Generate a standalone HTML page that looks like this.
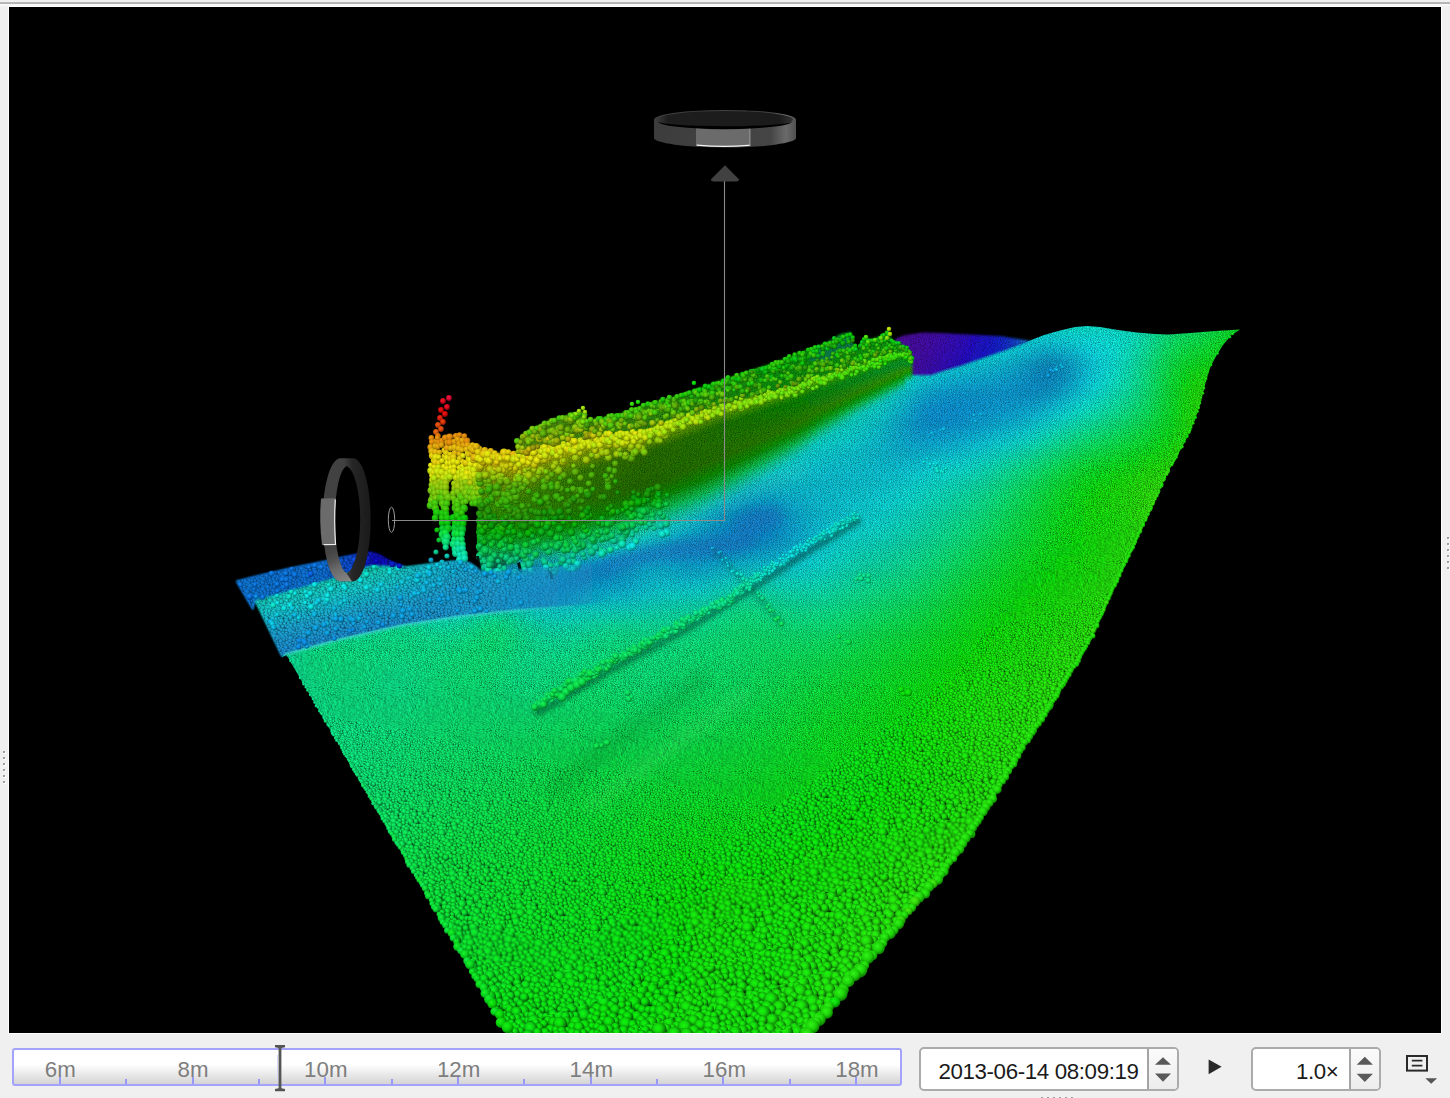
<!DOCTYPE html>
<html lang="en">
<head>
<meta charset="utf-8">
<title>Point cloud viewer</title>
<style>
html,body{margin:0;padding:0;}
body{width:1450px;height:1098px;overflow:hidden;background:#f0f0f0;position:relative;font-family:"Liberation Sans",sans-serif;}
.abs{position:absolute;}
#topline{left:0;top:2px;width:1450px;height:2px;background:linear-gradient(#bcbcbc,#b0b0b0);}
#toplite{left:0;top:4px;width:1450px;height:2px;background:#f8f8f8;}
#frame{left:8px;top:6px;width:1434px;height:1028px;background:#fff;}
#view{left:9px;top:7px;width:1432px;height:1026px;background:#000;overflow:hidden;}
#view svg{display:block;}
.grip i{position:absolute;width:2px;height:2px;background:#a0a0a0;box-shadow:1px 1px 0 #fff;}
#tl{left:12px;top:1048px;width:886px;height:34px;border:2px solid #a3a3fb;border-radius:3px;background:linear-gradient(#fff 0%,#fff 42%,#d4d4d4 100%);}
#tl span{position:absolute;top:7.5px;width:80px;margin-left:-40px;text-align:center;font-size:22.3px;line-height:24px;color:#7e7e7e;}
#tl b{position:absolute;bottom:0;width:2px;background:#9898f6;}
#tl b.M{height:7px;}
#tl b.m{height:5px;}
.spin{background:#fff;border:2px solid #ababab;border-radius:5px;box-sizing:border-box;}
.spin .btn{position:absolute;right:0;top:0;bottom:0;background:linear-gradient(#fbfbfb,#ececec);border-left:2px solid #a4a4a4;border-radius:0 3px 3px 0;}
.spin .txt{position:absolute;top:3px;font-size:22.3px;letter-spacing:-.36px;line-height:40px;color:#1a1a1a;white-space:nowrap;}
</style>
</head>
<body>
<div class="abs" id="topline"></div>
<div class="abs" id="toplite"></div>
<div class="abs" id="frame"></div>
<div class="abs" id="view">
<svg width="1432" height="1026" viewBox="9 7 1432 1026">
<defs>
<clipPath id="cSea"><polygon points="282,657 255,600.5 253,610 236,581 260,575 290,568 327,560.5 345,556.5 360,553.5 371,552.3 380,555 388,560 398,564 406,567 424,565 437,562.8 457.6,560.7 470,563 483,572 520,560 600,500 700,440 800,400 880,365 912,372 931,373 960,364 1000,350 1026,342 1044,335 1060,330.5 1075,327 1087,326 1100,327 1118,330 1137,332.5 1155,334 1168,334.4 1190,333 1215,331 1240,329.5 1231,335.5 1223,345 1215,358 1210,368 1205,385 1201,402 1195,420 1185,442 1168,472 1145,522 1127,560 1109,598 1093,635 1074,667 1049,708 1023,748 998,790 971,834 942,874 903,919 861,970 819,1021 809,1034 508,1034 286.5,655"/></clipPath>
<filter id="fBlur" x="-5%" y="-5%" width="110%" height="110%"><feGaussianBlur stdDeviation="9"/></filter>
<filter id="fBlur2" x="-20%" y="-60%" width="140%" height="220%"><feGaussianBlur stdDeviation="6"/></filter>
<linearGradient id="gB" gradientUnits="userSpaceOnUse" x1="337" y1="577" x2="350" y2="634"><stop offset="0" stop-color="#11d6bf"/><stop offset="0.3" stop-color="#16d5db"/><stop offset="0.65" stop-color="#1bafe0"/><stop offset="1" stop-color="#1b98e0"/></linearGradient>
<linearGradient id="gB2" gradientUnits="userSpaceOnUse" x1="385" y1="0" x2="470" y2="0"><stop offset="0" stop-color="#1ba8e0" stop-opacity="0"/><stop offset="1" stop-color="#1ba8e0" stop-opacity="0.85"/></linearGradient>
<linearGradient id="gBm" gradientUnits="userSpaceOnUse" x1="470" y1="0" x2="610" y2="0"><stop offset="0" stop-color="#fff"/><stop offset="1" stop-color="#000"/></linearGradient>
<mask id="mB" maskUnits="userSpaceOnUse" x="200" y="500" width="500" height="200"><rect x="200" y="500" width="500" height="200" fill="url(#gBm)"/></mask>
<linearGradient id="gA" gradientUnits="userSpaceOnUse" x1="236" y1="0" x2="410" y2="0"><stop offset="0" stop-color="#107ce0"/><stop offset="0.5" stop-color="#1075e0"/><stop offset="0.66" stop-color="#0f4ddb"/><stop offset="0.8" stop-color="#0a0acc"/><stop offset="0.92" stop-color="#0a17cc"/><stop offset="1" stop-color="#0f41d6"/></linearGradient>
<linearGradient id="gA2" gradientUnits="userSpaceOnUse" x1="330" y1="556" x2="336" y2="582"><stop offset="0" stop-color="#1030e0" stop-opacity="0"/><stop offset="1" stop-color="#1030e0" stop-opacity="0"/></linearGradient>
<linearGradient id="gP" gradientUnits="userSpaceOnUse" x1="905" y1="334" x2="985" y2="372"><stop offset="0" stop-color="#5309ad"/><stop offset="0.3" stop-color="#4b09bd"/><stop offset="0.55" stop-color="#3a0dd1"/><stop offset="0.8" stop-color="#2312e0"/><stop offset="1" stop-color="#171ee6"/></linearGradient>
<linearGradient id="gP2" gradientUnits="userSpaceOnUse" x1="985" y1="0" x2="1032" y2="0"><stop offset="0" stop-color="#1616d9" stop-opacity="0"/><stop offset="0.6" stop-color="#1653e0" stop-opacity="0.7"/><stop offset="1" stop-color="#23a8eb" stop-opacity="1"/></linearGradient>
<filter id="fSoft" x="-5%" y="-5%" width="110%" height="110%"><feGaussianBlur stdDeviation="0.8"/></filter>
<linearGradient id="h0" gradientUnits="userSpaceOnUse" x1="482.669" y1="449.801" x2="451.806" y2="572.044"><stop offset="0" stop-color="#dbb507"/><stop offset="0.0816437" stop-color="#d1b406"/><stop offset="0.18143" stop-color="#aaad05"/><stop offset="0.4" stop-color="#46a805"/><stop offset="0.5" stop-color="#35a505"/><stop offset="0.64" stop-color="#0db007"/><stop offset="0.76" stop-color="#0dd14e" stop-opacity="0.92"/><stop offset="0.87" stop-color="#12e095" stop-opacity="0.55"/><stop offset="1" stop-color="#17e6d8" stop-opacity="0"/></linearGradient>
<linearGradient id="h1" gradientUnits="userSpaceOnUse" x1="490.008" y1="452.001" x2="468.171" y2="575.556"><stop offset="0" stop-color="#dbba07"/><stop offset="0.0804427" stop-color="#d1b806"/><stop offset="0.178762" stop-color="#a6ad05"/><stop offset="0.4" stop-color="#45a505"/><stop offset="0.5" stop-color="#34a205"/><stop offset="0.64" stop-color="#0dae07"/><stop offset="0.76" stop-color="#0dd14e" stop-opacity="0.92"/><stop offset="0.87" stop-color="#12e095" stop-opacity="0.55"/><stop offset="1" stop-color="#17e6d8" stop-opacity="0"/></linearGradient>
<linearGradient id="h2" gradientUnits="userSpaceOnUse" x1="497.347" y1="452.648" x2="485.919" y2="577.838"><stop offset="0" stop-color="#dbbf07"/><stop offset="0.0782886" stop-color="#d1bd06"/><stop offset="0.173975" stop-color="#a2ad05"/><stop offset="0.4" stop-color="#44a205"/><stop offset="0.5" stop-color="#339f05"/><stop offset="0.64" stop-color="#0cad07"/><stop offset="0.76" stop-color="#0dd14e" stop-opacity="0.92"/><stop offset="0.87" stop-color="#12e095" stop-opacity="0.55"/><stop offset="1" stop-color="#17e6d8" stop-opacity="0"/></linearGradient>
<linearGradient id="h3" gradientUnits="userSpaceOnUse" x1="504.686" y1="453.296" x2="501.616" y2="578.272"><stop offset="0" stop-color="#dbc307"/><stop offset="0.0760939" stop-color="#d1c106"/><stop offset="0.169098" stop-color="#9fad05"/><stop offset="0.388924" stop-color="#429f05"/><stop offset="0.5" stop-color="#329d05"/><stop offset="0.64" stop-color="#0cab07"/><stop offset="0.76" stop-color="#0dd14e" stop-opacity="0.92"/><stop offset="0.87" stop-color="#12e095" stop-opacity="0.55"/><stop offset="1" stop-color="#17e6d8" stop-opacity="0"/></linearGradient>
<linearGradient id="h4" gradientUnits="userSpaceOnUse" x1="512.025" y1="453.943" x2="516.49" y2="577.653"><stop offset="0" stop-color="#dbc807"/><stop offset="0.0738573" stop-color="#d1c506"/><stop offset="0.164127" stop-color="#9bad05"/><stop offset="0.377493" stop-color="#419c05"/><stop offset="0.5" stop-color="#319a05"/><stop offset="0.64" stop-color="#0caa07"/><stop offset="0.76" stop-color="#0dd14e" stop-opacity="0.92"/><stop offset="0.87" stop-color="#12e095" stop-opacity="0.55"/><stop offset="1" stop-color="#17e6d8" stop-opacity="0"/></linearGradient>
<linearGradient id="h5" gradientUnits="userSpaceOnUse" x1="519.364" y1="454.591" x2="528.649" y2="576.573"><stop offset="0" stop-color="#dbcd07"/><stop offset="0.0715776" stop-color="#d1ca06"/><stop offset="0.159061" stop-color="#97ad05"/><stop offset="0.365841" stop-color="#409905"/><stop offset="0.5" stop-color="#309705"/><stop offset="0.64" stop-color="#0ca807"/><stop offset="0.76" stop-color="#0dd14e" stop-opacity="0.92"/><stop offset="0.87" stop-color="#12e095" stop-opacity="0.55"/><stop offset="1" stop-color="#17e6d8" stop-opacity="0"/></linearGradient>
<linearGradient id="h6" gradientUnits="userSpaceOnUse" x1="526.703" y1="453.97" x2="537.523" y2="575.85"><stop offset="0" stop-color="#dbcf07"/><stop offset="0.0685022" stop-color="#d1cc06"/><stop offset="0.152227" stop-color="#96ad05"/><stop offset="0.350122" stop-color="#3f9705"/><stop offset="0.5" stop-color="#309504"/><stop offset="0.64" stop-color="#0ca707"/><stop offset="0.76" stop-color="#0dd14e" stop-opacity="0.92"/><stop offset="0.87" stop-color="#12e095" stop-opacity="0.55"/><stop offset="1" stop-color="#17e6d8" stop-opacity="0"/></linearGradient>
<linearGradient id="h7" gradientUnits="userSpaceOnUse" x1="534.042" y1="451.174" x2="546.368" y2="575.121"><stop offset="0" stop-color="#dbd107"/><stop offset="0.0642942" stop-color="#d1ce06"/><stop offset="0.142876" stop-color="#94ad05"/><stop offset="0.328615" stop-color="#3e9504"/><stop offset="0.5" stop-color="#2f9304"/><stop offset="0.64" stop-color="#0ca707"/><stop offset="0.76" stop-color="#0dd14e" stop-opacity="0.92"/><stop offset="0.87" stop-color="#12e095" stop-opacity="0.55"/><stop offset="1" stop-color="#17e6d8" stop-opacity="0"/></linearGradient>
<linearGradient id="h8" gradientUnits="userSpaceOnUse" x1="541.381" y1="448.379" x2="557.112" y2="573.913"><stop offset="0" stop-color="#dbd307"/><stop offset="0.0602402" stop-color="#d1d006"/><stop offset="0.133867" stop-color="#92ad05"/><stop offset="0.307894" stop-color="#3e9404"/><stop offset="0.5" stop-color="#2f9104"/><stop offset="0.64" stop-color="#0ca607"/><stop offset="0.76" stop-color="#0dd14e" stop-opacity="0.92"/><stop offset="0.87" stop-color="#12e095" stop-opacity="0.55"/><stop offset="1" stop-color="#17e6d8" stop-opacity="0"/></linearGradient>
<linearGradient id="h9" gradientUnits="userSpaceOnUse" x1="548.72" y1="446.752" x2="570.03" y2="571.789"><stop offset="0" stop-color="#dbd507"/><stop offset="0.0568437" stop-color="#d1d106"/><stop offset="0.126319" stop-color="#91ad05"/><stop offset="0.290534" stop-color="#3d9204"/><stop offset="0.5" stop-color="#2e8f04"/><stop offset="0.64" stop-color="#0ca507"/><stop offset="0.76" stop-color="#0dd14e" stop-opacity="0.92"/><stop offset="0.87" stop-color="#12e095" stop-opacity="0.55"/><stop offset="1" stop-color="#17e6d8" stop-opacity="0"/></linearGradient>
<linearGradient id="h10" gradientUnits="userSpaceOnUse" x1="556.059" y1="446.263" x2="578.821" y2="570.797"><stop offset="0" stop-color="#dbd707"/><stop offset="0.0539809" stop-color="#cfd106"/><stop offset="0.119958" stop-color="#8fad05"/><stop offset="0.275902" stop-color="#3c9004"/><stop offset="0.5" stop-color="#2d8d04"/><stop offset="0.64" stop-color="#0ca407"/><stop offset="0.76" stop-color="#0dd14e" stop-opacity="0.92"/><stop offset="0.87" stop-color="#12e095" stop-opacity="0.55"/><stop offset="1" stop-color="#17e6d8" stop-opacity="0"/></linearGradient>
<linearGradient id="h11" gradientUnits="userSpaceOnUse" x1="563.398" y1="445.176" x2="587.554" y2="569.812"><stop offset="0" stop-color="#dbd907"/><stop offset="0.051458" stop-color="#cdd106"/><stop offset="0.114351" stop-color="#8ead05"/><stop offset="0.263008" stop-color="#3b8e04"/><stop offset="0.5" stop-color="#2d8b04"/><stop offset="0.64" stop-color="#0ca307"/><stop offset="0.76" stop-color="#0dd14e" stop-opacity="0.92"/><stop offset="0.87" stop-color="#12e095" stop-opacity="0.55"/><stop offset="1" stop-color="#17e6d8" stop-opacity="0"/></linearGradient>
<linearGradient id="h12" gradientUnits="userSpaceOnUse" x1="570.737" y1="443.397" x2="596.038" y2="567.202"><stop offset="0" stop-color="#dbdb07"/><stop offset="0.049994" stop-color="#cbd106"/><stop offset="0.111098" stop-color="#8cad05"/><stop offset="0.255525" stop-color="#3b8c04"/><stop offset="0.5" stop-color="#2c8a04"/><stop offset="0.64" stop-color="#0ca206"/><stop offset="0.76" stop-color="#0dd14e" stop-opacity="0.92"/><stop offset="0.87" stop-color="#12e095" stop-opacity="0.55"/><stop offset="1" stop-color="#17e6d8" stop-opacity="0"/></linearGradient>
<linearGradient id="h13" gradientUnits="userSpaceOnUse" x1="578.076" y1="441.618" x2="606.178" y2="563.3"><stop offset="0" stop-color="#dadb07"/><stop offset="0.0486973" stop-color="#c9d106"/><stop offset="0.108216" stop-color="#8bad05"/><stop offset="0.248897" stop-color="#3a8a04"/><stop offset="0.5" stop-color="#2c8804"/><stop offset="0.64" stop-color="#0ca106"/><stop offset="0.76" stop-color="#0dd14e" stop-opacity="0.92"/><stop offset="0.87" stop-color="#12e095" stop-opacity="0.55"/><stop offset="1" stop-color="#17e6d8" stop-opacity="0"/></linearGradient>
<linearGradient id="h14" gradientUnits="userSpaceOnUse" x1="585.415" y1="439.839" x2="616.495" y2="559.107"><stop offset="0" stop-color="#d8db07"/><stop offset="0.0473843" stop-color="#c7d106"/><stop offset="0.105298" stop-color="#89ad05"/><stop offset="0.242186" stop-color="#398804"/><stop offset="0.5" stop-color="#2b8604"/><stop offset="0.64" stop-color="#0ca006"/><stop offset="0.76" stop-color="#0dd14e" stop-opacity="0.92"/><stop offset="0.87" stop-color="#12e095" stop-opacity="0.55"/><stop offset="1" stop-color="#17e6d8" stop-opacity="0"/></linearGradient>
<linearGradient id="h15" gradientUnits="userSpaceOnUse" x1="592.754" y1="438.06" x2="625.059" y2="555.756"><stop offset="0" stop-color="#d6db07"/><stop offset="0.0460545" stop-color="#c5d106"/><stop offset="0.102343" stop-color="#88ad05"/><stop offset="0.23539" stop-color="#388604"/><stop offset="0.5" stop-color="#2a8404"/><stop offset="0.64" stop-color="#0b9f06"/><stop offset="0.76" stop-color="#0dd14e" stop-opacity="0.92"/><stop offset="0.87" stop-color="#12e095" stop-opacity="0.55"/><stop offset="1" stop-color="#17e6d8" stop-opacity="0"/></linearGradient>
<linearGradient id="h16" gradientUnits="userSpaceOnUse" x1="600.093" y1="437.007" x2="632.071" y2="553.241"><stop offset="0" stop-color="#d4db07"/><stop offset="0.0449676" stop-color="#c4d106"/><stop offset="0.0999279" stop-color="#86ad05"/><stop offset="0.229834" stop-color="#378504"/><stop offset="0.5" stop-color="#2a8204"/><stop offset="0.64" stop-color="#0b9e06"/><stop offset="0.76" stop-color="#0dd14e" stop-opacity="0.92"/><stop offset="0.87" stop-color="#12e095" stop-opacity="0.55"/><stop offset="1" stop-color="#17e6d8" stop-opacity="0"/></linearGradient>
<linearGradient id="h17" gradientUnits="userSpaceOnUse" x1="607.432" y1="435.979" x2="639.062" y2="550.685"><stop offset="0" stop-color="#d2db07"/><stop offset="0.0438796" stop-color="#c1d106"/><stop offset="0.0975103" stop-color="#84ad05"/><stop offset="0.224274" stop-color="#378304"/><stop offset="0.5" stop-color="#298004"/><stop offset="0.64" stop-color="#0b9d06"/><stop offset="0.76" stop-color="#0dd14e" stop-opacity="0.92"/><stop offset="0.87" stop-color="#12e095" stop-opacity="0.55"/><stop offset="1" stop-color="#17e6d8" stop-opacity="0"/></linearGradient>
<linearGradient id="h18" gradientUnits="userSpaceOnUse" x1="614.771" y1="434.952" x2="645.855" y2="547.417"><stop offset="0" stop-color="#cfdb07"/><stop offset="0.0430342" stop-color="#bfd106"/><stop offset="0.0956315" stop-color="#82ad05"/><stop offset="0.219953" stop-color="#368104"/><stop offset="0.5" stop-color="#297e04"/><stop offset="0.64" stop-color="#0b9c06"/><stop offset="0.76" stop-color="#0dd14e" stop-opacity="0.92"/><stop offset="0.87" stop-color="#12e095" stop-opacity="0.55"/><stop offset="1" stop-color="#17e6d8" stop-opacity="0"/></linearGradient>
<linearGradient id="h19" gradientUnits="userSpaceOnUse" x1="622.11" y1="433.925" x2="653.444" y2="543.663"><stop offset="0" stop-color="#ccdb07"/><stop offset="0.0421549" stop-color="#bcd106"/><stop offset="0.0936776" stop-color="#80ad05"/><stop offset="0.215459" stop-color="#357f04"/><stop offset="0.5" stop-color="#287c04"/><stop offset="0.64" stop-color="#0b9b06"/><stop offset="0.76" stop-color="#0dd14e" stop-opacity="0.92"/><stop offset="0.87" stop-color="#12e095" stop-opacity="0.55"/><stop offset="1" stop-color="#17e6d8" stop-opacity="0"/></linearGradient>
<linearGradient id="h20" gradientUnits="userSpaceOnUse" x1="629.449" y1="432.897" x2="661.583" y2="539.527"><stop offset="0" stop-color="#cadb07"/><stop offset="0.0412398" stop-color="#bad106"/><stop offset="0.0916441" stop-color="#7ead05"/><stop offset="0.210781" stop-color="#327d04"/><stop offset="0.5" stop-color="#277b04"/><stop offset="0.64" stop-color="#0b9a06"/><stop offset="0.76" stop-color="#0dd14e" stop-opacity="0.92"/><stop offset="0.87" stop-color="#12e095" stop-opacity="0.55"/><stop offset="1" stop-color="#17e6d8" stop-opacity="0"/></linearGradient>
<linearGradient id="h21" gradientUnits="userSpaceOnUse" x1="636.788" y1="431.87" x2="669.173" y2="535.712"><stop offset="0" stop-color="#c7db07"/><stop offset="0.0402866" stop-color="#b7d106"/><stop offset="0.0895258" stop-color="#7cad05"/><stop offset="0.205909" stop-color="#307b04"/><stop offset="0.5" stop-color="#277904"/><stop offset="0.64" stop-color="#0b9906"/><stop offset="0.76" stop-color="#0dd14e" stop-opacity="0.92"/><stop offset="0.87" stop-color="#12e095" stop-opacity="0.55"/><stop offset="1" stop-color="#17e6d8" stop-opacity="0"/></linearGradient>
<linearGradient id="h22" gradientUnits="userSpaceOnUse" x1="644.127" y1="430.658" x2="676.548" y2="532.119"><stop offset="0" stop-color="#c5db07"/><stop offset="0.0398799" stop-color="#b5d106"/><stop offset="0.088622" stop-color="#7aad05"/><stop offset="0.203831" stop-color="#2f7b04"/><stop offset="0.5" stop-color="#277804"/><stop offset="0.64" stop-color="#0b9906"/><stop offset="0.76" stop-color="#0dd14e" stop-opacity="0.92"/><stop offset="0.87" stop-color="#12e095" stop-opacity="0.55"/><stop offset="1" stop-color="#17e6d8" stop-opacity="0"/></linearGradient>
<linearGradient id="h23" gradientUnits="userSpaceOnUse" x1="651.466" y1="428.435" x2="684.307" y2="528.758"><stop offset="0" stop-color="#c2db07"/><stop offset="0.0394973" stop-color="#b2d106"/><stop offset="0.0877718" stop-color="#78ad05"/><stop offset="0.201875" stop-color="#2d7c04"/><stop offset="0.5" stop-color="#277904"/><stop offset="0.64" stop-color="#0b9a06"/><stop offset="0.76" stop-color="#0dd14e" stop-opacity="0.92"/><stop offset="0.87" stop-color="#12e095" stop-opacity="0.55"/><stop offset="1" stop-color="#17e6d8" stop-opacity="0"/></linearGradient>
<linearGradient id="h24" gradientUnits="userSpaceOnUse" x1="658.805" y1="426.211" x2="692.213" y2="525.272"><stop offset="0" stop-color="#bfdb07"/><stop offset="0.0391095" stop-color="#b0d106"/><stop offset="0.08691" stop-color="#76ad05"/><stop offset="0.199893" stop-color="#2c7d04"/><stop offset="0.5" stop-color="#277a04"/><stop offset="0.64" stop-color="#0b9a06"/><stop offset="0.76" stop-color="#0dd14e" stop-opacity="0.92"/><stop offset="0.87" stop-color="#12e095" stop-opacity="0.55"/><stop offset="1" stop-color="#17e6d8" stop-opacity="0"/></linearGradient>
<linearGradient id="h25" gradientUnits="userSpaceOnUse" x1="666.144" y1="423.987" x2="700.094" y2="521.784"><stop offset="0" stop-color="#bddb07"/><stop offset="0.0387164" stop-color="#add106"/><stop offset="0.0860365" stop-color="#74ad05"/><stop offset="0.197884" stop-color="#2b7e04"/><stop offset="0.5" stop-color="#287b04"/><stop offset="0.64" stop-color="#0b9b06"/><stop offset="0.76" stop-color="#0dd14e" stop-opacity="0.92"/><stop offset="0.87" stop-color="#12e095" stop-opacity="0.55"/><stop offset="1" stop-color="#17e6d8" stop-opacity="0"/></linearGradient>
<linearGradient id="h26" gradientUnits="userSpaceOnUse" x1="673.483" y1="421.763" x2="707.518" y2="518.643"><stop offset="0" stop-color="#badb07"/><stop offset="0.038318" stop-color="#abd106"/><stop offset="0.085151" stop-color="#72ad05"/><stop offset="0.195847" stop-color="#2a7f04"/><stop offset="0.5" stop-color="#287c04"/><stop offset="0.64" stop-color="#0b9b06"/><stop offset="0.76" stop-color="#0dd14e" stop-opacity="0.92"/><stop offset="0.87" stop-color="#12e095" stop-opacity="0.55"/><stop offset="1" stop-color="#17e6d8" stop-opacity="0"/></linearGradient>
<linearGradient id="h27" gradientUnits="userSpaceOnUse" x1="680.822" y1="419.393" x2="715.415" y2="515.13"><stop offset="0" stop-color="#b8db07"/><stop offset="0.0378628" stop-color="#a8d106"/><stop offset="0.0841396" stop-color="#6fad05"/><stop offset="0.193521" stop-color="#298004"/><stop offset="0.5" stop-color="#287d04"/><stop offset="0.64" stop-color="#0b9c06"/><stop offset="0.76" stop-color="#0dd14e" stop-opacity="0.92"/><stop offset="0.87" stop-color="#12e095" stop-opacity="0.55"/><stop offset="1" stop-color="#17e6d8" stop-opacity="0"/></linearGradient>
<linearGradient id="h28" gradientUnits="userSpaceOnUse" x1="688.161" y1="416.946" x2="723.46" y2="511.479"><stop offset="0" stop-color="#b5db07"/><stop offset="0.0373761" stop-color="#a6d106"/><stop offset="0.0830581" stop-color="#6dad05"/><stop offset="0.191034" stop-color="#288104"/><stop offset="0.5" stop-color="#287e04"/><stop offset="0.64" stop-color="#0b9c06"/><stop offset="0.76" stop-color="#0dd14e" stop-opacity="0.92"/><stop offset="0.87" stop-color="#12e095" stop-opacity="0.55"/><stop offset="1" stop-color="#17e6d8" stop-opacity="0"/></linearGradient>
<linearGradient id="h29" gradientUnits="userSpaceOnUse" x1="695.5" y1="414.5" x2="731.473" y2="507.824"><stop offset="0" stop-color="#b2db07"/><stop offset="0.0368847" stop-color="#a3d106"/><stop offset="0.0819659" stop-color="#6bad05"/><stop offset="0.188522" stop-color="#268104"/><stop offset="0.5" stop-color="#297f04"/><stop offset="0.64" stop-color="#0b9d06"/><stop offset="0.76" stop-color="#0dd14e" stop-opacity="0.92"/><stop offset="0.87" stop-color="#12e095" stop-opacity="0.55"/><stop offset="1" stop-color="#17e6d8" stop-opacity="0"/></linearGradient>
<linearGradient id="h30" gradientUnits="userSpaceOnUse" x1="702.839" y1="412.054" x2="739.284" y2="503.874"><stop offset="0" stop-color="#afdb07"/><stop offset="0.0365187" stop-color="#a0d106"/><stop offset="0.0811526" stop-color="#69ad05"/><stop offset="0.186651" stop-color="#258204"/><stop offset="0.5" stop-color="#298004"/><stop offset="0.64" stop-color="#0b9d06"/><stop offset="0.76" stop-color="#0dd14e" stop-opacity="0.92"/><stop offset="0.87" stop-color="#12e095" stop-opacity="0.55"/><stop offset="1" stop-color="#17e6d8" stop-opacity="0"/></linearGradient>
<linearGradient id="h31" gradientUnits="userSpaceOnUse" x1="710.178" y1="409.607" x2="746.856" y2="499.405"><stop offset="0" stop-color="#abdb07"/><stop offset="0.0363545" stop-color="#9cd106"/><stop offset="0.0807877" stop-color="#66ad05"/><stop offset="0.185812" stop-color="#228304"/><stop offset="0.5" stop-color="#298104"/><stop offset="0.64" stop-color="#0b9d06"/><stop offset="0.76" stop-color="#0dd14e" stop-opacity="0.92"/><stop offset="0.87" stop-color="#12e095" stop-opacity="0.55"/><stop offset="1" stop-color="#17e6d8" stop-opacity="0"/></linearGradient>
<linearGradient id="h32" gradientUnits="userSpaceOnUse" x1="717.517" y1="407.161" x2="754.387" y2="494.948"><stop offset="0" stop-color="#a7db07"/><stop offset="0.0361855" stop-color="#98d106"/><stop offset="0.0804122" stop-color="#62ad05"/><stop offset="0.184948" stop-color="#208404"/><stop offset="0.5" stop-color="#2a8204"/><stop offset="0.64" stop-color="#0b9e06"/><stop offset="0.76" stop-color="#0dd14e" stop-opacity="0.92"/><stop offset="0.87" stop-color="#12e095" stop-opacity="0.55"/><stop offset="1" stop-color="#17e6d8" stop-opacity="0"/></linearGradient>
<linearGradient id="h33" gradientUnits="userSpaceOnUse" x1="724.856" y1="404.775" x2="761.855" y2="490.514"><stop offset="0" stop-color="#a3db07"/><stop offset="0.0360327" stop-color="#94d106"/><stop offset="0.0800727" stop-color="#5fad05"/><stop offset="0.184167" stop-color="#1e8504"/><stop offset="0.5" stop-color="#2a8304"/><stop offset="0.64" stop-color="#0b9e06"/><stop offset="0.76" stop-color="#0dd14e" stop-opacity="0.92"/><stop offset="0.87" stop-color="#12e095" stop-opacity="0.55"/><stop offset="1" stop-color="#17e6d8" stop-opacity="0"/></linearGradient>
<linearGradient id="h34" gradientUnits="userSpaceOnUse" x1="732.195" y1="402.843" x2="768.322" y2="486.196"><stop offset="0" stop-color="#9edb07"/><stop offset="0.0362834" stop-color="#90d106"/><stop offset="0.0806297" stop-color="#5cad05"/><stop offset="0.185448" stop-color="#1c8604"/><stop offset="0.5" stop-color="#2a8404"/><stop offset="0.64" stop-color="#0b9f06"/><stop offset="0.76" stop-color="#0dd14e" stop-opacity="0.92"/><stop offset="0.87" stop-color="#12e095" stop-opacity="0.55"/><stop offset="1" stop-color="#17e6d8" stop-opacity="0"/></linearGradient>
<linearGradient id="h35" gradientUnits="userSpaceOnUse" x1="739.534" y1="400.912" x2="774.767" y2="481.885"><stop offset="0" stop-color="#9adb07"/><stop offset="0.0365532" stop-color="#8cd106"/><stop offset="0.0812292" stop-color="#58ad05"/><stop offset="0.186827" stop-color="#198704"/><stop offset="0.5" stop-color="#2b8504"/><stop offset="0.64" stop-color="#0b9f06"/><stop offset="0.76" stop-color="#0dd14e" stop-opacity="0.92"/><stop offset="0.87" stop-color="#12e095" stop-opacity="0.55"/><stop offset="1" stop-color="#17e6d8" stop-opacity="0"/></linearGradient>
<linearGradient id="h36" gradientUnits="userSpaceOnUse" x1="746.873" y1="398.981" x2="781.207" y2="477.58"><stop offset="0" stop-color="#96db07"/><stop offset="0.0368385" stop-color="#88d106"/><stop offset="0.0818634" stop-color="#55ad05"/><stop offset="0.188286" stop-color="#178804"/><stop offset="0.5" stop-color="#2b8504"/><stop offset="0.64" stop-color="#0ca006"/><stop offset="0.76" stop-color="#0dd14e" stop-opacity="0.92"/><stop offset="0.87" stop-color="#12e095" stop-opacity="0.55"/><stop offset="1" stop-color="#17e6d8" stop-opacity="0"/></linearGradient>
<linearGradient id="h37" gradientUnits="userSpaceOnUse" x1="754.212" y1="397.05" x2="787.626" y2="473.295"><stop offset="0" stop-color="#92db07"/><stop offset="0.0371409" stop-color="#84d106"/><stop offset="0.0825353" stop-color="#52ad05"/><stop offset="0.189831" stop-color="#148904"/><stop offset="0.5" stop-color="#2b8604"/><stop offset="0.64" stop-color="#0ca006"/><stop offset="0.76" stop-color="#0dd14e" stop-opacity="0.92"/><stop offset="0.87" stop-color="#12e095" stop-opacity="0.55"/><stop offset="1" stop-color="#17e6d8" stop-opacity="0"/></linearGradient>
<linearGradient id="h38" gradientUnits="userSpaceOnUse" x1="761.551" y1="395.118" x2="793.97" y2="469.093"><stop offset="0" stop-color="#8edb07"/><stop offset="0.0374618" stop-color="#80d106"/><stop offset="0.0832485" stop-color="#4fad05"/><stop offset="0.191472" stop-color="#128a04"/><stop offset="0.5" stop-color="#2c8804"/><stop offset="0.64" stop-color="#0ca106"/><stop offset="0.76" stop-color="#0dd14e" stop-opacity="0.92"/><stop offset="0.87" stop-color="#12e095" stop-opacity="0.55"/><stop offset="1" stop-color="#17e6d8" stop-opacity="0"/></linearGradient>
<linearGradient id="h39" gradientUnits="userSpaceOnUse" x1="768.89" y1="393.187" x2="800.314" y2="464.891"><stop offset="0" stop-color="#8adb07"/><stop offset="0.0378031" stop-color="#7dd106"/><stop offset="0.0840069" stop-color="#4bad05"/><stop offset="0.193216" stop-color="#0f8c04"/><stop offset="0.5" stop-color="#2c8904"/><stop offset="0.64" stop-color="#0ca206"/><stop offset="0.76" stop-color="#0dd14e" stop-opacity="0.92"/><stop offset="0.87" stop-color="#12e095" stop-opacity="0.55"/><stop offset="1" stop-color="#17e6d8" stop-opacity="0"/></linearGradient>
<linearGradient id="h40" gradientUnits="userSpaceOnUse" x1="776.229" y1="391.256" x2="806.756" y2="460.581"><stop offset="0" stop-color="#86db07"/><stop offset="0.0381667" stop-color="#79d106"/><stop offset="0.0848149" stop-color="#48ad05"/><stop offset="0.195074" stop-color="#0d8e04"/><stop offset="0.5" stop-color="#2d8b04"/><stop offset="0.64" stop-color="#0ca307"/><stop offset="0.76" stop-color="#0dd14e" stop-opacity="0.92"/><stop offset="0.87" stop-color="#12e095" stop-opacity="0.55"/><stop offset="1" stop-color="#17e6d8" stop-opacity="0"/></linearGradient>
<linearGradient id="h41" gradientUnits="userSpaceOnUse" x1="783.568" y1="389.324" x2="813.656" y2="455.758"><stop offset="0" stop-color="#81db07"/><stop offset="0.0385549" stop-color="#75d106"/><stop offset="0.0856775" stop-color="#45ad05"/><stop offset="0.197058" stop-color="#0a8f04"/><stop offset="0.5" stop-color="#2d8d04"/><stop offset="0.64" stop-color="#0ca307"/><stop offset="0.76" stop-color="#0dd14e" stop-opacity="0.92"/><stop offset="0.87" stop-color="#12e095" stop-opacity="0.55"/><stop offset="1" stop-color="#17e6d8" stop-opacity="0"/></linearGradient>
<linearGradient id="h42" gradientUnits="userSpaceOnUse" x1="790.907" y1="387.393" x2="820.501" y2="450.972"><stop offset="0" stop-color="#7ddb07"/><stop offset="0.0389702" stop-color="#71d106"/><stop offset="0.0866005" stop-color="#41ad05"/><stop offset="0.199181" stop-color="#089104"/><stop offset="0.5" stop-color="#2e8e04"/><stop offset="0.64" stop-color="#0ca407"/><stop offset="0.76" stop-color="#0dd14e" stop-opacity="0.92"/><stop offset="0.87" stop-color="#12e095" stop-opacity="0.55"/><stop offset="1" stop-color="#17e6d8" stop-opacity="0"/></linearGradient>
<linearGradient id="h43" gradientUnits="userSpaceOnUse" x1="798.246" y1="385.462" x2="827.14" y2="446.411"><stop offset="0" stop-color="#79db07"/><stop offset="0.0394157" stop-color="#6dd106"/><stop offset="0.0875905" stop-color="#3ead05"/><stop offset="0.201458" stop-color="#059304"/><stop offset="0.5" stop-color="#2e9004"/><stop offset="0.64" stop-color="#0ca507"/><stop offset="0.76" stop-color="#0dd14e" stop-opacity="0.92"/><stop offset="0.87" stop-color="#12e095" stop-opacity="0.55"/><stop offset="1" stop-color="#17e6d8" stop-opacity="0"/></linearGradient>
<linearGradient id="h44" gradientUnits="userSpaceOnUse" x1="805.585" y1="382.872" x2="833.367" y2="441.517"><stop offset="0" stop-color="#75db07"/><stop offset="0.0401098" stop-color="#69d106"/><stop offset="0.0891328" stop-color="#3bad05"/><stop offset="0.205006" stop-color="#049407"/><stop offset="0.5" stop-color="#2f9204"/><stop offset="0.64" stop-color="#0ca607"/><stop offset="0.76" stop-color="#0dd14e" stop-opacity="0.92"/><stop offset="0.87" stop-color="#12e095" stop-opacity="0.55"/><stop offset="1" stop-color="#17e6d8" stop-opacity="0"/></linearGradient>
<linearGradient id="h45" gradientUnits="userSpaceOnUse" x1="812.924" y1="380.077" x2="839.578" y2="436.382"><stop offset="0" stop-color="#71db07"/><stop offset="0.040932" stop-color="#65d106"/><stop offset="0.09096" stop-color="#37ad05"/><stop offset="0.209208" stop-color="#05960a"/><stop offset="0.5" stop-color="#2f9404"/><stop offset="0.64" stop-color="#0ca707"/><stop offset="0.76" stop-color="#0dd14e" stop-opacity="0.92"/><stop offset="0.87" stop-color="#12e095" stop-opacity="0.55"/><stop offset="1" stop-color="#17e6d8" stop-opacity="0"/></linearGradient>
<linearGradient id="h46" gradientUnits="userSpaceOnUse" x1="820.263" y1="377.281" x2="845.79" y2="431.245"><stop offset="0" stop-color="#6ddb07"/><stop offset="0.041826" stop-color="#61d106"/><stop offset="0.0929467" stop-color="#34ad05"/><stop offset="0.213777" stop-color="#05980d"/><stop offset="0.5" stop-color="#309504"/><stop offset="0.64" stop-color="#0ca807"/><stop offset="0.76" stop-color="#0dd14e" stop-opacity="0.92"/><stop offset="0.87" stop-color="#12e095" stop-opacity="0.55"/><stop offset="1" stop-color="#17e6d8" stop-opacity="0"/></linearGradient>
<linearGradient id="h47" gradientUnits="userSpaceOnUse" x1="827.602" y1="374.969" x2="851.931" y2="426.927"><stop offset="0" stop-color="#68db07"/><stop offset="0.0426709" stop-color="#5dd106"/><stop offset="0.0948243" stop-color="#31ad05"/><stop offset="0.218096" stop-color="#059a10"/><stop offset="0.5" stop-color="#309705"/><stop offset="0.64" stop-color="#0ca907"/><stop offset="0.76" stop-color="#0dd14e" stop-opacity="0.92"/><stop offset="0.87" stop-color="#12e095" stop-opacity="0.55"/><stop offset="1" stop-color="#17e6d8" stop-opacity="0"/></linearGradient>
<linearGradient id="h48" gradientUnits="userSpaceOnUse" x1="834.941" y1="372.711" x2="857.827" y2="422.971"><stop offset="0" stop-color="#64db07"/><stop offset="0.0435753" stop-color="#59d106"/><stop offset="0.0968339" stop-color="#2ead05"/><stop offset="0.222718" stop-color="#059b13"/><stop offset="0.5" stop-color="#319905"/><stop offset="0.64" stop-color="#0ca907"/><stop offset="0.76" stop-color="#0dd14e" stop-opacity="0.92"/><stop offset="0.87" stop-color="#12e095" stop-opacity="0.55"/><stop offset="1" stop-color="#17e6d8" stop-opacity="0"/></linearGradient>
<linearGradient id="h49" gradientUnits="userSpaceOnUse" x1="842.28" y1="370.452" x2="863.551" y2="419.18"><stop offset="0" stop-color="#60db07"/><stop offset="0.0445628" stop-color="#55d106"/><stop offset="0.0990284" stop-color="#2aad05"/><stop offset="0.227765" stop-color="#059d16"/><stop offset="0.5" stop-color="#329a05"/><stop offset="0.64" stop-color="#0caa07"/><stop offset="0.76" stop-color="#0dd14e" stop-opacity="0.92"/><stop offset="0.87" stop-color="#12e095" stop-opacity="0.55"/><stop offset="1" stop-color="#17e6d8" stop-opacity="0"/></linearGradient>
<linearGradient id="h50" gradientUnits="userSpaceOnUse" x1="849.619" y1="368.194" x2="869.511" y2="415.105"><stop offset="0" stop-color="#5cdb07"/><stop offset="0.0456455" stop-color="#51d106"/><stop offset="0.101434" stop-color="#27ad05"/><stop offset="0.233299" stop-color="#059f19"/><stop offset="0.5" stop-color="#329c05"/><stop offset="0.64" stop-color="#0cab07"/><stop offset="0.76" stop-color="#0dd14e" stop-opacity="0.92"/><stop offset="0.87" stop-color="#12e095" stop-opacity="0.55"/><stop offset="1" stop-color="#17e6d8" stop-opacity="0"/></linearGradient>
<linearGradient id="h51" gradientUnits="userSpaceOnUse" x1="856.958" y1="365.936" x2="875.705" y2="410.776"><stop offset="0" stop-color="#58db07"/><stop offset="0.0468379" stop-color="#4dd106"/><stop offset="0.104084" stop-color="#24ad05"/><stop offset="0.239394" stop-color="#05a01c"/><stop offset="0.5" stop-color="#339e05"/><stop offset="0.64" stop-color="#0cac07"/><stop offset="0.76" stop-color="#0dd14e" stop-opacity="0.92"/><stop offset="0.87" stop-color="#12e095" stop-opacity="0.55"/><stop offset="1" stop-color="#17e6d8" stop-opacity="0"/></linearGradient>
<linearGradient id="h52" gradientUnits="userSpaceOnUse" x1="864.297" y1="363.601" x2="882.092" y2="406.779"><stop offset="0" stop-color="#54db07"/><stop offset="0.0476788" stop-color="#49d106"/><stop offset="0.105953" stop-color="#20ad05"/><stop offset="0.243692" stop-color="#05a220"/><stop offset="0.5" stop-color="#33a005"/><stop offset="0.64" stop-color="#0cad07"/><stop offset="0.76" stop-color="#0dd14e" stop-opacity="0.92"/><stop offset="0.87" stop-color="#12e095" stop-opacity="0.55"/><stop offset="1" stop-color="#17e6d8" stop-opacity="0"/></linearGradient>
<linearGradient id="h53" gradientUnits="userSpaceOnUse" x1="871.636" y1="361.212" x2="888.616" y2="403.016"><stop offset="0" stop-color="#4fdb07"/><stop offset="0.0482402" stop-color="#45d106"/><stop offset="0.107201" stop-color="#1dad05"/><stop offset="0.246561" stop-color="#05a423"/><stop offset="0.5" stop-color="#34a105"/><stop offset="0.64" stop-color="#0dae07"/><stop offset="0.76" stop-color="#0dd14e" stop-opacity="0.92"/><stop offset="0.87" stop-color="#12e095" stop-opacity="0.55"/><stop offset="1" stop-color="#17e6d8" stop-opacity="0"/></linearGradient>
<linearGradient id="h54" gradientUnits="userSpaceOnUse" x1="878.975" y1="358.822" x2="895.147" y2="399.242"><stop offset="0" stop-color="#4bdb07"/><stop offset="0.048845" stop-color="#41d106"/><stop offset="0.108544" stop-color="#1aad05"/><stop offset="0.249652" stop-color="#05a627"/><stop offset="0.5" stop-color="#34a305"/><stop offset="0.64" stop-color="#0daf07"/><stop offset="0.76" stop-color="#0dd14e" stop-opacity="0.92"/><stop offset="0.87" stop-color="#12e095" stop-opacity="0.55"/><stop offset="1" stop-color="#17e6d8" stop-opacity="0"/></linearGradient>
<linearGradient id="h55" gradientUnits="userSpaceOnUse" x1="886.314" y1="356.433" x2="901.696" y2="395.448"><stop offset="0" stop-color="#47db07"/><stop offset="0.0494984" stop-color="#3dd106"/><stop offset="0.109996" stop-color="#17ad05"/><stop offset="0.252992" stop-color="#05a72a"/><stop offset="0.5" stop-color="#35a505"/><stop offset="0.64" stop-color="#0daf07"/><stop offset="0.76" stop-color="#0dd14e" stop-opacity="0.92"/><stop offset="0.87" stop-color="#12e095" stop-opacity="0.55"/><stop offset="1" stop-color="#17e6d8" stop-opacity="0"/></linearGradient>
<linearGradient id="h56" gradientUnits="userSpaceOnUse" x1="893.653" y1="354.043" x2="906.889" y2="392.792"><stop offset="0" stop-color="#43db07"/><stop offset="0.0502064" stop-color="#39d106"/><stop offset="0.11157" stop-color="#13ad05"/><stop offset="0.25661" stop-color="#05a92e"/><stop offset="0.5" stop-color="#35a705"/><stop offset="0.64" stop-color="#0db007"/><stop offset="0.76" stop-color="#0dd14e" stop-opacity="0.92"/><stop offset="0.87" stop-color="#12e095" stop-opacity="0.55"/><stop offset="1" stop-color="#17e6d8" stop-opacity="0"/></linearGradient>
<linearGradient id="h57" gradientUnits="userSpaceOnUse" x1="900.992" y1="351.654" x2="911.873" y2="390.028"><stop offset="0" stop-color="#3fdb07"/><stop offset="0.0509762" stop-color="#36d106"/><stop offset="0.113281" stop-color="#10ad05"/><stop offset="0.260545" stop-color="#05ab31"/><stop offset="0.5" stop-color="#36a805"/><stop offset="0.64" stop-color="#0db107"/><stop offset="0.76" stop-color="#0dd14e" stop-opacity="0.92"/><stop offset="0.87" stop-color="#12e095" stop-opacity="0.55"/><stop offset="1" stop-color="#17e6d8" stop-opacity="0"/></linearGradient>
<linearGradient id="h58" gradientUnits="userSpaceOnUse" x1="908.331" y1="353.961" x2="914.838" y2="382.818"><stop offset="0" stop-color="#3fdb07"/><stop offset="0.0677502" stop-color="#36d106"/><stop offset="0.150556" stop-color="#10ad05"/><stop offset="0.346279" stop-color="#05ad32"/><stop offset="0.5" stop-color="#37aa05"/><stop offset="0.64" stop-color="#0db207"/><stop offset="0.76" stop-color="#0dd14e" stop-opacity="0.92"/><stop offset="0.87" stop-color="#12e095" stop-opacity="0.55"/><stop offset="1" stop-color="#17e6d8" stop-opacity="0"/></linearGradient>
<linearGradient id="gD" gradientUnits="userSpaceOnUse" x1="520" y1="0" x2="912" y2="0"><stop offset="0" stop-color="#5f9908"/><stop offset="0.3" stop-color="#389908"/><stop offset="0.6" stop-color="#129e08"/><stop offset="1" stop-color="#08a813"/></linearGradient>
<radialGradient id="s348_9" cx=".4" cy=".36" r=".68"><stop offset="0" stop-color="#f51845"/><stop offset=".55" stop-color="#cf0830"/><stop offset="1" stop-color="#730017"/></radialGradient>
<radialGradient id="s354_9" cx=".4" cy=".36" r=".68"><stop offset="0" stop-color="#f5182f"/><stop offset=".55" stop-color="#cf081c"/><stop offset="1" stop-color="#73000b"/></radialGradient>
<radialGradient id="s0_9" cx=".4" cy=".36" r=".68"><stop offset="0" stop-color="#f51818"/><stop offset=".55" stop-color="#cf0808"/><stop offset="1" stop-color="#730000"/></radialGradient>
<radialGradient id="s0_9" cx=".4" cy=".36" r=".68"><stop offset="0" stop-color="#f51818"/><stop offset=".55" stop-color="#cf0808"/><stop offset="1" stop-color="#730000"/></radialGradient>
<radialGradient id="s6_9" cx=".4" cy=".36" r=".68"><stop offset="0" stop-color="#f52f18"/><stop offset=".55" stop-color="#cf1c08"/><stop offset="1" stop-color="#730b00"/></radialGradient>
<radialGradient id="s12_9" cx=".4" cy=".36" r=".68"><stop offset="0" stop-color="#f54518"/><stop offset=".55" stop-color="#cf3008"/><stop offset="1" stop-color="#731700"/></radialGradient>
<radialGradient id="s18_9" cx=".4" cy=".36" r=".68"><stop offset="0" stop-color="#f55b18"/><stop offset=".55" stop-color="#cf4408"/><stop offset="1" stop-color="#732200"/></radialGradient>
<radialGradient id="s24_9" cx=".4" cy=".36" r=".68"><stop offset="0" stop-color="#f57118"/><stop offset=".55" stop-color="#cf5808"/><stop offset="1" stop-color="#732e00"/></radialGradient>
<radialGradient id="s30_9" cx=".4" cy=".36" r=".68"><stop offset="0" stop-color="#f58718"/><stop offset=".55" stop-color="#cf6b08"/><stop offset="1" stop-color="#733900"/></radialGradient>
<radialGradient id="s36_9" cx=".4" cy=".36" r=".68"><stop offset="0" stop-color="#f59d18"/><stop offset=".55" stop-color="#cf7f08"/><stop offset="1" stop-color="#734500"/></radialGradient>
<radialGradient id="s42_9" cx=".4" cy=".36" r=".68"><stop offset="0" stop-color="#f5b318"/><stop offset=".55" stop-color="#cf9308"/><stop offset="1" stop-color="#735000"/></radialGradient>
<radialGradient id="s48_9" cx=".4" cy=".36" r=".68"><stop offset="0" stop-color="#f5c918"/><stop offset=".55" stop-color="#cfa708"/><stop offset="1" stop-color="#735c00"/></radialGradient>
<radialGradient id="s54_9" cx=".4" cy=".36" r=".68"><stop offset="0" stop-color="#f5df18"/><stop offset=".55" stop-color="#cfbb08"/><stop offset="1" stop-color="#736700"/></radialGradient>
<radialGradient id="s60_9" cx=".4" cy=".36" r=".68"><stop offset="0" stop-color="#f5f518"/><stop offset=".55" stop-color="#cfcf08"/><stop offset="1" stop-color="#737300"/></radialGradient>
<radialGradient id="s66_9" cx=".4" cy=".36" r=".68"><stop offset="0" stop-color="#dff518"/><stop offset=".55" stop-color="#bbcf08"/><stop offset="1" stop-color="#677300"/></radialGradient>
<radialGradient id="s78_8" cx=".4" cy=".36" r=".68"><stop offset="0" stop-color="#a0db16"/><stop offset=".55" stop-color="#83b807"/><stop offset="1" stop-color="#476600"/></radialGradient>
<radialGradient id="s84_8" cx=".4" cy=".36" r=".68"><stop offset="0" stop-color="#8cdb16"/><stop offset=".55" stop-color="#71b807"/><stop offset="1" stop-color="#3d6600"/></radialGradient>
<radialGradient id="s90_8" cx=".4" cy=".36" r=".68"><stop offset="0" stop-color="#79db16"/><stop offset=".55" stop-color="#5fb807"/><stop offset="1" stop-color="#336600"/></radialGradient>
<radialGradient id="s102_8" cx=".4" cy=".36" r=".68"><stop offset="0" stop-color="#51db16"/><stop offset=".55" stop-color="#3cb807"/><stop offset="1" stop-color="#1f6600"/></radialGradient>
<radialGradient id="s72_9" cx=".4" cy=".36" r=".68"><stop offset="0" stop-color="#c9f518"/><stop offset=".55" stop-color="#a7cf08"/><stop offset="1" stop-color="#5c7300"/></radialGradient>
<radialGradient id="s72_8" cx=".4" cy=".36" r=".68"><stop offset="0" stop-color="#b4db16"/><stop offset=".55" stop-color="#94b807"/><stop offset="1" stop-color="#526600"/></radialGradient>
<radialGradient id="s114_8" cx=".4" cy=".36" r=".68"><stop offset="0" stop-color="#2adb16"/><stop offset=".55" stop-color="#19b807"/><stop offset="1" stop-color="#0a6600"/></radialGradient>
<radialGradient id="s96_8" cx=".4" cy=".36" r=".68"><stop offset="0" stop-color="#65db16"/><stop offset=".55" stop-color="#4eb807"/><stop offset="1" stop-color="#296600"/></radialGradient>
<radialGradient id="s120_8" cx=".4" cy=".36" r=".68"><stop offset="0" stop-color="#16db16"/><stop offset=".55" stop-color="#07b807"/><stop offset="1" stop-color="#006600"/></radialGradient>
<radialGradient id="s132_8" cx=".4" cy=".36" r=".68"><stop offset="0" stop-color="#16db3d"/><stop offset=".55" stop-color="#07b82b"/><stop offset="1" stop-color="#006614"/></radialGradient>
<radialGradient id="s138_9" cx=".4" cy=".36" r=".68"><stop offset="0" stop-color="#18f55b"/><stop offset=".55" stop-color="#08cf44"/><stop offset="1" stop-color="#007322"/></radialGradient>
<radialGradient id="s144_9" cx=".4" cy=".36" r=".68"><stop offset="0" stop-color="#18f571"/><stop offset=".55" stop-color="#08cf58"/><stop offset="1" stop-color="#00732e"/></radialGradient>
<radialGradient id="s126_8" cx=".4" cy=".36" r=".68"><stop offset="0" stop-color="#16db2a"/><stop offset=".55" stop-color="#07b819"/><stop offset="1" stop-color="#00660a"/></radialGradient>
<radialGradient id="s132_9" cx=".4" cy=".36" r=".68"><stop offset="0" stop-color="#18f545"/><stop offset=".55" stop-color="#08cf30"/><stop offset="1" stop-color="#007317"/></radialGradient>
<radialGradient id="s150_9" cx=".4" cy=".36" r=".68"><stop offset="0" stop-color="#18f587"/><stop offset=".55" stop-color="#08cf6b"/><stop offset="1" stop-color="#007339"/></radialGradient>
<radialGradient id="s156_9" cx=".4" cy=".36" r=".68"><stop offset="0" stop-color="#18f59d"/><stop offset=".55" stop-color="#08cf7f"/><stop offset="1" stop-color="#007345"/></radialGradient>
<radialGradient id="s108_8" cx=".4" cy=".36" r=".68"><stop offset="0" stop-color="#3ddb16"/><stop offset=".55" stop-color="#2bb807"/><stop offset="1" stop-color="#146600"/></radialGradient>
<radialGradient id="s162_9" cx=".4" cy=".36" r=".68"><stop offset="0" stop-color="#18f5b3"/><stop offset=".55" stop-color="#08cf93"/><stop offset="1" stop-color="#007350"/></radialGradient>
<radialGradient id="s168_9" cx=".4" cy=".36" r=".68"><stop offset="0" stop-color="#18f5c9"/><stop offset=".55" stop-color="#08cfa7"/><stop offset="1" stop-color="#00735c"/></radialGradient>
<radialGradient id="s66_8" cx=".4" cy=".36" r=".68"><stop offset="0" stop-color="#c8db16"/><stop offset=".55" stop-color="#a6b807"/><stop offset="1" stop-color="#5c6600"/></radialGradient>
<radialGradient id="s102_7" cx=".4" cy=".36" r=".68"><stop offset="0" stop-color="#48c213"/><stop offset=".55" stop-color="#35a106"/><stop offset="1" stop-color="#1b5900"/></radialGradient>
<radialGradient id="s114_6" cx=".4" cy=".36" r=".68"><stop offset="0" stop-color="#20a811"/><stop offset=".55" stop-color="#138a06"/><stop offset="1" stop-color="#084d00"/></radialGradient>
<radialGradient id="s174_9" cx=".4" cy=".36" r=".68"><stop offset="0" stop-color="#18f5df"/><stop offset=".55" stop-color="#08cfbb"/><stop offset="1" stop-color="#007367"/></radialGradient>
<radialGradient id="s156_8" cx=".4" cy=".36" r=".68"><stop offset="0" stop-color="#16db8c"/><stop offset=".55" stop-color="#07b871"/><stop offset="1" stop-color="#00663d"/></radialGradient>
<radialGradient id="s120_6" cx=".4" cy=".36" r=".68"><stop offset="0" stop-color="#11a811"/><stop offset=".55" stop-color="#068a06"/><stop offset="1" stop-color="#004d00"/></radialGradient>
<radialGradient id="s120_7" cx=".4" cy=".36" r=".68"><stop offset="0" stop-color="#13c213"/><stop offset=".55" stop-color="#06a106"/><stop offset="1" stop-color="#005900"/></radialGradient>
<radialGradient id="s150_8" cx=".4" cy=".36" r=".68"><stop offset="0" stop-color="#16db79"/><stop offset=".55" stop-color="#07b85f"/><stop offset="1" stop-color="#006633"/></radialGradient>
<radialGradient id="s108_6" cx=".4" cy=".36" r=".68"><stop offset="0" stop-color="#2fa811"/><stop offset=".55" stop-color="#208a06"/><stop offset="1" stop-color="#0f4d00"/></radialGradient>
<radialGradient id="s144_8" cx=".4" cy=".36" r=".68"><stop offset="0" stop-color="#16db65"/><stop offset=".55" stop-color="#07b84e"/><stop offset="1" stop-color="#006629"/></radialGradient>
<radialGradient id="s102_6" cx=".4" cy=".36" r=".68"><stop offset="0" stop-color="#3ea811"/><stop offset=".55" stop-color="#2d8a06"/><stop offset="1" stop-color="#174d00"/></radialGradient>
<radialGradient id="s96_7" cx=".4" cy=".36" r=".68"><stop offset="0" stop-color="#59c213"/><stop offset=".55" stop-color="#44a106"/><stop offset="1" stop-color="#245900"/></radialGradient>
<radialGradient id="s78_7" cx=".4" cy=".36" r=".68"><stop offset="0" stop-color="#8dc213"/><stop offset=".55" stop-color="#72a106"/><stop offset="1" stop-color="#3e5900"/></radialGradient>
<radialGradient id="s60_8" cx=".4" cy=".36" r=".68"><stop offset="0" stop-color="#dbdb16"/><stop offset=".55" stop-color="#b8b807"/><stop offset="1" stop-color="#666600"/></radialGradient>
<radialGradient id="s138_8" cx=".4" cy=".36" r=".68"><stop offset="0" stop-color="#16db51"/><stop offset=".55" stop-color="#07b83c"/><stop offset="1" stop-color="#00661f"/></radialGradient>
<radialGradient id="s180_9" cx=".4" cy=".36" r=".68"><stop offset="0" stop-color="#18f5f5"/><stop offset=".55" stop-color="#08cfcf"/><stop offset="1" stop-color="#007373"/></radialGradient>
<radialGradient id="s162_8" cx=".4" cy=".36" r=".68"><stop offset="0" stop-color="#16dba0"/><stop offset=".55" stop-color="#07b883"/><stop offset="1" stop-color="#006647"/></radialGradient>
<radialGradient id="s54_8" cx=".4" cy=".36" r=".68"><stop offset="0" stop-color="#dbc816"/><stop offset=".55" stop-color="#b8a607"/><stop offset="1" stop-color="#665c00"/></radialGradient>
<radialGradient id="s90_7" cx=".4" cy=".36" r=".68"><stop offset="0" stop-color="#6bc213"/><stop offset=".55" stop-color="#54a106"/><stop offset="1" stop-color="#2d5900"/></radialGradient>
<radialGradient id="s132_7" cx=".4" cy=".36" r=".68"><stop offset="0" stop-color="#13c236"/><stop offset=".55" stop-color="#06a125"/><stop offset="1" stop-color="#005912"/></radialGradient>
<radialGradient id="s126_7" cx=".4" cy=".36" r=".68"><stop offset="0" stop-color="#13c225"/><stop offset=".55" stop-color="#06a116"/><stop offset="1" stop-color="#005909"/></radialGradient>
<radialGradient id="s84_7" cx=".4" cy=".36" r=".68"><stop offset="0" stop-color="#7cc213"/><stop offset=".55" stop-color="#63a106"/><stop offset="1" stop-color="#365900"/></radialGradient>
<radialGradient id="s114_7" cx=".4" cy=".36" r=".68"><stop offset="0" stop-color="#25c213"/><stop offset=".55" stop-color="#16a106"/><stop offset="1" stop-color="#095900"/></radialGradient>
<radialGradient id="s168_8" cx=".4" cy=".36" r=".68"><stop offset="0" stop-color="#16dbb4"/><stop offset=".55" stop-color="#07b894"/><stop offset="1" stop-color="#006652"/></radialGradient>
<radialGradient id="s108_7" cx=".4" cy=".36" r=".68"><stop offset="0" stop-color="#36c213"/><stop offset=".55" stop-color="#25a106"/><stop offset="1" stop-color="#125900"/></radialGradient>
<radialGradient id="s138_7" cx=".4" cy=".36" r=".68"><stop offset="0" stop-color="#13c248"/><stop offset=".55" stop-color="#06a135"/><stop offset="1" stop-color="#00591b"/></radialGradient>
<radialGradient id="s48_8" cx=".4" cy=".36" r=".68"><stop offset="0" stop-color="#dbb416"/><stop offset=".55" stop-color="#b89407"/><stop offset="1" stop-color="#665200"/></radialGradient>
<radialGradient id="s192_8" cx=".4" cy=".36" r=".68"><stop offset="0" stop-color="#16b4db"/><stop offset=".55" stop-color="#0794b8"/><stop offset="1" stop-color="#005266"/></radialGradient>
<radialGradient id="s186_8" cx=".4" cy=".36" r=".68"><stop offset="0" stop-color="#16c8db"/><stop offset=".55" stop-color="#07a6b8"/><stop offset="1" stop-color="#005c66"/></radialGradient>
<radialGradient id="s174_8" cx=".4" cy=".36" r=".68"><stop offset="0" stop-color="#16dbc8"/><stop offset=".55" stop-color="#07b8a6"/><stop offset="1" stop-color="#00665c"/></radialGradient>
<radialGradient id="s78_9" cx=".4" cy=".36" r=".68"><stop offset="0" stop-color="#b3f518"/><stop offset=".55" stop-color="#93cf08"/><stop offset="1" stop-color="#507300"/></radialGradient>
<radialGradient id="s84_9" cx=".4" cy=".36" r=".68"><stop offset="0" stop-color="#9df518"/><stop offset=".55" stop-color="#7fcf08"/><stop offset="1" stop-color="#457300"/></radialGradient>
<radialGradient id="s90_9" cx=".4" cy=".36" r=".68"><stop offset="0" stop-color="#87f518"/><stop offset=".55" stop-color="#6bcf08"/><stop offset="1" stop-color="#397300"/></radialGradient>
<radialGradient id="s96_9" cx=".4" cy=".36" r=".68"><stop offset="0" stop-color="#71f518"/><stop offset=".55" stop-color="#58cf08"/><stop offset="1" stop-color="#2e7300"/></radialGradient>
<radialGradient id="s102_9" cx=".4" cy=".36" r=".68"><stop offset="0" stop-color="#5bf518"/><stop offset=".55" stop-color="#44cf08"/><stop offset="1" stop-color="#227300"/></radialGradient>
<radialGradient id="s108_9" cx=".4" cy=".36" r=".68"><stop offset="0" stop-color="#45f518"/><stop offset=".55" stop-color="#30cf08"/><stop offset="1" stop-color="#177300"/></radialGradient>
<radialGradient id="s114_9" cx=".4" cy=".36" r=".68"><stop offset="0" stop-color="#2ff518"/><stop offset=".55" stop-color="#1ccf08"/><stop offset="1" stop-color="#0b7300"/></radialGradient>
<radialGradient id="s72_7" cx=".4" cy=".36" r=".68"><stop offset="0" stop-color="#9fc213"/><stop offset=".55" stop-color="#82a106"/><stop offset="1" stop-color="#475900"/></radialGradient>
<radialGradient id="s60_7" cx=".4" cy=".36" r=".68"><stop offset="0" stop-color="#c2c213"/><stop offset=".55" stop-color="#a1a106"/><stop offset="1" stop-color="#595900"/></radialGradient>
<radialGradient id="s78_6" cx=".4" cy=".36" r=".68"><stop offset="0" stop-color="#7ba811"/><stop offset=".55" stop-color="#628a06"/><stop offset="1" stop-color="#364d00"/></radialGradient>
<radialGradient id="s54_7" cx=".4" cy=".36" r=".68"><stop offset="0" stop-color="#c2b013"/><stop offset=".55" stop-color="#a19106"/><stop offset="1" stop-color="#595000"/></radialGradient>
<radialGradient id="s60_6" cx=".4" cy=".36" r=".68"><stop offset="0" stop-color="#a8a811"/><stop offset=".55" stop-color="#8a8a06"/><stop offset="1" stop-color="#4d4d00"/></radialGradient>
<radialGradient id="s90_6" cx=".4" cy=".36" r=".68"><stop offset="0" stop-color="#5da811"/><stop offset=".55" stop-color="#488a06"/><stop offset="1" stop-color="#264d00"/></radialGradient>
<radialGradient id="s66_6" cx=".4" cy=".36" r=".68"><stop offset="0" stop-color="#99a811"/><stop offset=".55" stop-color="#7c8a06"/><stop offset="1" stop-color="#454d00"/></radialGradient>
<radialGradient id="s66_7" cx=".4" cy=".36" r=".68"><stop offset="0" stop-color="#b0c213"/><stop offset=".55" stop-color="#91a106"/><stop offset="1" stop-color="#505900"/></radialGradient>
<radialGradient id="s96_6" cx=".4" cy=".36" r=".68"><stop offset="0" stop-color="#4da811"/><stop offset=".55" stop-color="#3a8a06"/><stop offset="1" stop-color="#1f4d00"/></radialGradient>
<radialGradient id="s72_6" cx=".4" cy=".36" r=".68"><stop offset="0" stop-color="#8aa811"/><stop offset=".55" stop-color="#6f8a06"/><stop offset="1" stop-color="#3d4d00"/></radialGradient>
<radialGradient id="s84_6" cx=".4" cy=".36" r=".68"><stop offset="0" stop-color="#6ca811"/><stop offset=".55" stop-color="#558a06"/><stop offset="1" stop-color="#2e4d00"/></radialGradient>
<radialGradient id="s120_9" cx=".4" cy=".36" r=".68"><stop offset="0" stop-color="#18f518"/><stop offset=".55" stop-color="#08cf08"/><stop offset="1" stop-color="#007300"/></radialGradient>
<radialGradient id="gS" cx=".42" cy=".36" r=".66"><stop offset="0" stop-color="#fff"/><stop offset=".35" stop-color="#e2e2e2"/><stop offset=".7" stop-color="#8c8c8c"/><stop offset="1" stop-color="#303030"/></radialGradient>
<pattern id="pS" width="120" height="120" patternUnits="userSpaceOnUse"><g fill="url(#gS)"><rect width="120" height="120" fill="#262626"/><circle cx="96.9" cy="-5" r="5.8"/><circle cx="74.2" cy="-4.4" r="5.8"/><circle cx="113.6" cy="-4.3" r="4.4"/><circle cx="79.6" cy="-3.6" r="4.8"/><circle cx="46.3" cy="-3.6" r="6.6"/><circle cx="26" cy="-3.5" r="3.6"/><circle cx="56.6" cy="-3.5" r="5.8"/><circle cx="8.2" cy="-3.1" r="3.6"/><circle cx="2.9" cy="-2.7" r="5.2"/><circle cx="122.9" cy="-2.7" r="5.2"/><circle cx="108" cy="-2.3" r="4.4"/><circle cx="39.2" cy="-2.1" r="3.6"/><circle cx="68.5" cy="-2.1" r="5.8"/><circle cx="34.9" cy="-1.9" r="4"/><circle cx="91" cy="-1.8" r="5.2"/><circle cx="62.6" cy="-1.7" r="3.6"/><circle cx="15.3" cy="-1.3" r="4.4"/><circle cx="-2.8" cy="-0.9" r="4.8"/><circle cx="117.2" cy="-0.9" r="4.8"/><circle cx="22.5" cy="-0.5" r="5.2"/><circle cx="29.3" cy="0" r="3.6"/><circle cx="101.7" cy="0.1" r="4"/><circle cx="111.4" cy="0.4" r="3.6"/><circle cx="51.4" cy="0.8" r="4.4"/><circle cx="43.4" cy="1.2" r="3.6"/><circle cx="76.4" cy="1.9" r="4.4"/><circle cx="82.2" cy="2.1" r="4"/><circle cx="4.2" cy="2.1" r="4.4"/><circle cx="124.2" cy="2.1" r="4.4"/><circle cx="33.8" cy="2.7" r="5.2"/><circle cx="93.5" cy="2.7" r="4"/><circle cx="98" cy="2.8" r="3.6"/><circle cx="114.6" cy="2.9" r="4.4"/><circle cx="58.5" cy="3.4" r="6.6"/><circle cx="89.1" cy="3.7" r="4.4"/><circle cx="64.2" cy="4.3" r="4"/><circle cx="39.9" cy="4.5" r="3.6"/><circle cx="12.7" cy="4.5" r="5.2"/><circle cx="19.5" cy="4.5" r="3.6"/><circle cx="105.5" cy="4.7" r="3.6"/><circle cx="69.7" cy="5" r="4.4"/><circle cx="50" cy="5" r="4"/><circle cx="29.4" cy="5.1" r="4"/><circle cx="25.4" cy="5.4" r="4"/><circle cx="73.7" cy="5.6" r="3.6"/><circle cx="45.4" cy="5.9" r="4.8"/><circle cx="111.2" cy="6.3" r="4.8"/><circle cx="5.5" cy="6.6" r="4.4"/><circle cx="78" cy="7" r="4.4"/><circle cx="-3.6" cy="7.1" r="4.4"/><circle cx="116.4" cy="7.1" r="4.4"/><circle cx="53.5" cy="7.3" r="4"/><circle cx="82.9" cy="7.9" r="5.2"/><circle cx="89.9" cy="8.3" r="4.8"/><circle cx="1.5" cy="8.7" r="3.6"/><circle cx="121.5" cy="8.7" r="3.6"/><circle cx="106.3" cy="8.7" r="3.6"/><circle cx="18.7" cy="8.7" r="4"/><circle cx="28" cy="8.9" r="4"/><circle cx="71.8" cy="9" r="3.6"/><circle cx="37.3" cy="9.1" r="4.4"/><circle cx="60.1" cy="9.5" r="4"/><circle cx="41.8" cy="9.9" r="4.8"/><circle cx="23.7" cy="10" r="4"/><circle cx="100.6" cy="10.1" r="6.6"/><circle cx="47.4" cy="10.1" r="4"/><circle cx="94.6" cy="10.1" r="3.6"/><circle cx="65" cy="10.2" r="3.6"/><circle cx="32.4" cy="10.5" r="4.4"/><circle cx="113.7" cy="10.6" r="4"/><circle cx="8.8" cy="10.8" r="5.2"/><circle cx="109.3" cy="10.9" r="3.6"/><circle cx="52.8" cy="11" r="3.6"/><circle cx="14.8" cy="11.4" r="5.2"/><circle cx="77" cy="12" r="4"/><circle cx="57.1" cy="12.6" r="4"/><circle cx="82.2" cy="12.7" r="4"/><circle cx="90.7" cy="12.9" r="4.4"/><circle cx="67.6" cy="13" r="3.6"/><circle cx="4.5" cy="13.5" r="4.4"/><circle cx="38.3" cy="13.8" r="3.6"/><circle cx="73.1" cy="13.9" r="4.4"/><circle cx="47.4" cy="13.9" r="3.6"/><circle cx="86.8" cy="14" r="3.6"/><circle cx="29.1" cy="14.1" r="4"/><circle cx="63.3" cy="14.2" r="4.8"/><circle cx="110.9" cy="14.8" r="4"/><circle cx="-2.7" cy="15.2" r="4.8"/><circle cx="117.3" cy="15.2" r="4.8"/><circle cx="104.1" cy="15.2" r="4.8"/><circle cx="17.9" cy="15.4" r="4.4"/><circle cx="97.2" cy="15.7" r="5.8"/><circle cx="23.3" cy="15.9" r="3.6"/><circle cx="34.9" cy="16.4" r="3.6"/><circle cx="11.1" cy="16.6" r="4.8"/><circle cx="59" cy="16.8" r="3.6"/><circle cx="79.8" cy="16.9" r="4.8"/><circle cx="53.6" cy="17" r="5.2"/><circle cx="44.2" cy="17.2" r="5.2"/><circle cx="91.6" cy="17.5" r="3.6"/><circle cx="69" cy="17.8" r="3.6"/><circle cx="38.7" cy="17.8" r="3.6"/><circle cx="113.4" cy="18.6" r="4.4"/><circle cx="72.7" cy="18.9" r="4"/><circle cx="87" cy="19" r="5.8"/><circle cx="63.5" cy="19.2" r="4"/><circle cx="3.6" cy="19.4" r="3.6"/><circle cx="123.6" cy="19.4" r="3.6"/><circle cx="29.5" cy="19.5" r="5.8"/><circle cx="56.8" cy="20.4" r="4"/><circle cx="24.3" cy="20.4" r="4.4"/><circle cx="50" cy="20.7" r="4"/><circle cx="106.4" cy="21.1" r="4"/><circle cx="93.1" cy="21.5" r="3.6"/><circle cx="76.5" cy="21.8" r="5.2"/><circle cx="99.1" cy="22.1" r="5.8"/><circle cx="-2.8" cy="22.1" r="4"/><circle cx="117.2" cy="22.1" r="4"/><circle cx="17.6" cy="22.1" r="4"/><circle cx="81.8" cy="22.6" r="5.2"/><circle cx="44" cy="22.6" r="4.4"/><circle cx="7.1" cy="22.8" r="4"/><circle cx="38.1" cy="23" r="5.2"/><circle cx="112.8" cy="23.6" r="4.8"/><circle cx="54.4" cy="23.6" r="3.6"/><circle cx="67.9" cy="23.8" r="5.8"/><circle cx="31" cy="24.3" r="4"/><circle cx="13.7" cy="24.3" r="4"/><circle cx="88.7" cy="24.5" r="3.6"/><circle cx="24.8" cy="24.6" r="3.6"/><circle cx="63.3" cy="24.6" r="3.6"/><circle cx="0.1" cy="24.7" r="3.6"/><circle cx="120.1" cy="24.7" r="3.6"/><circle cx="50.5" cy="25.5" r="4.4"/><circle cx="20.2" cy="25.7" r="3.6"/><circle cx="41.4" cy="25.9" r="3.6"/><circle cx="105.4" cy="26.2" r="4.8"/><circle cx="94.1" cy="26.2" r="4"/><circle cx="72" cy="26.4" r="3.6"/><circle cx="57.7" cy="27.6" r="5.8"/><circle cx="100.2" cy="27.8" r="4.4"/><circle cx="47.3" cy="28.6" r="3.6"/><circle cx="-4.5" cy="28.6" r="5.8"/><circle cx="115.5" cy="28.6" r="5.8"/><circle cx="16.1" cy="28.7" r="5.8"/><circle cx="33.4" cy="28.7" r="4"/><circle cx="76.6" cy="28.9" r="3.6"/><circle cx="38.2" cy="29.1" r="3.6"/><circle cx="28.8" cy="29.3" r="3.6"/><circle cx="86.3" cy="30.1" r="6.6"/><circle cx="21.1" cy="30.4" r="3.6"/><circle cx="10" cy="30.5" r="6.6"/><circle cx="110.5" cy="30.7" r="3.6"/><circle cx="80" cy="30.8" r="4"/><circle cx="69" cy="30.8" r="3.6"/><circle cx="96.6" cy="31" r="3.6"/><circle cx="3.5" cy="31.2" r="5.8"/><circle cx="123.5" cy="31.2" r="5.8"/><circle cx="63.6" cy="31.3" r="4"/><circle cx="52.1" cy="31.6" r="5.8"/><circle cx="25" cy="32.2" r="4"/><circle cx="100.6" cy="32.4" r="4"/><circle cx="58" cy="33" r="4.4"/><circle cx="106.7" cy="33.3" r="4"/><circle cx="40" cy="33.5" r="5.2"/><circle cx="14" cy="34" r="3.6"/><circle cx="18.7" cy="34.3" r="4.4"/><circle cx="91.5" cy="34.6" r="3.6"/><circle cx="115.9" cy="35.1" r="4"/><circle cx="96.6" cy="35.2" r="4.8"/><circle cx="28" cy="35.3" r="3.6"/><circle cx="8" cy="35.4" r="3.6"/><circle cx="73.5" cy="35.5" r="3.6"/><circle cx="32.8" cy="35.7" r="4"/><circle cx="110.1" cy="35.8" r="4"/><circle cx="46.8" cy="35.9" r="4"/><circle cx="103.7" cy="36" r="4"/><circle cx="78.5" cy="36.1" r="5.8"/><circle cx="68.5" cy="37.1" r="6.6"/><circle cx="61.7" cy="37.2" r="3.6"/><circle cx="54" cy="37.5" r="3.6"/><circle cx="3.8" cy="37.5" r="4.8"/><circle cx="123.8" cy="37.5" r="4.8"/><circle cx="-1" cy="37.5" r="3.6"/><circle cx="119" cy="37.5" r="3.6"/><circle cx="37.9" cy="37.8" r="4"/><circle cx="87.7" cy="38.3" r="3.6"/><circle cx="57.8" cy="38.3" r="4"/><circle cx="113.7" cy="38.7" r="4"/><circle cx="83.1" cy="39" r="3.6"/><circle cx="91.8" cy="39.2" r="4.8"/><circle cx="10.6" cy="39.4" r="3.6"/><circle cx="14.4" cy="39.6" r="3.6"/><circle cx="20.7" cy="40.2" r="6.6"/><circle cx="47.3" cy="40.5" r="4.4"/><circle cx="108.9" cy="40.6" r="4.8"/><circle cx="96.2" cy="40.9" r="4"/><circle cx="62.9" cy="41.1" r="4"/><circle cx="52" cy="41.1" r="4.4"/><circle cx="32.7" cy="41.5" r="5.8"/><circle cx="75.3" cy="41.7" r="4"/><circle cx="-1.7" cy="41.9" r="3.6"/><circle cx="118.3" cy="41.9" r="3.6"/><circle cx="58.1" cy="42.5" r="4.4"/><circle cx="6.3" cy="42.6" r="5.2"/><circle cx="38.6" cy="42.6" r="5.2"/><circle cx="67.4" cy="42.7" r="4.4"/><circle cx="103.3" cy="42.8" r="4"/><circle cx="25.7" cy="43.1" r="4.4"/><circle cx="83" cy="43.5" r="4.4"/><circle cx="54.5" cy="44.7" r="3.6"/><circle cx="1.2" cy="44.8" r="3.6"/><circle cx="121.2" cy="44.8" r="3.6"/><circle cx="50.3" cy="46.1" r="4.8"/><circle cx="77.1" cy="46.1" r="4.4"/><circle cx="28.4" cy="46.2" r="3.6"/><circle cx="96.2" cy="46.2" r="5.2"/><circle cx="111.7" cy="46.3" r="6.6"/><circle cx="101.6" cy="46.4" r="3.6"/><circle cx="10.6" cy="46.5" r="4.8"/><circle cx="87.4" cy="46.6" r="5.8"/><circle cx="44.2" cy="46.8" r="4"/><circle cx="105.7" cy="47" r="3.6"/><circle cx="15.6" cy="47.1" r="4.4"/><circle cx="71.5" cy="47.5" r="4.8"/><circle cx="-2.4" cy="47.7" r="3.6"/><circle cx="117.6" cy="47.7" r="3.6"/><circle cx="5.6" cy="48" r="3.6"/><circle cx="61.9" cy="48.1" r="6.6"/><circle cx="34.4" cy="48.1" r="6.6"/><circle cx="21.6" cy="48.3" r="6.6"/><circle cx="81.7" cy="48.9" r="4"/><circle cx="1.8" cy="49.2" r="3.6"/><circle cx="121.8" cy="49.2" r="3.6"/><circle cx="56.5" cy="49.8" r="3.6"/><circle cx="50.6" cy="50.5" r="4"/><circle cx="41" cy="50.6" r="4.4"/><circle cx="85.1" cy="50.9" r="3.6"/><circle cx="104.1" cy="51.5" r="3.6"/><circle cx="98.4" cy="51.8" r="4.4"/><circle cx="65.4" cy="52.1" r="3.6"/><circle cx="109.6" cy="52.6" r="6.6"/><circle cx="14.9" cy="53.1" r="5.8"/><circle cx="28.4" cy="53.2" r="5.2"/><circle cx="92.3" cy="53.3" r="5.8"/><circle cx="6.3" cy="53.8" r="4"/><circle cx="115" cy="53.9" r="4"/><circle cx="56.2" cy="54.1" r="3.6"/><circle cx="69.1" cy="54.4" r="4.4"/><circle cx="44.6" cy="54.4" r="5.2"/><circle cx="34.8" cy="54.7" r="5.2"/><circle cx="74.9" cy="54.7" r="4"/><circle cx="79.5" cy="54.9" r="4.4"/><circle cx="-0.9" cy="55" r="4"/><circle cx="119.1" cy="55" r="4"/><circle cx="100.1" cy="55.7" r="3.6"/><circle cx="23.9" cy="56.2" r="4"/><circle cx="86.7" cy="56.2" r="6.6"/><circle cx="104.8" cy="56.7" r="3.6"/><circle cx="59.4" cy="56.8" r="3.6"/><circle cx="51.5" cy="57.2" r="4.4"/><circle cx="38.5" cy="58" r="3.6"/><circle cx="28.3" cy="58.7" r="4"/><circle cx="34.2" cy="59.5" r="3.6"/><circle cx="16.3" cy="59.6" r="6.6"/><circle cx="8.7" cy="59.6" r="3.6"/><circle cx="91.8" cy="59.8" r="5.8"/><circle cx="3.6" cy="60" r="3.6"/><circle cx="-6.4" cy="60" r="6.6"/><circle cx="113.6" cy="60" r="6.6"/><circle cx="101.8" cy="60.2" r="3.6"/><circle cx="64.3" cy="60.4" r="5.2"/><circle cx="-0.6" cy="60.5" r="4.4"/><circle cx="119.4" cy="60.5" r="4.4"/><circle cx="97.2" cy="60.5" r="4"/><circle cx="72" cy="60.5" r="4.4"/><circle cx="106.1" cy="60.7" r="3.6"/><circle cx="55.9" cy="60.9" r="5.2"/><circle cx="42.5" cy="61.1" r="4.4"/><circle cx="79.5" cy="61.2" r="4.4"/><circle cx="22.5" cy="61.7" r="4"/><circle cx="49.6" cy="62.5" r="4"/><circle cx="86.7" cy="62.5" r="4.4"/><circle cx="26.6" cy="63.2" r="4.4"/><circle cx="33.8" cy="63.7" r="4"/><circle cx="68.3" cy="64" r="4.8"/><circle cx="103.7" cy="64.1" r="4"/><circle cx="45.2" cy="64.6" r="3.6"/><circle cx="96.1" cy="64.8" r="3.6"/><circle cx="83.2" cy="64.9" r="4"/><circle cx="0.1" cy="65.3" r="4.8"/><circle cx="120.1" cy="65.3" r="4.8"/><circle cx="9" cy="65.5" r="5.8"/><circle cx="22.3" cy="65.7" r="3.6"/><circle cx="39" cy="65.8" r="5.8"/><circle cx="92.5" cy="65.9" r="3.6"/><circle cx="77.4" cy="65.9" r="5.8"/><circle cx="108.7" cy="66" r="5.2"/><circle cx="30.3" cy="66.7" r="3.6"/><circle cx="54.3" cy="67.2" r="6.6"/><circle cx="-5.5" cy="67.2" r="6.6"/><circle cx="114.5" cy="67.2" r="6.6"/><circle cx="99.7" cy="67.4" r="4"/><circle cx="65.5" cy="67.7" r="4"/><circle cx="60.7" cy="67.9" r="4.4"/><circle cx="71.6" cy="68" r="5.2"/><circle cx="17" cy="69.2" r="5.8"/><circle cx="23.9" cy="69.7" r="4"/><circle cx="6.1" cy="70" r="4.8"/><circle cx="45" cy="70" r="4"/><circle cx="28.2" cy="70" r="4"/><circle cx="80.6" cy="70.1" r="4"/><circle cx="11.7" cy="70.5" r="5.2"/><circle cx="75.2" cy="70.6" r="3.6"/><circle cx="95.4" cy="70.7" r="4.4"/><circle cx="67.3" cy="71.6" r="3.6"/><circle cx="87.8" cy="71.7" r="6.6"/><circle cx="63.2" cy="71.7" r="4.4"/><circle cx="105.9" cy="72.4" r="4.8"/><circle cx="110.6" cy="72.6" r="3.6"/><circle cx="19.9" cy="73" r="3.6"/><circle cx="39" cy="73" r="5.2"/><circle cx="33" cy="73.2" r="5.8"/><circle cx="1.5" cy="73.3" r="3.6"/><circle cx="121.5" cy="73.3" r="3.6"/><circle cx="52.4" cy="73.3" r="4.8"/><circle cx="59.5" cy="73.3" r="3.6"/><circle cx="78.5" cy="73.9" r="4"/><circle cx="-4" cy="73.9" r="4.4"/><circle cx="116" cy="73.9" r="4.4"/><circle cx="72.9" cy="74.7" r="4.8"/><circle cx="101" cy="75" r="4.4"/><circle cx="94.1" cy="75" r="4.4"/><circle cx="46.3" cy="75.3" r="4.4"/><circle cx="5.6" cy="75.5" r="4.8"/><circle cx="15.8" cy="75.6" r="4"/><circle cx="24.2" cy="75.9" r="4"/><circle cx="28.2" cy="75.9" r="3.6"/><circle cx="10.2" cy="76.1" r="4"/><circle cx="111.3" cy="76.6" r="3.6"/><circle cx="67.7" cy="76.9" r="4.8"/><circle cx="104.4" cy="78" r="4"/><circle cx="41.1" cy="78.1" r="3.6"/><circle cx="85.4" cy="78.2" r="5.8"/><circle cx="36.8" cy="78.2" r="4"/><circle cx="60.3" cy="78.4" r="4"/><circle cx="49.8" cy="78.6" r="3.6"/><circle cx="55.1" cy="78.7" r="5.2"/><circle cx="-2.3" cy="78.8" r="5.8"/><circle cx="117.7" cy="78.8" r="5.8"/><circle cx="97.3" cy="79.3" r="4"/><circle cx="45.4" cy="79.6" r="3.6"/><circle cx="18" cy="79.9" r="3.6"/><circle cx="92" cy="80.5" r="3.6"/><circle cx="30.8" cy="80.6" r="6.6"/><circle cx="7.5" cy="80.8" r="3.6"/><circle cx="80.1" cy="81.1" r="5.8"/><circle cx="2.9" cy="81.2" r="5.2"/><circle cx="122.9" cy="81.2" r="5.2"/><circle cx="22.2" cy="81.4" r="5.2"/><circle cx="72.9" cy="81.4" r="4.4"/><circle cx="49.1" cy="82.1" r="3.6"/><circle cx="42.2" cy="82.2" r="3.6"/><circle cx="38.3" cy="82.5" r="4"/><circle cx="11.6" cy="82.5" r="4.4"/><circle cx="66.5" cy="82.5" r="4.4"/><circle cx="61.5" cy="82.6" r="4"/><circle cx="97.2" cy="83.2" r="3.6"/><circle cx="113.7" cy="83.3" r="4"/><circle cx="105.6" cy="83.4" r="6.6"/><circle cx="86.1" cy="84.2" r="4.8"/><circle cx="55.6" cy="84.5" r="3.6"/><circle cx="25.9" cy="84.6" r="4"/><circle cx="76.1" cy="84.8" r="4"/><circle cx="-0.2" cy="84.8" r="4"/><circle cx="119.8" cy="84.8" r="4"/><circle cx="16.2" cy="84.8" r="3.6"/><circle cx="31.4" cy="86.2" r="3.6"/><circle cx="110.5" cy="86.2" r="4.4"/><circle cx="91.3" cy="86.7" r="3.6"/><circle cx="69.8" cy="86.8" r="4.4"/><circle cx="49.1" cy="86.9" r="3.6"/><circle cx="12.7" cy="87.1" r="4.4"/><circle cx="6.9" cy="87.4" r="6.6"/><circle cx="97.7" cy="87.4" r="4"/><circle cx="22.9" cy="87.8" r="4"/><circle cx="63.2" cy="88" r="4.4"/><circle cx="114.3" cy="88.1" r="4"/><circle cx="35.5" cy="88.5" r="4.8"/><circle cx="16.7" cy="88.6" r="4"/><circle cx="54.5" cy="88.7" r="4.8"/><circle cx="83.9" cy="89.1" r="5.2"/><circle cx="41.2" cy="89.4" r="6.6"/><circle cx="101.8" cy="89.7" r="4.8"/><circle cx="107.7" cy="89.8" r="3.6"/><circle cx="77.9" cy="89.9" r="5.8"/><circle cx="47.3" cy="90.2" r="3.6"/><circle cx="67.9" cy="91" r="4"/><circle cx="89.2" cy="91.1" r="4.4"/><circle cx="-1.2" cy="91.4" r="3.6"/><circle cx="118.8" cy="91.4" r="3.6"/><circle cx="26.4" cy="92.3" r="4"/><circle cx="18.9" cy="92.5" r="3.6"/><circle cx="95.4" cy="92.9" r="6.6"/><circle cx="3.3" cy="93.1" r="5.2"/><circle cx="123.3" cy="93.1" r="5.2"/><circle cx="72" cy="93.4" r="4.4"/><circle cx="114.8" cy="93.5" r="4.8"/><circle cx="32" cy="93.5" r="6.6"/><circle cx="13.5" cy="93.6" r="5.8"/><circle cx="59.9" cy="93.6" r="4"/><circle cx="109.3" cy="93.8" r="3.6"/><circle cx="47.7" cy="94" r="3.6"/><circle cx="80.2" cy="94.5" r="3.6"/><circle cx="64.4" cy="94.9" r="4.4"/><circle cx="42.5" cy="94.9" r="4.4"/><circle cx="75.6" cy="95.2" r="3.6"/><circle cx="84.4" cy="95.2" r="4.4"/><circle cx="105.4" cy="95.6" r="4"/><circle cx="7.2" cy="95.6" r="4"/><circle cx="52.4" cy="95.8" r="5.2"/><circle cx="100" cy="96.3" r="4.8"/><circle cx="22.8" cy="96.5" r="4.8"/><circle cx="28" cy="97.4" r="4"/><circle cx="89.3" cy="97.8" r="4"/><circle cx="35.7" cy="97.8" r="4"/><circle cx="109" cy="98.1" r="4"/><circle cx="71.4" cy="98.4" r="3.6"/><circle cx="13.4" cy="98.5" r="4"/><circle cx="0.2" cy="98.6" r="6.6"/><circle cx="120.2" cy="98.6" r="6.6"/><circle cx="82.8" cy="99" r="3.6"/><circle cx="57.9" cy="99.4" r="4.4"/><circle cx="102.9" cy="99.4" r="3.6"/><circle cx="74.8" cy="99.8" r="3.6"/><circle cx="62.9" cy="99.9" r="4"/><circle cx="96.7" cy="100.1" r="4.8"/><circle cx="113.1" cy="100.5" r="3.6"/><circle cx="79.3" cy="100.6" r="3.6"/><circle cx="52.9" cy="101.1" r="5.2"/><circle cx="47.2" cy="101.2" r="4.8"/><circle cx="29.3" cy="101.3" r="4"/><circle cx="41.4" cy="101.4" r="5.2"/><circle cx="19.1" cy="101.9" r="5.8"/><circle cx="36.2" cy="102" r="4"/><circle cx="67.1" cy="102.3" r="5.2"/><circle cx="91.8" cy="102.6" r="4"/><circle cx="116" cy="102.8" r="3.6"/><circle cx="86.8" cy="102.8" r="3.6"/><circle cx="24.3" cy="104.1" r="4.8"/><circle cx="57.5" cy="104.1" r="3.6"/><circle cx="13.4" cy="104.3" r="3.6"/><circle cx="104" cy="104.4" r="3.6"/><circle cx="7.8" cy="104.4" r="5.8"/><circle cx="-0.3" cy="104.5" r="4"/><circle cx="119.7" cy="104.5" r="4"/><circle cx="73.7" cy="104.5" r="4.4"/><circle cx="50.1" cy="104.8" r="3.6"/><circle cx="62" cy="105" r="5.2"/><circle cx="99.6" cy="105.6" r="4.8"/><circle cx="109.7" cy="105.6" r="4.8"/><circle cx="94.7" cy="105.9" r="3.6"/><circle cx="31.9" cy="106" r="4.8"/><circle cx="79.4" cy="106.1" r="5.2"/><circle cx="36.5" cy="106.2" r="4"/><circle cx="41.7" cy="107" r="5.2"/><circle cx="91.1" cy="107.5" r="4"/><circle cx="20.3" cy="107.6" r="5.8"/><circle cx="103.1" cy="107.9" r="3.6"/><circle cx="-1.1" cy="108.3" r="3.6"/><circle cx="118.9" cy="108.3" r="3.6"/><circle cx="67.9" cy="108.6" r="5.2"/><circle cx="86.5" cy="108.7" r="3.6"/><circle cx="14.4" cy="109.2" r="4.8"/><circle cx="75.1" cy="109.2" r="4.8"/><circle cx="48.3" cy="109.3" r="4.4"/><circle cx="97.6" cy="109.9" r="3.6"/><circle cx="112.3" cy="110.4" r="5.2"/><circle cx="55.1" cy="110.5" r="6.6"/><circle cx="26.3" cy="110.5" r="4"/><circle cx="44.4" cy="111" r="3.6"/><circle cx="10.4" cy="111" r="3.6"/><circle cx="80.9" cy="111.4" r="4.8"/><circle cx="39.5" cy="111.5" r="4.4"/><circle cx="107.6" cy="111.7" r="4"/><circle cx="91.8" cy="112.1" r="4.4"/><circle cx="17.5" cy="112.1" r="3.6"/><circle cx="5.3" cy="112.3" r="5.8"/><circle cx="125.3" cy="112.3" r="5.8"/><circle cx="33.3" cy="112.7" r="6.6"/><circle cx="21.7" cy="112.9" r="4.4"/><circle cx="-0.6" cy="112.9" r="4.4"/><circle cx="119.4" cy="112.9" r="4.4"/><circle cx="87.1" cy="113" r="4"/><circle cx="102.9" cy="113.4" r="5.2"/><circle cx="62.6" cy="113.6" r="5.2"/><circle cx="13.3" cy="114.4" r="4.4"/><circle cx="51.5" cy="114.9" r="4"/><circle cx="96.9" cy="115" r="5.8"/><circle cx="84.1" cy="115.5" r="3.6"/><circle cx="74.2" cy="115.6" r="5.8"/><circle cx="113.6" cy="115.7" r="4.4"/><circle cx="18.7" cy="116.1" r="3.6"/><circle cx="79.6" cy="116.4" r="4.8"/><circle cx="46.3" cy="116.4" r="6.6"/><circle cx="26" cy="116.5" r="3.6"/><circle cx="56.6" cy="116.5" r="5.8"/><circle cx="8.2" cy="116.9" r="3.6"/><circle cx="2.9" cy="117.3" r="5.2"/><circle cx="122.9" cy="117.3" r="5.2"/><circle cx="108" cy="117.7" r="4.4"/><circle cx="39.2" cy="117.9" r="3.6"/><circle cx="68.5" cy="117.9" r="5.8"/><circle cx="34.9" cy="118.1" r="4"/><circle cx="91" cy="118.2" r="5.2"/><circle cx="62.6" cy="118.3" r="3.6"/><circle cx="15.3" cy="118.7" r="4.4"/><circle cx="-2.8" cy="119.1" r="4.8"/><circle cx="117.2" cy="119.1" r="4.8"/><circle cx="22.5" cy="119.5" r="5.2"/><circle cx="29.3" cy="120" r="3.6"/><circle cx="101.7" cy="120.1" r="4"/><circle cx="111.4" cy="120.4" r="3.6"/><circle cx="51.4" cy="120.8" r="4.4"/><circle cx="43.4" cy="121.2" r="3.6"/><circle cx="76.4" cy="121.9" r="4.4"/><circle cx="82.2" cy="122.1" r="4"/><circle cx="4.2" cy="122.1" r="4.4"/><circle cx="124.2" cy="122.1" r="4.4"/><circle cx="33.8" cy="122.7" r="5.2"/><circle cx="93.5" cy="122.7" r="4"/><circle cx="98" cy="122.8" r="3.6"/><circle cx="114.6" cy="122.9" r="4.4"/><circle cx="58.5" cy="123.4" r="6.6"/><circle cx="89.1" cy="123.7" r="4.4"/><circle cx="12.7" cy="124.5" r="5.2"/></g></pattern>
<clipPath id="cFine"><polygon points="200,100 1168,100 1168,320 1148,360 1099,434 1040,540 960,669 800,790 643,900 560,962 470,1045 200,1045"/></clipPath>
<clipPath id="cCoarse"><polygon points="1168,100 1300,100 1300,1045 470,1045 560,962 643,900 800,790 960,669 1040,540 1099,434 1148,360 1168,320"/></clipPath>
<pattern id="pS0" href="#pS" patternTransform="translate(0 0) scale(0.25)"/>
<pattern id="pS1" href="#pS" patternTransform="translate(17 29) scale(0.3)"/>
<pattern id="pS2" href="#pS" patternTransform="translate(34 58) scale(0.35)"/>
<pattern id="pS3" href="#pS" patternTransform="translate(51 87) scale(0.4)"/>
<pattern id="pS4" href="#pS" patternTransform="translate(68 116) scale(0.5)"/>
<pattern id="pS5" href="#pS" patternTransform="translate(85 145) scale(0.6)"/>
<pattern id="pS6" href="#pS" patternTransform="translate(102 174) scale(0.7)"/>
<pattern id="pS7" href="#pS" patternTransform="translate(119 203) scale(0.8)"/>
<pattern id="pS8" href="#pS" patternTransform="translate(136 232) scale(0.9)"/>
<pattern id="pS9" href="#pS" patternTransform="translate(153 261) scale(1)"/>
<pattern id="pS10" href="#pS" patternTransform="translate(170 290) scale(1.1)"/>
<pattern id="pS11" href="#pS" patternTransform="translate(187 319) scale(1.2)"/>
<pattern id="pS12" href="#pS" patternTransform="translate(204 348) scale(1.3)"/>
<radialGradient id="s126_9" cx=".4" cy=".36" r=".68"><stop offset="0" stop-color="#18f52f"/><stop offset=".55" stop-color="#08cf1c"/><stop offset="1" stop-color="#00730b"/></radialGradient>
<filter id="fSoft2" x="-10%" y="-10%" width="120%" height="120%"><feGaussianBlur stdDeviation="2"/></filter>
<radialGradient id="s192_9" cx=".4" cy=".36" r=".68"><stop offset="0" stop-color="#18c9f5"/><stop offset=".55" stop-color="#08a7cf"/><stop offset="1" stop-color="#005c73"/></radialGradient>
<radialGradient id="s186_9" cx=".4" cy=".36" r=".68"><stop offset="0" stop-color="#18dff5"/><stop offset=".55" stop-color="#08bbcf"/><stop offset="1" stop-color="#006773"/></radialGradient>
<radialGradient id="s198_9" cx=".4" cy=".36" r=".68"><stop offset="0" stop-color="#18b3f5"/><stop offset=".55" stop-color="#0893cf"/><stop offset="1" stop-color="#005073"/></radialGradient>
<pattern id="pSB" href="#pS" patternTransform="translate(7 3) scale(.5)"/>
<radialGradient id="s210_9" cx=".4" cy=".36" r=".68"><stop offset="0" stop-color="#1887f5"/><stop offset=".55" stop-color="#086bcf"/><stop offset="1" stop-color="#003973"/></radialGradient>
<radialGradient id="s234_8" cx=".4" cy=".36" r=".68"><stop offset="0" stop-color="#162adb"/><stop offset=".55" stop-color="#0719b8"/><stop offset="1" stop-color="#000a66"/></radialGradient>
<radialGradient id="s204_9" cx=".4" cy=".36" r=".68"><stop offset="0" stop-color="#189df5"/><stop offset=".55" stop-color="#087fcf"/><stop offset="1" stop-color="#004573"/></radialGradient>
<radialGradient id="s216_9" cx=".4" cy=".36" r=".68"><stop offset="0" stop-color="#1871f5"/><stop offset=".55" stop-color="#0858cf"/><stop offset="1" stop-color="#002e73"/></radialGradient>
<radialGradient id="s222_9" cx=".4" cy=".36" r=".68"><stop offset="0" stop-color="#185bf5"/><stop offset=".55" stop-color="#0844cf"/><stop offset="1" stop-color="#002273"/></radialGradient>
<radialGradient id="s240_8" cx=".4" cy=".36" r=".68"><stop offset="0" stop-color="#1616db"/><stop offset=".55" stop-color="#0707b8"/><stop offset="1" stop-color="#000066"/></radialGradient>
<linearGradient id="gR1" x1="0" y1="0" x2="1" y2="0"><stop offset="0" stop-color="#3c3c3c"/><stop offset=".5" stop-color="#424242"/><stop offset=".82" stop-color="#454545"/><stop offset=".93" stop-color="#6a6a6a"/><stop offset="1" stop-color="#505050"/></linearGradient>
<linearGradient id="gR1b" x1="0" y1="0" x2="1" y2="0"><stop offset="0" stop-color="#3a3a3a"/><stop offset=".08" stop-color="#1d1d1d"/><stop offset=".9" stop-color="#1b1b1b"/><stop offset="1" stop-color="#333"/></linearGradient>
<linearGradient id="gR2" gradientUnits="userSpaceOnUse" x1="322" y1="0" x2="371" y2="0"><stop offset="0" stop-color="#424242"/><stop offset=".45" stop-color="#414141"/><stop offset=".62" stop-color="#262626"/><stop offset="1" stop-color="#1a1a1a"/></linearGradient>
<linearGradient id="gR2b" gradientUnits="userSpaceOnUse" x1="330" y1="545" x2="350" y2="582"><stop offset="0" stop-color="#444" stop-opacity="0"/><stop offset=".55" stop-color="#6c6c6c" stop-opacity=".9"/><stop offset="1" stop-color="#8a8a8a"/></linearGradient>
<clipPath id="cR2"><path d="M340.4 458.2A17.9 61.5 0 0 0 340.4 581.2L352 581.2L346.6 573.4A13.2 54 0 0 1 346.6 466z"/></clipPath>
</defs>
<rect x="0" y="0" width="1450" height="1098" fill="#000"/>
<g clip-path="url(#cSea)"><g filter="url(#fBlur)">
<rect x="200" y="300" width="1100" height="780" fill="#0fdb31"/>
<path fill="#0fffe9" d="M1027 317h16v16h-16z"/>
<path fill="#0fffec" d="M1041 317h16v16h-16z"/>
<path fill="#0fffea" d="M1055 317h16v16h-16z"/>
<path fill="#0fffe8" d="M1069 317h16v16h-16z"/>
<path fill="#0fffea" d="M1083 317h16v16h-16z"/>
<path fill="#0fffee" d="M1097 317h16v16h-16z"/>
<path fill="#0fffee" d="M1111 317h16v16h-16z"/>
<path fill="#0fffe5" d="M1125 317h16v16h-16z"/>
<path fill="#0fffcd" d="M1139 317h16v16h-16z"/>
<path fill="#0fffac" d="M1153 317h16v16h-16z"/>
<path fill="#0fff90" d="M1167 317h16v16h-16z"/>
<path fill="#0fff80" d="M1181 317h16v16h-16z"/>
<path fill="#0fff71" d="M1195 317h16v16h-16z"/>
<path fill="#0fff55" d="M1209 317h16v16h-16z"/>
<path fill="#0ffe3a" d="M1223 317h16v16h-16z"/>
<path fill="#0ffd25" d="M1237 317h16v16h-16z"/>
<path fill="#0ffd12" d="M1251 317h16v16h-16z"/>
<path fill="#0fffed" d="M985 331h16v16h-16z"/>
<path fill="#0ffff6" d="M999 331h16v16h-16z"/>
<path fill="#0ffffe" d="M1013 331h16v16h-16z"/>
<path fill="#0ff9fe" d="M1027 331h16v16h-16z"/>
<path fill="#0ff1fc" d="M1041 331h16v16h-16z"/>
<path fill="#0ff8ff" d="M1055 331h16v16h-16z"/>
<path fill="#0ffffe" d="M1069 331h16v16h-16z"/>
<path fill="#0ffffb" d="M1083 331h16v16h-16z"/>
<path fill="#0ffff8" d="M1097 331h16v16h-16z"/>
<path fill="#0ffff1" d="M1111 331h16v16h-16z"/>
<path fill="#0fffe1" d="M1125 331h16v16h-16z"/>
<path fill="#0ffdbe" d="M1139 331h16v16h-16z"/>
<path fill="#0fff96" d="M1153 331h16v16h-16z"/>
<path fill="#0fff72" d="M1167 331h16v16h-16z"/>
<path fill="#0fff62" d="M1181 331h16v16h-16z"/>
<path fill="#0fff57" d="M1195 331h16v16h-16z"/>
<path fill="#0ffd3b" d="M1209 331h16v16h-16z"/>
<path fill="#0ffb23" d="M1223 331h16v16h-16z"/>
<path fill="#0ffb10" d="M1237 331h16v16h-16z"/>
<path fill="#0ffab2" d="M873 345h16v16h-16z"/>
<path fill="#0ffbbe" d="M887 345h16v16h-16z"/>
<path fill="#0ffdef" d="M943 345h16v16h-16z"/>
<path fill="#0ffcf4" d="M957 345h16v16h-16z"/>
<path fill="#0ffaf8" d="M971 345h16v16h-16z"/>
<path fill="#0ff4f9" d="M985 345h16v16h-16z"/>
<path fill="#0fe8f8" d="M999 345h16v16h-16z"/>
<path fill="#0fdaf3" d="M1013 345h16v16h-16z"/>
<path fill="#0ec8ec" d="M1027 345h16v16h-16z"/>
<path fill="#0ebae6" d="M1041 345h16v16h-16z"/>
<path fill="#0ec2ea" d="M1055 345h16v16h-16z"/>
<path fill="#0fd9f5" d="M1069 345h16v16h-16z"/>
<path fill="#0feffe" d="M1083 345h16v16h-16z"/>
<path fill="#0ffdff" d="M1097 345h16v16h-16z"/>
<path fill="#0fffef" d="M1111 345h16v16h-16z"/>
<path fill="#0fffd3" d="M1125 345h16v16h-16z"/>
<path fill="#0fffaa" d="M1139 345h16v16h-16z"/>
<path fill="#0fff7d" d="M1153 345h16v16h-16z"/>
<path fill="#0fff58" d="M1167 345h16v16h-16z"/>
<path fill="#0ffe42" d="M1181 345h16v16h-16z"/>
<path fill="#0ffd33" d="M1195 345h16v16h-16z"/>
<path fill="#0ffa1f" d="M1209 345h16v16h-16z"/>
<path fill="#12f90f" d="M1223 345h16v16h-16z"/>
<path fill="#0fffa9" d="M831 359h16v16h-16z"/>
<path fill="#0ff6aa" d="M845 359h16v16h-16z"/>
<path fill="#0ff5b2" d="M859 359h16v16h-16z"/>
<path fill="#0ff5bc" d="M873 359h16v16h-16z"/>
<path fill="#0ff6ca" d="M887 359h16v16h-16z"/>
<path fill="#0ff7dc" d="M901 359h16v16h-16z"/>
<path fill="#0ff9ee" d="M915 359h16v16h-16z"/>
<path fill="#0ff6f9" d="M929 359h16v16h-16z"/>
<path fill="#0febf8" d="M943 359h16v16h-16z"/>
<path fill="#0fe3f6" d="M957 359h16v16h-16z"/>
<path fill="#0fddf4" d="M971 359h16v16h-16z"/>
<path fill="#0fd5f3" d="M985 359h16v16h-16z"/>
<path fill="#0ecbf0" d="M999 359h16v16h-16z"/>
<path fill="#0ebceb" d="M1013 359h16v16h-16z"/>
<path fill="#0da7e0" d="M1027 359h16v16h-16z"/>
<path fill="#0d93d5" d="M1041 359h16v16h-16z"/>
<path fill="#0d9edb" d="M1055 359h16v16h-16z"/>
<path fill="#0ebeeb" d="M1069 359h16v16h-16z"/>
<path fill="#0fdff9" d="M1083 359h16v16h-16z"/>
<path fill="#0ffaff" d="M1097 359h16v16h-16z"/>
<path fill="#0fffe9" d="M1111 359h16v16h-16z"/>
<path fill="#0fffc6" d="M1125 359h16v16h-16z"/>
<path fill="#0fff9a" d="M1139 359h16v16h-16z"/>
<path fill="#0fff69" d="M1153 359h16v16h-16z"/>
<path fill="#0ffe40" d="M1167 359h16v16h-16z"/>
<path fill="#0ffc26" d="M1181 359h16v16h-16z"/>
<path fill="#0ffa14" d="M1195 359h16v16h-16z"/>
<path fill="#19f90f" d="M1209 359h16v16h-16z"/>
<path fill="#0fffa9" d="M803 373h16v16h-16z"/>
<path fill="#0ff4a8" d="M817 373h16v16h-16z"/>
<path fill="#0ff3ae" d="M831 373h16v16h-16z"/>
<path fill="#0ff2b5" d="M845 373h16v16h-16z"/>
<path fill="#0ef1bd" d="M859 373h16v16h-16z"/>
<path fill="#0ef1c8" d="M873 373h16v16h-16z"/>
<path fill="#0ef1d7" d="M887 373h16v16h-16z"/>
<path fill="#0ff2ed" d="M901 373h16v16h-16z"/>
<path fill="#0fe3f4" d="M915 373h16v16h-16z"/>
<path fill="#0fd4f5" d="M929 373h16v16h-16z"/>
<path fill="#0fcaf3" d="M943 373h16v16h-16z"/>
<path fill="#0ec3f1" d="M957 373h16v16h-16z"/>
<path fill="#0ebfef" d="M971 373h16v16h-16z"/>
<path fill="#0ebbee" d="M985 373h16v16h-16z"/>
<path fill="#0eb5ed" d="M999 373h16v16h-16z"/>
<path fill="#0eace8" d="M1013 373h16v16h-16z"/>
<path fill="#0d9de0" d="M1027 373h16v16h-16z"/>
<path fill="#0d94d9" d="M1041 373h16v16h-16z"/>
<path fill="#0da1df" d="M1055 373h16v16h-16z"/>
<path fill="#0ec0ed" d="M1069 373h16v16h-16z"/>
<path fill="#0fe4fa" d="M1083 373h16v16h-16z"/>
<path fill="#0ffffb" d="M1097 373h16v16h-16z"/>
<path fill="#0fffde" d="M1111 373h16v16h-16z"/>
<path fill="#0fffba" d="M1125 373h16v16h-16z"/>
<path fill="#0fff8e" d="M1139 373h16v16h-16z"/>
<path fill="#0fff5b" d="M1153 373h16v16h-16z"/>
<path fill="#0ffc2c" d="M1167 373h16v16h-16z"/>
<path fill="#0ffa11" d="M1181 373h16v16h-16z"/>
<path fill="#1ef90f" d="M1195 373h16v16h-16z"/>
<path fill="#2cf70f" d="M1209 373h16v16h-16z"/>
<path fill="#0fffaa" d="M775 387h16v16h-16z"/>
<path fill="#0ff4a9" d="M789 387h16v16h-16z"/>
<path fill="#0ff3ae" d="M803 387h16v16h-16z"/>
<path fill="#0ff2b4" d="M817 387h16v16h-16z"/>
<path fill="#0ef0ba" d="M831 387h16v16h-16z"/>
<path fill="#0eefc1" d="M845 387h16v16h-16z"/>
<path fill="#0eeeca" d="M859 387h16v16h-16z"/>
<path fill="#0eedd6" d="M873 387h16v16h-16z"/>
<path fill="#0eede6" d="M887 387h16v16h-16z"/>
<path fill="#0edcee" d="M901 387h16v16h-16z"/>
<path fill="#0ec3f0" d="M915 387h16v16h-16z"/>
<path fill="#0eb5f0" d="M929 387h16v16h-16z"/>
<path fill="#0eaff0" d="M943 387h16v16h-16z"/>
<path fill="#0eacee" d="M957 387h16v16h-16z"/>
<path fill="#0eabed" d="M971 387h16v16h-16z"/>
<path fill="#0eaced" d="M985 387h16v16h-16z"/>
<path fill="#0eacec" d="M999 387h16v16h-16z"/>
<path fill="#0ea9ea" d="M1013 387h16v16h-16z"/>
<path fill="#0ea6e6" d="M1027 387h16v16h-16z"/>
<path fill="#0eabe6" d="M1041 387h16v16h-16z"/>
<path fill="#0ebded" d="M1055 387h16v16h-16z"/>
<path fill="#0fdbf7" d="M1069 387h16v16h-16z"/>
<path fill="#0ffbfe" d="M1083 387h16v16h-16z"/>
<path fill="#0fffe7" d="M1097 387h16v16h-16z"/>
<path fill="#0fffca" d="M1111 387h16v16h-16z"/>
<path fill="#0fffaa" d="M1125 387h16v16h-16z"/>
<path fill="#0fff84" d="M1139 387h16v16h-16z"/>
<path fill="#0ffe53" d="M1153 387h16v16h-16z"/>
<path fill="#0ffb26" d="M1167 387h16v16h-16z"/>
<path fill="#16f90f" d="M1181 387h16v16h-16z"/>
<path fill="#2af80f" d="M1195 387h16v16h-16z"/>
<path fill="#39f60f" d="M1209 387h16v16h-16z"/>
<path fill="#0fffa4" d="M733 401h16v16h-16z"/>
<path fill="#0fffa9" d="M747 401h16v16h-16z"/>
<path fill="#0ff5a8" d="M761 401h16v16h-16z"/>
<path fill="#0ff4ae" d="M775 401h16v16h-16z"/>
<path fill="#0ff3b5" d="M789 401h16v16h-16z"/>
<path fill="#0ef2bb" d="M803 401h16v16h-16z"/>
<path fill="#0ef0c1" d="M817 401h16v16h-16z"/>
<path fill="#0eefc8" d="M831 401h16v16h-16z"/>
<path fill="#0eedcf" d="M845 401h16v16h-16z"/>
<path fill="#0eecd9" d="M859 401h16v16h-16z"/>
<path fill="#0eebe7" d="M873 401h16v16h-16z"/>
<path fill="#0edbea" d="M887 401h16v16h-16z"/>
<path fill="#0ec2eb" d="M901 401h16v16h-16z"/>
<path fill="#0ea9ed" d="M915 401h16v16h-16z"/>
<path fill="#0ea1ee" d="M929 401h16v16h-16z"/>
<path fill="#0ea2ee" d="M943 401h16v16h-16z"/>
<path fill="#0ea4ee" d="M957 401h16v16h-16z"/>
<path fill="#0ea8ee" d="M971 401h16v16h-16z"/>
<path fill="#0eacee" d="M985 401h16v16h-16z"/>
<path fill="#0eb0ef" d="M999 401h16v16h-16z"/>
<path fill="#0eb5ef" d="M1013 401h16v16h-16z"/>
<path fill="#0ebdef" d="M1027 401h16v16h-16z"/>
<path fill="#0ecdf2" d="M1041 401h16v16h-16z"/>
<path fill="#0fe6f9" d="M1055 401h16v16h-16z"/>
<path fill="#0ffffa" d="M1069 401h16v16h-16z"/>
<path fill="#0fffe1" d="M1083 401h16v16h-16z"/>
<path fill="#0fffc8" d="M1097 401h16v16h-16z"/>
<path fill="#0fffae" d="M1111 401h16v16h-16z"/>
<path fill="#0fff92" d="M1125 401h16v16h-16z"/>
<path fill="#0fff71" d="M1139 401h16v16h-16z"/>
<path fill="#0ffd49" d="M1153 401h16v16h-16z"/>
<path fill="#0ffb22" d="M1167 401h16v16h-16z"/>
<path fill="#19f90f" d="M1181 401h16v16h-16z"/>
<path fill="#2ff70f" d="M1195 401h16v16h-16z"/>
<path fill="#0fffa7" d="M705 415h16v16h-16z"/>
<path fill="#0fffaa" d="M719 415h16v16h-16z"/>
<path fill="#0ffeae" d="M733 415h16v16h-16z"/>
<path fill="#0ff4ac" d="M747 415h16v16h-16z"/>
<path fill="#0ff3b3" d="M761 415h16v16h-16z"/>
<path fill="#0ff2bb" d="M775 415h16v16h-16z"/>
<path fill="#0ef2c3" d="M789 415h16v16h-16z"/>
<path fill="#0ef0ca" d="M803 415h16v16h-16z"/>
<path fill="#0eefd1" d="M817 415h16v16h-16z"/>
<path fill="#0eedd6" d="M831 415h16v16h-16z"/>
<path fill="#0eecde" d="M845 415h16v16h-16z"/>
<path fill="#0eebe8" d="M859 415h16v16h-16z"/>
<path fill="#0edeea" d="M873 415h16v16h-16z"/>
<path fill="#0ecbe9" d="M887 415h16v16h-16z"/>
<path fill="#0eb5ea" d="M901 415h16v16h-16z"/>
<path fill="#0ea6ec" d="M915 415h16v16h-16z"/>
<path fill="#0ea2ee" d="M929 415h16v16h-16z"/>
<path fill="#0ea6ef" d="M943 415h16v16h-16z"/>
<path fill="#0eacf0" d="M957 415h16v16h-16z"/>
<path fill="#0eb3f0" d="M971 415h16v16h-16z"/>
<path fill="#0ebbf1" d="M985 415h16v16h-16z"/>
<path fill="#0fc3f2" d="M999 415h16v16h-16z"/>
<path fill="#0fcdf4" d="M1013 415h16v16h-16z"/>
<path fill="#0fdef5" d="M1027 415h16v16h-16z"/>
<path fill="#0ff6f8" d="M1041 415h16v16h-16z"/>
<path fill="#0ffde7" d="M1055 415h16v16h-16z"/>
<path fill="#0fffd0" d="M1069 415h16v16h-16z"/>
<path fill="#0fffb8" d="M1083 415h16v16h-16z"/>
<path fill="#0fffa2" d="M1097 415h16v16h-16z"/>
<path fill="#0fff8b" d="M1111 415h16v16h-16z"/>
<path fill="#0fff73" d="M1125 415h16v16h-16z"/>
<path fill="#0fff58" d="M1139 415h16v16h-16z"/>
<path fill="#0ffc3a" d="M1153 415h16v16h-16z"/>
<path fill="#0ffa1c" d="M1167 415h16v16h-16z"/>
<path fill="#1df80f" d="M1181 415h16v16h-16z"/>
<path fill="#33f70f" d="M1195 415h16v16h-16z"/>
<path fill="#0fffac" d="M677 429h16v16h-16z"/>
<path fill="#0ffeae" d="M691 429h16v16h-16z"/>
<path fill="#0ff3aa" d="M705 429h16v16h-16z"/>
<path fill="#0ff3ae" d="M719 429h16v16h-16z"/>
<path fill="#0ff2b2" d="M733 429h16v16h-16z"/>
<path fill="#0ff2b8" d="M747 429h16v16h-16z"/>
<path fill="#0ef2c0" d="M761 429h16v16h-16z"/>
<path fill="#0ef1c9" d="M775 429h16v16h-16z"/>
<path fill="#0ef1d3" d="M789 429h16v16h-16z"/>
<path fill="#0ef0db" d="M803 429h16v16h-16z"/>
<path fill="#0eefe1" d="M817 429h16v16h-16z"/>
<path fill="#0eede6" d="M831 429h16v16h-16z"/>
<path fill="#0eecec" d="M845 429h16v16h-16z"/>
<path fill="#0ee1eb" d="M859 429h16v16h-16z"/>
<path fill="#0ed4ea" d="M873 429h16v16h-16z"/>
<path fill="#0ec6ea" d="M887 429h16v16h-16z"/>
<path fill="#0eb8eb" d="M901 429h16v16h-16z"/>
<path fill="#0eb2ed" d="M915 429h16v16h-16z"/>
<path fill="#0eb3f0" d="M929 429h16v16h-16z"/>
<path fill="#0eb9f1" d="M943 429h16v16h-16z"/>
<path fill="#0fc1f2" d="M957 429h16v16h-16z"/>
<path fill="#0fcbf3" d="M971 429h16v16h-16z"/>
<path fill="#0fd6f4" d="M985 429h16v16h-16z"/>
<path fill="#0fe2f6" d="M999 429h16v16h-16z"/>
<path fill="#0ff1f7" d="M1013 429h16v16h-16z"/>
<path fill="#0ff9ea" d="M1027 429h16v16h-16z"/>
<path fill="#0ffad2" d="M1041 429h16v16h-16z"/>
<path fill="#0ffcb9" d="M1055 429h16v16h-16z"/>
<path fill="#0fffa1" d="M1069 429h16v16h-16z"/>
<path fill="#0fff8b" d="M1083 429h16v16h-16z"/>
<path fill="#0fff77" d="M1097 429h16v16h-16z"/>
<path fill="#0fff64" d="M1111 429h16v16h-16z"/>
<path fill="#0fff51" d="M1125 429h16v16h-16z"/>
<path fill="#0ffd3c" d="M1139 429h16v16h-16z"/>
<path fill="#0ffb27" d="M1153 429h16v16h-16z"/>
<path fill="#0ffa12" d="M1167 429h16v16h-16z"/>
<path fill="#23f80f" d="M1181 429h16v16h-16z"/>
<path fill="#38f70f" d="M1195 429h16v16h-16z"/>
<path fill="#0ff4a9" d="M649 443h16v16h-16z"/>
<path fill="#0ff4a9" d="M663 443h16v16h-16z"/>
<path fill="#0ff3ac" d="M677 443h16v16h-16z"/>
<path fill="#0ff2b0" d="M691 443h16v16h-16z"/>
<path fill="#0ef1b5" d="M705 443h16v16h-16z"/>
<path fill="#0ef1bb" d="M719 443h16v16h-16z"/>
<path fill="#0ef0bf" d="M733 443h16v16h-16z"/>
<path fill="#0ef0c5" d="M747 443h16v16h-16z"/>
<path fill="#0ef0cd" d="M761 443h16v16h-16z"/>
<path fill="#0ef0d8" d="M775 443h16v16h-16z"/>
<path fill="#0ef0e3" d="M789 443h16v16h-16z"/>
<path fill="#0ef0ed" d="M803 443h16v16h-16z"/>
<path fill="#0eecef" d="M817 443h16v16h-16z"/>
<path fill="#0ee7ee" d="M831 443h16v16h-16z"/>
<path fill="#0ee2ed" d="M845 443h16v16h-16z"/>
<path fill="#0edbec" d="M859 443h16v16h-16z"/>
<path fill="#0ed3ec" d="M873 443h16v16h-16z"/>
<path fill="#0eccec" d="M887 443h16v16h-16z"/>
<path fill="#0ec7ee" d="M901 443h16v16h-16z"/>
<path fill="#0ec8f1" d="M915 443h16v16h-16z"/>
<path fill="#0fcef3" d="M929 443h16v16h-16z"/>
<path fill="#0fd5f5" d="M943 443h16v16h-16z"/>
<path fill="#0fdef5" d="M957 443h16v16h-16z"/>
<path fill="#0feaf6" d="M971 443h16v16h-16z"/>
<path fill="#0ff6f4" d="M985 443h16v16h-16z"/>
<path fill="#0ff7e4" d="M999 443h16v16h-16z"/>
<path fill="#0ff8d1" d="M1013 443h16v16h-16z"/>
<path fill="#0ff9bb" d="M1027 443h16v16h-16z"/>
<path fill="#0fffa6" d="M1041 443h16v16h-16z"/>
<path fill="#0fff8a" d="M1055 443h16v16h-16z"/>
<path fill="#0fff71" d="M1069 443h16v16h-16z"/>
<path fill="#0fff5d" d="M1083 443h16v16h-16z"/>
<path fill="#0fff4d" d="M1097 443h16v16h-16z"/>
<path fill="#0ffe3e" d="M1111 443h16v16h-16z"/>
<path fill="#0ffd2f" d="M1125 443h16v16h-16z"/>
<path fill="#0ffb20" d="M1139 443h16v16h-16z"/>
<path fill="#0ffa12" d="M1153 443h16v16h-16z"/>
<path fill="#1bf90f" d="M1167 443h16v16h-16z"/>
<path fill="#2df80f" d="M1181 443h16v16h-16z"/>
<path fill="#0ff3b4" d="M621 457h16v16h-16z"/>
<path fill="#0ff3af" d="M635 457h16v16h-16z"/>
<path fill="#0ff3ae" d="M649 457h16v16h-16z"/>
<path fill="#0ff2b0" d="M663 457h16v16h-16z"/>
<path fill="#0ef1b6" d="M677 457h16v16h-16z"/>
<path fill="#0ef0bd" d="M691 457h16v16h-16z"/>
<path fill="#0eefc4" d="M705 457h16v16h-16z"/>
<path fill="#0eeecb" d="M719 457h16v16h-16z"/>
<path fill="#0eeed1" d="M733 457h16v16h-16z"/>
<path fill="#0eeed5" d="M747 457h16v16h-16z"/>
<path fill="#0eeedd" d="M761 457h16v16h-16z"/>
<path fill="#0eefe7" d="M775 457h16v16h-16z"/>
<path fill="#0eedef" d="M789 457h16v16h-16z"/>
<path fill="#0ee4f0" d="M803 457h16v16h-16z"/>
<path fill="#0edeef" d="M817 457h16v16h-16z"/>
<path fill="#0eddef" d="M831 457h16v16h-16z"/>
<path fill="#0edcee" d="M845 457h16v16h-16z"/>
<path fill="#0edaee" d="M859 457h16v16h-16z"/>
<path fill="#0ed7ee" d="M873 457h16v16h-16z"/>
<path fill="#0ed7ef" d="M887 457h16v16h-16z"/>
<path fill="#0edaf1" d="M901 457h16v16h-16z"/>
<path fill="#0fe2f4" d="M915 457h16v16h-16z"/>
<path fill="#0fedf7" d="M929 457h16v16h-16z"/>
<path fill="#0ff4f7" d="M943 457h16v16h-16z"/>
<path fill="#0ff7f1" d="M957 457h16v16h-16z"/>
<path fill="#0ff7e3" d="M971 457h16v16h-16z"/>
<path fill="#0ff7d2" d="M985 457h16v16h-16z"/>
<path fill="#0ff8bc" d="M999 457h16v16h-16z"/>
<path fill="#0fffa9" d="M1013 457h16v16h-16z"/>
<path fill="#0fff92" d="M1027 457h16v16h-16z"/>
<path fill="#0fff79" d="M1041 457h16v16h-16z"/>
<path fill="#0fff5f" d="M1055 457h16v16h-16z"/>
<path fill="#0ffe45" d="M1069 457h16v16h-16z"/>
<path fill="#0ffd35" d="M1083 457h16v16h-16z"/>
<path fill="#0ffd2a" d="M1097 457h16v16h-16z"/>
<path fill="#0ffc1f" d="M1111 457h16v16h-16z"/>
<path fill="#0ffb12" d="M1125 457h16v16h-16z"/>
<path fill="#16fa0f" d="M1139 457h16v16h-16z"/>
<path fill="#1ff90f" d="M1153 457h16v16h-16z"/>
<path fill="#2bf80f" d="M1167 457h16v16h-16z"/>
<path fill="#38f70f" d="M1181 457h16v16h-16z"/>
<path fill="#0ff2bd" d="M607 471h16v16h-16z"/>
<path fill="#0ff3b6" d="M621 471h16v16h-16z"/>
<path fill="#0ff3b3" d="M635 471h16v16h-16z"/>
<path fill="#0ff2b4" d="M649 471h16v16h-16z"/>
<path fill="#0ef1b9" d="M663 471h16v16h-16z"/>
<path fill="#0ef0c1" d="M677 471h16v16h-16z"/>
<path fill="#0eeecc" d="M691 471h16v16h-16z"/>
<path fill="#0eedd7" d="M705 471h16v16h-16z"/>
<path fill="#0eebe0" d="M719 471h16v16h-16z"/>
<path fill="#0eebe7" d="M733 471h16v16h-16z"/>
<path fill="#0eeaeb" d="M747 471h16v16h-16z"/>
<path fill="#0ee6ec" d="M761 471h16v16h-16z"/>
<path fill="#0ee2ed" d="M775 471h16v16h-16z"/>
<path fill="#0edfee" d="M789 471h16v16h-16z"/>
<path fill="#0edbef" d="M803 471h16v16h-16z"/>
<path fill="#0ed9ef" d="M817 471h16v16h-16z"/>
<path fill="#0edaef" d="M831 471h16v16h-16z"/>
<path fill="#0edcef" d="M845 471h16v16h-16z"/>
<path fill="#0eddef" d="M859 471h16v16h-16z"/>
<path fill="#0edef0" d="M873 471h16v16h-16z"/>
<path fill="#0ee3f1" d="M887 471h16v16h-16z"/>
<path fill="#0febf4" d="M901 471h16v16h-16z"/>
<path fill="#0ff6f5" d="M915 471h16v16h-16z"/>
<path fill="#0ff8ec" d="M929 471h16v16h-16z"/>
<path fill="#0ff9e3" d="M943 471h16v16h-16z"/>
<path fill="#0ff8d7" d="M957 471h16v16h-16z"/>
<path fill="#0ff8c7" d="M971 471h16v16h-16z"/>
<path fill="#0ff7b3" d="M985 471h16v16h-16z"/>
<path fill="#0fffa0" d="M999 471h16v16h-16z"/>
<path fill="#0fff86" d="M1013 471h16v16h-16z"/>
<path fill="#0fff6f" d="M1027 471h16v16h-16z"/>
<path fill="#0fff57" d="M1041 471h16v16h-16z"/>
<path fill="#0ffd3f" d="M1055 471h16v16h-16z"/>
<path fill="#0ffb29" d="M1069 471h16v16h-16z"/>
<path fill="#0ffa1c" d="M1083 471h16v16h-16z"/>
<path fill="#0ffa13" d="M1097 471h16v16h-16z"/>
<path fill="#14fa0f" d="M1111 471h16v16h-16z"/>
<path fill="#1ef90f" d="M1125 471h16v16h-16z"/>
<path fill="#26f90f" d="M1139 471h16v16h-16z"/>
<path fill="#2ef80f" d="M1153 471h16v16h-16z"/>
<path fill="#37f80f" d="M1167 471h16v16h-16z"/>
<path fill="#0eefdc" d="M579 485h16v16h-16z"/>
<path fill="#0ef0ca" d="M593 485h16v16h-16z"/>
<path fill="#0ef2bf" d="M607 485h16v16h-16z"/>
<path fill="#0ff2ba" d="M621 485h16v16h-16z"/>
<path fill="#0ff2ba" d="M635 485h16v16h-16z"/>
<path fill="#0ef1bd" d="M649 485h16v16h-16z"/>
<path fill="#0ef0c4" d="M663 485h16v16h-16z"/>
<path fill="#0eeecf" d="M677 485h16v16h-16z"/>
<path fill="#0eecdd" d="M691 485h16v16h-16z"/>
<path fill="#0ee9ea" d="M705 485h16v16h-16z"/>
<path fill="#0edae8" d="M719 485h16v16h-16z"/>
<path fill="#0ecfe7" d="M733 485h16v16h-16z"/>
<path fill="#0ec9e8" d="M747 485h16v16h-16z"/>
<path fill="#0ec8e9" d="M761 485h16v16h-16z"/>
<path fill="#0ecdeb" d="M775 485h16v16h-16z"/>
<path fill="#0ed3ed" d="M789 485h16v16h-16z"/>
<path fill="#0ed6ef" d="M803 485h16v16h-16z"/>
<path fill="#0ed8ef" d="M817 485h16v16h-16z"/>
<path fill="#0edbef" d="M831 485h16v16h-16z"/>
<path fill="#0edfef" d="M845 485h16v16h-16z"/>
<path fill="#0ee2f0" d="M859 485h16v16h-16z"/>
<path fill="#0ee6f1" d="M873 485h16v16h-16z"/>
<path fill="#0feef3" d="M887 485h16v16h-16z"/>
<path fill="#0ff5f0" d="M901 485h16v16h-16z"/>
<path fill="#0ff7e7" d="M915 485h16v16h-16z"/>
<path fill="#0ff8db" d="M929 485h16v16h-16z"/>
<path fill="#0ff8cf" d="M943 485h16v16h-16z"/>
<path fill="#0ff8c0" d="M957 485h16v16h-16z"/>
<path fill="#0ff7af" d="M971 485h16v16h-16z"/>
<path fill="#0fff9f" d="M985 485h16v16h-16z"/>
<path fill="#0fff87" d="M999 485h16v16h-16z"/>
<path fill="#0fff6f" d="M1013 485h16v16h-16z"/>
<path fill="#0ffe58" d="M1027 485h16v16h-16z"/>
<path fill="#0ffd41" d="M1041 485h16v16h-16z"/>
<path fill="#0ffb2d" d="M1055 485h16v16h-16z"/>
<path fill="#0ffa1c" d="M1069 485h16v16h-16z"/>
<path fill="#0ffa10" d="M1083 485h16v16h-16z"/>
<path fill="#16f90f" d="M1097 485h16v16h-16z"/>
<path fill="#1ef90f" d="M1111 485h16v16h-16z"/>
<path fill="#26f90f" d="M1125 485h16v16h-16z"/>
<path fill="#2ef90f" d="M1139 485h16v16h-16z"/>
<path fill="#36f80f" d="M1153 485h16v16h-16z"/>
<path fill="#3ff70f" d="M1167 485h16v16h-16z"/>
<path fill="#0ee3ec" d="M565 499h16v16h-16z"/>
<path fill="#0eeede" d="M579 499h16v16h-16z"/>
<path fill="#0ef0cc" d="M593 499h16v16h-16z"/>
<path fill="#0ef1c3" d="M607 499h16v16h-16z"/>
<path fill="#0ef1c1" d="M621 499h16v16h-16z"/>
<path fill="#0ef1c4" d="M635 499h16v16h-16z"/>
<path fill="#0ef0ca" d="M649 499h16v16h-16z"/>
<path fill="#0eefd3" d="M663 499h16v16h-16z"/>
<path fill="#0eede0" d="M677 499h16v16h-16z"/>
<path fill="#0ee4ea" d="M691 499h16v16h-16z"/>
<path fill="#0ecfe7" d="M705 499h16v16h-16z"/>
<path fill="#0ebde5" d="M719 499h16v16h-16z"/>
<path fill="#0eb0e4" d="M733 499h16v16h-16z"/>
<path fill="#0ea9e4" d="M747 499h16v16h-16z"/>
<path fill="#0eace6" d="M761 499h16v16h-16z"/>
<path fill="#0eb7e9" d="M775 499h16v16h-16z"/>
<path fill="#0ec7ec" d="M789 499h16v16h-16z"/>
<path fill="#0ed1ee" d="M803 499h16v16h-16z"/>
<path fill="#0ed8ef" d="M817 499h16v16h-16z"/>
<path fill="#0edef0" d="M831 499h16v16h-16z"/>
<path fill="#0ee4f0" d="M845 499h16v16h-16z"/>
<path fill="#0ee8f1" d="M859 499h16v16h-16z"/>
<path fill="#0feef2" d="M873 499h16v16h-16z"/>
<path fill="#0ff3ee" d="M887 499h16v16h-16z"/>
<path fill="#0ff5e4" d="M901 499h16v16h-16z"/>
<path fill="#0ff6d9" d="M915 499h16v16h-16z"/>
<path fill="#0ff7cb" d="M929 499h16v16h-16z"/>
<path fill="#0ff7bd" d="M943 499h16v16h-16z"/>
<path fill="#0ff7ad" d="M957 499h16v16h-16z"/>
<path fill="#0fffa0" d="M971 499h16v16h-16z"/>
<path fill="#0fff8b" d="M985 499h16v16h-16z"/>
<path fill="#0fff75" d="M999 499h16v16h-16z"/>
<path fill="#0ffe5e" d="M1013 499h16v16h-16z"/>
<path fill="#0ffd48" d="M1027 499h16v16h-16z"/>
<path fill="#0ffc34" d="M1041 499h16v16h-16z"/>
<path fill="#0ffb23" d="M1055 499h16v16h-16z"/>
<path fill="#0ffa15" d="M1069 499h16v16h-16z"/>
<path fill="#13f90f" d="M1083 499h16v16h-16z"/>
<path fill="#1af90f" d="M1097 499h16v16h-16z"/>
<path fill="#20f90f" d="M1111 499h16v16h-16z"/>
<path fill="#28f90f" d="M1125 499h16v16h-16z"/>
<path fill="#31f90f" d="M1139 499h16v16h-16z"/>
<path fill="#3af80f" d="M1153 499h16v16h-16z"/>
<path fill="#0ebce9" d="M551 513h16v16h-16z"/>
<path fill="#0edceb" d="M565 513h16v16h-16z"/>
<path fill="#0eede2" d="M579 513h16v16h-16z"/>
<path fill="#0eefd1" d="M593 513h16v16h-16z"/>
<path fill="#0ef0ca" d="M607 513h16v16h-16z"/>
<path fill="#0ef0cb" d="M621 513h16v16h-16z"/>
<path fill="#0ef0d2" d="M635 513h16v16h-16z"/>
<path fill="#0eefdb" d="M649 513h16v16h-16z"/>
<path fill="#0eede7" d="M663 513h16v16h-16z"/>
<path fill="#0ee1eb" d="M677 513h16v16h-16z"/>
<path fill="#0ecce8" d="M691 513h16v16h-16z"/>
<path fill="#0eb8e5" d="M705 513h16v16h-16z"/>
<path fill="#0ea8e3" d="M719 513h16v16h-16z"/>
<path fill="#0e9be2" d="M733 513h16v16h-16z"/>
<path fill="#0e94e2" d="M747 513h16v16h-16z"/>
<path fill="#0e97e4" d="M761 513h16v16h-16z"/>
<path fill="#0ea9e8" d="M775 513h16v16h-16z"/>
<path fill="#0ebcec" d="M789 513h16v16h-16z"/>
<path fill="#0ecdef" d="M803 513h16v16h-16z"/>
<path fill="#0ed9f0" d="M817 513h16v16h-16z"/>
<path fill="#0ee2f0" d="M831 513h16v16h-16z"/>
<path fill="#0eeaf1" d="M845 513h16v16h-16z"/>
<path fill="#0ef0f2" d="M859 513h16v16h-16z"/>
<path fill="#0ff2ed" d="M873 513h16v16h-16z"/>
<path fill="#0ff3e3" d="M887 513h16v16h-16z"/>
<path fill="#0ff5d7" d="M901 513h16v16h-16z"/>
<path fill="#0ff5ca" d="M915 513h16v16h-16z"/>
<path fill="#0ff6bb" d="M929 513h16v16h-16z"/>
<path fill="#0ff6ac" d="M943 513h16v16h-16z"/>
<path fill="#0fffa1" d="M957 513h16v16h-16z"/>
<path fill="#0fff8e" d="M971 513h16v16h-16z"/>
<path fill="#0fff79" d="M985 513h16v16h-16z"/>
<path fill="#0ffe65" d="M999 513h16v16h-16z"/>
<path fill="#0ffd51" d="M1013 513h16v16h-16z"/>
<path fill="#0ffc3d" d="M1027 513h16v16h-16z"/>
<path fill="#0ffb2c" d="M1041 513h16v16h-16z"/>
<path fill="#0ffa1d" d="M1055 513h16v16h-16z"/>
<path fill="#0ffa12" d="M1069 513h16v16h-16z"/>
<path fill="#14fa0f" d="M1083 513h16v16h-16z"/>
<path fill="#19fa0f" d="M1097 513h16v16h-16z"/>
<path fill="#1ffa0f" d="M1111 513h16v16h-16z"/>
<path fill="#27f90f" d="M1125 513h16v16h-16z"/>
<path fill="#31f90f" d="M1139 513h16v16h-16z"/>
<path fill="#3cf80f" d="M1153 513h16v16h-16z"/>
<path fill="#0e7ee4" d="M523 527h16v16h-16z"/>
<path fill="#0e95e5" d="M537 527h16v16h-16z"/>
<path fill="#0eb0e7" d="M551 527h16v16h-16z"/>
<path fill="#0ecfea" d="M565 527h16v16h-16z"/>
<path fill="#0eeceb" d="M579 527h16v16h-16z"/>
<path fill="#0eeed9" d="M593 527h16v16h-16z"/>
<path fill="#0eefd7" d="M607 527h16v16h-16z"/>
<path fill="#0eefdc" d="M621 527h16v16h-16z"/>
<path fill="#0eefe3" d="M635 527h16v16h-16z"/>
<path fill="#0eeded" d="M649 527h16v16h-16z"/>
<path fill="#0edaeb" d="M663 527h16v16h-16z"/>
<path fill="#0ec8e9" d="M677 527h16v16h-16z"/>
<path fill="#0eb8e6" d="M691 527h16v16h-16z"/>
<path fill="#0ea9e5" d="M705 527h16v16h-16z"/>
<path fill="#0e9ee3" d="M719 527h16v16h-16z"/>
<path fill="#0e96e2" d="M733 527h16v16h-16z"/>
<path fill="#0e93e3" d="M747 527h16v16h-16z"/>
<path fill="#0e98e5" d="M761 527h16v16h-16z"/>
<path fill="#0eaae9" d="M775 527h16v16h-16z"/>
<path fill="#0ebeed" d="M789 527h16v16h-16z"/>
<path fill="#0ed0f0" d="M803 527h16v16h-16z"/>
<path fill="#0edff1" d="M817 527h16v16h-16z"/>
<path fill="#0eebf1" d="M831 527h16v16h-16z"/>
<path fill="#0ef1ee" d="M845 527h16v16h-16z"/>
<path fill="#0ff2e7" d="M859 527h16v16h-16z"/>
<path fill="#0ff2e0" d="M873 527h16v16h-16z"/>
<path fill="#0ff3d5" d="M887 527h16v16h-16z"/>
<path fill="#0ff4c8" d="M901 527h16v16h-16z"/>
<path fill="#0ff5ba" d="M915 527h16v16h-16z"/>
<path fill="#0ff5ab" d="M929 527h16v16h-16z"/>
<path fill="#0fffa1" d="M943 527h16v16h-16z"/>
<path fill="#0ffe8f" d="M957 527h16v16h-16z"/>
<path fill="#0ffe7c" d="M971 527h16v16h-16z"/>
<path fill="#0ffd68" d="M985 527h16v16h-16z"/>
<path fill="#0ffd56" d="M999 527h16v16h-16z"/>
<path fill="#0ffc44" d="M1013 527h16v16h-16z"/>
<path fill="#0ffb33" d="M1027 527h16v16h-16z"/>
<path fill="#0ffb25" d="M1041 527h16v16h-16z"/>
<path fill="#0ffa18" d="M1055 527h16v16h-16z"/>
<path fill="#0ffa0f" d="M1069 527h16v16h-16z"/>
<path fill="#15fa0f" d="M1083 527h16v16h-16z"/>
<path fill="#1afa0f" d="M1097 527h16v16h-16z"/>
<path fill="#1ffa0f" d="M1111 527h16v16h-16z"/>
<path fill="#28fa0f" d="M1125 527h16v16h-16z"/>
<path fill="#32f90f" d="M1139 527h16v16h-16z"/>
<path fill="#0e22e5" d="M299 541h16v16h-16z"/>
<path fill="#0e29e5" d="M313 541h16v16h-16z"/>
<path fill="#0e2de6" d="M327 541h16v16h-16z"/>
<path fill="#0e2de6" d="M341 541h16v16h-16z"/>
<path fill="#0e2ce6" d="M355 541h16v16h-16z"/>
<path fill="#0e2ae6" d="M369 541h16v16h-16z"/>
<path fill="#0e2de6" d="M383 541h16v16h-16z"/>
<path fill="#0e61e4" d="M425 541h16v16h-16z"/>
<path fill="#0e69e4" d="M439 541h16v16h-16z"/>
<path fill="#0e68e3" d="M453 541h16v16h-16z"/>
<path fill="#0e64e3" d="M467 541h16v16h-16z"/>
<path fill="#0e6de2" d="M509 541h16v16h-16z"/>
<path fill="#0e7ae3" d="M523 541h16v16h-16z"/>
<path fill="#0e8ce5" d="M537 541h16v16h-16z"/>
<path fill="#0ea2e6" d="M551 541h16v16h-16z"/>
<path fill="#0ebde9" d="M565 541h16v16h-16z"/>
<path fill="#0ed9eb" d="M579 541h16v16h-16z"/>
<path fill="#0eebed" d="M593 541h16v16h-16z"/>
<path fill="#0eebed" d="M607 541h16v16h-16z"/>
<path fill="#0ee9ee" d="M621 541h16v16h-16z"/>
<path fill="#0ee6ee" d="M635 541h16v16h-16z"/>
<path fill="#0ed9ec" d="M649 541h16v16h-16z"/>
<path fill="#0ec6ea" d="M663 541h16v16h-16z"/>
<path fill="#0eb6e7" d="M677 541h16v16h-16z"/>
<path fill="#0eade6" d="M691 541h16v16h-16z"/>
<path fill="#0ea8e5" d="M705 541h16v16h-16z"/>
<path fill="#0ea5e5" d="M719 541h16v16h-16z"/>
<path fill="#0ea5e5" d="M733 541h16v16h-16z"/>
<path fill="#0ea7e6" d="M747 541h16v16h-16z"/>
<path fill="#0eaee8" d="M761 541h16v16h-16z"/>
<path fill="#0ebbec" d="M775 541h16v16h-16z"/>
<path fill="#0ecbef" d="M789 541h16v16h-16z"/>
<path fill="#0edcf1" d="M803 541h16v16h-16z"/>
<path fill="#0febf2" d="M817 541h16v16h-16z"/>
<path fill="#0ff2ed" d="M831 541h16v16h-16z"/>
<path fill="#0ff2e0" d="M845 541h16v16h-16z"/>
<path fill="#0ff2d6" d="M859 541h16v16h-16z"/>
<path fill="#0ff2ce" d="M873 541h16v16h-16z"/>
<path fill="#0ff3c4" d="M887 541h16v16h-16z"/>
<path fill="#0ff3b7" d="M901 541h16v16h-16z"/>
<path fill="#0ff4a9" d="M915 541h16v16h-16z"/>
<path fill="#0ffe9f" d="M929 541h16v16h-16z"/>
<path fill="#0ffe8d" d="M943 541h16v16h-16z"/>
<path fill="#0ffe7b" d="M957 541h16v16h-16z"/>
<path fill="#0ffd69" d="M971 541h16v16h-16z"/>
<path fill="#0ffd57" d="M985 541h16v16h-16z"/>
<path fill="#0ffc46" d="M999 541h16v16h-16z"/>
<path fill="#0ffb37" d="M1013 541h16v16h-16z"/>
<path fill="#0ffb29" d="M1027 541h16v16h-16z"/>
<path fill="#0ffa1d" d="M1041 541h16v16h-16z"/>
<path fill="#0ffa14" d="M1055 541h16v16h-16z"/>
<path fill="#11fa0f" d="M1069 541h16v16h-16z"/>
<path fill="#17fa0f" d="M1083 541h16v16h-16z"/>
<path fill="#1cfa0f" d="M1097 541h16v16h-16z"/>
<path fill="#22fa0f" d="M1111 541h16v16h-16z"/>
<path fill="#2af90f" d="M1125 541h16v16h-16z"/>
<path fill="#34f90f" d="M1139 541h16v16h-16z"/>
<path fill="#0e10e5" d="M243 555h16v16h-16z"/>
<path fill="#0e1ee5" d="M257 555h16v16h-16z"/>
<path fill="#0e2de5" d="M271 555h16v16h-16z"/>
<path fill="#0e3ce6" d="M285 555h16v16h-16z"/>
<path fill="#0e48e6" d="M299 555h16v16h-16z"/>
<path fill="#0e51e7" d="M313 555h16v16h-16z"/>
<path fill="#0e55e7" d="M327 555h16v16h-16z"/>
<path fill="#0e55e7" d="M341 555h16v16h-16z"/>
<path fill="#0e52e8" d="M355 555h16v16h-16z"/>
<path fill="#0e4ee8" d="M369 555h16v16h-16z"/>
<path fill="#0e4de8" d="M383 555h16v16h-16z"/>
<path fill="#0e57e8" d="M397 555h16v16h-16z"/>
<path fill="#0e6fe7" d="M411 555h16v16h-16z"/>
<path fill="#0e84e6" d="M425 555h16v16h-16z"/>
<path fill="#0e89e6" d="M439 555h16v16h-16z"/>
<path fill="#0e80e5" d="M453 555h16v16h-16z"/>
<path fill="#0e76e4" d="M467 555h16v16h-16z"/>
<path fill="#0e70e3" d="M481 555h16v16h-16z"/>
<path fill="#0e6fe3" d="M495 555h16v16h-16z"/>
<path fill="#0e74e3" d="M509 555h16v16h-16z"/>
<path fill="#0e7de4" d="M523 555h16v16h-16z"/>
<path fill="#0e88e4" d="M537 555h16v16h-16z"/>
<path fill="#0e97e6" d="M551 555h16v16h-16z"/>
<path fill="#0eabe8" d="M565 555h16v16h-16z"/>
<path fill="#0ebee9" d="M579 555h16v16h-16z"/>
<path fill="#0ec5ea" d="M593 555h16v16h-16z"/>
<path fill="#0ec3ea" d="M607 555h16v16h-16z"/>
<path fill="#0ec9eb" d="M621 555h16v16h-16z"/>
<path fill="#0ed2ed" d="M635 555h16v16h-16z"/>
<path fill="#0eccec" d="M649 555h16v16h-16z"/>
<path fill="#0ebfea" d="M663 555h16v16h-16z"/>
<path fill="#0eb4e8" d="M677 555h16v16h-16z"/>
<path fill="#0eb2e8" d="M691 555h16v16h-16z"/>
<path fill="#0eb6e8" d="M705 555h16v16h-16z"/>
<path fill="#0ebde8" d="M719 555h16v16h-16z"/>
<path fill="#0ec4e8" d="M733 555h16v16h-16z"/>
<path fill="#0ec9ea" d="M747 555h16v16h-16z"/>
<path fill="#0ecfec" d="M761 555h16v16h-16z"/>
<path fill="#0ed8ef" d="M775 555h16v16h-16z"/>
<path fill="#0ee3f1" d="M789 555h16v16h-16z"/>
<path fill="#0feff4" d="M803 555h16v16h-16z"/>
<path fill="#0ff4ec" d="M817 555h16v16h-16z"/>
<path fill="#0ff4de" d="M831 555h16v16h-16z"/>
<path fill="#0ff3cf" d="M845 555h16v16h-16z"/>
<path fill="#0ff2c3" d="M859 555h16v16h-16z"/>
<path fill="#0ff2bb" d="M873 555h16v16h-16z"/>
<path fill="#0ff3b1" d="M887 555h16v16h-16z"/>
<path fill="#0ffdac" d="M901 555h16v16h-16z"/>
<path fill="#0ffd9c" d="M915 555h16v16h-16z"/>
<path fill="#0ffe8b" d="M929 555h16v16h-16z"/>
<path fill="#0ffd79" d="M943 555h16v16h-16z"/>
<path fill="#0ffd68" d="M957 555h16v16h-16z"/>
<path fill="#0ffd56" d="M971 555h16v16h-16z"/>
<path fill="#0ffc46" d="M985 555h16v16h-16z"/>
<path fill="#0ffb37" d="M999 555h16v16h-16z"/>
<path fill="#0ffb2a" d="M1013 555h16v16h-16z"/>
<path fill="#0ffa1f" d="M1027 555h16v16h-16z"/>
<path fill="#0ffa16" d="M1041 555h16v16h-16z"/>
<path fill="#0ffa0f" d="M1055 555h16v16h-16z"/>
<path fill="#15fa0f" d="M1069 555h16v16h-16z"/>
<path fill="#1afa0f" d="M1083 555h16v16h-16z"/>
<path fill="#1ffa0f" d="M1097 555h16v16h-16z"/>
<path fill="#25fa0f" d="M1111 555h16v16h-16z"/>
<path fill="#2df90f" d="M1125 555h16v16h-16z"/>
<path fill="#0e21e5" d="M229 569h16v16h-16z"/>
<path fill="#0e2fe6" d="M243 569h16v16h-16z"/>
<path fill="#0e3ee6" d="M257 569h16v16h-16z"/>
<path fill="#0e51e6" d="M271 569h16v16h-16z"/>
<path fill="#0e63e7" d="M285 569h16v16h-16z"/>
<path fill="#0e73e7" d="M299 569h16v16h-16z"/>
<path fill="#0e7ee8" d="M313 569h16v16h-16z"/>
<path fill="#0e83e8" d="M327 569h16v16h-16z"/>
<path fill="#0e83e9" d="M341 569h16v16h-16z"/>
<path fill="#0e81e9" d="M355 569h16v16h-16z"/>
<path fill="#0e7eea" d="M369 569h16v16h-16z"/>
<path fill="#0e7dea" d="M383 569h16v16h-16z"/>
<path fill="#0e86ea" d="M397 569h16v16h-16z"/>
<path fill="#0e97ea" d="M411 569h16v16h-16z"/>
<path fill="#0ea5ea" d="M425 569h16v16h-16z"/>
<path fill="#0ea3e9" d="M439 569h16v16h-16z"/>
<path fill="#0e98e9" d="M453 569h16v16h-16z"/>
<path fill="#0e91e7" d="M467 569h16v16h-16z"/>
<path fill="#0e89e6" d="M481 569h16v16h-16z"/>
<path fill="#0e85e5" d="M495 569h16v16h-16z"/>
<path fill="#0e89e5" d="M509 569h16v16h-16z"/>
<path fill="#0e8de5" d="M523 569h16v16h-16z"/>
<path fill="#0e90e6" d="M537 569h16v16h-16z"/>
<path fill="#0e96e7" d="M551 569h16v16h-16z"/>
<path fill="#0ea5e8" d="M565 569h16v16h-16z"/>
<path fill="#0eb1e9" d="M579 569h16v16h-16z"/>
<path fill="#0eb1e9" d="M593 569h16v16h-16z"/>
<path fill="#0ea8e8" d="M607 569h16v16h-16z"/>
<path fill="#0eb2e9" d="M621 569h16v16h-16z"/>
<path fill="#0ec6ec" d="M635 569h16v16h-16z"/>
<path fill="#0eceec" d="M649 569h16v16h-16z"/>
<path fill="#0ecbeb" d="M663 569h16v16h-16z"/>
<path fill="#0ec6eb" d="M677 569h16v16h-16z"/>
<path fill="#0ec7eb" d="M691 569h16v16h-16z"/>
<path fill="#0ed3eb" d="M705 569h16v16h-16z"/>
<path fill="#0ee3ec" d="M719 569h16v16h-16z"/>
<path fill="#0eede9" d="M733 569h16v16h-16z"/>
<path fill="#0eeee6" d="M747 569h16v16h-16z"/>
<path fill="#0eefe6" d="M761 569h16v16h-16z"/>
<path fill="#0ef1e8" d="M775 569h16v16h-16z"/>
<path fill="#0ff4e7" d="M789 569h16v16h-16z"/>
<path fill="#0ff6e3" d="M803 569h16v16h-16z"/>
<path fill="#0ff6da" d="M817 569h16v16h-16z"/>
<path fill="#0ff5cc" d="M831 569h16v16h-16z"/>
<path fill="#0ff4bd" d="M845 569h16v16h-16z"/>
<path fill="#0ff3b1" d="M859 569h16v16h-16z"/>
<path fill="#0ff3a7" d="M873 569h16v16h-16z"/>
<path fill="#0ffda4" d="M887 569h16v16h-16z"/>
<path fill="#0ffd98" d="M901 569h16v16h-16z"/>
<path fill="#0ffd89" d="M915 569h16v16h-16z"/>
<path fill="#0ffd78" d="M929 569h16v16h-16z"/>
<path fill="#0ffd66" d="M943 569h16v16h-16z"/>
<path fill="#0ffd55" d="M957 569h16v16h-16z"/>
<path fill="#0ffc45" d="M971 569h16v16h-16z"/>
<path fill="#0ffb37" d="M985 569h16v16h-16z"/>
<path fill="#0ffb29" d="M999 569h16v16h-16z"/>
<path fill="#0ffa1e" d="M1013 569h16v16h-16z"/>
<path fill="#0ffa16" d="M1027 569h16v16h-16z"/>
<path fill="#0ffa0f" d="M1041 569h16v16h-16z"/>
<path fill="#14fa0f" d="M1055 569h16v16h-16z"/>
<path fill="#18fa0f" d="M1069 569h16v16h-16z"/>
<path fill="#1dfa0f" d="M1083 569h16v16h-16z"/>
<path fill="#22fa0f" d="M1097 569h16v16h-16z"/>
<path fill="#29fa0f" d="M1111 569h16v16h-16z"/>
<path fill="#31f90f" d="M1125 569h16v16h-16z"/>
<path fill="#0e40e6" d="M229 583h16v16h-16z"/>
<path fill="#0e50e7" d="M243 583h16v16h-16z"/>
<path fill="#0e61e7" d="M257 583h16v16h-16z"/>
<path fill="#0e78e7" d="M271 583h16v16h-16z"/>
<path fill="#0e8fe8" d="M285 583h16v16h-16z"/>
<path fill="#0ea2e9" d="M299 583h16v16h-16z"/>
<path fill="#0eafe9" d="M313 583h16v16h-16z"/>
<path fill="#0eb5ea" d="M327 583h16v16h-16z"/>
<path fill="#0eb6eb" d="M341 583h16v16h-16z"/>
<path fill="#0eb6eb" d="M355 583h16v16h-16z"/>
<path fill="#0eb5ec" d="M369 583h16v16h-16z"/>
<path fill="#0eb8ec" d="M383 583h16v16h-16z"/>
<path fill="#0ebded" d="M397 583h16v16h-16z"/>
<path fill="#0ec3ed" d="M411 583h16v16h-16z"/>
<path fill="#0ec4ed" d="M425 583h16v16h-16z"/>
<path fill="#0ebaed" d="M439 583h16v16h-16z"/>
<path fill="#0eb9ed" d="M453 583h16v16h-16z"/>
<path fill="#0ebbeb" d="M467 583h16v16h-16z"/>
<path fill="#0eb8ea" d="M481 583h16v16h-16z"/>
<path fill="#0eb3e8" d="M495 583h16v16h-16z"/>
<path fill="#0eb6e8" d="M509 583h16v16h-16z"/>
<path fill="#0eb2e9" d="M523 583h16v16h-16z"/>
<path fill="#0eade9" d="M537 583h16v16h-16z"/>
<path fill="#0eacea" d="M551 583h16v16h-16z"/>
<path fill="#0eb8eb" d="M565 583h16v16h-16z"/>
<path fill="#0ec1ec" d="M579 583h16v16h-16z"/>
<path fill="#0ebfeb" d="M593 583h16v16h-16z"/>
<path fill="#0eb9eb" d="M607 583h16v16h-16z"/>
<path fill="#0ec2eb" d="M621 583h16v16h-16z"/>
<path fill="#0ed5ed" d="M635 583h16v16h-16z"/>
<path fill="#0ee3ee" d="M649 583h16v16h-16z"/>
<path fill="#0eeaee" d="M663 583h16v16h-16z"/>
<path fill="#0eebee" d="M677 583h16v16h-16z"/>
<path fill="#0eedef" d="M691 583h16v16h-16z"/>
<path fill="#0eefe2" d="M705 583h16v16h-16z"/>
<path fill="#0ef0ce" d="M719 583h16v16h-16z"/>
<path fill="#0ef0bf" d="M733 583h16v16h-16z"/>
<path fill="#0ef1be" d="M747 583h16v16h-16z"/>
<path fill="#0ff2c2" d="M761 583h16v16h-16z"/>
<path fill="#0ff3c7" d="M775 583h16v16h-16z"/>
<path fill="#0ff5ca" d="M789 583h16v16h-16z"/>
<path fill="#0ff7c9" d="M803 583h16v16h-16z"/>
<path fill="#0ff7c2" d="M817 583h16v16h-16z"/>
<path fill="#0ff6b6" d="M831 583h16v16h-16z"/>
<path fill="#0ff5a9" d="M845 583h16v16h-16z"/>
<path fill="#0ffea3" d="M859 583h16v16h-16z"/>
<path fill="#0ffd98" d="M873 583h16v16h-16z"/>
<path fill="#0ffd8e" d="M887 583h16v16h-16z"/>
<path fill="#0ffc83" d="M901 583h16v16h-16z"/>
<path fill="#0ffc74" d="M915 583h16v16h-16z"/>
<path fill="#0ffc64" d="M929 583h16v16h-16z"/>
<path fill="#0ffc54" d="M943 583h16v16h-16z"/>
<path fill="#0ffc44" d="M957 583h16v16h-16z"/>
<path fill="#0ffc36" d="M971 583h16v16h-16z"/>
<path fill="#0ffb29" d="M985 583h16v16h-16z"/>
<path fill="#0ffa1e" d="M999 583h16v16h-16z"/>
<path fill="#0ffa15" d="M1013 583h16v16h-16z"/>
<path fill="#10fa0f" d="M1027 583h16v16h-16z"/>
<path fill="#14fa0f" d="M1041 583h16v16h-16z"/>
<path fill="#18fa0f" d="M1055 583h16v16h-16z"/>
<path fill="#1cfa0f" d="M1069 583h16v16h-16z"/>
<path fill="#20fa0f" d="M1083 583h16v16h-16z"/>
<path fill="#26fa0f" d="M1097 583h16v16h-16z"/>
<path fill="#2cf90f" d="M1111 583h16v16h-16z"/>
<path fill="#0e61e8" d="M229 597h16v16h-16z"/>
<path fill="#0e74e8" d="M243 597h16v16h-16z"/>
<path fill="#0ea4e9" d="M271 597h16v16h-16z"/>
<path fill="#0ec0ea" d="M285 597h16v16h-16z"/>
<path fill="#0ed5ea" d="M299 597h16v16h-16z"/>
<path fill="#0ee1eb" d="M313 597h16v16h-16z"/>
<path fill="#0ee7ec" d="M327 597h16v16h-16z"/>
<path fill="#0eeaed" d="M341 597h16v16h-16z"/>
<path fill="#0eebed" d="M355 597h16v16h-16z"/>
<path fill="#0eeeed" d="M369 597h16v16h-16z"/>
<path fill="#0eefea" d="M383 597h16v16h-16z"/>
<path fill="#0eefe8" d="M397 597h16v16h-16z"/>
<path fill="#0ef0eb" d="M411 597h16v16h-16z"/>
<path fill="#0eeff0" d="M425 597h16v16h-16z"/>
<path fill="#0ee9f0" d="M439 597h16v16h-16z"/>
<path fill="#0eecf0" d="M453 597h16v16h-16z"/>
<path fill="#0eefe7" d="M467 597h16v16h-16z"/>
<path fill="#0eefda" d="M481 597h16v16h-16z"/>
<path fill="#0eeed7" d="M495 597h16v16h-16z"/>
<path fill="#0eede2" d="M509 597h16v16h-16z"/>
<path fill="#0ee8ed" d="M523 597h16v16h-16z"/>
<path fill="#0edced" d="M537 597h16v16h-16z"/>
<path fill="#0ed9ef" d="M551 597h16v16h-16z"/>
<path fill="#0ee3f0" d="M565 597h16v16h-16z"/>
<path fill="#0eebf0" d="M579 597h16v16h-16z"/>
<path fill="#0eecef" d="M593 597h16v16h-16z"/>
<path fill="#0eebef" d="M607 597h16v16h-16z"/>
<path fill="#0eeeed" d="M621 597h16v16h-16z"/>
<path fill="#0eefe2" d="M635 597h16v16h-16z"/>
<path fill="#0ef0d8" d="M649 597h16v16h-16z"/>
<path fill="#0ef1cf" d="M663 597h16v16h-16z"/>
<path fill="#0ef2ca" d="M677 597h16v16h-16z"/>
<path fill="#0ef2c7" d="M691 597h16v16h-16z"/>
<path fill="#0ff2bb" d="M705 597h16v16h-16z"/>
<path fill="#0ff2aa" d="M719 597h16v16h-16z"/>
<path fill="#0ffda2" d="M733 597h16v16h-16z"/>
<path fill="#0ffda3" d="M747 597h16v16h-16z"/>
<path fill="#0ffda9" d="M761 597h16v16h-16z"/>
<path fill="#0ff4a8" d="M775 597h16v16h-16z"/>
<path fill="#0ff5ac" d="M789 597h16v16h-16z"/>
<path fill="#0ff6ac" d="M803 597h16v16h-16z"/>
<path fill="#0fffad" d="M817 597h16v16h-16z"/>
<path fill="#0fffa3" d="M831 597h16v16h-16z"/>
<path fill="#0fff98" d="M845 597h16v16h-16z"/>
<path fill="#0ffe8c" d="M859 597h16v16h-16z"/>
<path fill="#0ffd81" d="M873 597h16v16h-16z"/>
<path fill="#0ffc77" d="M887 597h16v16h-16z"/>
<path fill="#0ffc6d" d="M901 597h16v16h-16z"/>
<path fill="#0ffc60" d="M915 597h16v16h-16z"/>
<path fill="#0ffc52" d="M929 597h16v16h-16z"/>
<path fill="#0ffb43" d="M943 597h16v16h-16z"/>
<path fill="#0ffb36" d="M957 597h16v16h-16z"/>
<path fill="#0ffb29" d="M971 597h16v16h-16z"/>
<path fill="#0ffa1f" d="M985 597h16v16h-16z"/>
<path fill="#0ffa15" d="M999 597h16v16h-16z"/>
<path fill="#10fa0f" d="M1013 597h16v16h-16z"/>
<path fill="#15fa0f" d="M1027 597h16v16h-16z"/>
<path fill="#19fa0f" d="M1041 597h16v16h-16z"/>
<path fill="#1cfa0f" d="M1055 597h16v16h-16z"/>
<path fill="#20fa0f" d="M1069 597h16v16h-16z"/>
<path fill="#24fa0f" d="M1083 597h16v16h-16z"/>
<path fill="#2afa0f" d="M1097 597h16v16h-16z"/>
<path fill="#30f90f" d="M1111 597h16v16h-16z"/>
<path fill="#0ed4eb" d="M271 611h16v16h-16z"/>
<path fill="#0eece5" d="M285 611h16v16h-16z"/>
<path fill="#0eedd2" d="M299 611h16v16h-16z"/>
<path fill="#0eedc9" d="M313 611h16v16h-16z"/>
<path fill="#0eeec6" d="M327 611h16v16h-16z"/>
<path fill="#0eeec5" d="M341 611h16v16h-16z"/>
<path fill="#0eefc3" d="M355 611h16v16h-16z"/>
<path fill="#0ef0be" d="M369 611h16v16h-16z"/>
<path fill="#0ef1b7" d="M383 611h16v16h-16z"/>
<path fill="#0ef2b6" d="M397 611h16v16h-16z"/>
<path fill="#0ff2be" d="M411 611h16v16h-16z"/>
<path fill="#0ff2c7" d="M425 611h16v16h-16z"/>
<path fill="#0ff2cb" d="M439 611h16v16h-16z"/>
<path fill="#0ff3c4" d="M453 611h16v16h-16z"/>
<path fill="#0ff3b3" d="M467 611h16v16h-16z"/>
<path fill="#0ffda6" d="M481 611h16v16h-16z"/>
<path fill="#0ffd9e" d="M495 611h16v16h-16z"/>
<path fill="#0ef1ae" d="M509 611h16v16h-16z"/>
<path fill="#0ef1c5" d="M523 611h16v16h-16z"/>
<path fill="#0ef1d5" d="M537 611h16v16h-16z"/>
<path fill="#0ff2da" d="M551 611h16v16h-16z"/>
<path fill="#0ff3d5" d="M565 611h16v16h-16z"/>
<path fill="#0ff3cc" d="M579 611h16v16h-16z"/>
<path fill="#0ff2c5" d="M593 611h16v16h-16z"/>
<path fill="#0ef2bd" d="M607 611h16v16h-16z"/>
<path fill="#0ef1ba" d="M621 611h16v16h-16z"/>
<path fill="#0ef1ba" d="M635 611h16v16h-16z"/>
<path fill="#0ef2b6" d="M649 611h16v16h-16z"/>
<path fill="#0ff3ae" d="M663 611h16v16h-16z"/>
<path fill="#0ff3a9" d="M677 611h16v16h-16z"/>
<path fill="#0ffdac" d="M691 611h16v16h-16z"/>
<path fill="#0ffda4" d="M705 611h16v16h-16z"/>
<path fill="#0ffd97" d="M719 611h16v16h-16z"/>
<path fill="#0ffd8e" d="M733 611h16v16h-16z"/>
<path fill="#0ffd8d" d="M747 611h16v16h-16z"/>
<path fill="#0ffd90" d="M761 611h16v16h-16z"/>
<path fill="#0ffd94" d="M775 611h16v16h-16z"/>
<path fill="#0ffe97" d="M789 611h16v16h-16z"/>
<path fill="#0fff97" d="M803 611h16v16h-16z"/>
<path fill="#0fff93" d="M817 611h16v16h-16z"/>
<path fill="#0fff8b" d="M831 611h16v16h-16z"/>
<path fill="#0ffe80" d="M845 611h16v16h-16z"/>
<path fill="#0ffd75" d="M859 611h16v16h-16z"/>
<path fill="#0ffd6a" d="M873 611h16v16h-16z"/>
<path fill="#0ffc62" d="M887 611h16v16h-16z"/>
<path fill="#0ffc58" d="M901 611h16v16h-16z"/>
<path fill="#0ffb4d" d="M915 611h16v16h-16z"/>
<path fill="#0ffb41" d="M929 611h16v16h-16z"/>
<path fill="#0ffb35" d="M943 611h16v16h-16z"/>
<path fill="#0ffa29" d="M957 611h16v16h-16z"/>
<path fill="#0ffa1f" d="M971 611h16v16h-16z"/>
<path fill="#0ffa16" d="M985 611h16v16h-16z"/>
<path fill="#0ffa0f" d="M999 611h16v16h-16z"/>
<path fill="#15fa0f" d="M1013 611h16v16h-16z"/>
<path fill="#19fa0f" d="M1027 611h16v16h-16z"/>
<path fill="#1cfa0f" d="M1041 611h16v16h-16z"/>
<path fill="#20fa0f" d="M1055 611h16v16h-16z"/>
<path fill="#24fa0f" d="M1069 611h16v16h-16z"/>
<path fill="#28fa0f" d="M1083 611h16v16h-16z"/>
<path fill="#2df90f" d="M1097 611h16v16h-16z"/>
<path fill="#0ebfeb" d="M243 625h16v16h-16z"/>
<path fill="#0eddec" d="M257 625h16v16h-16z"/>
<path fill="#0eeddd" d="M271 625h16v16h-16z"/>
<path fill="#0eefc0" d="M285 625h16v16h-16z"/>
<path fill="#0eefad" d="M299 625h16v16h-16z"/>
<path fill="#0ef0a7" d="M313 625h16v16h-16z"/>
<path fill="#0ef0a5" d="M327 625h16v16h-16z"/>
<path fill="#0ef0a5" d="M341 625h16v16h-16z"/>
<path fill="#0ffaa9" d="M355 625h16v16h-16z"/>
<path fill="#0ffba4" d="M369 625h16v16h-16z"/>
<path fill="#0ffc9c" d="M383 625h16v16h-16z"/>
<path fill="#0ffd9b" d="M397 625h16v16h-16z"/>
<path fill="#0ffda5" d="M411 625h16v16h-16z"/>
<path fill="#0ffdad" d="M425 625h16v16h-16z"/>
<path fill="#0ffeae" d="M439 625h16v16h-16z"/>
<path fill="#0ffea7" d="M453 625h16v16h-16z"/>
<path fill="#0ffe98" d="M467 625h16v16h-16z"/>
<path fill="#0ffe89" d="M481 625h16v16h-16z"/>
<path fill="#0ffe88" d="M495 625h16v16h-16z"/>
<path fill="#0ffd99" d="M509 625h16v16h-16z"/>
<path fill="#0ff2a7" d="M523 625h16v16h-16z"/>
<path fill="#0ff2b4" d="M537 625h16v16h-16z"/>
<path fill="#0ff3b9" d="M551 625h16v16h-16z"/>
<path fill="#0ff4b4" d="M565 625h16v16h-16z"/>
<path fill="#0ff4ac" d="M579 625h16v16h-16z"/>
<path fill="#0ffea9" d="M593 625h16v16h-16z"/>
<path fill="#0ffd9e" d="M607 625h16v16h-16z"/>
<path fill="#0ffc9e" d="M621 625h16v16h-16z"/>
<path fill="#0ffca2" d="M635 625h16v16h-16z"/>
<path fill="#0ffca2" d="M649 625h16v16h-16z"/>
<path fill="#0ffd9f" d="M663 625h16v16h-16z"/>
<path fill="#0ffd9a" d="M677 625h16v16h-16z"/>
<path fill="#0ffd95" d="M691 625h16v16h-16z"/>
<path fill="#0ffd8f" d="M705 625h16v16h-16z"/>
<path fill="#0ffd88" d="M719 625h16v16h-16z"/>
<path fill="#0ffd82" d="M733 625h16v16h-16z"/>
<path fill="#0ffc7f" d="M747 625h16v16h-16z"/>
<path fill="#0ffc7f" d="M761 625h16v16h-16z"/>
<path fill="#0ffc80" d="M775 625h16v16h-16z"/>
<path fill="#0ffd81" d="M789 625h16v16h-16z"/>
<path fill="#0ffd80" d="M803 625h16v16h-16z"/>
<path fill="#0ffe7c" d="M817 625h16v16h-16z"/>
<path fill="#0ffe75" d="M831 625h16v16h-16z"/>
<path fill="#0ffd6b" d="M845 625h16v16h-16z"/>
<path fill="#0ffd61" d="M859 625h16v16h-16z"/>
<path fill="#0ffc57" d="M873 625h16v16h-16z"/>
<path fill="#0ffc4f" d="M887 625h16v16h-16z"/>
<path fill="#0ffb47" d="M901 625h16v16h-16z"/>
<path fill="#0ffb3d" d="M915 625h16v16h-16z"/>
<path fill="#0ffa33" d="M929 625h16v16h-16z"/>
<path fill="#0ffa29" d="M943 625h16v16h-16z"/>
<path fill="#0ffa1f" d="M957 625h16v16h-16z"/>
<path fill="#0ffa17" d="M971 625h16v16h-16z"/>
<path fill="#0ffa10" d="M985 625h16v16h-16z"/>
<path fill="#14fa0f" d="M999 625h16v16h-16z"/>
<path fill="#19fa0f" d="M1013 625h16v16h-16z"/>
<path fill="#1cfa0f" d="M1027 625h16v16h-16z"/>
<path fill="#1ffa0f" d="M1041 625h16v16h-16z"/>
<path fill="#23fa0f" d="M1055 625h16v16h-16z"/>
<path fill="#27fa0f" d="M1069 625h16v16h-16z"/>
<path fill="#2bfa0f" d="M1083 625h16v16h-16z"/>
<path fill="#31f90f" d="M1097 625h16v16h-16z"/>
<path fill="#0eeee1" d="M257 639h16v16h-16z"/>
<path fill="#0eefc3" d="M271 639h16v16h-16z"/>
<path fill="#0ef1a7" d="M285 639h16v16h-16z"/>
<path fill="#0ffc9c" d="M299 639h16v16h-16z"/>
<path fill="#0ffb97" d="M313 639h16v16h-16z"/>
<path fill="#0ffb97" d="M327 639h16v16h-16z"/>
<path fill="#0ffb97" d="M341 639h16v16h-16z"/>
<path fill="#0ffb97" d="M355 639h16v16h-16z"/>
<path fill="#0ffb95" d="M369 639h16v16h-16z"/>
<path fill="#0ffc93" d="M383 639h16v16h-16z"/>
<path fill="#0ffc93" d="M397 639h16v16h-16z"/>
<path fill="#0ffd97" d="M411 639h16v16h-16z"/>
<path fill="#0ffd99" d="M425 639h16v16h-16z"/>
<path fill="#0ffd97" d="M439 639h16v16h-16z"/>
<path fill="#0ffe91" d="M453 639h16v16h-16z"/>
<path fill="#0ffe88" d="M467 639h16v16h-16z"/>
<path fill="#0ffe82" d="M481 639h16v16h-16z"/>
<path fill="#0ffd85" d="M495 639h16v16h-16z"/>
<path fill="#0ffc92" d="M509 639h16v16h-16z"/>
<path fill="#0ffc9f" d="M523 639h16v16h-16z"/>
<path fill="#0ffda7" d="M537 639h16v16h-16z"/>
<path fill="#0ffda9" d="M551 639h16v16h-16z"/>
<path fill="#0ffea4" d="M565 639h16v16h-16z"/>
<path fill="#0ffe9d" d="M579 639h16v16h-16z"/>
<path fill="#0ffe95" d="M593 639h16v16h-16z"/>
<path fill="#0ffd8f" d="M607 639h16v16h-16z"/>
<path fill="#0ffc90" d="M621 639h16v16h-16z"/>
<path fill="#0ffc93" d="M635 639h16v16h-16z"/>
<path fill="#0ffc93" d="M649 639h16v16h-16z"/>
<path fill="#0ffc90" d="M663 639h16v16h-16z"/>
<path fill="#0ffd8c" d="M677 639h16v16h-16z"/>
<path fill="#0ffd88" d="M691 639h16v16h-16z"/>
<path fill="#0ffc84" d="M705 639h16v16h-16z"/>
<path fill="#0ffc7f" d="M719 639h16v16h-16z"/>
<path fill="#0ffc7b" d="M733 639h16v16h-16z"/>
<path fill="#0ffb77" d="M747 639h16v16h-16z"/>
<path fill="#0ffb75" d="M761 639h16v16h-16z"/>
<path fill="#0ffb73" d="M775 639h16v16h-16z"/>
<path fill="#0ffc71" d="M789 639h16v16h-16z"/>
<path fill="#0ffc6e" d="M803 639h16v16h-16z"/>
<path fill="#0ffd69" d="M817 639h16v16h-16z"/>
<path fill="#0ffd62" d="M831 639h16v16h-16z"/>
<path fill="#0ffc5a" d="M845 639h16v16h-16z"/>
<path fill="#0ffc51" d="M859 639h16v16h-16z"/>
<path fill="#0ffb48" d="M873 639h16v16h-16z"/>
<path fill="#0ffb40" d="M887 639h16v16h-16z"/>
<path fill="#0ffb38" d="M901 639h16v16h-16z"/>
<path fill="#0ffa30" d="M915 639h16v16h-16z"/>
<path fill="#0ffa27" d="M929 639h16v16h-16z"/>
<path fill="#0ffa1f" d="M943 639h16v16h-16z"/>
<path fill="#0ffa17" d="M957 639h16v16h-16z"/>
<path fill="#0ffa10" d="M971 639h16v16h-16z"/>
<path fill="#14fa0f" d="M985 639h16v16h-16z"/>
<path fill="#18fa0f" d="M999 639h16v16h-16z"/>
<path fill="#1cfa0f" d="M1013 639h16v16h-16z"/>
<path fill="#1ffa0f" d="M1027 639h16v16h-16z"/>
<path fill="#22fa0f" d="M1041 639h16v16h-16z"/>
<path fill="#26fa0f" d="M1055 639h16v16h-16z"/>
<path fill="#2afa0f" d="M1069 639h16v16h-16z"/>
<path fill="#2ff90f" d="M1083 639h16v16h-16z"/>
<path fill="#0eefb6" d="M271 653h16v16h-16z"/>
<path fill="#0ffba6" d="M285 653h16v16h-16z"/>
<path fill="#0ffc96" d="M299 653h16v16h-16z"/>
<path fill="#0ffc8f" d="M313 653h16v16h-16z"/>
<path fill="#0ffb8e" d="M327 653h16v16h-16z"/>
<path fill="#0ffb8e" d="M341 653h16v16h-16z"/>
<path fill="#0ffb90" d="M355 653h16v16h-16z"/>
<path fill="#0ffb93" d="M369 653h16v16h-16z"/>
<path fill="#0ffb96" d="M383 653h16v16h-16z"/>
<path fill="#0ffb98" d="M397 653h16v16h-16z"/>
<path fill="#0ffc95" d="M411 653h16v16h-16z"/>
<path fill="#0ffc91" d="M425 653h16v16h-16z"/>
<path fill="#0ffd8d" d="M439 653h16v16h-16z"/>
<path fill="#0ffd88" d="M453 653h16v16h-16z"/>
<path fill="#0ffd84" d="M467 653h16v16h-16z"/>
<path fill="#0ffc83" d="M481 653h16v16h-16z"/>
<path fill="#0ffc8a" d="M495 653h16v16h-16z"/>
<path fill="#0ffb95" d="M509 653h16v16h-16z"/>
<path fill="#0ffb9b" d="M523 653h16v16h-16z"/>
<path fill="#0ffc9c" d="M537 653h16v16h-16z"/>
<path fill="#0ffd9a" d="M551 653h16v16h-16z"/>
<path fill="#0ffd95" d="M565 653h16v16h-16z"/>
<path fill="#0ffd8f" d="M579 653h16v16h-16z"/>
<path fill="#0ffd8b" d="M593 653h16v16h-16z"/>
<path fill="#0ffc89" d="M607 653h16v16h-16z"/>
<path fill="#0ffb8c" d="M621 653h16v16h-16z"/>
<path fill="#0ffb8e" d="M635 653h16v16h-16z"/>
<path fill="#0ffb8c" d="M649 653h16v16h-16z"/>
<path fill="#0ffb88" d="M663 653h16v16h-16z"/>
<path fill="#0ffc83" d="M677 653h16v16h-16z"/>
<path fill="#0ffc80" d="M691 653h16v16h-16z"/>
<path fill="#0ffb7d" d="M705 653h16v16h-16z"/>
<path fill="#0ffb7a" d="M719 653h16v16h-16z"/>
<path fill="#0ffb77" d="M733 653h16v16h-16z"/>
<path fill="#0ffa72" d="M747 653h16v16h-16z"/>
<path fill="#0ffa6d" d="M761 653h16v16h-16z"/>
<path fill="#0ffb69" d="M775 653h16v16h-16z"/>
<path fill="#0ffb64" d="M789 653h16v16h-16z"/>
<path fill="#0ffb60" d="M803 653h16v16h-16z"/>
<path fill="#0ffc5a" d="M817 653h16v16h-16z"/>
<path fill="#0ffc54" d="M831 653h16v16h-16z"/>
<path fill="#0ffc4c" d="M845 653h16v16h-16z"/>
<path fill="#0ffb45" d="M859 653h16v16h-16z"/>
<path fill="#0ffb3d" d="M873 653h16v16h-16z"/>
<path fill="#0ffb35" d="M887 653h16v16h-16z"/>
<path fill="#0ffa2d" d="M901 653h16v16h-16z"/>
<path fill="#0ffa26" d="M915 653h16v16h-16z"/>
<path fill="#0ffa1e" d="M929 653h16v16h-16z"/>
<path fill="#0ffa17" d="M943 653h16v16h-16z"/>
<path fill="#0ffa10" d="M957 653h16v16h-16z"/>
<path fill="#13fa0f" d="M971 653h16v16h-16z"/>
<path fill="#18fa0f" d="M985 653h16v16h-16z"/>
<path fill="#1cfa0f" d="M999 653h16v16h-16z"/>
<path fill="#1ffa0f" d="M1013 653h16v16h-16z"/>
<path fill="#22fa0f" d="M1027 653h16v16h-16z"/>
<path fill="#25fa0f" d="M1041 653h16v16h-16z"/>
<path fill="#28fa0f" d="M1055 653h16v16h-16z"/>
<path fill="#2dfa0f" d="M1069 653h16v16h-16z"/>
<path fill="#32f90f" d="M1083 653h16v16h-16z"/>
<path fill="#0eefb1" d="M271 667h16v16h-16z"/>
<path fill="#0ff9a7" d="M285 667h16v16h-16z"/>
<path fill="#0ffa9a" d="M299 667h16v16h-16z"/>
<path fill="#0ffb91" d="M313 667h16v16h-16z"/>
<path fill="#0ffb8d" d="M327 667h16v16h-16z"/>
<path fill="#0ffb8d" d="M341 667h16v16h-16z"/>
<path fill="#0ffa90" d="M355 667h16v16h-16z"/>
<path fill="#0ffa94" d="M369 667h16v16h-16z"/>
<path fill="#0ffa9a" d="M383 667h16v16h-16z"/>
<path fill="#0ffa9b" d="M397 667h16v16h-16z"/>
<path fill="#0ffb95" d="M411 667h16v16h-16z"/>
<path fill="#0ffb8f" d="M425 667h16v16h-16z"/>
<path fill="#0ffc89" d="M439 667h16v16h-16z"/>
<path fill="#0ffc85" d="M453 667h16v16h-16z"/>
<path fill="#0ffc83" d="M467 667h16v16h-16z"/>
<path fill="#0ffb86" d="M481 667h16v16h-16z"/>
<path fill="#0ffa8d" d="M495 667h16v16h-16z"/>
<path fill="#0ffa95" d="M509 667h16v16h-16z"/>
<path fill="#0ffa98" d="M523 667h16v16h-16z"/>
<path fill="#0ffb95" d="M537 667h16v16h-16z"/>
<path fill="#0ffc90" d="M551 667h16v16h-16z"/>
<path fill="#0ffc8b" d="M565 667h16v16h-16z"/>
<path fill="#0ffc87" d="M579 667h16v16h-16z"/>
<path fill="#0ffc84" d="M593 667h16v16h-16z"/>
<path fill="#0ffb85" d="M607 667h16v16h-16z"/>
<path fill="#0ffa88" d="M621 667h16v16h-16z"/>
<path fill="#0ffa8a" d="M635 667h16v16h-16z"/>
<path fill="#0ffa86" d="M649 667h16v16h-16z"/>
<path fill="#0ffb81" d="M663 667h16v16h-16z"/>
<path fill="#0ffb7c" d="M677 667h16v16h-16z"/>
<path fill="#0ffb79" d="M691 667h16v16h-16z"/>
<path fill="#0ffb76" d="M705 667h16v16h-16z"/>
<path fill="#0ffa75" d="M719 667h16v16h-16z"/>
<path fill="#0ffa72" d="M733 667h16v16h-16z"/>
<path fill="#0ffa6c" d="M747 667h16v16h-16z"/>
<path fill="#0ffa66" d="M761 667h16v16h-16z"/>
<path fill="#0ffa60" d="M775 667h16v16h-16z"/>
<path fill="#0ffa5a" d="M789 667h16v16h-16z"/>
<path fill="#0ffb54" d="M803 667h16v16h-16z"/>
<path fill="#0ffb4e" d="M817 667h16v16h-16z"/>
<path fill="#0ffb48" d="M831 667h16v16h-16z"/>
<path fill="#0ffb41" d="M845 667h16v16h-16z"/>
<path fill="#0ffb3b" d="M859 667h16v16h-16z"/>
<path fill="#0ffa33" d="M873 667h16v16h-16z"/>
<path fill="#0ffa2c" d="M887 667h16v16h-16z"/>
<path fill="#0ffa25" d="M901 667h16v16h-16z"/>
<path fill="#0ffa1e" d="M915 667h16v16h-16z"/>
<path fill="#0ffa17" d="M929 667h16v16h-16z"/>
<path fill="#0ffa10" d="M943 667h16v16h-16z"/>
<path fill="#13fa0f" d="M957 667h16v16h-16z"/>
<path fill="#18fa0f" d="M971 667h16v16h-16z"/>
<path fill="#1bfa0f" d="M985 667h16v16h-16z"/>
<path fill="#1efa0f" d="M999 667h16v16h-16z"/>
<path fill="#21fa0f" d="M1013 667h16v16h-16z"/>
<path fill="#24fa0f" d="M1027 667h16v16h-16z"/>
<path fill="#27fa0f" d="M1041 667h16v16h-16z"/>
<path fill="#2bfa0f" d="M1055 667h16v16h-16z"/>
<path fill="#2ff90f" d="M1069 667h16v16h-16z"/>
<path fill="#0ff9a7" d="M285 681h16v16h-16z"/>
<path fill="#0ff99c" d="M299 681h16v16h-16z"/>
<path fill="#0ffa93" d="M313 681h16v16h-16z"/>
<path fill="#0ffa8f" d="M327 681h16v16h-16z"/>
<path fill="#0ffa8e" d="M341 681h16v16h-16z"/>
<path fill="#0ffa90" d="M355 681h16v16h-16z"/>
<path fill="#0ffa94" d="M369 681h16v16h-16z"/>
<path fill="#0ff998" d="M383 681h16v16h-16z"/>
<path fill="#0ffa98" d="M397 681h16v16h-16z"/>
<path fill="#0ffa93" d="M411 681h16v16h-16z"/>
<path fill="#0ffb8d" d="M425 681h16v16h-16z"/>
<path fill="#0ffb87" d="M439 681h16v16h-16z"/>
<path fill="#0ffb84" d="M453 681h16v16h-16z"/>
<path fill="#0ffb83" d="M467 681h16v16h-16z"/>
<path fill="#0ffa85" d="M481 681h16v16h-16z"/>
<path fill="#0ffa8a" d="M495 681h16v16h-16z"/>
<path fill="#0ff98f" d="M509 681h16v16h-16z"/>
<path fill="#0ffa8f" d="M523 681h16v16h-16z"/>
<path fill="#0ffa8c" d="M537 681h16v16h-16z"/>
<path fill="#0ffb87" d="M551 681h16v16h-16z"/>
<path fill="#0ffb83" d="M565 681h16v16h-16z"/>
<path fill="#0ffb7f" d="M579 681h16v16h-16z"/>
<path fill="#0ffb7e" d="M593 681h16v16h-16z"/>
<path fill="#0ffa7f" d="M607 681h16v16h-16z"/>
<path fill="#0ffa80" d="M621 681h16v16h-16z"/>
<path fill="#0ff981" d="M635 681h16v16h-16z"/>
<path fill="#0ffa7d" d="M649 681h16v16h-16z"/>
<path fill="#0ffa79" d="M663 681h16v16h-16z"/>
<path fill="#0ffa74" d="M677 681h16v16h-16z"/>
<path fill="#0ffa71" d="M691 681h16v16h-16z"/>
<path fill="#0ffa6f" d="M705 681h16v16h-16z"/>
<path fill="#0ffa6d" d="M719 681h16v16h-16z"/>
<path fill="#0ff969" d="M733 681h16v16h-16z"/>
<path fill="#0ff964" d="M747 681h16v16h-16z"/>
<path fill="#0ff95e" d="M761 681h16v16h-16z"/>
<path fill="#0ffa58" d="M775 681h16v16h-16z"/>
<path fill="#0ffa51" d="M789 681h16v16h-16z"/>
<path fill="#0ffa4b" d="M803 681h16v16h-16z"/>
<path fill="#0ffb44" d="M817 681h16v16h-16z"/>
<path fill="#0ffa3e" d="M831 681h16v16h-16z"/>
<path fill="#0ffa38" d="M845 681h16v16h-16z"/>
<path fill="#0ffa32" d="M859 681h16v16h-16z"/>
<path fill="#0ffa2c" d="M873 681h16v16h-16z"/>
<path fill="#0ffa25" d="M887 681h16v16h-16z"/>
<path fill="#0ffa1e" d="M901 681h16v16h-16z"/>
<path fill="#0ffa17" d="M915 681h16v16h-16z"/>
<path fill="#0ffa11" d="M929 681h16v16h-16z"/>
<path fill="#13fa0f" d="M943 681h16v16h-16z"/>
<path fill="#17fa0f" d="M957 681h16v16h-16z"/>
<path fill="#1bfa0f" d="M971 681h16v16h-16z"/>
<path fill="#1efa0f" d="M985 681h16v16h-16z"/>
<path fill="#20fa0f" d="M999 681h16v16h-16z"/>
<path fill="#23fa0f" d="M1013 681h16v16h-16z"/>
<path fill="#26fa0f" d="M1027 681h16v16h-16z"/>
<path fill="#29fa0f" d="M1041 681h16v16h-16z"/>
<path fill="#2dfa0f" d="M1055 681h16v16h-16z"/>
<path fill="#31f90f" d="M1069 681h16v16h-16z"/>
<path fill="#0ff99d" d="M299 695h16v16h-16z"/>
<path fill="#0ffa96" d="M313 695h16v16h-16z"/>
<path fill="#0ffa91" d="M327 695h16v16h-16z"/>
<path fill="#0ffa90" d="M341 695h16v16h-16z"/>
<path fill="#0ffa90" d="M355 695h16v16h-16z"/>
<path fill="#0ffa92" d="M369 695h16v16h-16z"/>
<path fill="#0ff993" d="M383 695h16v16h-16z"/>
<path fill="#0ffa92" d="M397 695h16v16h-16z"/>
<path fill="#0ffa8e" d="M411 695h16v16h-16z"/>
<path fill="#0ffa89" d="M425 695h16v16h-16z"/>
<path fill="#0ffa85" d="M439 695h16v16h-16z"/>
<path fill="#0ffa82" d="M453 695h16v16h-16z"/>
<path fill="#0ffa81" d="M467 695h16v16h-16z"/>
<path fill="#0ffa82" d="M481 695h16v16h-16z"/>
<path fill="#0ff985" d="M495 695h16v16h-16z"/>
<path fill="#0ff986" d="M509 695h16v16h-16z"/>
<path fill="#0ffa85" d="M523 695h16v16h-16z"/>
<path fill="#0ffa82" d="M537 695h16v16h-16z"/>
<path fill="#0ffa7e" d="M551 695h16v16h-16z"/>
<path fill="#0ffb7a" d="M565 695h16v16h-16z"/>
<path fill="#0ffb78" d="M579 695h16v16h-16z"/>
<path fill="#0ffa77" d="M593 695h16v16h-16z"/>
<path fill="#0ffa77" d="M607 695h16v16h-16z"/>
<path fill="#0ffa77" d="M621 695h16v16h-16z"/>
<path fill="#0ff976" d="M635 695h16v16h-16z"/>
<path fill="#0ffa73" d="M649 695h16v16h-16z"/>
<path fill="#0ffa70" d="M663 695h16v16h-16z"/>
<path fill="#0ffa6c" d="M677 695h16v16h-16z"/>
<path fill="#0ffa69" d="M691 695h16v16h-16z"/>
<path fill="#0ffa66" d="M705 695h16v16h-16z"/>
<path fill="#0ff964" d="M719 695h16v16h-16z"/>
<path fill="#0ff960" d="M733 695h16v16h-16z"/>
<path fill="#0ff95b" d="M747 695h16v16h-16z"/>
<path fill="#0ff955" d="M761 695h16v16h-16z"/>
<path fill="#0ffa4f" d="M775 695h16v16h-16z"/>
<path fill="#0ffa48" d="M789 695h16v16h-16z"/>
<path fill="#0ffa41" d="M803 695h16v16h-16z"/>
<path fill="#0ffa3b" d="M817 695h16v16h-16z"/>
<path fill="#0ffa35" d="M831 695h16v16h-16z"/>
<path fill="#0ffa30" d="M845 695h16v16h-16z"/>
<path fill="#0ffa2b" d="M859 695h16v16h-16z"/>
<path fill="#0ffa25" d="M873 695h16v16h-16z"/>
<path fill="#0ffa1f" d="M887 695h16v16h-16z"/>
<path fill="#0ffa18" d="M901 695h16v16h-16z"/>
<path fill="#0ffa12" d="M915 695h16v16h-16z"/>
<path fill="#12fa0f" d="M929 695h16v16h-16z"/>
<path fill="#16fa0f" d="M943 695h16v16h-16z"/>
<path fill="#1afa0f" d="M957 695h16v16h-16z"/>
<path fill="#1dfa0f" d="M971 695h16v16h-16z"/>
<path fill="#20fa0f" d="M985 695h16v16h-16z"/>
<path fill="#22fa0f" d="M999 695h16v16h-16z"/>
<path fill="#24fa0f" d="M1013 695h16v16h-16z"/>
<path fill="#27fa0f" d="M1027 695h16v16h-16z"/>
<path fill="#2bfa0f" d="M1041 695h16v16h-16z"/>
<path fill="#2ff90f" d="M1055 695h16v16h-16z"/>
<path fill="#0ff99d" d="M299 709h16v16h-16z"/>
<path fill="#0ffa97" d="M313 709h16v16h-16z"/>
<path fill="#0ffa93" d="M327 709h16v16h-16z"/>
<path fill="#0ffa90" d="M341 709h16v16h-16z"/>
<path fill="#0ffa8f" d="M355 709h16v16h-16z"/>
<path fill="#0ffa8f" d="M369 709h16v16h-16z"/>
<path fill="#0ff98e" d="M383 709h16v16h-16z"/>
<path fill="#0ffa8c" d="M397 709h16v16h-16z"/>
<path fill="#0ffa89" d="M411 709h16v16h-16z"/>
<path fill="#0ffa85" d="M425 709h16v16h-16z"/>
<path fill="#0ffa81" d="M439 709h16v16h-16z"/>
<path fill="#0ffa7f" d="M453 709h16v16h-16z"/>
<path fill="#0ffa7d" d="M467 709h16v16h-16z"/>
<path fill="#0ff97d" d="M481 709h16v16h-16z"/>
<path fill="#0ff97e" d="M495 709h16v16h-16z"/>
<path fill="#0ff97d" d="M509 709h16v16h-16z"/>
<path fill="#0ff97c" d="M523 709h16v16h-16z"/>
<path fill="#0ffa78" d="M537 709h16v16h-16z"/>
<path fill="#0ffa75" d="M551 709h16v16h-16z"/>
<path fill="#0ffa72" d="M565 709h16v16h-16z"/>
<path fill="#0ffa70" d="M579 709h16v16h-16z"/>
<path fill="#0ffa6f" d="M593 709h16v16h-16z"/>
<path fill="#0ffa6e" d="M607 709h16v16h-16z"/>
<path fill="#0ff96d" d="M621 709h16v16h-16z"/>
<path fill="#0ff96c" d="M635 709h16v16h-16z"/>
<path fill="#0ffa69" d="M649 709h16v16h-16z"/>
<path fill="#0ffa66" d="M663 709h16v16h-16z"/>
<path fill="#0ffa62" d="M677 709h16v16h-16z"/>
<path fill="#0ffa5f" d="M691 709h16v16h-16z"/>
<path fill="#0ff95d" d="M705 709h16v16h-16z"/>
<path fill="#0ff95a" d="M719 709h16v16h-16z"/>
<path fill="#0ff956" d="M733 709h16v16h-16z"/>
<path fill="#0ff952" d="M747 709h16v16h-16z"/>
<path fill="#0ff94c" d="M761 709h16v16h-16z"/>
<path fill="#0ff946" d="M775 709h16v16h-16z"/>
<path fill="#0ffa3f" d="M789 709h16v16h-16z"/>
<path fill="#0ffa39" d="M803 709h16v16h-16z"/>
<path fill="#0ffa33" d="M817 709h16v16h-16z"/>
<path fill="#0ffa2e" d="M831 709h16v16h-16z"/>
<path fill="#0ffa29" d="M845 709h16v16h-16z"/>
<path fill="#0ffa24" d="M859 709h16v16h-16z"/>
<path fill="#0ffa1f" d="M873 709h16v16h-16z"/>
<path fill="#0ffa19" d="M887 709h16v16h-16z"/>
<path fill="#0ffa13" d="M901 709h16v16h-16z"/>
<path fill="#10fa0f" d="M915 709h16v16h-16z"/>
<path fill="#15fa0f" d="M929 709h16v16h-16z"/>
<path fill="#19fa0f" d="M943 709h16v16h-16z"/>
<path fill="#1cfa0f" d="M957 709h16v16h-16z"/>
<path fill="#1ffa0f" d="M971 709h16v16h-16z"/>
<path fill="#21fa0f" d="M985 709h16v16h-16z"/>
<path fill="#23fa0f" d="M999 709h16v16h-16z"/>
<path fill="#26fa0f" d="M1013 709h16v16h-16z"/>
<path fill="#29fa0f" d="M1027 709h16v16h-16z"/>
<path fill="#2cfa0f" d="M1041 709h16v16h-16z"/>
<path fill="#0ff996" d="M313 723h16v16h-16z"/>
<path fill="#0ffa92" d="M327 723h16v16h-16z"/>
<path fill="#0ffa8f" d="M341 723h16v16h-16z"/>
<path fill="#0ffa8d" d="M355 723h16v16h-16z"/>
<path fill="#0ff98b" d="M369 723h16v16h-16z"/>
<path fill="#0ff98a" d="M383 723h16v16h-16z"/>
<path fill="#0ff987" d="M397 723h16v16h-16z"/>
<path fill="#0ff984" d="M411 723h16v16h-16z"/>
<path fill="#0ffa80" d="M425 723h16v16h-16z"/>
<path fill="#0ffa7d" d="M439 723h16v16h-16z"/>
<path fill="#0ff97b" d="M453 723h16v16h-16z"/>
<path fill="#0ff979" d="M467 723h16v16h-16z"/>
<path fill="#0ff978" d="M481 723h16v16h-16z"/>
<path fill="#0ff977" d="M495 723h16v16h-16z"/>
<path fill="#0ff975" d="M509 723h16v16h-16z"/>
<path fill="#0ff973" d="M523 723h16v16h-16z"/>
<path fill="#0ffa6f" d="M537 723h16v16h-16z"/>
<path fill="#0ffa6c" d="M551 723h16v16h-16z"/>
<path fill="#0ffa6a" d="M565 723h16v16h-16z"/>
<path fill="#0ffa68" d="M579 723h16v16h-16z"/>
<path fill="#0ff966" d="M593 723h16v16h-16z"/>
<path fill="#0ff965" d="M607 723h16v16h-16z"/>
<path fill="#0ff964" d="M621 723h16v16h-16z"/>
<path fill="#0ff962" d="M635 723h16v16h-16z"/>
<path fill="#0ff95f" d="M649 723h16v16h-16z"/>
<path fill="#0ffa5c" d="M663 723h16v16h-16z"/>
<path fill="#0ffa59" d="M677 723h16v16h-16z"/>
<path fill="#0ff956" d="M691 723h16v16h-16z"/>
<path fill="#0ff954" d="M705 723h16v16h-16z"/>
<path fill="#0ff951" d="M719 723h16v16h-16z"/>
<path fill="#0ff94d" d="M733 723h16v16h-16z"/>
<path fill="#0ff949" d="M747 723h16v16h-16z"/>
<path fill="#0ff943" d="M761 723h16v16h-16z"/>
<path fill="#0ff93e" d="M775 723h16v16h-16z"/>
<path fill="#0ffa37" d="M789 723h16v16h-16z"/>
<path fill="#0ffa31" d="M803 723h16v16h-16z"/>
<path fill="#0ffa2c" d="M817 723h16v16h-16z"/>
<path fill="#0ffa27" d="M831 723h16v16h-16z"/>
<path fill="#0ffa23" d="M845 723h16v16h-16z"/>
<path fill="#0ff91f" d="M859 723h16v16h-16z"/>
<path fill="#0ff91a" d="M873 723h16v16h-16z"/>
<path fill="#0ff915" d="M887 723h16v16h-16z"/>
<path fill="#0ffa10" d="M901 723h16v16h-16z"/>
<path fill="#13fa0f" d="M915 723h16v16h-16z"/>
<path fill="#17fa0f" d="M929 723h16v16h-16z"/>
<path fill="#1bfa0f" d="M943 723h16v16h-16z"/>
<path fill="#1efa0f" d="M957 723h16v16h-16z"/>
<path fill="#20fa0f" d="M971 723h16v16h-16z"/>
<path fill="#22fa0f" d="M985 723h16v16h-16z"/>
<path fill="#24fa0f" d="M999 723h16v16h-16z"/>
<path fill="#27fa0f" d="M1013 723h16v16h-16z"/>
<path fill="#2afa0f" d="M1027 723h16v16h-16z"/>
<path fill="#2ef90f" d="M1041 723h16v16h-16z"/>
<path fill="#0ff990" d="M327 737h16v16h-16z"/>
<path fill="#0ff98d" d="M341 737h16v16h-16z"/>
<path fill="#0ff98a" d="M355 737h16v16h-16z"/>
<path fill="#0ff987" d="M369 737h16v16h-16z"/>
<path fill="#0ff985" d="M383 737h16v16h-16z"/>
<path fill="#0ff982" d="M397 737h16v16h-16z"/>
<path fill="#0ff97f" d="M411 737h16v16h-16z"/>
<path fill="#0ff97b" d="M425 737h16v16h-16z"/>
<path fill="#0ff978" d="M439 737h16v16h-16z"/>
<path fill="#0ff976" d="M453 737h16v16h-16z"/>
<path fill="#0ff974" d="M467 737h16v16h-16z"/>
<path fill="#0ff972" d="M481 737h16v16h-16z"/>
<path fill="#0ff970" d="M495 737h16v16h-16z"/>
<path fill="#0ff96e" d="M509 737h16v16h-16z"/>
<path fill="#0ff96b" d="M523 737h16v16h-16z"/>
<path fill="#0ff968" d="M537 737h16v16h-16z"/>
<path fill="#0ff965" d="M551 737h16v16h-16z"/>
<path fill="#0ff962" d="M565 737h16v16h-16z"/>
<path fill="#0ff960" d="M579 737h16v16h-16z"/>
<path fill="#0ff95e" d="M593 737h16v16h-16z"/>
<path fill="#0ff95d" d="M607 737h16v16h-16z"/>
<path fill="#0ff95b" d="M621 737h16v16h-16z"/>
<path fill="#0ff959" d="M635 737h16v16h-16z"/>
<path fill="#0ff956" d="M649 737h16v16h-16z"/>
<path fill="#0ff953" d="M663 737h16v16h-16z"/>
<path fill="#0ff950" d="M677 737h16v16h-16z"/>
<path fill="#0ff94d" d="M691 737h16v16h-16z"/>
<path fill="#0ff94b" d="M705 737h16v16h-16z"/>
<path fill="#0ff948" d="M719 737h16v16h-16z"/>
<path fill="#0ff944" d="M733 737h16v16h-16z"/>
<path fill="#0ff940" d="M747 737h16v16h-16z"/>
<path fill="#0ff93b" d="M761 737h16v16h-16z"/>
<path fill="#0ff936" d="M775 737h16v16h-16z"/>
<path fill="#0ff930" d="M789 737h16v16h-16z"/>
<path fill="#0ff92b" d="M803 737h16v16h-16z"/>
<path fill="#0ffa26" d="M817 737h16v16h-16z"/>
<path fill="#0ff922" d="M831 737h16v16h-16z"/>
<path fill="#0ff91e" d="M845 737h16v16h-16z"/>
<path fill="#0ff91a" d="M859 737h16v16h-16z"/>
<path fill="#0ff916" d="M873 737h16v16h-16z"/>
<path fill="#0ff912" d="M887 737h16v16h-16z"/>
<path fill="#10f90f" d="M901 737h16v16h-16z"/>
<path fill="#15f90f" d="M915 737h16v16h-16z"/>
<path fill="#18fa0f" d="M929 737h16v16h-16z"/>
<path fill="#1cfa0f" d="M943 737h16v16h-16z"/>
<path fill="#1efa0f" d="M957 737h16v16h-16z"/>
<path fill="#20fa0f" d="M971 737h16v16h-16z"/>
<path fill="#23fa0f" d="M985 737h16v16h-16z"/>
<path fill="#25fa0f" d="M999 737h16v16h-16z"/>
<path fill="#28f90f" d="M1013 737h16v16h-16z"/>
<path fill="#2bf90f" d="M1027 737h16v16h-16z"/>
<path fill="#0ff98d" d="M327 751h16v16h-16z"/>
<path fill="#0ff989" d="M341 751h16v16h-16z"/>
<path fill="#0ff986" d="M355 751h16v16h-16z"/>
<path fill="#0ff983" d="M369 751h16v16h-16z"/>
<path fill="#0ff980" d="M383 751h16v16h-16z"/>
<path fill="#0ff97d" d="M397 751h16v16h-16z"/>
<path fill="#0ff979" d="M411 751h16v16h-16z"/>
<path fill="#0ff976" d="M425 751h16v16h-16z"/>
<path fill="#0ff973" d="M439 751h16v16h-16z"/>
<path fill="#0ff871" d="M453 751h16v16h-16z"/>
<path fill="#0ff86e" d="M467 751h16v16h-16z"/>
<path fill="#0ff86c" d="M481 751h16v16h-16z"/>
<path fill="#0ff869" d="M495 751h16v16h-16z"/>
<path fill="#0ff867" d="M509 751h16v16h-16z"/>
<path fill="#0ff864" d="M523 751h16v16h-16z"/>
<path fill="#0ff960" d="M537 751h16v16h-16z"/>
<path fill="#0ff95d" d="M551 751h16v16h-16z"/>
<path fill="#0ff95b" d="M565 751h16v16h-16z"/>
<path fill="#0ff958" d="M579 751h16v16h-16z"/>
<path fill="#0ff856" d="M593 751h16v16h-16z"/>
<path fill="#0ff854" d="M607 751h16v16h-16z"/>
<path fill="#0ff852" d="M621 751h16v16h-16z"/>
<path fill="#0ff950" d="M635 751h16v16h-16z"/>
<path fill="#0ff94d" d="M649 751h16v16h-16z"/>
<path fill="#0ff94a" d="M663 751h16v16h-16z"/>
<path fill="#0ff948" d="M677 751h16v16h-16z"/>
<path fill="#0ff945" d="M691 751h16v16h-16z"/>
<path fill="#0ff942" d="M705 751h16v16h-16z"/>
<path fill="#0ff83f" d="M719 751h16v16h-16z"/>
<path fill="#0ff83c" d="M733 751h16v16h-16z"/>
<path fill="#0ff838" d="M747 751h16v16h-16z"/>
<path fill="#0ff834" d="M761 751h16v16h-16z"/>
<path fill="#0ff92f" d="M775 751h16v16h-16z"/>
<path fill="#0ff92a" d="M789 751h16v16h-16z"/>
<path fill="#0ff926" d="M803 751h16v16h-16z"/>
<path fill="#0ff922" d="M817 751h16v16h-16z"/>
<path fill="#0ff91e" d="M831 751h16v16h-16z"/>
<path fill="#0ff91a" d="M845 751h16v16h-16z"/>
<path fill="#0ff917" d="M859 751h16v16h-16z"/>
<path fill="#0ff914" d="M873 751h16v16h-16z"/>
<path fill="#0ff910" d="M887 751h16v16h-16z"/>
<path fill="#12f90f" d="M901 751h16v16h-16z"/>
<path fill="#15f90f" d="M915 751h16v16h-16z"/>
<path fill="#19f90f" d="M929 751h16v16h-16z"/>
<path fill="#1cf90f" d="M943 751h16v16h-16z"/>
<path fill="#1ef90f" d="M957 751h16v16h-16z"/>
<path fill="#21f90f" d="M971 751h16v16h-16z"/>
<path fill="#23f90f" d="M985 751h16v16h-16z"/>
<path fill="#26f90f" d="M999 751h16v16h-16z"/>
<path fill="#29f90f" d="M1013 751h16v16h-16z"/>
<path fill="#0ff885" d="M341 765h16v16h-16z"/>
<path fill="#0ff882" d="M355 765h16v16h-16z"/>
<path fill="#0ff87e" d="M369 765h16v16h-16z"/>
<path fill="#0ff87b" d="M383 765h16v16h-16z"/>
<path fill="#0ff877" d="M397 765h16v16h-16z"/>
<path fill="#0ff874" d="M411 765h16v16h-16z"/>
<path fill="#0ff871" d="M425 765h16v16h-16z"/>
<path fill="#0ff86e" d="M439 765h16v16h-16z"/>
<path fill="#0ff86b" d="M453 765h16v16h-16z"/>
<path fill="#0ff869" d="M467 765h16v16h-16z"/>
<path fill="#0ff866" d="M481 765h16v16h-16z"/>
<path fill="#0ff863" d="M495 765h16v16h-16z"/>
<path fill="#0ff860" d="M509 765h16v16h-16z"/>
<path fill="#0ff85d" d="M523 765h16v16h-16z"/>
<path fill="#0ff85a" d="M537 765h16v16h-16z"/>
<path fill="#0ff857" d="M551 765h16v16h-16z"/>
<path fill="#0ff854" d="M565 765h16v16h-16z"/>
<path fill="#0ff851" d="M579 765h16v16h-16z"/>
<path fill="#0ff84f" d="M593 765h16v16h-16z"/>
<path fill="#0ff84c" d="M607 765h16v16h-16z"/>
<path fill="#0ff84a" d="M621 765h16v16h-16z"/>
<path fill="#0ff847" d="M635 765h16v16h-16z"/>
<path fill="#0ff845" d="M649 765h16v16h-16z"/>
<path fill="#0ff842" d="M663 765h16v16h-16z"/>
<path fill="#0ff83f" d="M677 765h16v16h-16z"/>
<path fill="#0ff83d" d="M691 765h16v16h-16z"/>
<path fill="#0ff83a" d="M705 765h16v16h-16z"/>
<path fill="#0ff838" d="M719 765h16v16h-16z"/>
<path fill="#0ff835" d="M733 765h16v16h-16z"/>
<path fill="#0ff831" d="M747 765h16v16h-16z"/>
<path fill="#0ff82d" d="M761 765h16v16h-16z"/>
<path fill="#0ff829" d="M775 765h16v16h-16z"/>
<path fill="#0ff825" d="M789 765h16v16h-16z"/>
<path fill="#0ff921" d="M803 765h16v16h-16z"/>
<path fill="#0ff91e" d="M817 765h16v16h-16z"/>
<path fill="#0ff91a" d="M831 765h16v16h-16z"/>
<path fill="#0ff817" d="M845 765h16v16h-16z"/>
<path fill="#0ff814" d="M859 765h16v16h-16z"/>
<path fill="#0ff812" d="M873 765h16v16h-16z"/>
<path fill="#0ff80f" d="M887 765h16v16h-16z"/>
<path fill="#13f80f" d="M901 765h16v16h-16z"/>
<path fill="#16f80f" d="M915 765h16v16h-16z"/>
<path fill="#19f80f" d="M929 765h16v16h-16z"/>
<path fill="#1cf90f" d="M943 765h16v16h-16z"/>
<path fill="#1ff90f" d="M957 765h16v16h-16z"/>
<path fill="#21f80f" d="M971 765h16v16h-16z"/>
<path fill="#24f80f" d="M985 765h16v16h-16z"/>
<path fill="#27f80f" d="M999 765h16v16h-16z"/>
<path fill="#2af80f" d="M1013 765h16v16h-16z"/>
<path fill="#0ff881" d="M341 779h16v16h-16z"/>
<path fill="#0ff87d" d="M355 779h16v16h-16z"/>
<path fill="#0ff879" d="M369 779h16v16h-16z"/>
<path fill="#0ff876" d="M383 779h16v16h-16z"/>
<path fill="#0ff872" d="M397 779h16v16h-16z"/>
<path fill="#0ff86f" d="M411 779h16v16h-16z"/>
<path fill="#0ff86b" d="M425 779h16v16h-16z"/>
<path fill="#0ff868" d="M439 779h16v16h-16z"/>
<path fill="#0ff866" d="M453 779h16v16h-16z"/>
<path fill="#0ff863" d="M467 779h16v16h-16z"/>
<path fill="#0ff860" d="M481 779h16v16h-16z"/>
<path fill="#0ff85d" d="M495 779h16v16h-16z"/>
<path fill="#0ff85a" d="M509 779h16v16h-16z"/>
<path fill="#0ff856" d="M523 779h16v16h-16z"/>
<path fill="#0ff853" d="M537 779h16v16h-16z"/>
<path fill="#0ff850" d="M551 779h16v16h-16z"/>
<path fill="#0ff84d" d="M565 779h16v16h-16z"/>
<path fill="#0ff84a" d="M579 779h16v16h-16z"/>
<path fill="#0ff847" d="M593 779h16v16h-16z"/>
<path fill="#0ff845" d="M607 779h16v16h-16z"/>
<path fill="#0ff842" d="M621 779h16v16h-16z"/>
<path fill="#0ff840" d="M635 779h16v16h-16z"/>
<path fill="#0ff83d" d="M649 779h16v16h-16z"/>
<path fill="#0ff83a" d="M663 779h16v16h-16z"/>
<path fill="#0ff838" d="M677 779h16v16h-16z"/>
<path fill="#0ff835" d="M691 779h16v16h-16z"/>
<path fill="#0ff833" d="M705 779h16v16h-16z"/>
<path fill="#0ff830" d="M719 779h16v16h-16z"/>
<path fill="#0ff82e" d="M733 779h16v16h-16z"/>
<path fill="#0ff82b" d="M747 779h16v16h-16z"/>
<path fill="#0ff827" d="M761 779h16v16h-16z"/>
<path fill="#0ff824" d="M775 779h16v16h-16z"/>
<path fill="#0ff820" d="M789 779h16v16h-16z"/>
<path fill="#0ff81d" d="M803 779h16v16h-16z"/>
<path fill="#0ff81a" d="M817 779h16v16h-16z"/>
<path fill="#0ff817" d="M831 779h16v16h-16z"/>
<path fill="#0ff814" d="M845 779h16v16h-16z"/>
<path fill="#0ff812" d="M859 779h16v16h-16z"/>
<path fill="#0ff810" d="M873 779h16v16h-16z"/>
<path fill="#10f80f" d="M887 779h16v16h-16z"/>
<path fill="#13f80f" d="M901 779h16v16h-16z"/>
<path fill="#17f80f" d="M915 779h16v16h-16z"/>
<path fill="#1af80f" d="M929 779h16v16h-16z"/>
<path fill="#1df80f" d="M943 779h16v16h-16z"/>
<path fill="#1ff80f" d="M957 779h16v16h-16z"/>
<path fill="#22f80f" d="M971 779h16v16h-16z"/>
<path fill="#24f80f" d="M985 779h16v16h-16z"/>
<path fill="#28f80f" d="M999 779h16v16h-16z"/>
<path fill="#0ff778" d="M355 793h16v16h-16z"/>
<path fill="#0ff774" d="M369 793h16v16h-16z"/>
<path fill="#0ff770" d="M383 793h16v16h-16z"/>
<path fill="#0ff76c" d="M397 793h16v16h-16z"/>
<path fill="#0ff769" d="M411 793h16v16h-16z"/>
<path fill="#0ff765" d="M425 793h16v16h-16z"/>
<path fill="#0ff762" d="M439 793h16v16h-16z"/>
<path fill="#0ff760" d="M453 793h16v16h-16z"/>
<path fill="#0ff75d" d="M467 793h16v16h-16z"/>
<path fill="#0ff75a" d="M481 793h16v16h-16z"/>
<path fill="#0ff757" d="M495 793h16v16h-16z"/>
<path fill="#0ff753" d="M509 793h16v16h-16z"/>
<path fill="#0ff750" d="M523 793h16v16h-16z"/>
<path fill="#0ff84d" d="M537 793h16v16h-16z"/>
<path fill="#0ff749" d="M551 793h16v16h-16z"/>
<path fill="#0ff746" d="M565 793h16v16h-16z"/>
<path fill="#0ff743" d="M579 793h16v16h-16z"/>
<path fill="#0ff741" d="M593 793h16v16h-16z"/>
<path fill="#0ff73e" d="M607 793h16v16h-16z"/>
<path fill="#0ff73b" d="M621 793h16v16h-16z"/>
<path fill="#0ff838" d="M635 793h16v16h-16z"/>
<path fill="#0ff836" d="M649 793h16v16h-16z"/>
<path fill="#0ff833" d="M663 793h16v16h-16z"/>
<path fill="#0ff830" d="M677 793h16v16h-16z"/>
<path fill="#0ff82e" d="M691 793h16v16h-16z"/>
<path fill="#0ff82c" d="M705 793h16v16h-16z"/>
<path fill="#0ff729" d="M719 793h16v16h-16z"/>
<path fill="#0ff727" d="M733 793h16v16h-16z"/>
<path fill="#0ff725" d="M747 793h16v16h-16z"/>
<path fill="#0ff722" d="M761 793h16v16h-16z"/>
<path fill="#0ff81f" d="M775 793h16v16h-16z"/>
<path fill="#0ff81c" d="M789 793h16v16h-16z"/>
<path fill="#0ff819" d="M803 793h16v16h-16z"/>
<path fill="#0ff816" d="M817 793h16v16h-16z"/>
<path fill="#0ff814" d="M831 793h16v16h-16z"/>
<path fill="#0ff812" d="M845 793h16v16h-16z"/>
<path fill="#0ff810" d="M859 793h16v16h-16z"/>
<path fill="#10f70f" d="M873 793h16v16h-16z"/>
<path fill="#12f70f" d="M887 793h16v16h-16z"/>
<path fill="#15f70f" d="M901 793h16v16h-16z"/>
<path fill="#18f70f" d="M915 793h16v16h-16z"/>
<path fill="#1bf80f" d="M929 793h16v16h-16z"/>
<path fill="#1ef80f" d="M943 793h16v16h-16z"/>
<path fill="#20f80f" d="M957 793h16v16h-16z"/>
<path fill="#23f70f" d="M971 793h16v16h-16z"/>
<path fill="#26f70f" d="M985 793h16v16h-16z"/>
<path fill="#29f70f" d="M999 793h16v16h-16z"/>
<path fill="#0ff773" d="M355 807h16v16h-16z"/>
<path fill="#0ff76f" d="M369 807h16v16h-16z"/>
<path fill="#0ff76a" d="M383 807h16v16h-16z"/>
<path fill="#0ff766" d="M397 807h16v16h-16z"/>
<path fill="#0ff763" d="M411 807h16v16h-16z"/>
<path fill="#0ff75f" d="M425 807h16v16h-16z"/>
<path fill="#0ff75c" d="M439 807h16v16h-16z"/>
<path fill="#0ff759" d="M453 807h16v16h-16z"/>
<path fill="#0ff757" d="M467 807h16v16h-16z"/>
<path fill="#0ff754" d="M481 807h16v16h-16z"/>
<path fill="#0ff750" d="M495 807h16v16h-16z"/>
<path fill="#0ff74d" d="M509 807h16v16h-16z"/>
<path fill="#0ff74a" d="M523 807h16v16h-16z"/>
<path fill="#0ff746" d="M537 807h16v16h-16z"/>
<path fill="#0ff743" d="M551 807h16v16h-16z"/>
<path fill="#0ff740" d="M565 807h16v16h-16z"/>
<path fill="#0ff73d" d="M579 807h16v16h-16z"/>
<path fill="#0ff73a" d="M593 807h16v16h-16z"/>
<path fill="#0ff737" d="M607 807h16v16h-16z"/>
<path fill="#0ff734" d="M621 807h16v16h-16z"/>
<path fill="#0ff732" d="M635 807h16v16h-16z"/>
<path fill="#0ff72f" d="M649 807h16v16h-16z"/>
<path fill="#0ff72c" d="M663 807h16v16h-16z"/>
<path fill="#0ff729" d="M677 807h16v16h-16z"/>
<path fill="#0ff727" d="M691 807h16v16h-16z"/>
<path fill="#0ff725" d="M705 807h16v16h-16z"/>
<path fill="#0ff723" d="M719 807h16v16h-16z"/>
<path fill="#0ff721" d="M733 807h16v16h-16z"/>
<path fill="#0ff71f" d="M747 807h16v16h-16z"/>
<path fill="#0ff71d" d="M761 807h16v16h-16z"/>
<path fill="#0ff71a" d="M775 807h16v16h-16z"/>
<path fill="#0ff718" d="M789 807h16v16h-16z"/>
<path fill="#0ff815" d="M803 807h16v16h-16z"/>
<path fill="#0ff813" d="M817 807h16v16h-16z"/>
<path fill="#0ff811" d="M831 807h16v16h-16z"/>
<path fill="#0ff70f" d="M845 807h16v16h-16z"/>
<path fill="#10f70f" d="M859 807h16v16h-16z"/>
<path fill="#12f70f" d="M873 807h16v16h-16z"/>
<path fill="#14f70f" d="M887 807h16v16h-16z"/>
<path fill="#17f70f" d="M901 807h16v16h-16z"/>
<path fill="#1af70f" d="M915 807h16v16h-16z"/>
<path fill="#1df70f" d="M929 807h16v16h-16z"/>
<path fill="#1ff70f" d="M943 807h16v16h-16z"/>
<path fill="#22f70f" d="M957 807h16v16h-16z"/>
<path fill="#25f70f" d="M971 807h16v16h-16z"/>
<path fill="#28f70f" d="M985 807h16v16h-16z"/>
<path fill="#0ff769" d="M369 821h16v16h-16z"/>
<path fill="#0ff765" d="M383 821h16v16h-16z"/>
<path fill="#0ff760" d="M397 821h16v16h-16z"/>
<path fill="#0ff75d" d="M411 821h16v16h-16z"/>
<path fill="#0ff759" d="M425 821h16v16h-16z"/>
<path fill="#0ff756" d="M439 821h16v16h-16z"/>
<path fill="#0ff753" d="M453 821h16v16h-16z"/>
<path fill="#0ff750" d="M467 821h16v16h-16z"/>
<path fill="#0ff74d" d="M481 821h16v16h-16z"/>
<path fill="#0ff74a" d="M495 821h16v16h-16z"/>
<path fill="#0ff747" d="M509 821h16v16h-16z"/>
<path fill="#0ff744" d="M523 821h16v16h-16z"/>
<path fill="#0ff741" d="M537 821h16v16h-16z"/>
<path fill="#0ff73d" d="M551 821h16v16h-16z"/>
<path fill="#0ff73a" d="M565 821h16v16h-16z"/>
<path fill="#0ff737" d="M579 821h16v16h-16z"/>
<path fill="#0ff734" d="M593 821h16v16h-16z"/>
<path fill="#0ff731" d="M607 821h16v16h-16z"/>
<path fill="#0ff72e" d="M621 821h16v16h-16z"/>
<path fill="#0ff72b" d="M635 821h16v16h-16z"/>
<path fill="#0ff728" d="M649 821h16v16h-16z"/>
<path fill="#0ff726" d="M663 821h16v16h-16z"/>
<path fill="#0ff723" d="M677 821h16v16h-16z"/>
<path fill="#0ff721" d="M691 821h16v16h-16z"/>
<path fill="#0ff71f" d="M705 821h16v16h-16z"/>
<path fill="#0ff71d" d="M719 821h16v16h-16z"/>
<path fill="#0ff71b" d="M733 821h16v16h-16z"/>
<path fill="#0ff71a" d="M747 821h16v16h-16z"/>
<path fill="#0ff718" d="M761 821h16v16h-16z"/>
<path fill="#0ff716" d="M775 821h16v16h-16z"/>
<path fill="#0ff714" d="M789 821h16v16h-16z"/>
<path fill="#0ff712" d="M803 821h16v16h-16z"/>
<path fill="#0ff710" d="M817 821h16v16h-16z"/>
<path fill="#10f70f" d="M831 821h16v16h-16z"/>
<path fill="#11f70f" d="M845 821h16v16h-16z"/>
<path fill="#13f70f" d="M859 821h16v16h-16z"/>
<path fill="#15f70f" d="M873 821h16v16h-16z"/>
<path fill="#17f70f" d="M887 821h16v16h-16z"/>
<path fill="#1af70f" d="M901 821h16v16h-16z"/>
<path fill="#1cf70f" d="M915 821h16v16h-16z"/>
<path fill="#1ff70f" d="M929 821h16v16h-16z"/>
<path fill="#22f70f" d="M943 821h16v16h-16z"/>
<path fill="#25f70f" d="M957 821h16v16h-16z"/>
<path fill="#28f70f" d="M971 821h16v16h-16z"/>
<path fill="#0ff75f" d="M383 835h16v16h-16z"/>
<path fill="#0ff75b" d="M397 835h16v16h-16z"/>
<path fill="#0ff757" d="M411 835h16v16h-16z"/>
<path fill="#0ff753" d="M425 835h16v16h-16z"/>
<path fill="#0ff750" d="M439 835h16v16h-16z"/>
<path fill="#0ff74d" d="M453 835h16v16h-16z"/>
<path fill="#0ff74a" d="M467 835h16v16h-16z"/>
<path fill="#0ff747" d="M481 835h16v16h-16z"/>
<path fill="#0ff744" d="M495 835h16v16h-16z"/>
<path fill="#0ff741" d="M509 835h16v16h-16z"/>
<path fill="#0ff73e" d="M523 835h16v16h-16z"/>
<path fill="#0ff73b" d="M537 835h16v16h-16z"/>
<path fill="#0ff738" d="M551 835h16v16h-16z"/>
<path fill="#0ff735" d="M565 835h16v16h-16z"/>
<path fill="#0ff732" d="M579 835h16v16h-16z"/>
<path fill="#0ff72f" d="M593 835h16v16h-16z"/>
<path fill="#0ff72c" d="M607 835h16v16h-16z"/>
<path fill="#0ff729" d="M621 835h16v16h-16z"/>
<path fill="#0ff726" d="M635 835h16v16h-16z"/>
<path fill="#0ff723" d="M649 835h16v16h-16z"/>
<path fill="#0ff720" d="M663 835h16v16h-16z"/>
<path fill="#0ff71d" d="M677 835h16v16h-16z"/>
<path fill="#0ff71b" d="M691 835h16v16h-16z"/>
<path fill="#0ff719" d="M705 835h16v16h-16z"/>
<path fill="#0ff717" d="M719 835h16v16h-16z"/>
<path fill="#0ff716" d="M733 835h16v16h-16z"/>
<path fill="#0ff715" d="M747 835h16v16h-16z"/>
<path fill="#0ff713" d="M761 835h16v16h-16z"/>
<path fill="#0ff712" d="M775 835h16v16h-16z"/>
<path fill="#0ff710" d="M789 835h16v16h-16z"/>
<path fill="#0ff70f" d="M803 835h16v16h-16z"/>
<path fill="#11f70f" d="M817 835h16v16h-16z"/>
<path fill="#12f70f" d="M831 835h16v16h-16z"/>
<path fill="#14f70f" d="M845 835h16v16h-16z"/>
<path fill="#16f70f" d="M859 835h16v16h-16z"/>
<path fill="#18f70f" d="M873 835h16v16h-16z"/>
<path fill="#1af70f" d="M887 835h16v16h-16z"/>
<path fill="#1df70f" d="M901 835h16v16h-16z"/>
<path fill="#1ff70f" d="M915 835h16v16h-16z"/>
<path fill="#22f70f" d="M929 835h16v16h-16z"/>
<path fill="#25f70f" d="M943 835h16v16h-16z"/>
<path fill="#28f70f" d="M957 835h16v16h-16z"/>
<path fill="#2bf70f" d="M971 835h16v16h-16z"/>
<path fill="#0ff759" d="M383 849h16v16h-16z"/>
<path fill="#0ff755" d="M397 849h16v16h-16z"/>
<path fill="#0ff751" d="M411 849h16v16h-16z"/>
<path fill="#0ff74d" d="M425 849h16v16h-16z"/>
<path fill="#0ff74a" d="M439 849h16v16h-16z"/>
<path fill="#0ff747" d="M453 849h16v16h-16z"/>
<path fill="#0ff744" d="M467 849h16v16h-16z"/>
<path fill="#0ff742" d="M481 849h16v16h-16z"/>
<path fill="#0ff73f" d="M495 849h16v16h-16z"/>
<path fill="#0ff73c" d="M509 849h16v16h-16z"/>
<path fill="#0ff739" d="M523 849h16v16h-16z"/>
<path fill="#0ff736" d="M537 849h16v16h-16z"/>
<path fill="#0ff733" d="M551 849h16v16h-16z"/>
<path fill="#0ff730" d="M565 849h16v16h-16z"/>
<path fill="#0ff72d" d="M579 849h16v16h-16z"/>
<path fill="#0ff72a" d="M593 849h16v16h-16z"/>
<path fill="#0ff727" d="M607 849h16v16h-16z"/>
<path fill="#0ff724" d="M621 849h16v16h-16z"/>
<path fill="#0ff721" d="M635 849h16v16h-16z"/>
<path fill="#0ff71e" d="M649 849h16v16h-16z"/>
<path fill="#0ff71b" d="M663 849h16v16h-16z"/>
<path fill="#0ff718" d="M677 849h16v16h-16z"/>
<path fill="#0ff716" d="M691 849h16v16h-16z"/>
<path fill="#0ff714" d="M705 849h16v16h-16z"/>
<path fill="#0ff713" d="M719 849h16v16h-16z"/>
<path fill="#0ff712" d="M733 849h16v16h-16z"/>
<path fill="#0ff711" d="M747 849h16v16h-16z"/>
<path fill="#0ff710" d="M761 849h16v16h-16z"/>
<path fill="#0ff70f" d="M775 849h16v16h-16z"/>
<path fill="#10f70f" d="M789 849h16v16h-16z"/>
<path fill="#12f70f" d="M803 849h16v16h-16z"/>
<path fill="#13f70f" d="M817 849h16v16h-16z"/>
<path fill="#15f70f" d="M831 849h16v16h-16z"/>
<path fill="#17f70f" d="M845 849h16v16h-16z"/>
<path fill="#19f70f" d="M859 849h16v16h-16z"/>
<path fill="#1bf70f" d="M873 849h16v16h-16z"/>
<path fill="#1df70f" d="M887 849h16v16h-16z"/>
<path fill="#20f70f" d="M901 849h16v16h-16z"/>
<path fill="#22f70f" d="M915 849h16v16h-16z"/>
<path fill="#25f70f" d="M929 849h16v16h-16z"/>
<path fill="#28f70f" d="M943 849h16v16h-16z"/>
<path fill="#2bf70f" d="M957 849h16v16h-16z"/>
<path fill="#0ff750" d="M397 863h16v16h-16z"/>
<path fill="#0ff74b" d="M411 863h16v16h-16z"/>
<path fill="#0ff748" d="M425 863h16v16h-16z"/>
<path fill="#0ff745" d="M439 863h16v16h-16z"/>
<path fill="#0ff742" d="M453 863h16v16h-16z"/>
<path fill="#0ff73f" d="M467 863h16v16h-16z"/>
<path fill="#0ff73d" d="M481 863h16v16h-16z"/>
<path fill="#0ff73a" d="M495 863h16v16h-16z"/>
<path fill="#0ff737" d="M509 863h16v16h-16z"/>
<path fill="#0ff734" d="M523 863h16v16h-16z"/>
<path fill="#0ff731" d="M537 863h16v16h-16z"/>
<path fill="#0ff72f" d="M551 863h16v16h-16z"/>
<path fill="#0ff72c" d="M565 863h16v16h-16z"/>
<path fill="#0ff729" d="M579 863h16v16h-16z"/>
<path fill="#0ff726" d="M593 863h16v16h-16z"/>
<path fill="#0ff723" d="M607 863h16v16h-16z"/>
<path fill="#0ff720" d="M621 863h16v16h-16z"/>
<path fill="#0ff71d" d="M635 863h16v16h-16z"/>
<path fill="#0ff71a" d="M649 863h16v16h-16z"/>
<path fill="#0ff717" d="M663 863h16v16h-16z"/>
<path fill="#0ff714" d="M677 863h16v16h-16z"/>
<path fill="#0ff711" d="M691 863h16v16h-16z"/>
<path fill="#0ff710" d="M705 863h16v16h-16z"/>
<path fill="#0ff70f" d="M719 863h16v16h-16z"/>
<path fill="#10f70f" d="M733 863h16v16h-16z"/>
<path fill="#10f70f" d="M747 863h16v16h-16z"/>
<path fill="#11f70f" d="M761 863h16v16h-16z"/>
<path fill="#12f70f" d="M775 863h16v16h-16z"/>
<path fill="#13f70f" d="M789 863h16v16h-16z"/>
<path fill="#14f70f" d="M803 863h16v16h-16z"/>
<path fill="#16f70f" d="M817 863h16v16h-16z"/>
<path fill="#18f70f" d="M831 863h16v16h-16z"/>
<path fill="#19f70f" d="M845 863h16v16h-16z"/>
<path fill="#1bf70f" d="M859 863h16v16h-16z"/>
<path fill="#1ef70f" d="M873 863h16v16h-16z"/>
<path fill="#20f70f" d="M887 863h16v16h-16z"/>
<path fill="#23f70f" d="M901 863h16v16h-16z"/>
<path fill="#26f70f" d="M915 863h16v16h-16z"/>
<path fill="#28f70f" d="M929 863h16v16h-16z"/>
<path fill="#2bf70f" d="M943 863h16v16h-16z"/>
<path fill="#0ff74b" d="M397 877h16v16h-16z"/>
<path fill="#0ff747" d="M411 877h16v16h-16z"/>
<path fill="#0ff743" d="M425 877h16v16h-16z"/>
<path fill="#0ff740" d="M439 877h16v16h-16z"/>
<path fill="#0ff73d" d="M453 877h16v16h-16z"/>
<path fill="#0ff73b" d="M467 877h16v16h-16z"/>
<path fill="#0ff738" d="M481 877h16v16h-16z"/>
<path fill="#0ff736" d="M495 877h16v16h-16z"/>
<path fill="#0ff733" d="M509 877h16v16h-16z"/>
<path fill="#0ff730" d="M523 877h16v16h-16z"/>
<path fill="#0ff72e" d="M537 877h16v16h-16z"/>
<path fill="#0ff72b" d="M551 877h16v16h-16z"/>
<path fill="#0ff728" d="M565 877h16v16h-16z"/>
<path fill="#0ff726" d="M579 877h16v16h-16z"/>
<path fill="#0ff723" d="M593 877h16v16h-16z"/>
<path fill="#0ff720" d="M607 877h16v16h-16z"/>
<path fill="#0ff71d" d="M621 877h16v16h-16z"/>
<path fill="#0ff71a" d="M635 877h16v16h-16z"/>
<path fill="#0ff717" d="M649 877h16v16h-16z"/>
<path fill="#0ff714" d="M663 877h16v16h-16z"/>
<path fill="#0ff711" d="M677 877h16v16h-16z"/>
<path fill="#10f70f" d="M691 877h16v16h-16z"/>
<path fill="#11f70f" d="M705 877h16v16h-16z"/>
<path fill="#12f70f" d="M719 877h16v16h-16z"/>
<path fill="#12f70f" d="M733 877h16v16h-16z"/>
<path fill="#13f70f" d="M747 877h16v16h-16z"/>
<path fill="#14f70f" d="M761 877h16v16h-16z"/>
<path fill="#14f70f" d="M775 877h16v16h-16z"/>
<path fill="#15f70f" d="M789 877h16v16h-16z"/>
<path fill="#17f70f" d="M803 877h16v16h-16z"/>
<path fill="#18f70f" d="M817 877h16v16h-16z"/>
<path fill="#1af70f" d="M831 877h16v16h-16z"/>
<path fill="#1cf70f" d="M845 877h16v16h-16z"/>
<path fill="#1ef70f" d="M859 877h16v16h-16z"/>
<path fill="#20f70f" d="M873 877h16v16h-16z"/>
<path fill="#23f70f" d="M887 877h16v16h-16z"/>
<path fill="#25f70f" d="M901 877h16v16h-16z"/>
<path fill="#28f70f" d="M915 877h16v16h-16z"/>
<path fill="#2bf70f" d="M929 877h16v16h-16z"/>
<path fill="#2ef70f" d="M943 877h16v16h-16z"/>
<path fill="#0ff743" d="M411 891h16v16h-16z"/>
<path fill="#0ff73f" d="M425 891h16v16h-16z"/>
<path fill="#0ff73c" d="M439 891h16v16h-16z"/>
<path fill="#0ff73a" d="M453 891h16v16h-16z"/>
<path fill="#0ff737" d="M467 891h16v16h-16z"/>
<path fill="#0ff735" d="M481 891h16v16h-16z"/>
<path fill="#0ff732" d="M495 891h16v16h-16z"/>
<path fill="#0ff72f" d="M509 891h16v16h-16z"/>
<path fill="#0ff72d" d="M523 891h16v16h-16z"/>
<path fill="#0ff72a" d="M537 891h16v16h-16z"/>
<path fill="#0ff728" d="M551 891h16v16h-16z"/>
<path fill="#0ff726" d="M565 891h16v16h-16z"/>
<path fill="#0ff723" d="M579 891h16v16h-16z"/>
<path fill="#0ff721" d="M593 891h16v16h-16z"/>
<path fill="#0ff71e" d="M607 891h16v16h-16z"/>
<path fill="#0ff71b" d="M621 891h16v16h-16z"/>
<path fill="#0ff718" d="M635 891h16v16h-16z"/>
<path fill="#0ff715" d="M649 891h16v16h-16z"/>
<path fill="#0ff711" d="M663 891h16v16h-16z"/>
<path fill="#0ff70f" d="M677 891h16v16h-16z"/>
<path fill="#11f70f" d="M691 891h16v16h-16z"/>
<path fill="#13f70f" d="M705 891h16v16h-16z"/>
<path fill="#14f70f" d="M719 891h16v16h-16z"/>
<path fill="#14f70f" d="M733 891h16v16h-16z"/>
<path fill="#15f70f" d="M747 891h16v16h-16z"/>
<path fill="#15f70f" d="M761 891h16v16h-16z"/>
<path fill="#16f70f" d="M775 891h16v16h-16z"/>
<path fill="#17f70f" d="M789 891h16v16h-16z"/>
<path fill="#18f70f" d="M803 891h16v16h-16z"/>
<path fill="#1af70f" d="M817 891h16v16h-16z"/>
<path fill="#1cf70f" d="M831 891h16v16h-16z"/>
<path fill="#1ef70f" d="M845 891h16v16h-16z"/>
<path fill="#20f70f" d="M859 891h16v16h-16z"/>
<path fill="#22f70f" d="M873 891h16v16h-16z"/>
<path fill="#25f70f" d="M887 891h16v16h-16z"/>
<path fill="#28f70f" d="M901 891h16v16h-16z"/>
<path fill="#2bf70f" d="M915 891h16v16h-16z"/>
<path fill="#2ef70f" d="M929 891h16v16h-16z"/>
<path fill="#0ff73c" d="M425 905h16v16h-16z"/>
<path fill="#0ff739" d="M439 905h16v16h-16z"/>
<path fill="#0ff737" d="M453 905h16v16h-16z"/>
<path fill="#0ff734" d="M467 905h16v16h-16z"/>
<path fill="#0ff731" d="M481 905h16v16h-16z"/>
<path fill="#0ff72f" d="M495 905h16v16h-16z"/>
<path fill="#0ff72c" d="M509 905h16v16h-16z"/>
<path fill="#0ff72a" d="M523 905h16v16h-16z"/>
<path fill="#0ff727" d="M537 905h16v16h-16z"/>
<path fill="#0ff725" d="M551 905h16v16h-16z"/>
<path fill="#0ff723" d="M565 905h16v16h-16z"/>
<path fill="#0ff721" d="M579 905h16v16h-16z"/>
<path fill="#0ff71e" d="M593 905h16v16h-16z"/>
<path fill="#0ff71c" d="M607 905h16v16h-16z"/>
<path fill="#0ff719" d="M621 905h16v16h-16z"/>
<path fill="#0ff716" d="M635 905h16v16h-16z"/>
<path fill="#0ff713" d="M649 905h16v16h-16z"/>
<path fill="#0ff710" d="M663 905h16v16h-16z"/>
<path fill="#10f70f" d="M677 905h16v16h-16z"/>
<path fill="#12f70f" d="M691 905h16v16h-16z"/>
<path fill="#14f70f" d="M705 905h16v16h-16z"/>
<path fill="#15f70f" d="M719 905h16v16h-16z"/>
<path fill="#15f70f" d="M733 905h16v16h-16z"/>
<path fill="#16f70f" d="M747 905h16v16h-16z"/>
<path fill="#17f70f" d="M761 905h16v16h-16z"/>
<path fill="#18f70f" d="M775 905h16v16h-16z"/>
<path fill="#19f70f" d="M789 905h16v16h-16z"/>
<path fill="#1af70f" d="M803 905h16v16h-16z"/>
<path fill="#1bf70f" d="M817 905h16v16h-16z"/>
<path fill="#1df70f" d="M831 905h16v16h-16z"/>
<path fill="#1ff70f" d="M845 905h16v16h-16z"/>
<path fill="#22f70f" d="M859 905h16v16h-16z"/>
<path fill="#24f70f" d="M873 905h16v16h-16z"/>
<path fill="#27f70f" d="M887 905h16v16h-16z"/>
<path fill="#2af70f" d="M901 905h16v16h-16z"/>
<path fill="#2df70f" d="M915 905h16v16h-16z"/>
<path fill="#0ff739" d="M425 919h16v16h-16z"/>
<path fill="#0ff737" d="M439 919h16v16h-16z"/>
<path fill="#0ff734" d="M453 919h16v16h-16z"/>
<path fill="#0ff731" d="M467 919h16v16h-16z"/>
<path fill="#0ff72f" d="M481 919h16v16h-16z"/>
<path fill="#0ff72c" d="M495 919h16v16h-16z"/>
<path fill="#0ff729" d="M509 919h16v16h-16z"/>
<path fill="#0ff727" d="M523 919h16v16h-16z"/>
<path fill="#0ff725" d="M537 919h16v16h-16z"/>
<path fill="#0ff723" d="M551 919h16v16h-16z"/>
<path fill="#0ff721" d="M565 919h16v16h-16z"/>
<path fill="#0ff71f" d="M579 919h16v16h-16z"/>
<path fill="#0ff71d" d="M593 919h16v16h-16z"/>
<path fill="#0ff71a" d="M607 919h16v16h-16z"/>
<path fill="#0ff718" d="M621 919h16v16h-16z"/>
<path fill="#0ff715" d="M635 919h16v16h-16z"/>
<path fill="#0ff712" d="M649 919h16v16h-16z"/>
<path fill="#0ff70f" d="M663 919h16v16h-16z"/>
<path fill="#11f70f" d="M677 919h16v16h-16z"/>
<path fill="#12f70f" d="M691 919h16v16h-16z"/>
<path fill="#14f70f" d="M705 919h16v16h-16z"/>
<path fill="#15f70f" d="M719 919h16v16h-16z"/>
<path fill="#16f70f" d="M733 919h16v16h-16z"/>
<path fill="#17f70f" d="M747 919h16v16h-16z"/>
<path fill="#17f70f" d="M761 919h16v16h-16z"/>
<path fill="#18f70f" d="M775 919h16v16h-16z"/>
<path fill="#19f70f" d="M789 919h16v16h-16z"/>
<path fill="#1bf70f" d="M803 919h16v16h-16z"/>
<path fill="#1df70f" d="M817 919h16v16h-16z"/>
<path fill="#1ff70f" d="M831 919h16v16h-16z"/>
<path fill="#21f70f" d="M845 919h16v16h-16z"/>
<path fill="#23f70f" d="M859 919h16v16h-16z"/>
<path fill="#26f70f" d="M873 919h16v16h-16z"/>
<path fill="#29f70f" d="M887 919h16v16h-16z"/>
<path fill="#2cf70f" d="M901 919h16v16h-16z"/>
<path fill="#0ff734" d="M439 933h16v16h-16z"/>
<path fill="#0ff731" d="M453 933h16v16h-16z"/>
<path fill="#0ff72f" d="M467 933h16v16h-16z"/>
<path fill="#0ff72c" d="M481 933h16v16h-16z"/>
<path fill="#0ff729" d="M495 933h16v16h-16z"/>
<path fill="#0ff727" d="M509 933h16v16h-16z"/>
<path fill="#0ff724" d="M523 933h16v16h-16z"/>
<path fill="#0ff722" d="M537 933h16v16h-16z"/>
<path fill="#0ff721" d="M551 933h16v16h-16z"/>
<path fill="#0ff71f" d="M565 933h16v16h-16z"/>
<path fill="#0ff71d" d="M579 933h16v16h-16z"/>
<path fill="#0ff71b" d="M593 933h16v16h-16z"/>
<path fill="#0ff719" d="M607 933h16v16h-16z"/>
<path fill="#0ff716" d="M621 933h16v16h-16z"/>
<path fill="#0ff714" d="M635 933h16v16h-16z"/>
<path fill="#0ff711" d="M649 933h16v16h-16z"/>
<path fill="#0ff70f" d="M663 933h16v16h-16z"/>
<path fill="#11f70f" d="M677 933h16v16h-16z"/>
<path fill="#13f70f" d="M691 933h16v16h-16z"/>
<path fill="#14f70f" d="M705 933h16v16h-16z"/>
<path fill="#15f70f" d="M719 933h16v16h-16z"/>
<path fill="#16f70f" d="M733 933h16v16h-16z"/>
<path fill="#17f70f" d="M747 933h16v16h-16z"/>
<path fill="#18f70f" d="M761 933h16v16h-16z"/>
<path fill="#19f70f" d="M775 933h16v16h-16z"/>
<path fill="#1af70f" d="M789 933h16v16h-16z"/>
<path fill="#1cf70f" d="M803 933h16v16h-16z"/>
<path fill="#1df70f" d="M817 933h16v16h-16z"/>
<path fill="#20f70f" d="M831 933h16v16h-16z"/>
<path fill="#22f70f" d="M845 933h16v16h-16z"/>
<path fill="#25f70f" d="M859 933h16v16h-16z"/>
<path fill="#28f70f" d="M873 933h16v16h-16z"/>
<path fill="#2bf70f" d="M887 933h16v16h-16z"/>
<path fill="#0ff731" d="M439 947h16v16h-16z"/>
<path fill="#0ff72e" d="M453 947h16v16h-16z"/>
<path fill="#0ff72c" d="M467 947h16v16h-16z"/>
<path fill="#0ff729" d="M481 947h16v16h-16z"/>
<path fill="#0ff726" d="M495 947h16v16h-16z"/>
<path fill="#0ff724" d="M509 947h16v16h-16z"/>
<path fill="#0ff722" d="M523 947h16v16h-16z"/>
<path fill="#0ff720" d="M537 947h16v16h-16z"/>
<path fill="#0ff71e" d="M551 947h16v16h-16z"/>
<path fill="#0ff71d" d="M565 947h16v16h-16z"/>
<path fill="#0ff71b" d="M579 947h16v16h-16z"/>
<path fill="#0ff71a" d="M593 947h16v16h-16z"/>
<path fill="#0ff718" d="M607 947h16v16h-16z"/>
<path fill="#0ff715" d="M621 947h16v16h-16z"/>
<path fill="#0ff713" d="M635 947h16v16h-16z"/>
<path fill="#0ff711" d="M649 947h16v16h-16z"/>
<path fill="#0ff70f" d="M663 947h16v16h-16z"/>
<path fill="#11f70f" d="M677 947h16v16h-16z"/>
<path fill="#13f70f" d="M691 947h16v16h-16z"/>
<path fill="#14f70f" d="M705 947h16v16h-16z"/>
<path fill="#15f70f" d="M719 947h16v16h-16z"/>
<path fill="#16f70f" d="M733 947h16v16h-16z"/>
<path fill="#17f70f" d="M747 947h16v16h-16z"/>
<path fill="#18f70f" d="M761 947h16v16h-16z"/>
<path fill="#19f70f" d="M775 947h16v16h-16z"/>
<path fill="#1bf70f" d="M789 947h16v16h-16z"/>
<path fill="#1cf70f" d="M803 947h16v16h-16z"/>
<path fill="#1ef70f" d="M817 947h16v16h-16z"/>
<path fill="#21f70f" d="M831 947h16v16h-16z"/>
<path fill="#23f70f" d="M845 947h16v16h-16z"/>
<path fill="#26f70f" d="M859 947h16v16h-16z"/>
<path fill="#29f70f" d="M873 947h16v16h-16z"/>
<path fill="#0ff72b" d="M453 961h16v16h-16z"/>
<path fill="#0ff729" d="M467 961h16v16h-16z"/>
<path fill="#0ff726" d="M481 961h16v16h-16z"/>
<path fill="#0ff723" d="M495 961h16v16h-16z"/>
<path fill="#0ff721" d="M509 961h16v16h-16z"/>
<path fill="#0ff81f" d="M523 961h16v16h-16z"/>
<path fill="#0ff71d" d="M537 961h16v16h-16z"/>
<path fill="#0ff71c" d="M551 961h16v16h-16z"/>
<path fill="#0ff71a" d="M565 961h16v16h-16z"/>
<path fill="#0ff719" d="M579 961h16v16h-16z"/>
<path fill="#0ff718" d="M593 961h16v16h-16z"/>
<path fill="#0ff716" d="M607 961h16v16h-16z"/>
<path fill="#0ff714" d="M621 961h16v16h-16z"/>
<path fill="#0ff712" d="M635 961h16v16h-16z"/>
<path fill="#0ff710" d="M649 961h16v16h-16z"/>
<path fill="#0ff70f" d="M663 961h16v16h-16z"/>
<path fill="#11f70f" d="M677 961h16v16h-16z"/>
<path fill="#13f70f" d="M691 961h16v16h-16z"/>
<path fill="#14f70f" d="M705 961h16v16h-16z"/>
<path fill="#15f70f" d="M719 961h16v16h-16z"/>
<path fill="#16f70f" d="M733 961h16v16h-16z"/>
<path fill="#17f70f" d="M747 961h16v16h-16z"/>
<path fill="#18f70f" d="M761 961h16v16h-16z"/>
<path fill="#19f70f" d="M775 961h16v16h-16z"/>
<path fill="#1bf70f" d="M789 961h16v16h-16z"/>
<path fill="#1df70f" d="M803 961h16v16h-16z"/>
<path fill="#1ff70f" d="M817 961h16v16h-16z"/>
<path fill="#21f70f" d="M831 961h16v16h-16z"/>
<path fill="#24f70f" d="M845 961h16v16h-16z"/>
<path fill="#27f70f" d="M859 961h16v16h-16z"/>
<path fill="#2af70f" d="M873 961h16v16h-16z"/>
<path fill="#0ff728" d="M453 975h16v16h-16z"/>
<path fill="#0ff725" d="M467 975h16v16h-16z"/>
<path fill="#0ff723" d="M481 975h16v16h-16z"/>
<path fill="#0ff720" d="M495 975h16v16h-16z"/>
<path fill="#0ff71e" d="M509 975h16v16h-16z"/>
<path fill="#0ff81c" d="M523 975h16v16h-16z"/>
<path fill="#0ff81a" d="M537 975h16v16h-16z"/>
<path fill="#0ff719" d="M551 975h16v16h-16z"/>
<path fill="#0ff718" d="M565 975h16v16h-16z"/>
<path fill="#0ff717" d="M579 975h16v16h-16z"/>
<path fill="#0ff715" d="M593 975h16v16h-16z"/>
<path fill="#0ff714" d="M607 975h16v16h-16z"/>
<path fill="#0ff713" d="M621 975h16v16h-16z"/>
<path fill="#0ff711" d="M635 975h16v16h-16z"/>
<path fill="#0ff70f" d="M649 975h16v16h-16z"/>
<path fill="#10f70f" d="M663 975h16v16h-16z"/>
<path fill="#11f70f" d="M677 975h16v16h-16z"/>
<path fill="#13f70f" d="M691 975h16v16h-16z"/>
<path fill="#14f70f" d="M705 975h16v16h-16z"/>
<path fill="#15f70f" d="M719 975h16v16h-16z"/>
<path fill="#16f70f" d="M733 975h16v16h-16z"/>
<path fill="#17f70f" d="M747 975h16v16h-16z"/>
<path fill="#18f70f" d="M761 975h16v16h-16z"/>
<path fill="#1af70f" d="M775 975h16v16h-16z"/>
<path fill="#1bf70f" d="M789 975h16v16h-16z"/>
<path fill="#1df70f" d="M803 975h16v16h-16z"/>
<path fill="#20f70f" d="M817 975h16v16h-16z"/>
<path fill="#22f70f" d="M831 975h16v16h-16z"/>
<path fill="#25f70f" d="M845 975h16v16h-16z"/>
<path fill="#29f70f" d="M859 975h16v16h-16z"/>
<path fill="#0ff722" d="M467 989h16v16h-16z"/>
<path fill="#0ff71f" d="M481 989h16v16h-16z"/>
<path fill="#0ff71d" d="M495 989h16v16h-16z"/>
<path fill="#0ff71b" d="M509 989h16v16h-16z"/>
<path fill="#0ff719" d="M523 989h16v16h-16z"/>
<path fill="#0ff817" d="M537 989h16v16h-16z"/>
<path fill="#0ff716" d="M551 989h16v16h-16z"/>
<path fill="#0ff715" d="M565 989h16v16h-16z"/>
<path fill="#0ff714" d="M579 989h16v16h-16z"/>
<path fill="#0ff713" d="M593 989h16v16h-16z"/>
<path fill="#0ff712" d="M607 989h16v16h-16z"/>
<path fill="#0ff711" d="M621 989h16v16h-16z"/>
<path fill="#0ff710" d="M635 989h16v16h-16z"/>
<path fill="#0ff70f" d="M649 989h16v16h-16z"/>
<path fill="#11f70f" d="M663 989h16v16h-16z"/>
<path fill="#12f70f" d="M677 989h16v16h-16z"/>
<path fill="#13f70f" d="M691 989h16v16h-16z"/>
<path fill="#14f70f" d="M705 989h16v16h-16z"/>
<path fill="#15f70f" d="M719 989h16v16h-16z"/>
<path fill="#16f70f" d="M733 989h16v16h-16z"/>
<path fill="#17f70f" d="M747 989h16v16h-16z"/>
<path fill="#19f70f" d="M761 989h16v16h-16z"/>
<path fill="#1af70f" d="M775 989h16v16h-16z"/>
<path fill="#1cf70f" d="M789 989h16v16h-16z"/>
<path fill="#1ef70f" d="M803 989h16v16h-16z"/>
<path fill="#20f70f" d="M817 989h16v16h-16z"/>
<path fill="#23f70f" d="M831 989h16v16h-16z"/>
<path fill="#26f70f" d="M845 989h16v16h-16z"/>
<path fill="#0ff71c" d="M481 1003h16v16h-16z"/>
<path fill="#0ff719" d="M495 1003h16v16h-16z"/>
<path fill="#0ff717" d="M509 1003h16v16h-16z"/>
<path fill="#0ff716" d="M523 1003h16v16h-16z"/>
<path fill="#0ff714" d="M537 1003h16v16h-16z"/>
<path fill="#0ff713" d="M551 1003h16v16h-16z"/>
<path fill="#0ff712" d="M565 1003h16v16h-16z"/>
<path fill="#0ff712" d="M579 1003h16v16h-16z"/>
<path fill="#0ff711" d="M593 1003h16v16h-16z"/>
<path fill="#0ff710" d="M607 1003h16v16h-16z"/>
<path fill="#0ff70f" d="M621 1003h16v16h-16z"/>
<path fill="#0ff70f" d="M635 1003h16v16h-16z"/>
<path fill="#10f70f" d="M649 1003h16v16h-16z"/>
<path fill="#12f70f" d="M663 1003h16v16h-16z"/>
<path fill="#13f70f" d="M677 1003h16v16h-16z"/>
<path fill="#14f70f" d="M691 1003h16v16h-16z"/>
<path fill="#15f70f" d="M705 1003h16v16h-16z"/>
<path fill="#16f70f" d="M719 1003h16v16h-16z"/>
<path fill="#17f70f" d="M733 1003h16v16h-16z"/>
<path fill="#18f70f" d="M747 1003h16v16h-16z"/>
<path fill="#19f70f" d="M761 1003h16v16h-16z"/>
<path fill="#1bf70f" d="M775 1003h16v16h-16z"/>
<path fill="#1cf70f" d="M789 1003h16v16h-16z"/>
<path fill="#1ff70f" d="M803 1003h16v16h-16z"/>
<path fill="#21f70f" d="M817 1003h16v16h-16z"/>
<path fill="#25f70f" d="M831 1003h16v16h-16z"/>
<path fill="#0ff719" d="M481 1017h16v16h-16z"/>
<path fill="#0ff716" d="M495 1017h16v16h-16z"/>
<path fill="#0ff714" d="M509 1017h16v16h-16z"/>
<path fill="#0ff713" d="M523 1017h16v16h-16z"/>
<path fill="#0ff711" d="M537 1017h16v16h-16z"/>
<path fill="#0ff711" d="M551 1017h16v16h-16z"/>
<path fill="#0ff710" d="M565 1017h16v16h-16z"/>
<path fill="#0ff70f" d="M579 1017h16v16h-16z"/>
<path fill="#0ff70f" d="M593 1017h16v16h-16z"/>
<path fill="#10f70f" d="M607 1017h16v16h-16z"/>
<path fill="#10f70f" d="M621 1017h16v16h-16z"/>
<path fill="#11f70f" d="M635 1017h16v16h-16z"/>
<path fill="#12f70f" d="M649 1017h16v16h-16z"/>
<path fill="#13f70f" d="M663 1017h16v16h-16z"/>
<path fill="#14f70f" d="M677 1017h16v16h-16z"/>
<path fill="#15f70f" d="M691 1017h16v16h-16z"/>
<path fill="#16f70f" d="M705 1017h16v16h-16z"/>
<path fill="#17f70f" d="M719 1017h16v16h-16z"/>
<path fill="#18f70f" d="M733 1017h16v16h-16z"/>
<path fill="#19f70f" d="M747 1017h16v16h-16z"/>
<path fill="#1af70f" d="M761 1017h16v16h-16z"/>
<path fill="#1cf70f" d="M775 1017h16v16h-16z"/>
<path fill="#1df70f" d="M789 1017h16v16h-16z"/>
<path fill="#20f70f" d="M803 1017h16v16h-16z"/>
<path fill="#23f70f" d="M817 1017h16v16h-16z"/>
<path fill="#0ff714" d="M495 1031h16v16h-16z"/>
<path fill="#0ff711" d="M509 1031h16v16h-16z"/>
<path fill="#0ff710" d="M523 1031h16v16h-16z"/>
<path fill="#0ff70f" d="M537 1031h16v16h-16z"/>
<path fill="#10f70f" d="M551 1031h16v16h-16z"/>
<path fill="#10f70f" d="M565 1031h16v16h-16z"/>
<path fill="#11f70f" d="M579 1031h16v16h-16z"/>
<path fill="#11f70f" d="M593 1031h16v16h-16z"/>
<path fill="#12f70f" d="M607 1031h16v16h-16z"/>
<path fill="#12f70f" d="M621 1031h16v16h-16z"/>
<path fill="#13f70f" d="M635 1031h16v16h-16z"/>
<path fill="#14f70f" d="M649 1031h16v16h-16z"/>
<path fill="#15f70f" d="M663 1031h16v16h-16z"/>
<path fill="#16f70f" d="M677 1031h16v16h-16z"/>
<path fill="#17f70f" d="M691 1031h16v16h-16z"/>
<path fill="#18f70f" d="M705 1031h16v16h-16z"/>
<path fill="#18f70f" d="M719 1031h16v16h-16z"/>
<path fill="#19f70f" d="M733 1031h16v16h-16z"/>
<path fill="#1bf70f" d="M747 1031h16v16h-16z"/>
<path fill="#1cf70f" d="M761 1031h16v16h-16z"/>
<path fill="#1df70f" d="M775 1031h16v16h-16z"/>
<path fill="#1ff70f" d="M789 1031h16v16h-16z"/>
<path fill="#22f70f" d="M803 1031h16v16h-16z"/>
</g>
<path d="M496 597Q560 582 603 567T700 548T745 534T772 517" fill="none" stroke="#178fe6" stroke-opacity=".8" stroke-width="20" stroke-linecap="round" filter="url(#fBlur2)"/>
<path d="M560 556Q640 540 700 512T800 470" fill="none" stroke="#30e9f2" stroke-opacity=".35" stroke-width="16" stroke-linecap="round" filter="url(#fBlur2)"/>
</g>
<g filter="url(#fSoft)">
<polygon points="236,581 260,575 290,568 327,560.5 345,556.5 360,553.5 371,552.3 380,555 388,560 398,564 406,567 390,566.5 370.7,566 355,570.5 337.6,577 300,588 255,600.5 253,610" fill="url(#gA)"/>
<polygon points="282,657 255,600.5 300,588 337.6,577 355,570.5 370.7,566 390,566.5 406,567 437,563 457.6,560.7 470,563 483,572 540,568 620,560 640,600 574,605 517,609 460,615 402,624 340,638 285,653" fill="url(#gB)" mask="url(#mB)"/>
<polygon points="282,657 255,600.5 300,588 337.6,577 355,570.5 370.7,566 390,566.5 406,567 437,563 457.6,560.7 470,563 483,572 540,568 620,560 640,600 574,605 517,609 460,615 402,624 340,638 285,653" fill="url(#gB2)" mask="url(#mB)"/>
<polyline points="285,654.5 340,639.5 402,625.5 460,616.5 517,610.5 574,606.5" fill="none" stroke="#48ecdc" stroke-opacity=".55" stroke-width="2.2" mask="url(#mB)"/>
<polygon points="850,360 870,352 890,344 897,338 905,335 923,332.5 940,333 960,334 1000,336 1030,341 1000,352 960,366 946,370 931,375 910,375 905,360 880,364" fill="url(#gP)"/>
<polygon points="850,360 870,352 890,344 897,338 905,335 923,332.5 940,333 960,334 1000,336 1030,341 1000,352 960,366 946,370 931,375 910,375 905,360 880,364" fill="url(#gP2)"/>
</g>
<g filter="url(#fSoft)">
<polygon points="516,442 524,433 549,420 575,413 582,410 587,420 600,418 619,414 643,405 679,395 724,379 775,362 800,352 820,345 829,341 840,336 851,332 853,343 858,350 864,338 872,339 880,336 888,330 892,340 900,343 908,348 912,356 903,352 860,366 821,378 800,386 724,406 676,422 643,432 593,439 560,447 545,448 524,456" fill="url(#gD)"/>
<polygon points="806,360 829,341 851,332 853.5,346 846,352 826,361" fill="#0e8c51"/>
<polygon points="806,360 829,341 851,332 840,334 818,349" fill="#09b320"/>
<polygon points="478.5,448.7 486.8,450.9 486.8,579.7 478.5,578.8" fill="url(#h0)"/>
<polygon points="485.8,450.9 494.2,452.3 494.2,579.1 485.8,579.7" fill="url(#h1)"/>
<polygon points="493.2,452.3 501.5,453 501.5,578.6 493.2,579.1" fill="url(#h2)"/>
<polygon points="500.5,453 508.9,453.6 508.9,578.1 500.5,578.6" fill="url(#h3)"/>
<polygon points="507.9,453.6 516.2,454.3 516.2,577.5 507.9,578.1" fill="url(#h4)"/>
<polygon points="515.2,454.3 523.5,454.9 523.5,577 515.2,577.5" fill="url(#h5)"/>
<polygon points="522.5,454.9 530.9,452.6 530.9,576.6 522.5,577" fill="url(#h6)"/>
<polygon points="529.9,452.6 538.2,449.8 538.2,576.1 529.9,576.6" fill="url(#h7)"/>
<polygon points="537.2,449.8 545.6,447 545.6,575.7 537.2,576.1" fill="url(#h8)"/>
<polygon points="544.6,447 552.9,446.5 552.9,575.2 544.6,575.7" fill="url(#h9)"/>
<polygon points="551.9,446.5 560.2,446 560.2,574.7 551.9,575.2" fill="url(#h10)"/>
<polygon points="559.2,446 567.6,444.3 567.6,573.7 559.2,574.7" fill="url(#h11)"/>
<polygon points="566.6,444.3 574.9,442.5 574.9,571.1 566.6,573.7" fill="url(#h12)"/>
<polygon points="573.9,442.5 582.2,440.7 582.2,568.5 573.9,571.1" fill="url(#h13)"/>
<polygon points="581.2,440.7 589.6,438.9 589.6,565.9 581.2,568.5" fill="url(#h14)"/>
<polygon points="588.6,438.9 596.9,437.5 596.9,563.3 588.6,565.9" fill="url(#h15)"/>
<polygon points="595.9,437.5 604.3,436.5 604.3,560.7 595.9,563.3" fill="url(#h16)"/>
<polygon points="603.3,436.5 611.6,435.5 611.6,557.7 603.3,560.7" fill="url(#h17)"/>
<polygon points="610.6,435.5 618.9,434.4 618.9,554.3 610.6,557.7" fill="url(#h18)"/>
<polygon points="617.9,434.4 626.3,433.4 626.3,550.9 617.9,554.3" fill="url(#h19)"/>
<polygon points="625.3,433.4 633.6,432.4 633.6,547.5 625.3,550.9" fill="url(#h20)"/>
<polygon points="632.6,432.4 641,431.4 641,544.1 632.6,547.5" fill="url(#h21)"/>
<polygon points="640,431.4 648.3,429.5 648.3,541 640,544.1" fill="url(#h22)"/>
<polygon points="647.3,429.5 655.6,427.3 655.6,538 647.3,541" fill="url(#h23)"/>
<polygon points="654.6,427.3 663,425.1 663,535.1 654.6,538" fill="url(#h24)"/>
<polygon points="662,425.1 670.3,422.9 670.3,532.1 662,535.1" fill="url(#h25)"/>
<polygon points="669.3,422.9 677.7,420.6 677.7,529.1 669.3,532.1" fill="url(#h26)"/>
<polygon points="676.7,420.6 685,418.2 685,526.1 676.7,529.1" fill="url(#h27)"/>
<polygon points="684,418.2 692.3,415.7 692.3,523.2 684,526.1" fill="url(#h28)"/>
<polygon points="691.3,415.7 699.7,413.3 699.7,520.2 691.3,523.2" fill="url(#h29)"/>
<polygon points="698.7,413.3 707,410.8 707,516.4 698.7,520.2" fill="url(#h30)"/>
<polygon points="706,410.8 714.3,408.4 714.3,512.4 706,516.4" fill="url(#h31)"/>
<polygon points="713.3,408.4 721.7,405.9 721.7,508.5 713.3,512.4" fill="url(#h32)"/>
<polygon points="720.7,405.9 729,403.8 729,504.2 720.7,508.5" fill="url(#h33)"/>
<polygon points="728,403.8 736.4,401.9 736.4,499.5 728,504.2" fill="url(#h34)"/>
<polygon points="735.4,401.9 743.7,399.9 743.7,494.9 735.4,499.5" fill="url(#h35)"/>
<polygon points="742.7,399.9 751,398 751,490.3 742.7,494.9" fill="url(#h36)"/>
<polygon points="750,398 758.4,396.1 758.4,485.6 750,490.3" fill="url(#h37)"/>
<polygon points="757.4,396.1 765.7,394.2 765.7,481 757.4,485.6" fill="url(#h38)"/>
<polygon points="764.7,394.2 773.1,392.2 773.1,476.3 764.7,481" fill="url(#h39)"/>
<polygon points="772.1,392.2 780.4,390.3 780.4,471.7 772.1,476.3" fill="url(#h40)"/>
<polygon points="779.4,390.3 787.7,388.4 787.7,467.1 779.4,471.7" fill="url(#h41)"/>
<polygon points="786.7,388.4 795.1,386.4 795.1,462.4 786.7,467.1" fill="url(#h42)"/>
<polygon points="794.1,386.4 802.4,384.3 802.4,457.5 794.1,462.4" fill="url(#h43)"/>
<polygon points="801.4,384.3 809.8,381.5 809.8,451.8 801.4,457.5" fill="url(#h44)"/>
<polygon points="808.8,381.5 817.1,378.7 817.1,446.2 808.8,451.8" fill="url(#h45)"/>
<polygon points="816.1,378.7 824.4,376.1 824.4,440.8 816.1,446.2" fill="url(#h46)"/>
<polygon points="823.4,376.1 831.8,373.8 831.8,435.9 823.4,440.8" fill="url(#h47)"/>
<polygon points="830.8,373.8 839.1,371.6 839.1,430.9 830.8,435.9" fill="url(#h48)"/>
<polygon points="838.1,371.6 846.4,369.3 846.4,426 838.1,430.9" fill="url(#h49)"/>
<polygon points="845.4,369.3 853.8,367.1 853.8,421.1 845.4,426" fill="url(#h50)"/>
<polygon points="852.8,367.1 861.1,364.8 861.1,416.2 852.8,421.1" fill="url(#h51)"/>
<polygon points="860.1,364.8 868.5,362.4 868.5,412 860.1,416.2" fill="url(#h52)"/>
<polygon points="867.5,362.4 875.8,360 875.8,407.8 867.5,412" fill="url(#h53)"/>
<polygon points="874.8,360 883.1,357.6 883.1,403.6 874.8,407.8" fill="url(#h54)"/>
<polygon points="882.1,357.6 890.5,355.2 890.5,399.4 882.1,403.6" fill="url(#h55)"/>
<polygon points="889.5,355.2 897.8,352.8 897.8,395.2 889.5,399.4" fill="url(#h56)"/>
<polygon points="896.8,352.8 905.2,351.9 905.2,389.6 896.8,395.2" fill="url(#h57)"/>
<polygon points="904.2,351.9 912.5,356 912.5,379 904.2,389.6" fill="url(#h58)"/>
</g>
<g style="mix-blend-mode:multiply">
<g clip-path="url(#cCoarse)">
<polygon points="225,97.5 1250,-210 1250,410 225,717.5" fill="url(#pS0)" opacity="0.72"/>
<polygon points="225,717.5 1250,410 1250,490 225,797.5" fill="url(#pS1)" opacity="0.8"/>
<polygon points="225,797.5 1250,490 1250,550 225,857.5" fill="url(#pS2)" opacity="0.86"/>
<polygon points="225,857.5 1250,550 1250,590 225,897.5" fill="url(#pS3)" opacity="0.9"/>
<polygon points="225,897.5 1250,590 1250,625 225,932.5" fill="url(#pS4)" opacity="0.94"/>
<polygon points="225,932.5 1250,625 1250,660 225,967.5" fill="url(#pS5)" opacity="0.97"/>
<polygon points="225,967.5 1250,660 1250,695 225,1002.5" fill="url(#pS6)" opacity="1"/>
<polygon points="225,1002.5 1250,695 1250,730 225,1037.5" fill="url(#pS7)" opacity="1"/>
<polygon points="225,1037.5 1250,730 1250,765 225,1072.5" fill="url(#pS8)" opacity="1"/>
<polygon points="225,1072.5 1250,765 1250,805 225,1112.5" fill="url(#pS9)" opacity="1"/>
<polygon points="225,1112.5 1250,805 1250,845 225,1152.5" fill="url(#pS10)" opacity="1"/>
<polygon points="225,1152.5 1250,845 1250,890 225,1197.5" fill="url(#pS11)" opacity="1"/>
<polygon points="225,1197.5 1250,890 1250,1190 225,1497.5" fill="url(#pS12)" opacity="1"/>
</g><g clip-path="url(#cFine)">
<polygon points="225,-65 1250,140 1250,760 225,555" fill="url(#pS0)" opacity="0.72"/>
<polygon points="225,555 1250,760 1250,840 225,635" fill="url(#pS1)" opacity="0.8"/>
<polygon points="225,635 1250,840 1250,900 225,695" fill="url(#pS2)" opacity="0.86"/>
<polygon points="225,695 1250,900 1250,940 225,735" fill="url(#pS3)" opacity="0.9"/>
<polygon points="225,735 1250,940 1250,975 225,770" fill="url(#pS4)" opacity="0.94"/>
<polygon points="225,770 1250,975 1250,1010 225,805" fill="url(#pS5)" opacity="0.97"/>
<polygon points="225,805 1250,1010 1250,1045 225,840" fill="url(#pS6)" opacity="1"/>
<polygon points="225,840 1250,1045 1250,1080 225,875" fill="url(#pS7)" opacity="1"/>
<polygon points="225,875 1250,1080 1250,1115 225,910" fill="url(#pS8)" opacity="1"/>
<polygon points="225,910 1250,1115 1250,1155 225,950" fill="url(#pS9)" opacity="1"/>
<polygon points="225,950 1250,1155 1250,1195 225,990" fill="url(#pS10)" opacity="1"/>
<polygon points="225,990 1250,1195 1250,1240 225,1035" fill="url(#pS11)" opacity="1"/>
<polygon points="225,1035 1250,1240 1250,1540 225,1335" fill="url(#pS12)" opacity="1"/>
</g></g>
<circle cx="449" cy="398" r="2.9" fill="url(#s348_9)"/>
<circle cx="443" cy="401" r="2.9" fill="url(#s354_9)"/>
<circle cx="447" cy="407" r="2.9" fill="url(#s354_9)"/>
<circle cx="441" cy="410" r="2.9" fill="url(#s0_9)"/>
<circle cx="445" cy="414" r="2.9" fill="url(#s0_9)"/>
<circle cx="440" cy="418" r="2.9" fill="url(#s6_9)"/>
<circle cx="443" cy="422" r="2.9" fill="url(#s12_9)"/>
<circle cx="438" cy="425" r="2.9" fill="url(#s18_9)"/>
<circle cx="441" cy="429" r="2.9" fill="url(#s18_9)"/>
<circle cx="436" cy="432" r="2.9" fill="url(#s24_9)"/>
<circle cx="438" cy="436" r="2.9" fill="url(#s30_9)"/>
<circle cx="431.4" cy="438" r="2.9" fill="url(#s36_9)"/>
<circle cx="432.1" cy="442.1" r="3.1" fill="url(#s36_9)"/>
<circle cx="430.5" cy="447.2" r="3.1" fill="url(#s42_9)"/>
<circle cx="431.8" cy="451.3" r="3.5" fill="url(#s48_9)"/>
<circle cx="432.4" cy="455.8" r="3.6" fill="url(#s54_9)"/>
<circle cx="433.5" cy="460.6" r="2.7" fill="url(#s60_9)"/>
<circle cx="430.9" cy="465.2" r="2.8" fill="url(#s60_9)"/>
<circle cx="431" cy="470.8" r="3.7" fill="url(#s66_9)"/>
<circle cx="432.2" cy="475.5" r="3.1" fill="url(#s60_9)"/>
<circle cx="432.6" cy="479.9" r="3.5" fill="url(#s66_9)"/>
<circle cx="431.9" cy="485.1" r="3.4" fill="url(#s78_8)"/>
<circle cx="431.2" cy="490.5" r="3.7" fill="url(#s84_8)"/>
<circle cx="432.7" cy="496.3" r="3.3" fill="url(#s90_8)"/>
<circle cx="431.7" cy="500.5" r="3.9" fill="url(#s90_8)"/>
<circle cx="430.5" cy="505.5" r="3.8" fill="url(#s102_8)"/>
<circle cx="436.7" cy="441" r="3" fill="url(#s42_9)"/>
<circle cx="435.8" cy="446.2" r="3.2" fill="url(#s48_9)"/>
<circle cx="435.4" cy="452.1" r="3.4" fill="url(#s48_9)"/>
<circle cx="436" cy="457.5" r="3.7" fill="url(#s60_9)"/>
<circle cx="435.1" cy="462.1" r="3.4" fill="url(#s54_9)"/>
<circle cx="434.4" cy="467" r="2.8" fill="url(#s60_9)"/>
<circle cx="434.3" cy="472.5" r="3.3" fill="url(#s60_9)"/>
<circle cx="434.2" cy="478.3" r="3.5" fill="url(#s72_9)"/>
<circle cx="436.5" cy="484" r="4" fill="url(#s72_8)"/>
<circle cx="435" cy="488.9" r="4.1" fill="url(#s84_8)"/>
<circle cx="434.5" cy="493.2" r="3.3" fill="url(#s84_8)"/>
<circle cx="435.8" cy="498.1" r="3.3" fill="url(#s84_8)"/>
<circle cx="435.1" cy="503" r="3.7" fill="url(#s102_8)"/>
<circle cx="435.5" cy="508.3" r="3.7" fill="url(#s102_8)"/>
<circle cx="436.8" cy="512.4" r="3.9" fill="url(#s114_8)"/>
<circle cx="435.2" cy="518" r="3.5" fill="url(#s114_8)"/>
<circle cx="437.6" cy="438" r="2.8" fill="url(#s36_9)"/>
<circle cx="438.5" cy="442.3" r="2.8" fill="url(#s36_9)"/>
<circle cx="437.7" cy="446.6" r="3.1" fill="url(#s42_9)"/>
<circle cx="439.4" cy="452.4" r="2.8" fill="url(#s48_9)"/>
<circle cx="438.6" cy="457.1" r="2.8" fill="url(#s60_9)"/>
<circle cx="438.9" cy="463.1" r="3.2" fill="url(#s54_9)"/>
<circle cx="438.5" cy="467.3" r="3" fill="url(#s66_9)"/>
<circle cx="437.5" cy="471.6" r="4.1" fill="url(#s66_9)"/>
<circle cx="439.1" cy="475.9" r="3" fill="url(#s66_9)"/>
<circle cx="440.2" cy="481.8" r="3.8" fill="url(#s72_8)"/>
<circle cx="437.9" cy="486.6" r="3.9" fill="url(#s78_8)"/>
<circle cx="438.5" cy="492.1" r="3.3" fill="url(#s84_8)"/>
<circle cx="440.1" cy="498.1" r="4" fill="url(#s96_8)"/>
<circle cx="442.1" cy="441" r="3.2" fill="url(#s36_9)"/>
<circle cx="441.5" cy="445.1" r="3" fill="url(#s42_9)"/>
<circle cx="444.5" cy="450.4" r="3.1" fill="url(#s54_9)"/>
<circle cx="444.5" cy="456.4" r="3.1" fill="url(#s54_9)"/>
<circle cx="442" cy="460.9" r="2.9" fill="url(#s60_9)"/>
<circle cx="444.1" cy="466.7" r="3.2" fill="url(#s60_9)"/>
<circle cx="441.7" cy="472.3" r="3.8" fill="url(#s66_9)"/>
<circle cx="443.8" cy="477.8" r="3.6" fill="url(#s66_9)"/>
<circle cx="442.5" cy="483.4" r="4" fill="url(#s78_8)"/>
<circle cx="442.7" cy="488.2" r="4.1" fill="url(#s78_8)"/>
<circle cx="441.8" cy="492.5" r="3.2" fill="url(#s90_8)"/>
<circle cx="441.9" cy="498.2" r="4" fill="url(#s96_8)"/>
<circle cx="442.5" cy="503.5" r="3.7" fill="url(#s96_8)"/>
<circle cx="444.5" cy="507.5" r="3.8" fill="url(#s102_8)"/>
<circle cx="442.8" cy="513.4" r="4" fill="url(#s114_8)"/>
<circle cx="442.2" cy="517.8" r="3.4" fill="url(#s114_8)"/>
<circle cx="442.2" cy="523" r="3.5" fill="url(#s120_8)"/>
<circle cx="442.5" cy="528.8" r="3.5" fill="url(#s132_8)"/>
<circle cx="442.7" cy="534.6" r="4.1" fill="url(#s138_9)"/>
<circle cx="443.1" cy="539.7" r="3" fill="url(#s144_9)"/>
<circle cx="445.4" cy="438" r="3.5" fill="url(#s36_9)"/>
<circle cx="447.7" cy="442.9" r="3.3" fill="url(#s42_9)"/>
<circle cx="447.2" cy="448" r="3.5" fill="url(#s42_9)"/>
<circle cx="446.2" cy="453.1" r="3" fill="url(#s54_9)"/>
<circle cx="447.2" cy="458.1" r="3.5" fill="url(#s60_9)"/>
<circle cx="447.4" cy="463" r="3.2" fill="url(#s60_9)"/>
<circle cx="446.8" cy="468.4" r="3.2" fill="url(#s60_9)"/>
<circle cx="447.6" cy="474.3" r="4.1" fill="url(#s66_9)"/>
<circle cx="447.2" cy="478.8" r="4.1" fill="url(#s72_9)"/>
<circle cx="445.8" cy="483.1" r="3.5" fill="url(#s72_8)"/>
<circle cx="445.6" cy="487.5" r="3.8" fill="url(#s78_8)"/>
<circle cx="445.9" cy="493.3" r="3.9" fill="url(#s84_8)"/>
<circle cx="448.2" cy="497.6" r="4.2" fill="url(#s90_8)"/>
<circle cx="446.7" cy="503.5" r="3.6" fill="url(#s102_8)"/>
<circle cx="445.9" cy="509.2" r="3.5" fill="url(#s102_8)"/>
<circle cx="446" cy="513.9" r="3.4" fill="url(#s114_8)"/>
<circle cx="447.2" cy="517.9" r="3.5" fill="url(#s114_8)"/>
<circle cx="447.4" cy="522.6" r="3.6" fill="url(#s120_8)"/>
<circle cx="447.9" cy="528.5" r="4.2" fill="url(#s126_8)"/>
<circle cx="445.5" cy="533.1" r="3.9" fill="url(#s132_9)"/>
<circle cx="446.8" cy="537.3" r="4.1" fill="url(#s144_9)"/>
<circle cx="445.9" cy="541.9" r="4.1" fill="url(#s150_9)"/>
<circle cx="445.7" cy="547.3" r="3.1" fill="url(#s156_9)"/>
<circle cx="449.6" cy="437" r="3.6" fill="url(#s36_9)"/>
<circle cx="449.7" cy="442.6" r="3.6" fill="url(#s36_9)"/>
<circle cx="450.9" cy="448.3" r="3" fill="url(#s48_9)"/>
<circle cx="450.3" cy="454.2" r="2.8" fill="url(#s54_9)"/>
<circle cx="449.8" cy="458.7" r="2.9" fill="url(#s54_9)"/>
<circle cx="450.4" cy="463.1" r="3" fill="url(#s60_9)"/>
<circle cx="451" cy="467.6" r="2.9" fill="url(#s60_9)"/>
<circle cx="450.2" cy="471.7" r="3" fill="url(#s66_9)"/>
<circle cx="450" cy="476.8" r="3.6" fill="url(#s72_9)"/>
<circle cx="456" cy="436" r="3.1" fill="url(#s36_9)"/>
<circle cx="454.7" cy="441.7" r="3.2" fill="url(#s42_9)"/>
<circle cx="454.5" cy="447.6" r="3.5" fill="url(#s48_9)"/>
<circle cx="454.7" cy="452.9" r="3" fill="url(#s48_9)"/>
<circle cx="453.6" cy="457.2" r="3.4" fill="url(#s54_9)"/>
<circle cx="453.7" cy="461.5" r="3.5" fill="url(#s60_9)"/>
<circle cx="454.3" cy="466.8" r="2.9" fill="url(#s60_9)"/>
<circle cx="453.9" cy="471.8" r="3.5" fill="url(#s60_9)"/>
<circle cx="456.5" cy="477.7" r="3.7" fill="url(#s66_9)"/>
<circle cx="454.4" cy="483.6" r="3.4" fill="url(#s72_8)"/>
<circle cx="454.9" cy="488.4" r="3.6" fill="url(#s78_8)"/>
<circle cx="453.4" cy="493.4" r="3.3" fill="url(#s84_8)"/>
<circle cx="453.5" cy="498.2" r="3" fill="url(#s90_8)"/>
<circle cx="455.3" cy="502.6" r="3.6" fill="url(#s96_8)"/>
<circle cx="455.7" cy="508" r="4.1" fill="url(#s102_8)"/>
<circle cx="456.6" cy="512.6" r="3.2" fill="url(#s108_8)"/>
<circle cx="453.5" cy="517.9" r="4" fill="url(#s120_8)"/>
<circle cx="455.7" cy="523.2" r="4" fill="url(#s120_8)"/>
<circle cx="455" cy="528.2" r="4" fill="url(#s132_8)"/>
<circle cx="455.3" cy="533.9" r="4.1" fill="url(#s138_9)"/>
<circle cx="454.1" cy="539.2" r="3" fill="url(#s144_9)"/>
<circle cx="453.7" cy="544" r="4" fill="url(#s150_9)"/>
<circle cx="455.4" cy="549.2" r="3.8" fill="url(#s156_9)"/>
<circle cx="456" cy="553.2" r="3.9" fill="url(#s162_9)"/>
<circle cx="459.5" cy="435" r="2.8" fill="url(#s36_9)"/>
<circle cx="457.6" cy="439.5" r="3" fill="url(#s42_9)"/>
<circle cx="459.8" cy="443.9" r="3.7" fill="url(#s42_9)"/>
<circle cx="458.9" cy="448.7" r="3.4" fill="url(#s48_9)"/>
<circle cx="459.5" cy="453.9" r="2.8" fill="url(#s48_9)"/>
<circle cx="459.8" cy="458.4" r="3" fill="url(#s54_9)"/>
<circle cx="457.6" cy="462.4" r="3" fill="url(#s60_9)"/>
<circle cx="459.6" cy="467.8" r="3" fill="url(#s60_9)"/>
<circle cx="458.9" cy="472.8" r="3.1" fill="url(#s66_9)"/>
<circle cx="460.5" cy="477.2" r="4.1" fill="url(#s66_9)"/>
<circle cx="460" cy="482.1" r="4.2" fill="url(#s72_8)"/>
<circle cx="458.1" cy="486.6" r="4.1" fill="url(#s72_8)"/>
<circle cx="457.9" cy="491.8" r="3.6" fill="url(#s84_8)"/>
<circle cx="460" cy="496" r="3.6" fill="url(#s90_8)"/>
<circle cx="458.1" cy="501.4" r="4.1" fill="url(#s96_8)"/>
<circle cx="457.4" cy="505.5" r="3.6" fill="url(#s102_8)"/>
<circle cx="457.9" cy="510.1" r="3.4" fill="url(#s102_8)"/>
<circle cx="457.4" cy="515.8" r="3.9" fill="url(#s114_8)"/>
<circle cx="460.4" cy="520" r="3.9" fill="url(#s120_8)"/>
<circle cx="458.6" cy="524.6" r="3.5" fill="url(#s126_8)"/>
<circle cx="458.6" cy="529.8" r="3.5" fill="url(#s132_8)"/>
<circle cx="457.7" cy="533.9" r="4" fill="url(#s132_9)"/>
<circle cx="458.2" cy="539.7" r="3.3" fill="url(#s144_9)"/>
<circle cx="458.6" cy="544.1" r="4.1" fill="url(#s156_9)"/>
<circle cx="459.4" cy="549.8" r="4.1" fill="url(#s162_9)"/>
<circle cx="459.7" cy="554.9" r="3.1" fill="url(#s168_9)"/>
<circle cx="459.8" cy="559.8" r="3.8" fill="url(#s168_9)"/>
<circle cx="464.4" cy="436" r="2.8" fill="url(#s36_9)"/>
<circle cx="462.4" cy="440.7" r="3.4" fill="url(#s42_9)"/>
<circle cx="463.5" cy="445.2" r="3" fill="url(#s42_9)"/>
<circle cx="461.9" cy="450" r="2.9" fill="url(#s48_9)"/>
<circle cx="463" cy="455.8" r="2.9" fill="url(#s60_9)"/>
<circle cx="462.8" cy="461.8" r="2.8" fill="url(#s54_9)"/>
<circle cx="462.5" cy="466" r="2.8" fill="url(#s60_9)"/>
<circle cx="463.2" cy="470.5" r="4.1" fill="url(#s66_9)"/>
<circle cx="462.7" cy="475.3" r="3.6" fill="url(#s66_9)"/>
<circle cx="461.6" cy="480" r="3.3" fill="url(#s72_8)"/>
<circle cx="463" cy="484.3" r="3.8" fill="url(#s78_8)"/>
<circle cx="462.3" cy="488.7" r="3.3" fill="url(#s78_8)"/>
<circle cx="464.5" cy="493.6" r="4" fill="url(#s90_8)"/>
<circle cx="461.5" cy="497.6" r="3.9" fill="url(#s96_8)"/>
<circle cx="463.3" cy="502.6" r="3" fill="url(#s96_8)"/>
<circle cx="464" cy="508.4" r="4" fill="url(#s108_8)"/>
<circle cx="461.7" cy="512.9" r="3.2" fill="url(#s108_8)"/>
<circle cx="464.4" cy="518.3" r="3.9" fill="url(#s120_8)"/>
<circle cx="462.9" cy="523.8" r="3.7" fill="url(#s120_8)"/>
<circle cx="462.1" cy="529.4" r="4.1" fill="url(#s132_8)"/>
<circle cx="461.8" cy="534" r="3.3" fill="url(#s138_9)"/>
<circle cx="461.8" cy="539.4" r="3.1" fill="url(#s144_9)"/>
<circle cx="462.6" cy="544.5" r="3.3" fill="url(#s150_9)"/>
<circle cx="462.4" cy="548.6" r="3.6" fill="url(#s162_9)"/>
<circle cx="464.2" cy="553.9" r="3.6" fill="url(#s162_9)"/>
<circle cx="464.5" cy="558.4" r="3.8" fill="url(#s168_9)"/>
<circle cx="467" cy="441" r="3.4" fill="url(#s36_9)"/>
<circle cx="467.5" cy="445.5" r="3.6" fill="url(#s42_9)"/>
<circle cx="466.5" cy="449.6" r="3.1" fill="url(#s48_9)"/>
<circle cx="468" cy="454" r="3.4" fill="url(#s54_9)"/>
<circle cx="468.5" cy="458.4" r="3" fill="url(#s60_9)"/>
<circle cx="466.1" cy="462.9" r="3.5" fill="url(#s54_9)"/>
<circle cx="467" cy="468.8" r="2.9" fill="url(#s60_9)"/>
<circle cx="467.5" cy="473.6" r="4.1" fill="url(#s60_9)"/>
<circle cx="466.1" cy="478.4" r="4.2" fill="url(#s66_9)"/>
<circle cx="465.6" cy="482.5" r="3.5" fill="url(#s78_8)"/>
<circle cx="467.7" cy="488.2" r="4.2" fill="url(#s84_8)"/>
<circle cx="466" cy="492.9" r="4.1" fill="url(#s84_8)"/>
<circle cx="467.5" cy="497" r="3.5" fill="url(#s90_8)"/>
<circle cx="465.9" cy="501.6" r="3" fill="url(#s96_8)"/>
<circle cx="472.5" cy="445" r="2.8" fill="url(#s48_9)"/>
<circle cx="470.5" cy="449.4" r="3.5" fill="url(#s48_9)"/>
<circle cx="469.6" cy="454.3" r="3.2" fill="url(#s54_9)"/>
<circle cx="470" cy="460.1" r="3.1" fill="url(#s60_9)"/>
<circle cx="470.7" cy="464.2" r="3.5" fill="url(#s60_9)"/>
<circle cx="469.5" cy="468.3" r="2.8" fill="url(#s66_9)"/>
<circle cx="471.8" cy="472.8" r="4.1" fill="url(#s60_9)"/>
<circle cx="472.5" cy="477.3" r="3.7" fill="url(#s66_9)"/>
<circle cx="470.4" cy="482.8" r="3.3" fill="url(#s66_8)"/>
<circle cx="472.3" cy="488.3" r="3.8" fill="url(#s84_8)"/>
<circle cx="470.1" cy="492.3" r="3.6" fill="url(#s90_8)"/>
<circle cx="470.6" cy="498.2" r="3.3" fill="url(#s90_8)"/>
<circle cx="472.4" cy="503.2" r="3.2" fill="url(#s102_8)"/>
<circle cx="476" cy="447" r="3.5" fill="url(#s48_9)"/>
<circle cx="474.4" cy="451.7" r="3.1" fill="url(#s54_9)"/>
<circle cx="474" cy="455.8" r="3.5" fill="url(#s54_9)"/>
<circle cx="473.5" cy="459.9" r="3.3" fill="url(#s54_9)"/>
<circle cx="476.2" cy="465.9" r="3.7" fill="url(#s60_9)"/>
<circle cx="473.7" cy="470.1" r="3.6" fill="url(#s66_9)"/>
<circle cx="474.1" cy="475" r="3.5" fill="url(#s66_9)"/>
<circle cx="475.8" cy="480.3" r="4" fill="url(#s72_8)"/>
<circle cx="476.1" cy="484.6" r="3.4" fill="url(#s78_8)"/>
<circle cx="475.8" cy="489.3" r="3.2" fill="url(#s78_8)"/>
<circle cx="473.9" cy="493.8" r="4.1" fill="url(#s84_8)"/>
<circle cx="474.7" cy="498.4" r="4.2" fill="url(#s90_8)"/>
<circle cx="476" cy="502.9" r="3.8" fill="url(#s102_8)"/>
<circle cx="478.9" cy="449" r="3.5" fill="url(#s48_9)"/>
<circle cx="477.5" cy="454.8" r="3" fill="url(#s48_9)"/>
<circle cx="480.5" cy="459.2" r="3.3" fill="url(#s60_9)"/>
<circle cx="480.2" cy="464" r="3.1" fill="url(#s60_9)"/>
<circle cx="480.4" cy="469.5" r="2.8" fill="url(#s60_9)"/>
<circle cx="478.1" cy="474.7" r="3.4" fill="url(#s60_9)"/>
<circle cx="478.2" cy="479.2" r="3.7" fill="url(#s72_9)"/>
<circle cx="477.4" cy="483.6" r="3.4" fill="url(#s78_8)"/>
<circle cx="478.4" cy="487.9" r="3.2" fill="url(#s78_8)"/>
<circle cx="477.6" cy="493" r="3.1" fill="url(#s84_8)"/>
<circle cx="479.4" cy="498.1" r="3.1" fill="url(#s90_8)"/>
<circle cx="528.8" cy="491.6" r="2.9" fill="url(#s102_7)"/>
<circle cx="512.2" cy="524.8" r="2.9" fill="url(#s114_6)"/>
<circle cx="631.7" cy="546.7" r="2.9" fill="url(#s174_9)"/>
<circle cx="528.2" cy="560.3" r="3.1" fill="url(#s156_8)"/>
<circle cx="479.3" cy="521.1" r="3.4" fill="url(#s120_6)"/>
<circle cx="484" cy="530.7" r="3" fill="url(#s120_7)"/>
<circle cx="489.6" cy="491.2" r="3.2" fill="url(#s102_7)"/>
<circle cx="485.8" cy="515.2" r="3.6" fill="url(#s114_6)"/>
<circle cx="495.7" cy="473.3" r="3.8" fill="url(#s72_8)"/>
<circle cx="542.7" cy="460.2" r="3.8" fill="url(#s66_8)"/>
<circle cx="642.4" cy="502.3" r="3.6" fill="url(#s120_7)"/>
<circle cx="626.9" cy="530.4" r="2.7" fill="url(#s150_8)"/>
<circle cx="527" cy="518.8" r="3" fill="url(#s108_6)"/>
<circle cx="502.3" cy="543.1" r="3.7" fill="url(#s132_8)"/>
<circle cx="559.1" cy="543.1" r="2.5" fill="url(#s144_8)"/>
<circle cx="486.7" cy="528.2" r="3.2" fill="url(#s120_7)"/>
<circle cx="511.2" cy="508" r="3.3" fill="url(#s102_6)"/>
<circle cx="580.6" cy="500.5" r="2.4" fill="url(#s108_6)"/>
<circle cx="544.1" cy="481.5" r="3.5" fill="url(#s96_7)"/>
<circle cx="537.9" cy="476.8" r="3.1" fill="url(#s78_7)"/>
<circle cx="487.7" cy="508.3" r="2.5" fill="url(#s102_6)"/>
<circle cx="548.2" cy="457.7" r="3.4" fill="url(#s60_8)"/>
<circle cx="598.4" cy="534.7" r="3.2" fill="url(#s138_8)"/>
<circle cx="547" cy="498.2" r="3.8" fill="url(#s96_7)"/>
<circle cx="629.8" cy="547.5" r="3.5" fill="url(#s180_9)"/>
<circle cx="495.2" cy="573.2" r="3.1" fill="url(#s174_9)"/>
<circle cx="649.6" cy="441.9" r="2.9" fill="url(#s78_8)"/>
<circle cx="491" cy="563.4" r="2.8" fill="url(#s162_8)"/>
<circle cx="489.3" cy="517" r="3.8" fill="url(#s108_6)"/>
<circle cx="504.6" cy="517.8" r="2.9" fill="url(#s102_6)"/>
<circle cx="493.8" cy="477.2" r="3.8" fill="url(#s78_8)"/>
<circle cx="486.4" cy="520" r="3.4" fill="url(#s108_6)"/>
<circle cx="634" cy="498.1" r="3.3" fill="url(#s120_6)"/>
<circle cx="485.4" cy="575" r="3.3" fill="url(#s168_9)"/>
<circle cx="614.4" cy="471.1" r="3.3" fill="url(#s96_7)"/>
<circle cx="600.8" cy="448.6" r="3.6" fill="url(#s66_8)"/>
<circle cx="576.1" cy="566.4" r="3.3" fill="url(#s174_9)"/>
<circle cx="512.2" cy="460.2" r="2.5" fill="url(#s54_9)"/>
<circle cx="570.9" cy="501.5" r="3.7" fill="url(#s102_6)"/>
<circle cx="499.6" cy="534.8" r="2.4" fill="url(#s120_7)"/>
<circle cx="519.2" cy="472.6" r="2.9" fill="url(#s66_8)"/>
<circle cx="563.7" cy="522.4" r="2.7" fill="url(#s120_7)"/>
<circle cx="541.2" cy="470.4" r="3.8" fill="url(#s72_8)"/>
<circle cx="490" cy="469.3" r="3.4" fill="url(#s66_8)"/>
<circle cx="479.2" cy="532.3" r="3.2" fill="url(#s120_7)"/>
<circle cx="577.6" cy="501" r="3.5" fill="url(#s102_6)"/>
<circle cx="642.2" cy="441.7" r="3.2" fill="url(#s72_8)"/>
<circle cx="501" cy="465.7" r="3.6" fill="url(#s54_8)"/>
<circle cx="556.7" cy="565.3" r="2.6" fill="url(#s162_9)"/>
<circle cx="569.1" cy="511.1" r="3.6" fill="url(#s108_6)"/>
<circle cx="511.7" cy="494.3" r="2.5" fill="url(#s102_7)"/>
<circle cx="610.6" cy="523.7" r="2.4" fill="url(#s138_8)"/>
<circle cx="601.2" cy="497.3" r="3.1" fill="url(#s102_6)"/>
<circle cx="485.5" cy="484.3" r="2.5" fill="url(#s90_7)"/>
<circle cx="602.3" cy="523.9" r="3.7" fill="url(#s132_7)"/>
<circle cx="505.1" cy="523.3" r="3.1" fill="url(#s114_6)"/>
<circle cx="550.9" cy="484.4" r="3.4" fill="url(#s102_7)"/>
<circle cx="498.2" cy="561.2" r="2.4" fill="url(#s156_8)"/>
<circle cx="500.8" cy="545.3" r="3.8" fill="url(#s138_8)"/>
<circle cx="514.5" cy="560.6" r="2.9" fill="url(#s156_8)"/>
<circle cx="643.3" cy="503.1" r="3.4" fill="url(#s126_7)"/>
<circle cx="589.7" cy="546.8" r="3.1" fill="url(#s156_8)"/>
<circle cx="560.8" cy="488.8" r="3.3" fill="url(#s96_7)"/>
<circle cx="644.2" cy="451.8" r="2.4" fill="url(#s84_8)"/>
<circle cx="479.9" cy="460" r="3.4" fill="url(#s54_8)"/>
<circle cx="589.6" cy="532.5" r="2.5" fill="url(#s138_8)"/>
<circle cx="520.6" cy="553.3" r="3.6" fill="url(#s150_8)"/>
<circle cx="482.2" cy="559.9" r="3.8" fill="url(#s156_8)"/>
<circle cx="485.7" cy="481.2" r="2.6" fill="url(#s84_7)"/>
<circle cx="627.3" cy="528.3" r="3.4" fill="url(#s150_8)"/>
<circle cx="484.8" cy="546.9" r="2.7" fill="url(#s138_8)"/>
<circle cx="531.4" cy="460.6" r="2.8" fill="url(#s60_8)"/>
<circle cx="571.4" cy="453" r="3" fill="url(#s66_8)"/>
<circle cx="608.1" cy="482" r="3.2" fill="url(#s96_7)"/>
<circle cx="631.1" cy="448.5" r="3.6" fill="url(#s72_8)"/>
<circle cx="479" cy="479" r="3.5" fill="url(#s90_7)"/>
<circle cx="479.1" cy="513.7" r="3.1" fill="url(#s108_6)"/>
<circle cx="494.1" cy="516.2" r="2.9" fill="url(#s114_6)"/>
<circle cx="504.3" cy="568.4" r="2.8" fill="url(#s162_8)"/>
<circle cx="575.5" cy="458" r="3.6" fill="url(#s72_8)"/>
<circle cx="611.6" cy="513.3" r="2.9" fill="url(#s120_7)"/>
<circle cx="526.1" cy="561.3" r="2.5" fill="url(#s162_8)"/>
<circle cx="479.8" cy="479.7" r="2.8" fill="url(#s90_7)"/>
<circle cx="546.4" cy="498.4" r="3.7" fill="url(#s102_7)"/>
<circle cx="538.5" cy="518" r="3.5" fill="url(#s114_6)"/>
<circle cx="577.7" cy="489.5" r="2.6" fill="url(#s102_7)"/>
<circle cx="581.4" cy="535.7" r="2.7" fill="url(#s138_8)"/>
<circle cx="608.2" cy="508.8" r="2.6" fill="url(#s114_7)"/>
<circle cx="510.5" cy="540.5" r="3.7" fill="url(#s126_7)"/>
<circle cx="490.7" cy="487.2" r="2.9" fill="url(#s96_7)"/>
<circle cx="491.3" cy="496.6" r="2.7" fill="url(#s102_7)"/>
<circle cx="597.2" cy="455.4" r="3.8" fill="url(#s72_8)"/>
<circle cx="524.3" cy="572" r="3.6" fill="url(#s174_9)"/>
<circle cx="533.5" cy="480.1" r="3.4" fill="url(#s84_7)"/>
<circle cx="496.8" cy="503.9" r="2.5" fill="url(#s102_7)"/>
<circle cx="612.7" cy="520.5" r="3.2" fill="url(#s132_7)"/>
<circle cx="538.9" cy="472" r="3.3" fill="url(#s78_8)"/>
<circle cx="600.2" cy="549.5" r="3" fill="url(#s162_8)"/>
<circle cx="595.6" cy="547.6" r="3.6" fill="url(#s162_8)"/>
<circle cx="628.5" cy="513.4" r="3.4" fill="url(#s126_7)"/>
<circle cx="512.3" cy="531.9" r="2.5" fill="url(#s120_7)"/>
<circle cx="610.5" cy="523.5" r="3.3" fill="url(#s132_8)"/>
<circle cx="531.4" cy="510.7" r="3.3" fill="url(#s108_6)"/>
<circle cx="584.4" cy="557.2" r="2.7" fill="url(#s168_8)"/>
<circle cx="661.8" cy="435.2" r="3.2" fill="url(#s72_8)"/>
<circle cx="610.3" cy="549.7" r="3.2" fill="url(#s162_9)"/>
<circle cx="561.7" cy="516.8" r="3.2" fill="url(#s114_6)"/>
<circle cx="525.7" cy="546.8" r="2.6" fill="url(#s144_8)"/>
<circle cx="519.3" cy="467" r="2.8" fill="url(#s60_8)"/>
<circle cx="479.3" cy="505.1" r="3" fill="url(#s108_6)"/>
<circle cx="518.7" cy="490.6" r="2.7" fill="url(#s96_7)"/>
<circle cx="652.1" cy="489.2" r="2.7" fill="url(#s114_6)"/>
<circle cx="525.6" cy="484.4" r="2.6" fill="url(#s96_7)"/>
<circle cx="617.4" cy="512.1" r="3.1" fill="url(#s126_7)"/>
<circle cx="499.4" cy="570.9" r="2.9" fill="url(#s168_9)"/>
<circle cx="619.8" cy="531.7" r="3.1" fill="url(#s150_8)"/>
<circle cx="556.1" cy="467.3" r="3.7" fill="url(#s72_8)"/>
<circle cx="503.3" cy="508.5" r="2.7" fill="url(#s102_6)"/>
<circle cx="510.5" cy="514.8" r="3" fill="url(#s108_6)"/>
<circle cx="580.7" cy="490.4" r="3.7" fill="url(#s96_7)"/>
<circle cx="622.1" cy="540.8" r="3.6" fill="url(#s156_8)"/>
<circle cx="623" cy="510.1" r="2.4" fill="url(#s120_7)"/>
<circle cx="655.4" cy="501.4" r="2.8" fill="url(#s120_7)"/>
<circle cx="489.2" cy="485.3" r="3.6" fill="url(#s90_7)"/>
<circle cx="490.3" cy="564.3" r="3.6" fill="url(#s156_8)"/>
<circle cx="638.8" cy="502.2" r="3.6" fill="url(#s120_7)"/>
<circle cx="639.6" cy="521" r="3.7" fill="url(#s144_8)"/>
<circle cx="588.6" cy="508.3" r="3.1" fill="url(#s114_6)"/>
<circle cx="557.6" cy="483.9" r="2.8" fill="url(#s90_7)"/>
<circle cx="544.8" cy="460.1" r="3.1" fill="url(#s60_8)"/>
<circle cx="544.4" cy="512.8" r="3.2" fill="url(#s114_6)"/>
<circle cx="479.1" cy="555.7" r="3.1" fill="url(#s150_8)"/>
<circle cx="582.1" cy="547.2" r="3" fill="url(#s150_8)"/>
<circle cx="657.9" cy="440.3" r="3.4" fill="url(#s78_8)"/>
<circle cx="479.9" cy="528.2" r="3.4" fill="url(#s126_7)"/>
<circle cx="515.1" cy="572.2" r="3.2" fill="url(#s168_9)"/>
<circle cx="640.6" cy="440.9" r="3.5" fill="url(#s72_8)"/>
<circle cx="516.4" cy="558.4" r="2.9" fill="url(#s156_8)"/>
<circle cx="551.4" cy="545.1" r="2.7" fill="url(#s138_8)"/>
<circle cx="531.2" cy="522.1" r="3.6" fill="url(#s114_6)"/>
<circle cx="505.9" cy="517.8" r="3.9" fill="url(#s114_6)"/>
<circle cx="510.1" cy="527.1" r="3.4" fill="url(#s120_7)"/>
<circle cx="480.5" cy="542" r="3.7" fill="url(#s132_8)"/>
<circle cx="481.1" cy="491.4" r="2.4" fill="url(#s96_7)"/>
<circle cx="647.1" cy="499.5" r="3.4" fill="url(#s126_7)"/>
<circle cx="643.9" cy="500.9" r="3.3" fill="url(#s120_7)"/>
<circle cx="589.4" cy="515.8" r="3.4" fill="url(#s114_7)"/>
<circle cx="582.5" cy="501.3" r="2.6" fill="url(#s102_6)"/>
<circle cx="480.4" cy="548.1" r="3.8" fill="url(#s144_8)"/>
<circle cx="521.6" cy="553.9" r="3.6" fill="url(#s150_8)"/>
<circle cx="503.9" cy="494.2" r="3" fill="url(#s96_7)"/>
<circle cx="532.7" cy="532" r="3.8" fill="url(#s120_7)"/>
<circle cx="560.2" cy="456.7" r="2.6" fill="url(#s66_8)"/>
<circle cx="561.9" cy="562.3" r="3.1" fill="url(#s156_8)"/>
<circle cx="524.8" cy="527.6" r="3.8" fill="url(#s120_7)"/>
<circle cx="541.3" cy="503.3" r="2.6" fill="url(#s108_6)"/>
<circle cx="497.6" cy="476.4" r="2.4" fill="url(#s72_8)"/>
<circle cx="586.4" cy="460.1" r="3.8" fill="url(#s72_8)"/>
<circle cx="633.1" cy="452.3" r="2.4" fill="url(#s84_8)"/>
<circle cx="501.7" cy="544.1" r="2.7" fill="url(#s132_8)"/>
<circle cx="608.4" cy="524.3" r="3.7" fill="url(#s138_8)"/>
<circle cx="483.6" cy="531.4" r="3.5" fill="url(#s120_7)"/>
<circle cx="594.4" cy="445.2" r="2.4" fill="url(#s66_8)"/>
<circle cx="619.4" cy="449.2" r="2.9" fill="url(#s78_8)"/>
<circle cx="491.9" cy="559.2" r="3.1" fill="url(#s150_8)"/>
<circle cx="521.3" cy="525.8" r="3.1" fill="url(#s120_6)"/>
<circle cx="489.5" cy="551.8" r="2.9" fill="url(#s144_8)"/>
<circle cx="573.9" cy="498.9" r="3.6" fill="url(#s108_6)"/>
<circle cx="611.1" cy="506.5" r="2.8" fill="url(#s114_6)"/>
<circle cx="661.6" cy="504.1" r="3.6" fill="url(#s132_8)"/>
<circle cx="568.6" cy="568.1" r="3.6" fill="url(#s174_9)"/>
<circle cx="511.6" cy="509" r="3.7" fill="url(#s102_6)"/>
<circle cx="586.7" cy="517.3" r="3.7" fill="url(#s120_7)"/>
<circle cx="507.7" cy="459.8" r="2.8" fill="url(#s54_9)"/>
<circle cx="564.4" cy="549.7" r="3.7" fill="url(#s144_8)"/>
<circle cx="623.5" cy="529.8" r="3.7" fill="url(#s150_8)"/>
<circle cx="506.2" cy="557.6" r="3.6" fill="url(#s156_8)"/>
<circle cx="557.3" cy="548" r="2.7" fill="url(#s150_8)"/>
<circle cx="503.4" cy="546.1" r="3.6" fill="url(#s138_8)"/>
<circle cx="483.9" cy="552.8" r="3.6" fill="url(#s144_8)"/>
<circle cx="562.8" cy="559.6" r="3.7" fill="url(#s162_8)"/>
<circle cx="541.5" cy="524.3" r="2.7" fill="url(#s114_7)"/>
<circle cx="493.6" cy="540.4" r="2.9" fill="url(#s132_7)"/>
<circle cx="527.5" cy="518.6" r="2.6" fill="url(#s108_6)"/>
<circle cx="574.6" cy="543.2" r="2.6" fill="url(#s144_8)"/>
<circle cx="517.5" cy="519.5" r="2.4" fill="url(#s108_6)"/>
<circle cx="666.3" cy="519.2" r="3.1" fill="url(#s156_8)"/>
<circle cx="504.4" cy="549.3" r="3" fill="url(#s144_8)"/>
<circle cx="606.7" cy="537.1" r="3.8" fill="url(#s144_8)"/>
<circle cx="480.4" cy="479.3" r="2.7" fill="url(#s84_7)"/>
<circle cx="481.2" cy="522.3" r="3.7" fill="url(#s114_6)"/>
<circle cx="654.2" cy="528.3" r="2.5" fill="url(#s162_8)"/>
<circle cx="526.6" cy="473.6" r="3.8" fill="url(#s72_8)"/>
<circle cx="559.6" cy="529" r="3.8" fill="url(#s126_7)"/>
<circle cx="525.8" cy="511.2" r="2.6" fill="url(#s108_6)"/>
<circle cx="503.6" cy="499.9" r="3.8" fill="url(#s102_7)"/>
<circle cx="624.5" cy="444.8" r="3.6" fill="url(#s72_8)"/>
<circle cx="577.8" cy="566" r="2.5" fill="url(#s168_9)"/>
<circle cx="603.6" cy="552.1" r="3.4" fill="url(#s162_9)"/>
<circle cx="565.4" cy="542.5" r="2.6" fill="url(#s138_8)"/>
<circle cx="503.8" cy="473.6" r="3.1" fill="url(#s66_8)"/>
<circle cx="501.1" cy="475.6" r="3.4" fill="url(#s72_8)"/>
<circle cx="632.3" cy="534.7" r="2.6" fill="url(#s162_8)"/>
<circle cx="484.7" cy="567.4" r="3.7" fill="url(#s162_8)"/>
<circle cx="536.8" cy="495.9" r="3.6" fill="url(#s102_7)"/>
<circle cx="573.6" cy="465.9" r="2.5" fill="url(#s84_8)"/>
<circle cx="557.2" cy="469.6" r="3.7" fill="url(#s78_8)"/>
<circle cx="529.2" cy="476.9" r="2.8" fill="url(#s84_8)"/>
<circle cx="515.8" cy="479.4" r="3.1" fill="url(#s78_8)"/>
<circle cx="642.1" cy="449.1" r="3.9" fill="url(#s78_8)"/>
<circle cx="639.9" cy="508.2" r="2.7" fill="url(#s126_7)"/>
<circle cx="508.1" cy="489.3" r="2.7" fill="url(#s96_7)"/>
<circle cx="666.4" cy="532.8" r="3.8" fill="url(#s174_9)"/>
<circle cx="508.6" cy="562.7" r="2.5" fill="url(#s162_8)"/>
<circle cx="509.2" cy="572.1" r="2.4" fill="url(#s174_9)"/>
<circle cx="516.8" cy="476.3" r="2.4" fill="url(#s78_8)"/>
<circle cx="551.6" cy="474.9" r="3.1" fill="url(#s90_7)"/>
<circle cx="498.4" cy="525.3" r="2.6" fill="url(#s114_6)"/>
<circle cx="607.5" cy="524.4" r="2.7" fill="url(#s132_8)"/>
<circle cx="483.9" cy="529.1" r="3.1" fill="url(#s114_7)"/>
<circle cx="496.8" cy="530" r="3.5" fill="url(#s120_7)"/>
<circle cx="563.6" cy="475.6" r="3.5" fill="url(#s90_7)"/>
<circle cx="595.5" cy="450.2" r="3.6" fill="url(#s66_8)"/>
<circle cx="625.8" cy="534.7" r="3.1" fill="url(#s150_8)"/>
<circle cx="505.1" cy="480.8" r="3.6" fill="url(#s84_7)"/>
<circle cx="491.6" cy="501.7" r="3.3" fill="url(#s96_7)"/>
<circle cx="550.2" cy="506.1" r="3.2" fill="url(#s102_6)"/>
<circle cx="593.8" cy="540.7" r="3.7" fill="url(#s144_8)"/>
<circle cx="593" cy="489.3" r="2.5" fill="url(#s108_7)"/>
<circle cx="552.4" cy="517" r="2.4" fill="url(#s120_6)"/>
<circle cx="499.1" cy="480" r="2.6" fill="url(#s78_7)"/>
<circle cx="619.3" cy="443.7" r="2.5" fill="url(#s72_8)"/>
<circle cx="495.4" cy="460.5" r="3.3" fill="url(#s54_8)"/>
<circle cx="550.8" cy="536.9" r="2.6" fill="url(#s132_7)"/>
<circle cx="594.4" cy="449.2" r="2.6" fill="url(#s66_8)"/>
<circle cx="546.3" cy="486.4" r="2.6" fill="url(#s96_7)"/>
<circle cx="488.6" cy="527.5" r="3.7" fill="url(#s114_7)"/>
<circle cx="561.4" cy="541.6" r="2.6" fill="url(#s138_8)"/>
<circle cx="652.5" cy="515.1" r="2.9" fill="url(#s144_8)"/>
<circle cx="515.9" cy="509.9" r="3.9" fill="url(#s108_6)"/>
<circle cx="644.7" cy="522" r="3.7" fill="url(#s144_8)"/>
<circle cx="549.7" cy="567.6" r="3.8" fill="url(#s168_9)"/>
<circle cx="531.1" cy="531.2" r="2.9" fill="url(#s120_7)"/>
<circle cx="482.5" cy="507.7" r="3.2" fill="url(#s102_6)"/>
<circle cx="488.9" cy="572.1" r="3.6" fill="url(#s174_9)"/>
<circle cx="574.7" cy="545.8" r="3.7" fill="url(#s150_8)"/>
<circle cx="480.2" cy="532.1" r="2.8" fill="url(#s126_7)"/>
<circle cx="506.2" cy="522" r="3.8" fill="url(#s114_6)"/>
<circle cx="502.8" cy="519.4" r="3.1" fill="url(#s114_6)"/>
<circle cx="508.3" cy="494.7" r="3.4" fill="url(#s96_7)"/>
<circle cx="566" cy="566.3" r="3.2" fill="url(#s168_9)"/>
<circle cx="539.5" cy="518.1" r="2.6" fill="url(#s108_6)"/>
<circle cx="488" cy="492.2" r="3" fill="url(#s96_7)"/>
<circle cx="501.8" cy="469.2" r="3.2" fill="url(#s66_8)"/>
<circle cx="569.5" cy="518.6" r="2.7" fill="url(#s120_6)"/>
<circle cx="538.4" cy="520" r="3.3" fill="url(#s114_6)"/>
<circle cx="511.9" cy="487.7" r="2.7" fill="url(#s96_7)"/>
<circle cx="524.1" cy="527.1" r="2.4" fill="url(#s114_7)"/>
<circle cx="544.5" cy="487.3" r="3.9" fill="url(#s96_7)"/>
<circle cx="524.9" cy="510.4" r="3.5" fill="url(#s102_6)"/>
<circle cx="499.3" cy="570.4" r="3.5" fill="url(#s162_9)"/>
<circle cx="516.2" cy="500.5" r="3.4" fill="url(#s102_7)"/>
<circle cx="627.9" cy="529.1" r="3.2" fill="url(#s150_8)"/>
<circle cx="600.8" cy="531.9" r="3.1" fill="url(#s144_8)"/>
<circle cx="592.3" cy="552.8" r="2.6" fill="url(#s168_8)"/>
<circle cx="479.1" cy="546.7" r="3.3" fill="url(#s138_8)"/>
<circle cx="658.5" cy="491.6" r="3" fill="url(#s120_7)"/>
<circle cx="633.9" cy="503.7" r="3" fill="url(#s120_7)"/>
<circle cx="537.9" cy="540.7" r="2.8" fill="url(#s132_8)"/>
<circle cx="557.6" cy="498.4" r="2.9" fill="url(#s108_7)"/>
<circle cx="494" cy="493.9" r="2.6" fill="url(#s96_7)"/>
<circle cx="563.3" cy="461.8" r="3.8" fill="url(#s66_8)"/>
<circle cx="626.2" cy="531.7" r="3.8" fill="url(#s150_8)"/>
<circle cx="531.9" cy="563.1" r="2.4" fill="url(#s156_8)"/>
<circle cx="559.7" cy="511.8" r="3.8" fill="url(#s114_6)"/>
<circle cx="554.1" cy="572.3" r="3.2" fill="url(#s174_9)"/>
<circle cx="586.8" cy="492" r="3.3" fill="url(#s102_7)"/>
<circle cx="654.3" cy="504" r="3.2" fill="url(#s126_7)"/>
<circle cx="522.5" cy="506.2" r="3.2" fill="url(#s102_7)"/>
<circle cx="635.8" cy="541.4" r="3.1" fill="url(#s168_9)"/>
<circle cx="572.8" cy="568.9" r="2.9" fill="url(#s174_9)"/>
<circle cx="662.9" cy="516.3" r="3.2" fill="url(#s150_8)"/>
<circle cx="639.7" cy="510.6" r="3.6" fill="url(#s138_7)"/>
<circle cx="508.7" cy="518.5" r="3.2" fill="url(#s108_6)"/>
<circle cx="493.8" cy="532.1" r="3.3" fill="url(#s120_7)"/>
<circle cx="667.2" cy="495.2" r="2.5" fill="url(#s126_7)"/>
<circle cx="611.8" cy="476.5" r="2.4" fill="url(#s96_7)"/>
<circle cx="625.8" cy="504" r="3.4" fill="url(#s114_7)"/>
<circle cx="545.7" cy="519.3" r="2.8" fill="url(#s114_6)"/>
<circle cx="552.6" cy="572.2" r="3.3" fill="url(#s174_9)"/>
<circle cx="487" cy="475.7" r="3.5" fill="url(#s72_8)"/>
<circle cx="485" cy="476.9" r="3.2" fill="url(#s84_8)"/>
<circle cx="570.2" cy="546.9" r="2.5" fill="url(#s144_8)"/>
<circle cx="607.5" cy="479.3" r="2.9" fill="url(#s96_7)"/>
<circle cx="505.2" cy="470.8" r="3.8" fill="url(#s66_8)"/>
<circle cx="518.2" cy="511.6" r="3" fill="url(#s102_6)"/>
<circle cx="638.7" cy="499.6" r="3.8" fill="url(#s120_7)"/>
<circle cx="649.6" cy="524.3" r="2.9" fill="url(#s162_8)"/>
<circle cx="501.7" cy="504.2" r="3.5" fill="url(#s102_7)"/>
<circle cx="511.7" cy="560.2" r="3.1" fill="url(#s156_8)"/>
<circle cx="501.8" cy="479.2" r="2.9" fill="url(#s78_8)"/>
<circle cx="486.4" cy="520.4" r="3" fill="url(#s108_6)"/>
<circle cx="482.2" cy="470.5" r="3.6" fill="url(#s66_8)"/>
<circle cx="502" cy="481.2" r="2.8" fill="url(#s84_7)"/>
<circle cx="480.2" cy="534.9" r="2.9" fill="url(#s120_7)"/>
<circle cx="591.7" cy="455.3" r="2.8" fill="url(#s78_8)"/>
<circle cx="487.7" cy="509.8" r="3.7" fill="url(#s108_6)"/>
<circle cx="491.1" cy="499.6" r="3.5" fill="url(#s102_7)"/>
<circle cx="547.2" cy="480.1" r="3.1" fill="url(#s90_7)"/>
<circle cx="591.8" cy="475.3" r="3.3" fill="url(#s96_7)"/>
<circle cx="502.2" cy="529.6" r="2.7" fill="url(#s120_7)"/>
<circle cx="487.2" cy="518" r="3.2" fill="url(#s108_6)"/>
<circle cx="607.8" cy="486.5" r="3.3" fill="url(#s102_7)"/>
<circle cx="525.3" cy="470.3" r="2.7" fill="url(#s72_8)"/>
<circle cx="513.6" cy="535.8" r="2.6" fill="url(#s126_7)"/>
<circle cx="520.3" cy="517.4" r="2.8" fill="url(#s102_6)"/>
<circle cx="512" cy="485.9" r="2.6" fill="url(#s96_7)"/>
<circle cx="507.5" cy="506" r="3.8" fill="url(#s108_7)"/>
<circle cx="636.6" cy="530" r="2.6" fill="url(#s156_8)"/>
<circle cx="480" cy="536.6" r="3.4" fill="url(#s126_7)"/>
<circle cx="529.4" cy="534.5" r="3.4" fill="url(#s120_7)"/>
<circle cx="493.7" cy="471.8" r="3.8" fill="url(#s72_8)"/>
<circle cx="593.3" cy="448.8" r="2.5" fill="url(#s66_8)"/>
<circle cx="495.8" cy="493.9" r="3" fill="url(#s96_7)"/>
<circle cx="511.9" cy="533" r="2.7" fill="url(#s126_7)"/>
<circle cx="560.8" cy="538.1" r="2.8" fill="url(#s132_8)"/>
<circle cx="623.8" cy="525.8" r="2.8" fill="url(#s138_8)"/>
<circle cx="629" cy="505.3" r="2.5" fill="url(#s120_7)"/>
<circle cx="486" cy="551" r="2.7" fill="url(#s144_8)"/>
<circle cx="602.3" cy="452.8" r="3.4" fill="url(#s72_8)"/>
<circle cx="601.8" cy="539.7" r="2.8" fill="url(#s144_8)"/>
<circle cx="588.3" cy="533.1" r="3.6" fill="url(#s138_8)"/>
<circle cx="536.9" cy="462.5" r="3.4" fill="url(#s66_8)"/>
<circle cx="548.6" cy="564.1" r="2.6" fill="url(#s168_8)"/>
<circle cx="480.7" cy="539.6" r="3.6" fill="url(#s126_7)"/>
<circle cx="555.7" cy="568.7" r="3.4" fill="url(#s168_9)"/>
<circle cx="502.7" cy="466" r="2.9" fill="url(#s60_8)"/>
<circle cx="496.2" cy="494.8" r="2.6" fill="url(#s102_7)"/>
<circle cx="549.3" cy="506.1" r="3.8" fill="url(#s102_6)"/>
<circle cx="510.1" cy="561.3" r="2.6" fill="url(#s156_8)"/>
<circle cx="515.6" cy="553.2" r="3.2" fill="url(#s150_8)"/>
<circle cx="492.2" cy="536.4" r="3.3" fill="url(#s126_7)"/>
<circle cx="606.4" cy="538.6" r="2.6" fill="url(#s150_8)"/>
<circle cx="520.1" cy="484.1" r="2.5" fill="url(#s90_7)"/>
<circle cx="495.6" cy="540.5" r="3.1" fill="url(#s126_7)"/>
<circle cx="514.1" cy="513.6" r="2.9" fill="url(#s102_6)"/>
<circle cx="482.7" cy="457.1" r="3.9" fill="url(#s54_9)"/>
<circle cx="483.6" cy="542.1" r="3.9" fill="url(#s132_7)"/>
<circle cx="485.8" cy="515" r="3.1" fill="url(#s102_6)"/>
<circle cx="555" cy="453.3" r="3.8" fill="url(#s60_9)"/>
<circle cx="573.5" cy="561.4" r="3.4" fill="url(#s162_8)"/>
<circle cx="502.2" cy="475.1" r="2.4" fill="url(#s78_8)"/>
<circle cx="575.8" cy="549.8" r="3.8" fill="url(#s150_8)"/>
<circle cx="611.1" cy="536.7" r="3.5" fill="url(#s150_8)"/>
<circle cx="494.1" cy="555" r="2.9" fill="url(#s144_8)"/>
<circle cx="556.7" cy="496.6" r="3.6" fill="url(#s102_7)"/>
<circle cx="480.6" cy="523.3" r="3.3" fill="url(#s120_6)"/>
<circle cx="591.6" cy="551.9" r="3.8" fill="url(#s162_8)"/>
<circle cx="546.1" cy="471.8" r="2.8" fill="url(#s84_8)"/>
<circle cx="483.3" cy="538.5" r="2.6" fill="url(#s126_7)"/>
<circle cx="660.5" cy="441" r="2.5" fill="url(#s78_8)"/>
<circle cx="494.8" cy="543" r="2.4" fill="url(#s138_8)"/>
<circle cx="629.3" cy="524.8" r="3" fill="url(#s144_8)"/>
<circle cx="581.3" cy="508.5" r="2.9" fill="url(#s108_6)"/>
<circle cx="582.3" cy="545.4" r="3.8" fill="url(#s144_8)"/>
<circle cx="509.6" cy="510.6" r="3.2" fill="url(#s102_6)"/>
<circle cx="495.4" cy="468.4" r="2.9" fill="url(#s60_8)"/>
<circle cx="660.9" cy="525.6" r="3.7" fill="url(#s168_8)"/>
<circle cx="658.2" cy="496.7" r="3.6" fill="url(#s120_7)"/>
<circle cx="584.7" cy="518.8" r="2.8" fill="url(#s120_7)"/>
<circle cx="510.1" cy="499.2" r="3.7" fill="url(#s96_7)"/>
<circle cx="494.6" cy="537.8" r="3.1" fill="url(#s120_7)"/>
<circle cx="581" cy="491.5" r="3" fill="url(#s102_7)"/>
<circle cx="559.7" cy="499.7" r="2.6" fill="url(#s102_7)"/>
<circle cx="638.5" cy="495.9" r="2.6" fill="url(#s120_6)"/>
<circle cx="503.2" cy="470.2" r="3.2" fill="url(#s60_8)"/>
<circle cx="544" cy="519.6" r="2.7" fill="url(#s114_6)"/>
<circle cx="486.2" cy="517.9" r="3.3" fill="url(#s108_6)"/>
<circle cx="528.5" cy="467.7" r="3.1" fill="url(#s72_8)"/>
<circle cx="556.6" cy="538.1" r="3.5" fill="url(#s132_8)"/>
<circle cx="666.3" cy="504.3" r="2.6" fill="url(#s138_8)"/>
<circle cx="525.6" cy="479.8" r="3.8" fill="url(#s84_8)"/>
<circle cx="608.6" cy="457.6" r="3.6" fill="url(#s78_8)"/>
<circle cx="500.9" cy="502.2" r="2.4" fill="url(#s102_7)"/>
<circle cx="497.7" cy="493.6" r="3.5" fill="url(#s96_7)"/>
<circle cx="638.2" cy="503.8" r="3.7" fill="url(#s120_7)"/>
<circle cx="646" cy="527.3" r="2.7" fill="url(#s162_8)"/>
<circle cx="516.9" cy="547.3" r="3.4" fill="url(#s144_8)"/>
<circle cx="487.2" cy="501.4" r="3.5" fill="url(#s108_7)"/>
<circle cx="595.5" cy="448.8" r="3.3" fill="url(#s66_8)"/>
<circle cx="556.3" cy="548.7" r="2.6" fill="url(#s150_8)"/>
<circle cx="535.7" cy="554.4" r="3.3" fill="url(#s144_8)"/>
<circle cx="479.6" cy="468.1" r="3.6" fill="url(#s60_8)"/>
<circle cx="557.4" cy="487" r="3.4" fill="url(#s96_7)"/>
<circle cx="489.4" cy="561" r="3.2" fill="url(#s156_8)"/>
<circle cx="617" cy="547.8" r="2.4" fill="url(#s168_9)"/>
<circle cx="490.1" cy="517" r="3.7" fill="url(#s114_6)"/>
<circle cx="480.3" cy="477" r="3.6" fill="url(#s84_7)"/>
<circle cx="525.7" cy="514.3" r="2.6" fill="url(#s108_6)"/>
<circle cx="525.9" cy="559.3" r="3.3" fill="url(#s150_8)"/>
<circle cx="514.9" cy="484.9" r="3.7" fill="url(#s90_7)"/>
<circle cx="480.7" cy="475.6" r="2.9" fill="url(#s78_8)"/>
<circle cx="562.3" cy="498.3" r="2.4" fill="url(#s102_7)"/>
<circle cx="515.6" cy="462.6" r="3.1" fill="url(#s66_8)"/>
<circle cx="480.8" cy="472.8" r="3.4" fill="url(#s72_8)"/>
<circle cx="506.2" cy="517.1" r="2.8" fill="url(#s108_6)"/>
<circle cx="551.9" cy="567.4" r="3.9" fill="url(#s162_9)"/>
<circle cx="558.8" cy="544.7" r="3.7" fill="url(#s144_8)"/>
<circle cx="574.7" cy="524.8" r="2.9" fill="url(#s120_7)"/>
<circle cx="613.8" cy="540.5" r="3.8" fill="url(#s162_8)"/>
<circle cx="510.8" cy="547.4" r="3.5" fill="url(#s138_8)"/>
<circle cx="575.2" cy="490.5" r="3" fill="url(#s96_7)"/>
<circle cx="516.2" cy="497.1" r="3.9" fill="url(#s96_7)"/>
<circle cx="521.3" cy="488.3" r="2.8" fill="url(#s96_7)"/>
<circle cx="488.5" cy="458.4" r="3.7" fill="url(#s54_9)"/>
<circle cx="535.5" cy="523" r="2.9" fill="url(#s114_6)"/>
<circle cx="482.2" cy="491.9" r="2.9" fill="url(#s102_7)"/>
<circle cx="556.8" cy="564.8" r="2.9" fill="url(#s168_8)"/>
<circle cx="563.7" cy="460.8" r="2.7" fill="url(#s72_8)"/>
<circle cx="532.3" cy="558.2" r="2.5" fill="url(#s156_8)"/>
<circle cx="479.7" cy="474.7" r="2.8" fill="url(#s78_8)"/>
<circle cx="498.4" cy="505.3" r="2.7" fill="url(#s102_7)"/>
<circle cx="631.6" cy="508.9" r="2.7" fill="url(#s126_7)"/>
<circle cx="658.6" cy="494.6" r="2.5" fill="url(#s126_7)"/>
<circle cx="494.5" cy="521.2" r="3.7" fill="url(#s114_6)"/>
<circle cx="602.2" cy="518.6" r="3" fill="url(#s126_7)"/>
<circle cx="516.3" cy="466.9" r="3" fill="url(#s60_8)"/>
<circle cx="573.2" cy="489.1" r="3.3" fill="url(#s96_7)"/>
<circle cx="538.9" cy="456.9" r="3.8" fill="url(#s60_8)"/>
<circle cx="665.5" cy="436" r="3.3" fill="url(#s78_8)"/>
<circle cx="514.9" cy="470.9" r="2.6" fill="url(#s60_8)"/>
<circle cx="606.7" cy="452.5" r="3.6" fill="url(#s72_8)"/>
<circle cx="554.1" cy="523.1" r="3.2" fill="url(#s120_7)"/>
<circle cx="567.7" cy="490.2" r="2.8" fill="url(#s102_7)"/>
<circle cx="605.7" cy="532.4" r="2.9" fill="url(#s144_8)"/>
<circle cx="550.9" cy="565.5" r="2.6" fill="url(#s162_8)"/>
<circle cx="541.4" cy="532.2" r="3.6" fill="url(#s126_7)"/>
<circle cx="484.1" cy="459.6" r="2.6" fill="url(#s48_8)"/>
<circle cx="546.5" cy="519.5" r="2.7" fill="url(#s120_6)"/>
<circle cx="521" cy="477.6" r="2.7" fill="url(#s78_8)"/>
<circle cx="609.4" cy="469.7" r="3.1" fill="url(#s96_7)"/>
<circle cx="517.4" cy="551.5" r="3.1" fill="url(#s144_8)"/>
<circle cx="642.2" cy="448.5" r="3.5" fill="url(#s78_8)"/>
<circle cx="577.5" cy="496" r="2.5" fill="url(#s102_7)"/>
<circle cx="528.9" cy="564.3" r="3.8" fill="url(#s162_8)"/>
<circle cx="499.2" cy="488.1" r="2.8" fill="url(#s96_7)"/>
<circle cx="500.1" cy="482.5" r="3.5" fill="url(#s90_7)"/>
<circle cx="510" cy="573.9" r="2.7" fill="url(#s174_9)"/>
<circle cx="490.8" cy="559.5" r="3.7" fill="url(#s150_8)"/>
<circle cx="602.8" cy="538.7" r="2.8" fill="url(#s150_8)"/>
<circle cx="543.3" cy="560" r="2.6" fill="url(#s162_8)"/>
<circle cx="566.8" cy="505.2" r="3.7" fill="url(#s102_6)"/>
<circle cx="631.4" cy="458.4" r="3.9" fill="url(#s90_7)"/>
<circle cx="479.7" cy="468.3" r="3.9" fill="url(#s60_8)"/>
<circle cx="644.4" cy="452.4" r="3.5" fill="url(#s84_8)"/>
<circle cx="492.2" cy="538.3" r="2.5" fill="url(#s126_7)"/>
<circle cx="646.3" cy="511" r="3.7" fill="url(#s138_8)"/>
<circle cx="480.1" cy="483.2" r="3.6" fill="url(#s96_7)"/>
<circle cx="480.4" cy="515.8" r="2.7" fill="url(#s108_6)"/>
<circle cx="485.5" cy="459" r="3.9" fill="url(#s48_8)"/>
<circle cx="635.5" cy="451" r="3.1" fill="url(#s78_8)"/>
<circle cx="532.3" cy="478.5" r="3.4" fill="url(#s78_7)"/>
<circle cx="518.9" cy="516.9" r="3.8" fill="url(#s108_6)"/>
<circle cx="498" cy="571.4" r="3.7" fill="url(#s168_9)"/>
<circle cx="506.1" cy="479.9" r="2.8" fill="url(#s78_8)"/>
<circle cx="480.7" cy="516.3" r="3" fill="url(#s108_6)"/>
<circle cx="520.5" cy="461.9" r="3.4" fill="url(#s60_8)"/>
<circle cx="555.2" cy="518.2" r="3.4" fill="url(#s120_6)"/>
<circle cx="634.3" cy="515.5" r="3" fill="url(#s132_8)"/>
<circle cx="530.6" cy="570.4" r="3" fill="url(#s168_9)"/>
<circle cx="528.9" cy="475.5" r="3.9" fill="url(#s72_8)"/>
<circle cx="569" cy="561.7" r="2.8" fill="url(#s168_8)"/>
<circle cx="523" cy="488.1" r="2.7" fill="url(#s90_7)"/>
<circle cx="626.1" cy="525.7" r="3.8" fill="url(#s138_8)"/>
<circle cx="588.9" cy="483.6" r="3.2" fill="url(#s96_7)"/>
<circle cx="661" cy="431.7" r="3.5" fill="url(#s72_9)"/>
<circle cx="548.2" cy="523.8" r="3.9" fill="url(#s114_7)"/>
<circle cx="573.9" cy="538.1" r="3" fill="url(#s138_8)"/>
<circle cx="525.9" cy="520" r="3.3" fill="url(#s114_6)"/>
<circle cx="513.7" cy="531.9" r="3.2" fill="url(#s120_7)"/>
<circle cx="570.1" cy="481.5" r="3.1" fill="url(#s96_7)"/>
<circle cx="550.7" cy="509.8" r="2.7" fill="url(#s102_6)"/>
<circle cx="648.7" cy="490.6" r="3.2" fill="url(#s114_6)"/>
<circle cx="622" cy="539.5" r="3.7" fill="url(#s156_8)"/>
<circle cx="523.7" cy="554.9" r="3.6" fill="url(#s144_8)"/>
<circle cx="490.5" cy="487.6" r="2.6" fill="url(#s96_7)"/>
<circle cx="484" cy="503.6" r="3.9" fill="url(#s102_7)"/>
<circle cx="536.2" cy="512.3" r="3.6" fill="url(#s108_6)"/>
<circle cx="490" cy="538" r="3" fill="url(#s126_7)"/>
<circle cx="501" cy="502" r="2.9" fill="url(#s102_7)"/>
<circle cx="479.4" cy="479" r="3.3" fill="url(#s84_7)"/>
<circle cx="493.3" cy="542.4" r="2.8" fill="url(#s132_7)"/>
<circle cx="501.6" cy="555.8" r="2.5" fill="url(#s150_8)"/>
<circle cx="613" cy="511.7" r="3" fill="url(#s114_7)"/>
<circle cx="534.9" cy="499.6" r="3.5" fill="url(#s102_7)"/>
<circle cx="528.5" cy="533.4" r="3.6" fill="url(#s120_7)"/>
<circle cx="524.5" cy="526.2" r="3.8" fill="url(#s114_6)"/>
<circle cx="660.9" cy="505.3" r="3" fill="url(#s138_8)"/>
<circle cx="514.9" cy="468.3" r="3.5" fill="url(#s60_8)"/>
<circle cx="551.4" cy="512.2" r="3.8" fill="url(#s114_6)"/>
<circle cx="479.8" cy="526.1" r="3.1" fill="url(#s114_7)"/>
<circle cx="548.6" cy="551.7" r="3.4" fill="url(#s150_8)"/>
<circle cx="527.4" cy="464.3" r="3.4" fill="url(#s60_8)"/>
<circle cx="607.2" cy="531.2" r="2.6" fill="url(#s138_8)"/>
<circle cx="483.1" cy="554.1" r="2.6" fill="url(#s144_8)"/>
<circle cx="585.8" cy="530.6" r="3.1" fill="url(#s126_8)"/>
<circle cx="588.1" cy="495" r="3.9" fill="url(#s108_6)"/>
<circle cx="633.7" cy="454" r="2.9" fill="url(#s84_8)"/>
<circle cx="479.1" cy="573.5" r="2.8" fill="url(#s168_9)"/>
<circle cx="512.3" cy="489.2" r="3.7" fill="url(#s96_7)"/>
<circle cx="548.4" cy="503.2" r="2.5" fill="url(#s102_6)"/>
<circle cx="632.3" cy="525.3" r="3.7" fill="url(#s144_8)"/>
<circle cx="496.3" cy="464.6" r="3.2" fill="url(#s54_8)"/>
<circle cx="539.1" cy="512.9" r="3.3" fill="url(#s108_6)"/>
<circle cx="615.3" cy="463.6" r="3.2" fill="url(#s90_7)"/>
<circle cx="512.5" cy="521" r="3" fill="url(#s114_6)"/>
<circle cx="514" cy="491.4" r="3.6" fill="url(#s96_7)"/>
<circle cx="592.8" cy="539.3" r="3.3" fill="url(#s144_8)"/>
<circle cx="481.6" cy="507.6" r="3.4" fill="url(#s102_6)"/>
<circle cx="631.2" cy="446.5" r="3.3" fill="url(#s72_8)"/>
<circle cx="647.3" cy="494.4" r="3.6" fill="url(#s114_6)"/>
<circle cx="584.1" cy="526.8" r="2.8" fill="url(#s126_7)"/>
<circle cx="624.8" cy="455.7" r="2.7" fill="url(#s78_8)"/>
<circle cx="484.6" cy="550.1" r="3.8" fill="url(#s138_8)"/>
<circle cx="580.6" cy="477.9" r="3.4" fill="url(#s90_7)"/>
<circle cx="481.6" cy="539" r="2.5" fill="url(#s132_7)"/>
<circle cx="509.2" cy="486.4" r="3.3" fill="url(#s90_7)"/>
<circle cx="558.7" cy="470.6" r="3.8" fill="url(#s78_8)"/>
<circle cx="625.6" cy="456.2" r="3.9" fill="url(#s84_8)"/>
<circle cx="480.1" cy="500.7" r="3.4" fill="url(#s102_7)"/>
<circle cx="555.6" cy="463.5" r="3.1" fill="url(#s72_8)"/>
<circle cx="532.5" cy="536.3" r="2.6" fill="url(#s132_7)"/>
<circle cx="487.1" cy="566.7" r="3.9" fill="url(#s168_8)"/>
<circle cx="551.6" cy="487.5" r="2.9" fill="url(#s102_7)"/>
<circle cx="545.5" cy="564.5" r="2.5" fill="url(#s162_8)"/>
<circle cx="631.6" cy="503.4" r="3.2" fill="url(#s114_7)"/>
<circle cx="488.9" cy="489.7" r="3.7" fill="url(#s102_7)"/>
<circle cx="499.6" cy="566.3" r="2.4" fill="url(#s162_8)"/>
<circle cx="580.1" cy="453.1" r="2.9" fill="url(#s66_8)"/>
<circle cx="502.4" cy="545.1" r="2.7" fill="url(#s138_8)"/>
<circle cx="509.9" cy="467.7" r="3.2" fill="url(#s60_8)"/>
<circle cx="556.8" cy="546.9" r="3.3" fill="url(#s144_8)"/>
<circle cx="480.2" cy="516.7" r="2.5" fill="url(#s114_6)"/>
<circle cx="488.1" cy="525.8" r="2.9" fill="url(#s114_6)"/>
<circle cx="484.5" cy="561.5" r="2.6" fill="url(#s156_8)"/>
<circle cx="553.6" cy="466.5" r="3.1" fill="url(#s72_8)"/>
<circle cx="553.4" cy="513.3" r="3" fill="url(#s108_6)"/>
<circle cx="527.7" cy="482.8" r="2.6" fill="url(#s84_7)"/>
<circle cx="633.6" cy="492.4" r="2.4" fill="url(#s114_6)"/>
<circle cx="543.9" cy="548" r="3.3" fill="url(#s144_8)"/>
<circle cx="499.9" cy="546" r="2.6" fill="url(#s132_8)"/>
<circle cx="480" cy="502.3" r="3.2" fill="url(#s102_7)"/>
<circle cx="638.7" cy="446.6" r="3.3" fill="url(#s72_8)"/>
<circle cx="566.3" cy="545.4" r="3.5" fill="url(#s138_8)"/>
<circle cx="502.1" cy="528.5" r="3.9" fill="url(#s114_7)"/>
<circle cx="571.4" cy="532.7" r="3.6" fill="url(#s126_7)"/>
<circle cx="617.7" cy="492.6" r="2.4" fill="url(#s114_6)"/>
<circle cx="529.2" cy="505.7" r="2.5" fill="url(#s102_6)"/>
<circle cx="598.4" cy="523.1" r="2.6" fill="url(#s126_7)"/>
<circle cx="489" cy="481.1" r="2.7" fill="url(#s84_7)"/>
<circle cx="662.2" cy="534.3" r="3.6" fill="url(#s174_9)"/>
<circle cx="545.6" cy="546.4" r="3.8" fill="url(#s144_8)"/>
<circle cx="575.5" cy="472.2" r="3.7" fill="url(#s90_7)"/>
<circle cx="484.3" cy="542.1" r="2.9" fill="url(#s126_7)"/>
<circle cx="659.3" cy="501.8" r="3.5" fill="url(#s126_7)"/>
<circle cx="622.3" cy="544.2" r="3.8" fill="url(#s168_9)"/>
<circle cx="623.3" cy="528.8" r="3.3" fill="url(#s144_8)"/>
<circle cx="621.4" cy="527.5" r="3.7" fill="url(#s144_8)"/>
<circle cx="658" cy="487.6" r="3.8" fill="url(#s108_6)"/>
<circle cx="660.1" cy="513.4" r="2.8" fill="url(#s150_8)"/>
<circle cx="500.2" cy="481.9" r="3.1" fill="url(#s84_7)"/>
<circle cx="544.7" cy="561.9" r="3.4" fill="url(#s162_8)"/>
<circle cx="525.6" cy="549.2" r="3.6" fill="url(#s144_8)"/>
<circle cx="652.6" cy="520.1" r="3" fill="url(#s150_8)"/>
<circle cx="579.1" cy="547.7" r="2.9" fill="url(#s150_8)"/>
<circle cx="624.3" cy="527.4" r="2.4" fill="url(#s144_8)"/>
<circle cx="479.4" cy="468.1" r="3.6" fill="url(#s60_8)"/>
<circle cx="568.4" cy="505.3" r="2.7" fill="url(#s108_6)"/>
<circle cx="626.5" cy="507.5" r="2.8" fill="url(#s120_7)"/>
<circle cx="505.8" cy="540.3" r="3.1" fill="url(#s132_7)"/>
<circle cx="616.8" cy="454.3" r="3.4" fill="url(#s72_8)"/>
<circle cx="638.5" cy="502.5" r="3.7" fill="url(#s120_7)"/>
<circle cx="546.1" cy="567.5" r="3.2" fill="url(#s174_9)"/>
<circle cx="494.7" cy="555.6" r="2.6" fill="url(#s150_8)"/>
<circle cx="479" cy="475.8" r="3.8" fill="url(#s78_8)"/>
<circle cx="485.1" cy="522.5" r="3.7" fill="url(#s114_6)"/>
<circle cx="522.9" cy="565.8" r="3.7" fill="url(#s162_8)"/>
<circle cx="483" cy="530.8" r="3.1" fill="url(#s126_7)"/>
<circle cx="520.4" cy="535.6" r="3.3" fill="url(#s126_7)"/>
<circle cx="550.7" cy="533.8" r="3.8" fill="url(#s126_7)"/>
<circle cx="520.7" cy="571.3" r="2.5" fill="url(#s174_9)"/>
<circle cx="586.4" cy="512.1" r="3.5" fill="url(#s120_6)"/>
<circle cx="597.2" cy="531.8" r="2.5" fill="url(#s138_8)"/>
<circle cx="488.6" cy="570.1" r="3.7" fill="url(#s162_9)"/>
<circle cx="525.7" cy="545.1" r="3.4" fill="url(#s132_8)"/>
<circle cx="605.5" cy="476.1" r="3" fill="url(#s102_7)"/>
<circle cx="578.3" cy="544.2" r="3.4" fill="url(#s144_8)"/>
<circle cx="658.6" cy="505.9" r="3.4" fill="url(#s132_8)"/>
<circle cx="491.4" cy="525.7" r="3.6" fill="url(#s120_6)"/>
<circle cx="517.9" cy="476.4" r="3.2" fill="url(#s78_8)"/>
<circle cx="491.4" cy="544.8" r="2.7" fill="url(#s132_8)"/>
<circle cx="481.4" cy="491.2" r="3" fill="url(#s102_7)"/>
<circle cx="534.1" cy="469.7" r="2.8" fill="url(#s72_8)"/>
<circle cx="524.5" cy="569.7" r="2.8" fill="url(#s162_9)"/>
<circle cx="575.6" cy="541.8" r="2.9" fill="url(#s138_8)"/>
<circle cx="604.2" cy="497.2" r="3.4" fill="url(#s108_6)"/>
<circle cx="506.5" cy="501.3" r="3.8" fill="url(#s102_7)"/>
<circle cx="508.4" cy="532.1" r="2.8" fill="url(#s126_7)"/>
<circle cx="480.6" cy="554.5" r="3.2" fill="url(#s144_8)"/>
<circle cx="482.5" cy="521.6" r="3.5" fill="url(#s114_6)"/>
<circle cx="529.4" cy="551.5" r="2.6" fill="url(#s144_8)"/>
<circle cx="577.4" cy="563.9" r="3.4" fill="url(#s174_9)"/>
<circle cx="608.5" cy="487.4" r="3.5" fill="url(#s102_7)"/>
<circle cx="525.7" cy="551.7" r="2.9" fill="url(#s144_8)"/>
<circle cx="583.1" cy="554.2" r="2.6" fill="url(#s162_8)"/>
<circle cx="482.2" cy="505.3" r="3.2" fill="url(#s108_6)"/>
<circle cx="582.7" cy="515.6" r="3.3" fill="url(#s114_7)"/>
<circle cx="626.5" cy="526" r="3.7" fill="url(#s144_8)"/>
<circle cx="583.6" cy="536.4" r="3.2" fill="url(#s144_8)"/>
<circle cx="640.9" cy="515.8" r="3.6" fill="url(#s138_8)"/>
<circle cx="635.5" cy="452.1" r="3.5" fill="url(#s84_8)"/>
<circle cx="568" cy="549.7" r="2.8" fill="url(#s144_8)"/>
<circle cx="499.1" cy="469.7" r="3.4" fill="url(#s66_8)"/>
<circle cx="615.5" cy="481.6" r="2.5" fill="url(#s108_7)"/>
<circle cx="514.2" cy="460.5" r="3.3" fill="url(#s54_9)"/>
<circle cx="506.4" cy="466.3" r="3.1" fill="url(#s60_8)"/>
<circle cx="616.8" cy="445.1" r="3.6" fill="url(#s66_8)"/>
<circle cx="499.2" cy="532" r="2.9" fill="url(#s120_7)"/>
<circle cx="560.4" cy="478.1" r="2.7" fill="url(#s96_7)"/>
<circle cx="609.4" cy="445" r="3.2" fill="url(#s66_8)"/>
<circle cx="482" cy="531.3" r="3.5" fill="url(#s120_7)"/>
<circle cx="527.1" cy="518.1" r="3.3" fill="url(#s108_6)"/>
<circle cx="632.6" cy="546.2" r="3.6" fill="url(#s180_9)"/>
<circle cx="514.9" cy="572.7" r="2.5" fill="url(#s168_9)"/>
<circle cx="488.3" cy="511.2" r="3.4" fill="url(#s108_6)"/>
<circle cx="537.2" cy="496" r="2.7" fill="url(#s102_7)"/>
<circle cx="507.5" cy="481.9" r="3.5" fill="url(#s84_7)"/>
<circle cx="534.2" cy="480.1" r="3.5" fill="url(#s84_7)"/>
<circle cx="505" cy="524" r="3.5" fill="url(#s120_6)"/>
<circle cx="601.8" cy="553.7" r="3.8" fill="url(#s168_9)"/>
<circle cx="595" cy="451.1" r="2.7" fill="url(#s66_8)"/>
<circle cx="631.5" cy="517" r="3.3" fill="url(#s132_8)"/>
<circle cx="519.3" cy="479.1" r="3.3" fill="url(#s84_8)"/>
<circle cx="511.1" cy="464.9" r="2.7" fill="url(#s60_8)"/>
<circle cx="641" cy="522.3" r="3.1" fill="url(#s144_8)"/>
<circle cx="485.6" cy="475" r="3.6" fill="url(#s72_8)"/>
<circle cx="666.3" cy="523.9" r="3.6" fill="url(#s162_8)"/>
<circle cx="620.6" cy="454.5" r="2.6" fill="url(#s84_8)"/>
<circle cx="547.8" cy="477.9" r="2.8" fill="url(#s84_7)"/>
<circle cx="643.6" cy="511.3" r="3.8" fill="url(#s138_8)"/>
<circle cx="533.8" cy="542.3" r="3" fill="url(#s138_8)"/>
<circle cx="625.6" cy="454.2" r="2.4" fill="url(#s78_8)"/>
<circle cx="622.8" cy="527.2" r="3.1" fill="url(#s138_8)"/>
<circle cx="638.3" cy="494.5" r="2.5" fill="url(#s114_6)"/>
<circle cx="572.8" cy="555.6" r="3.1" fill="url(#s162_8)"/>
<circle cx="496.7" cy="487" r="3.8" fill="url(#s96_7)"/>
<circle cx="485.4" cy="527.1" r="2.6" fill="url(#s114_7)"/>
<circle cx="537.6" cy="524.6" r="3.4" fill="url(#s120_7)"/>
<circle cx="534.4" cy="464.9" r="3.5" fill="url(#s60_8)"/>
<circle cx="540.3" cy="502.1" r="3.4" fill="url(#s108_7)"/>
<circle cx="501.3" cy="534.4" r="3.4" fill="url(#s120_7)"/>
<circle cx="489.1" cy="564.9" r="3.3" fill="url(#s156_8)"/>
<circle cx="501.1" cy="573.5" r="2.7" fill="url(#s168_9)"/>
<circle cx="611.9" cy="535.6" r="3.4" fill="url(#s150_8)"/>
<circle cx="480.4" cy="466.4" r="3.9" fill="url(#s60_8)"/>
<circle cx="480.4" cy="461" r="2.8" fill="url(#s60_8)"/>
<circle cx="498.6" cy="537" r="3.8" fill="url(#s126_7)"/>
<circle cx="479.5" cy="545.8" r="2.6" fill="url(#s144_8)"/>
<circle cx="592.7" cy="466.3" r="2.6" fill="url(#s90_7)"/>
<circle cx="485.5" cy="550.5" r="3.7" fill="url(#s144_8)"/>
<circle cx="479" cy="557" r="3.2" fill="url(#s156_8)"/>
<circle cx="546.7" cy="527.2" r="3.3" fill="url(#s126_7)"/>
<circle cx="483.1" cy="462.4" r="3.2" fill="url(#s54_8)"/>
<circle cx="526.5" cy="460.9" r="3.5" fill="url(#s54_9)"/>
<circle cx="437" cy="530" r="2.6" fill="url(#s120_8)"/>
<circle cx="439" cy="540" r="2.6" fill="url(#s132_8)"/>
<circle cx="436" cy="552" r="2.6" fill="url(#s162_8)"/>
<circle cx="431" cy="560" r="2.6" fill="url(#s192_8)"/>
<circle cx="442" cy="562" r="2.6" fill="url(#s186_8)"/>
<circle cx="450" cy="566" r="2.6" fill="url(#s186_8)"/>
<circle cx="447" cy="556" r="2.6" fill="url(#s174_8)"/>
<circle cx="471.3" cy="448.8" r="3.5" fill="url(#s42_9)"/>
<circle cx="470.6" cy="448.1" r="3.4" fill="url(#s48_9)"/>
<circle cx="471.9" cy="453.5" r="3.3" fill="url(#s48_9)"/>
<circle cx="474.9" cy="450.2" r="3.9" fill="url(#s42_9)"/>
<circle cx="473.4" cy="449.9" r="3.8" fill="url(#s48_9)"/>
<circle cx="474.4" cy="457.5" r="3.8" fill="url(#s48_9)"/>
<circle cx="476.2" cy="446.6" r="3.7" fill="url(#s48_9)"/>
<circle cx="478" cy="452.1" r="3.4" fill="url(#s54_9)"/>
<circle cx="478.5" cy="458.3" r="3.8" fill="url(#s60_9)"/>
<circle cx="483.5" cy="452.5" r="3.7" fill="url(#s42_9)"/>
<circle cx="482.6" cy="455.8" r="3.4" fill="url(#s54_9)"/>
<circle cx="480.6" cy="459.6" r="3.4" fill="url(#s60_9)"/>
<circle cx="484.8" cy="450.2" r="3.3" fill="url(#s48_9)"/>
<circle cx="484.1" cy="454.3" r="4.1" fill="url(#s54_9)"/>
<circle cx="487.5" cy="459.6" r="3.9" fill="url(#s60_9)"/>
<circle cx="490.7" cy="451.2" r="3.1" fill="url(#s48_9)"/>
<circle cx="487.8" cy="454.1" r="3.9" fill="url(#s60_9)"/>
<circle cx="489" cy="460.8" r="3.8" fill="url(#s60_9)"/>
<circle cx="494.7" cy="453.3" r="3" fill="url(#s54_9)"/>
<circle cx="492.8" cy="457.1" r="3.3" fill="url(#s54_9)"/>
<circle cx="495.4" cy="457.2" r="3.5" fill="url(#s60_9)"/>
<circle cx="497.6" cy="456.3" r="3.3" fill="url(#s54_9)"/>
<circle cx="498.2" cy="459.6" r="2.9" fill="url(#s54_9)"/>
<circle cx="496.6" cy="462.4" r="2.8" fill="url(#s54_9)"/>
<circle cx="502.2" cy="456.9" r="3" fill="url(#s54_9)"/>
<circle cx="502.1" cy="458.1" r="3.7" fill="url(#s60_9)"/>
<circle cx="500.3" cy="458.5" r="2.8" fill="url(#s60_9)"/>
<circle cx="504" cy="452.5" r="4" fill="url(#s54_9)"/>
<circle cx="505.5" cy="458.2" r="3.5" fill="url(#s60_9)"/>
<circle cx="504.4" cy="457.5" r="2.9" fill="url(#s54_9)"/>
<circle cx="508.4" cy="452.1" r="2.9" fill="url(#s54_9)"/>
<circle cx="510.9" cy="458.8" r="3.1" fill="url(#s60_9)"/>
<circle cx="507.7" cy="458.1" r="3.2" fill="url(#s60_9)"/>
<circle cx="513.6" cy="454.4" r="3.7" fill="url(#s48_9)"/>
<circle cx="514.6" cy="456.9" r="3.8" fill="url(#s54_9)"/>
<circle cx="514.1" cy="459.2" r="3.8" fill="url(#s66_9)"/>
<circle cx="517.3" cy="453.7" r="2.8" fill="url(#s54_9)"/>
<circle cx="518.3" cy="456" r="3.6" fill="url(#s60_9)"/>
<circle cx="517.3" cy="459.2" r="2.9" fill="url(#s60_9)"/>
<circle cx="522.4" cy="454.7" r="3.5" fill="url(#s60_9)"/>
<circle cx="519.3" cy="455.7" r="2.8" fill="url(#s66_9)"/>
<circle cx="519" cy="464.6" r="3.2" fill="url(#s66_9)"/>
<circle cx="522.8" cy="457.5" r="3" fill="url(#s54_9)"/>
<circle cx="524.3" cy="456.2" r="3" fill="url(#s66_9)"/>
<circle cx="523.4" cy="461.1" r="3.7" fill="url(#s60_9)"/>
<circle cx="526.8" cy="452.4" r="3.2" fill="url(#s54_9)"/>
<circle cx="528.6" cy="457.1" r="3.8" fill="url(#s54_9)"/>
<circle cx="528.7" cy="462.6" r="3" fill="url(#s60_9)"/>
<circle cx="531.5" cy="450.3" r="3.3" fill="url(#s60_9)"/>
<circle cx="530.2" cy="453.4" r="3.3" fill="url(#s54_9)"/>
<circle cx="530.7" cy="458.5" r="2.9" fill="url(#s60_9)"/>
<circle cx="535" cy="451.2" r="3.8" fill="url(#s60_9)"/>
<circle cx="533.8" cy="452.6" r="3.6" fill="url(#s60_9)"/>
<circle cx="537" cy="460.5" r="3.7" fill="url(#s60_9)"/>
<circle cx="541" cy="450.1" r="3" fill="url(#s54_9)"/>
<circle cx="540.7" cy="451.1" r="2.8" fill="url(#s60_9)"/>
<circle cx="541" cy="455.8" r="3.6" fill="url(#s60_9)"/>
<circle cx="542.8" cy="447.3" r="2.9" fill="url(#s60_9)"/>
<circle cx="542.4" cy="449.1" r="3.9" fill="url(#s60_9)"/>
<circle cx="541.7" cy="451.4" r="3.5" fill="url(#s66_9)"/>
<circle cx="544.8" cy="447.4" r="3.6" fill="url(#s60_9)"/>
<circle cx="545.6" cy="450.7" r="3.4" fill="url(#s66_9)"/>
<circle cx="545.3" cy="455.7" r="3.8" fill="url(#s66_9)"/>
<circle cx="551.8" cy="446.5" r="3.7" fill="url(#s54_9)"/>
<circle cx="549.3" cy="451" r="3.7" fill="url(#s60_9)"/>
<circle cx="549.3" cy="450.4" r="3.2" fill="url(#s60_9)"/>
<circle cx="552.9" cy="448.8" r="3.4" fill="url(#s66_9)"/>
<circle cx="553.7" cy="451.3" r="2.7" fill="url(#s66_9)"/>
<circle cx="553" cy="453" r="3.3" fill="url(#s72_9)"/>
<circle cx="557.7" cy="450.1" r="3.4" fill="url(#s54_9)"/>
<circle cx="559.1" cy="448" r="3.8" fill="url(#s60_9)"/>
<circle cx="556.7" cy="455.9" r="3" fill="url(#s66_9)"/>
<circle cx="560.8" cy="447.5" r="2.7" fill="url(#s60_9)"/>
<circle cx="560.1" cy="451.5" r="2.7" fill="url(#s66_9)"/>
<circle cx="560.5" cy="452.1" r="3.3" fill="url(#s66_9)"/>
<circle cx="563.6" cy="443.8" r="2.8" fill="url(#s66_9)"/>
<circle cx="563.7" cy="446.1" r="3.3" fill="url(#s66_9)"/>
<circle cx="566.6" cy="448.6" r="2.9" fill="url(#s60_9)"/>
<circle cx="569.1" cy="444.3" r="3.1" fill="url(#s66_9)"/>
<circle cx="569.4" cy="449.9" r="3.7" fill="url(#s60_9)"/>
<circle cx="570.5" cy="450" r="2.7" fill="url(#s72_9)"/>
<circle cx="570.8" cy="440.6" r="3" fill="url(#s60_9)"/>
<circle cx="574.2" cy="449.1" r="3.1" fill="url(#s66_9)"/>
<circle cx="573.7" cy="451.7" r="3.4" fill="url(#s66_9)"/>
<circle cx="574.4" cy="441.2" r="3.4" fill="url(#s60_9)"/>
<circle cx="577.2" cy="448.4" r="3.7" fill="url(#s60_9)"/>
<circle cx="574.3" cy="451.4" r="3.3" fill="url(#s66_9)"/>
<circle cx="580.3" cy="440.4" r="2.9" fill="url(#s60_9)"/>
<circle cx="579.7" cy="446.1" r="2.7" fill="url(#s66_9)"/>
<circle cx="580.1" cy="447.7" r="3.4" fill="url(#s72_9)"/>
<circle cx="581.2" cy="441" r="3.4" fill="url(#s66_9)"/>
<circle cx="583.7" cy="442" r="3.7" fill="url(#s66_9)"/>
<circle cx="582.1" cy="446.5" r="3.7" fill="url(#s66_9)"/>
<circle cx="586.4" cy="443.3" r="3.6" fill="url(#s60_9)"/>
<circle cx="587.7" cy="442.3" r="3.3" fill="url(#s66_9)"/>
<circle cx="585.2" cy="444.3" r="2.8" fill="url(#s66_9)"/>
<circle cx="588.4" cy="437" r="3" fill="url(#s60_9)"/>
<circle cx="588.6" cy="442.8" r="3.6" fill="url(#s66_9)"/>
<circle cx="589.7" cy="446.5" r="3.1" fill="url(#s66_9)"/>
<circle cx="593.8" cy="435.5" r="3.3" fill="url(#s60_9)"/>
<circle cx="593.3" cy="444.5" r="3.4" fill="url(#s66_9)"/>
<circle cx="594.4" cy="445.3" r="3.4" fill="url(#s72_9)"/>
<circle cx="596.2" cy="439.9" r="2.9" fill="url(#s60_9)"/>
<circle cx="598.7" cy="441.7" r="3.5" fill="url(#s72_9)"/>
<circle cx="597.7" cy="441.9" r="2.6" fill="url(#s66_9)"/>
<circle cx="601.8" cy="436.2" r="2.6" fill="url(#s60_9)"/>
<circle cx="599.6" cy="441.8" r="2.6" fill="url(#s60_9)"/>
<circle cx="600" cy="444.8" r="3.7" fill="url(#s66_9)"/>
<circle cx="602.9" cy="440" r="3.6" fill="url(#s60_9)"/>
<circle cx="603.8" cy="440.2" r="2.9" fill="url(#s66_9)"/>
<circle cx="604.3" cy="441.3" r="2.6" fill="url(#s66_9)"/>
<circle cx="606.6" cy="434" r="3.2" fill="url(#s66_9)"/>
<circle cx="607" cy="441.4" r="3.3" fill="url(#s66_9)"/>
<circle cx="607.9" cy="440.3" r="3.6" fill="url(#s72_9)"/>
<circle cx="609.6" cy="433.9" r="3.3" fill="url(#s60_9)"/>
<circle cx="612.3" cy="437.3" r="3.4" fill="url(#s72_9)"/>
<circle cx="609.8" cy="442.4" r="2.7" fill="url(#s72_9)"/>
<circle cx="616.1" cy="437.6" r="2.8" fill="url(#s60_9)"/>
<circle cx="615.5" cy="438.9" r="2.7" fill="url(#s66_9)"/>
<circle cx="615.2" cy="438.8" r="3.2" fill="url(#s66_9)"/>
<circle cx="617.4" cy="434.7" r="3.1" fill="url(#s66_9)"/>
<circle cx="616.5" cy="439.5" r="2.7" fill="url(#s66_9)"/>
<circle cx="618.9" cy="442.1" r="3.2" fill="url(#s72_9)"/>
<circle cx="620.6" cy="433.5" r="3.2" fill="url(#s60_9)"/>
<circle cx="620.4" cy="435.7" r="3.3" fill="url(#s72_9)"/>
<circle cx="622.7" cy="443.3" r="3.4" fill="url(#s66_9)"/>
<circle cx="624.5" cy="435.7" r="2.5" fill="url(#s66_9)"/>
<circle cx="623.6" cy="434.1" r="3" fill="url(#s66_9)"/>
<circle cx="627" cy="442.3" r="3" fill="url(#s66_9)"/>
<circle cx="627.1" cy="433.8" r="3" fill="url(#s66_9)"/>
<circle cx="629.5" cy="436.7" r="3.3" fill="url(#s66_9)"/>
<circle cx="626.9" cy="438.6" r="3" fill="url(#s66_9)"/>
<circle cx="632.7" cy="431.5" r="2.8" fill="url(#s66_9)"/>
<circle cx="632.9" cy="437.8" r="2.9" fill="url(#s66_9)"/>
<circle cx="633.8" cy="441.6" r="3.1" fill="url(#s66_9)"/>
<circle cx="635.3" cy="433.7" r="2.8" fill="url(#s60_9)"/>
<circle cx="637.4" cy="438.2" r="2.6" fill="url(#s66_9)"/>
<circle cx="635.9" cy="437" r="2.5" fill="url(#s72_9)"/>
<circle cx="639.9" cy="431.9" r="2.5" fill="url(#s66_9)"/>
<circle cx="637.2" cy="438.1" r="2.5" fill="url(#s66_9)"/>
<circle cx="639.9" cy="435.5" r="2.6" fill="url(#s66_9)"/>
<circle cx="640.8" cy="432.1" r="3.3" fill="url(#s66_9)"/>
<circle cx="640.9" cy="436.3" r="2.9" fill="url(#s66_9)"/>
<circle cx="640.7" cy="435.7" r="3.5" fill="url(#s66_9)"/>
<circle cx="644.5" cy="432.6" r="3.4" fill="url(#s72_9)"/>
<circle cx="645.4" cy="436.7" r="3.1" fill="url(#s66_9)"/>
<circle cx="645.4" cy="437.8" r="3.2" fill="url(#s66_9)"/>
<circle cx="647.6" cy="433" r="2.5" fill="url(#s72_9)"/>
<circle cx="648.2" cy="431.1" r="2.7" fill="url(#s72_9)"/>
<circle cx="650.8" cy="433.1" r="3.3" fill="url(#s72_9)"/>
<circle cx="650.9" cy="430.6" r="2.8" fill="url(#s66_9)"/>
<circle cx="651.8" cy="433.8" r="3.3" fill="url(#s72_9)"/>
<circle cx="650.2" cy="436.1" r="3" fill="url(#s78_9)"/>
<circle cx="657.3" cy="426.8" r="3.3" fill="url(#s72_9)"/>
<circle cx="654.5" cy="429.8" r="2.8" fill="url(#s72_9)"/>
<circle cx="655" cy="430.8" r="2.6" fill="url(#s78_9)"/>
<circle cx="658.4" cy="427.9" r="3.3" fill="url(#s72_9)"/>
<circle cx="657.7" cy="432.4" r="3.2" fill="url(#s78_9)"/>
<circle cx="659.7" cy="434" r="3.2" fill="url(#s72_9)"/>
<circle cx="662.7" cy="425.2" r="3.2" fill="url(#s66_9)"/>
<circle cx="662.2" cy="427.6" r="3.2" fill="url(#s72_9)"/>
<circle cx="663.4" cy="433.6" r="3.3" fill="url(#s72_9)"/>
<circle cx="667.1" cy="426.6" r="3.1" fill="url(#s72_9)"/>
<circle cx="663.5" cy="430.1" r="2.9" fill="url(#s72_9)"/>
<circle cx="664.7" cy="432.2" r="3.2" fill="url(#s78_9)"/>
<circle cx="667.4" cy="423" r="2.6" fill="url(#s66_9)"/>
<circle cx="667.9" cy="423.6" r="3.2" fill="url(#s72_9)"/>
<circle cx="666.8" cy="426.5" r="3.1" fill="url(#s72_9)"/>
<circle cx="671.6" cy="422.4" r="3.2" fill="url(#s72_9)"/>
<circle cx="671" cy="426.5" r="3.3" fill="url(#s72_9)"/>
<circle cx="673.4" cy="429.8" r="2.7" fill="url(#s78_9)"/>
<circle cx="675.3" cy="419.5" r="2.9" fill="url(#s72_9)"/>
<circle cx="675.1" cy="424.6" r="2.8" fill="url(#s78_9)"/>
<circle cx="675.7" cy="425.4" r="2.7" fill="url(#s72_9)"/>
<circle cx="680.1" cy="422.3" r="2.5" fill="url(#s72_9)"/>
<circle cx="676.4" cy="424.2" r="2.8" fill="url(#s78_9)"/>
<circle cx="677.9" cy="423.6" r="2.9" fill="url(#s78_9)"/>
<circle cx="682.6" cy="419" r="2.5" fill="url(#s72_9)"/>
<circle cx="682.6" cy="420.7" r="3.2" fill="url(#s78_9)"/>
<circle cx="681.2" cy="424.4" r="3" fill="url(#s84_9)"/>
<circle cx="683.4" cy="417.6" r="2.6" fill="url(#s72_9)"/>
<circle cx="683.4" cy="421.8" r="2.8" fill="url(#s78_9)"/>
<circle cx="683.2" cy="427" r="3.3" fill="url(#s78_9)"/>
<circle cx="689" cy="415.8" r="3.2" fill="url(#s72_9)"/>
<circle cx="688.8" cy="422.8" r="2.7" fill="url(#s78_9)"/>
<circle cx="686.6" cy="419.9" r="2.8" fill="url(#s84_9)"/>
<circle cx="692.5" cy="419.7" r="2.8" fill="url(#s78_9)"/>
<circle cx="691.2" cy="417" r="2.9" fill="url(#s78_9)"/>
<circle cx="690.6" cy="422.6" r="2.5" fill="url(#s78_9)"/>
<circle cx="693.8" cy="415.8" r="2.7" fill="url(#s66_9)"/>
<circle cx="692.1" cy="417.2" r="3" fill="url(#s78_9)"/>
<circle cx="693" cy="419.3" r="2.8" fill="url(#s72_9)"/>
<circle cx="697.6" cy="417.3" r="2.5" fill="url(#s72_9)"/>
<circle cx="698.1" cy="418.9" r="3" fill="url(#s78_9)"/>
<circle cx="696.3" cy="422" r="3.2" fill="url(#s72_9)"/>
<circle cx="702.1" cy="413.3" r="2.3" fill="url(#s66_9)"/>
<circle cx="701.5" cy="417.3" r="2.4" fill="url(#s78_9)"/>
<circle cx="700.9" cy="422" r="2.6" fill="url(#s84_9)"/>
<circle cx="702.4" cy="410.6" r="2.4" fill="url(#s72_9)"/>
<circle cx="703.9" cy="413.9" r="2.4" fill="url(#s72_9)"/>
<circle cx="701.8" cy="415.7" r="2.6" fill="url(#s78_9)"/>
<circle cx="705.3" cy="411.4" r="2.7" fill="url(#s78_9)"/>
<circle cx="706.5" cy="417" r="2.7" fill="url(#s72_9)"/>
<circle cx="706.9" cy="414.3" r="2.4" fill="url(#s72_9)"/>
<circle cx="710.4" cy="413.6" r="2.6" fill="url(#s72_9)"/>
<circle cx="709.3" cy="412.1" r="2.9" fill="url(#s78_9)"/>
<circle cx="708.2" cy="417.9" r="2.8" fill="url(#s72_9)"/>
<circle cx="714.1" cy="411" r="2.6" fill="url(#s78_9)"/>
<circle cx="714.4" cy="411.4" r="2.6" fill="url(#s78_9)"/>
<circle cx="712.9" cy="415.6" r="2.9" fill="url(#s84_9)"/>
<circle cx="714.3" cy="407.6" r="3" fill="url(#s78_9)"/>
<circle cx="716.1" cy="412.1" r="2.5" fill="url(#s84_9)"/>
<circle cx="715.9" cy="412.9" r="2.4" fill="url(#s78_9)"/>
<circle cx="720.4" cy="409.4" r="2.2" fill="url(#s72_9)"/>
<circle cx="718.7" cy="409.9" r="2.6" fill="url(#s84_9)"/>
<circle cx="718.2" cy="412.7" r="3.1" fill="url(#s84_9)"/>
<circle cx="721.7" cy="405.4" r="2.6" fill="url(#s78_9)"/>
<circle cx="722.9" cy="407.4" r="2.6" fill="url(#s78_9)"/>
<circle cx="721.3" cy="414.1" r="2.7" fill="url(#s78_9)"/>
<circle cx="724.2" cy="407.6" r="2.3" fill="url(#s78_9)"/>
<circle cx="722.9" cy="406" r="2.2" fill="url(#s84_9)"/>
<circle cx="723.4" cy="408.7" r="2.2" fill="url(#s78_9)"/>
<circle cx="728.8" cy="406.2" r="3" fill="url(#s84_9)"/>
<circle cx="728" cy="409.9" r="2.3" fill="url(#s84_9)"/>
<circle cx="727.6" cy="407.6" r="2.9" fill="url(#s84_9)"/>
<circle cx="730.4" cy="401.3" r="3" fill="url(#s78_9)"/>
<circle cx="731.2" cy="409.5" r="2.2" fill="url(#s78_9)"/>
<circle cx="729.3" cy="405.7" r="2.8" fill="url(#s84_9)"/>
<circle cx="732.2" cy="401" r="2.3" fill="url(#s78_9)"/>
<circle cx="734.5" cy="408.7" r="2.5" fill="url(#s84_9)"/>
<circle cx="733.5" cy="407.3" r="2.4" fill="url(#s78_9)"/>
<circle cx="738.7" cy="405.6" r="2.8" fill="url(#s72_9)"/>
<circle cx="735.5" cy="402.5" r="2.5" fill="url(#s84_9)"/>
<circle cx="735" cy="407.4" r="2.8" fill="url(#s78_9)"/>
<circle cx="739.5" cy="403.5" r="2.7" fill="url(#s78_9)"/>
<circle cx="741.2" cy="404.7" r="2.5" fill="url(#s78_9)"/>
<circle cx="741.5" cy="408.8" r="3" fill="url(#s84_9)"/>
<circle cx="741.2" cy="398.7" r="2.5" fill="url(#s84_9)"/>
<circle cx="740.7" cy="405.2" r="2.9" fill="url(#s84_9)"/>
<circle cx="740.7" cy="407.6" r="2.5" fill="url(#s90_9)"/>
<circle cx="745.9" cy="401.6" r="2.5" fill="url(#s84_9)"/>
<circle cx="747.4" cy="405.2" r="2.7" fill="url(#s78_9)"/>
<circle cx="745.1" cy="403.3" r="3" fill="url(#s90_9)"/>
<circle cx="749.7" cy="401.4" r="3" fill="url(#s84_9)"/>
<circle cx="747.8" cy="403.4" r="2.4" fill="url(#s84_9)"/>
<circle cx="747.2" cy="406.4" r="2.6" fill="url(#s84_9)"/>
<circle cx="753.1" cy="395.8" r="3" fill="url(#s84_9)"/>
<circle cx="750" cy="402.6" r="2.6" fill="url(#s90_9)"/>
<circle cx="751.8" cy="402.8" r="3" fill="url(#s84_9)"/>
<circle cx="755.4" cy="395.2" r="2.4" fill="url(#s78_9)"/>
<circle cx="755.8" cy="399.8" r="2.8" fill="url(#s84_9)"/>
<circle cx="755.2" cy="403.5" r="2.2" fill="url(#s90_9)"/>
<circle cx="758.1" cy="395.2" r="2.7" fill="url(#s78_9)"/>
<circle cx="756.7" cy="402.1" r="3" fill="url(#s90_9)"/>
<circle cx="756.9" cy="402.2" r="2.8" fill="url(#s90_9)"/>
<circle cx="759.9" cy="398.6" r="2.4" fill="url(#s90_9)"/>
<circle cx="760" cy="396.1" r="2.8" fill="url(#s84_9)"/>
<circle cx="760.8" cy="398" r="3" fill="url(#s90_9)"/>
<circle cx="763.9" cy="393.1" r="2.6" fill="url(#s84_9)"/>
<circle cx="761.9" cy="399.9" r="2.1" fill="url(#s84_9)"/>
<circle cx="761.3" cy="402.4" r="2.9" fill="url(#s84_9)"/>
<circle cx="765.6" cy="394.6" r="2.7" fill="url(#s84_9)"/>
<circle cx="765.2" cy="399.9" r="2.2" fill="url(#s84_9)"/>
<circle cx="767" cy="396.9" r="2.2" fill="url(#s90_9)"/>
<circle cx="768" cy="391.8" r="2.9" fill="url(#s84_9)"/>
<circle cx="769.8" cy="394.7" r="2.9" fill="url(#s84_9)"/>
<circle cx="770.2" cy="399.4" r="2.9" fill="url(#s90_9)"/>
<circle cx="772" cy="393.5" r="2.8" fill="url(#s84_9)"/>
<circle cx="769.8" cy="398.3" r="2.8" fill="url(#s90_9)"/>
<circle cx="772.4" cy="396.1" r="2.5" fill="url(#s96_9)"/>
<circle cx="776.1" cy="395.3" r="2.2" fill="url(#s84_9)"/>
<circle cx="774.5" cy="394.2" r="2.2" fill="url(#s84_9)"/>
<circle cx="774.1" cy="397.1" r="2.3" fill="url(#s90_9)"/>
<circle cx="777.3" cy="393.5" r="2.5" fill="url(#s84_9)"/>
<circle cx="778.6" cy="393.2" r="2.9" fill="url(#s96_9)"/>
<circle cx="775.6" cy="396.9" r="2.9" fill="url(#s90_9)"/>
<circle cx="780" cy="389.8" r="2" fill="url(#s84_9)"/>
<circle cx="778.3" cy="391.9" r="2.6" fill="url(#s90_9)"/>
<circle cx="781.6" cy="396.8" r="2.3" fill="url(#s96_9)"/>
<circle cx="783.1" cy="390.6" r="2.8" fill="url(#s90_9)"/>
<circle cx="782" cy="393.3" r="2.3" fill="url(#s96_9)"/>
<circle cx="781.6" cy="397.9" r="2.1" fill="url(#s84_9)"/>
<circle cx="785.6" cy="387.7" r="2.4" fill="url(#s84_9)"/>
<circle cx="786.7" cy="392.9" r="2.6" fill="url(#s96_9)"/>
<circle cx="787.3" cy="395.3" r="2.6" fill="url(#s84_9)"/>
<circle cx="786.3" cy="388.4" r="2.8" fill="url(#s84_9)"/>
<circle cx="788.4" cy="387.9" r="2.4" fill="url(#s96_9)"/>
<circle cx="788.5" cy="395.5" r="2" fill="url(#s90_9)"/>
<circle cx="789.6" cy="390.3" r="2.1" fill="url(#s90_9)"/>
<circle cx="789.9" cy="392.9" r="2.4" fill="url(#s90_9)"/>
<circle cx="792.7" cy="392" r="2.6" fill="url(#s90_9)"/>
<circle cx="794.9" cy="390.6" r="2.1" fill="url(#s90_9)"/>
<circle cx="792.7" cy="387.4" r="2.3" fill="url(#s90_9)"/>
<circle cx="795.4" cy="395.1" r="2.8" fill="url(#s96_9)"/>
<circle cx="796.9" cy="384.5" r="2.6" fill="url(#s90_9)"/>
<circle cx="795.7" cy="391.5" r="2.2" fill="url(#s84_9)"/>
<circle cx="794.9" cy="388.9" r="2.5" fill="url(#s96_9)"/>
<circle cx="797.6" cy="386" r="2.4" fill="url(#s90_9)"/>
<circle cx="798.7" cy="388.5" r="2" fill="url(#s84_9)"/>
<circle cx="798.7" cy="388.7" r="2.6" fill="url(#s90_9)"/>
<circle cx="803" cy="383.4" r="2" fill="url(#s90_9)"/>
<circle cx="801.2" cy="386.2" r="2.6" fill="url(#s90_9)"/>
<circle cx="802.4" cy="391.7" r="2.3" fill="url(#s96_9)"/>
<circle cx="806.1" cy="384.8" r="2.1" fill="url(#s84_9)"/>
<circle cx="802.7" cy="385.2" r="2" fill="url(#s96_9)"/>
<circle cx="804.1" cy="387.2" r="2.4" fill="url(#s102_9)"/>
<circle cx="806" cy="380.8" r="2.2" fill="url(#s90_9)"/>
<circle cx="808.7" cy="386.6" r="2.3" fill="url(#s90_9)"/>
<circle cx="805.2" cy="385" r="2.6" fill="url(#s96_9)"/>
<circle cx="808.3" cy="382.9" r="2" fill="url(#s90_9)"/>
<circle cx="809" cy="381.6" r="2.5" fill="url(#s96_9)"/>
<circle cx="809.7" cy="384.2" r="2.5" fill="url(#s96_9)"/>
<circle cx="813" cy="378.4" r="2.7" fill="url(#s84_9)"/>
<circle cx="811.2" cy="382.5" r="2.1" fill="url(#s90_9)"/>
<circle cx="813.1" cy="388.6" r="2.2" fill="url(#s96_9)"/>
<circle cx="815.7" cy="378.2" r="2.2" fill="url(#s90_9)"/>
<circle cx="814.7" cy="380" r="2" fill="url(#s96_9)"/>
<circle cx="816.9" cy="387.1" r="2" fill="url(#s96_9)"/>
<circle cx="817.5" cy="377.1" r="2.5" fill="url(#s90_9)"/>
<circle cx="818.8" cy="379.8" r="2.7" fill="url(#s96_9)"/>
<circle cx="817.5" cy="381" r="2.3" fill="url(#s96_9)"/>
<circle cx="820.9" cy="379.3" r="2.4" fill="url(#s96_9)"/>
<circle cx="818.4" cy="381.6" r="2.6" fill="url(#s90_9)"/>
<circle cx="819.5" cy="379.4" r="2.4" fill="url(#s102_9)"/>
<circle cx="822.2" cy="378.5" r="2.2" fill="url(#s96_9)"/>
<circle cx="821.9" cy="382.4" r="2.2" fill="url(#s90_9)"/>
<circle cx="821.2" cy="382.9" r="2.6" fill="url(#s102_9)"/>
<circle cx="824" cy="378.8" r="2.5" fill="url(#s90_9)"/>
<circle cx="824.9" cy="379.6" r="1.9" fill="url(#s90_9)"/>
<circle cx="824.8" cy="383.1" r="2.7" fill="url(#s96_9)"/>
<circle cx="829.6" cy="377.5" r="2.6" fill="url(#s96_9)"/>
<circle cx="829.8" cy="378.6" r="2.6" fill="url(#s96_9)"/>
<circle cx="826.7" cy="379.9" r="2.3" fill="url(#s96_9)"/>
<circle cx="830" cy="374.9" r="2.3" fill="url(#s90_9)"/>
<circle cx="829.6" cy="376.9" r="2.3" fill="url(#s96_9)"/>
<circle cx="831.2" cy="377" r="2.3" fill="url(#s96_9)"/>
<circle cx="834.2" cy="375.4" r="2.5" fill="url(#s96_9)"/>
<circle cx="832.1" cy="378.9" r="2.3" fill="url(#s96_9)"/>
<circle cx="832.2" cy="377.6" r="2.4" fill="url(#s102_9)"/>
<circle cx="835.6" cy="374.8" r="2" fill="url(#s96_9)"/>
<circle cx="835.1" cy="374.1" r="2.1" fill="url(#s102_9)"/>
<circle cx="836.6" cy="375.5" r="2" fill="url(#s102_9)"/>
<circle cx="838.8" cy="373.6" r="2.3" fill="url(#s96_9)"/>
<circle cx="837.2" cy="371.7" r="2.1" fill="url(#s90_9)"/>
<circle cx="840" cy="376.8" r="2.4" fill="url(#s108_9)"/>
<circle cx="841.9" cy="369.9" r="2.1" fill="url(#s90_9)"/>
<circle cx="841.9" cy="375.3" r="2.2" fill="url(#s96_9)"/>
<circle cx="839.8" cy="375.7" r="2.4" fill="url(#s108_9)"/>
<circle cx="844.6" cy="373.3" r="2.2" fill="url(#s96_9)"/>
<circle cx="842.4" cy="376.1" r="2" fill="url(#s96_9)"/>
<circle cx="842.3" cy="377.8" r="2.5" fill="url(#s102_9)"/>
<circle cx="847.1" cy="372.7" r="2.1" fill="url(#s90_9)"/>
<circle cx="846.8" cy="371.4" r="1.9" fill="url(#s102_9)"/>
<circle cx="845.4" cy="373.6" r="2.3" fill="url(#s102_9)"/>
<circle cx="846.3" cy="368.7" r="2.1" fill="url(#s90_9)"/>
<circle cx="847.7" cy="373.1" r="2.1" fill="url(#s102_9)"/>
<circle cx="848.7" cy="371.4" r="1.8" fill="url(#s102_9)"/>
<circle cx="851.1" cy="367.3" r="2" fill="url(#s102_9)"/>
<circle cx="852.3" cy="368.9" r="2.3" fill="url(#s102_9)"/>
<circle cx="849.9" cy="369.6" r="2" fill="url(#s102_9)"/>
<circle cx="853.5" cy="367.9" r="1.9" fill="url(#s96_9)"/>
<circle cx="852.4" cy="369.3" r="2.1" fill="url(#s102_9)"/>
<circle cx="851.6" cy="375" r="2" fill="url(#s108_9)"/>
<circle cx="854.5" cy="367.7" r="2.1" fill="url(#s90_9)"/>
<circle cx="856.8" cy="371.1" r="2" fill="url(#s102_9)"/>
<circle cx="855.5" cy="374.3" r="1.8" fill="url(#s102_9)"/>
<circle cx="856.9" cy="367.2" r="2.4" fill="url(#s102_9)"/>
<circle cx="858.2" cy="367.6" r="2.4" fill="url(#s96_9)"/>
<circle cx="857.1" cy="372" r="2.1" fill="url(#s108_9)"/>
<circle cx="858.8" cy="365.4" r="1.9" fill="url(#s90_9)"/>
<circle cx="858.8" cy="364.9" r="2" fill="url(#s102_9)"/>
<circle cx="860.5" cy="368.2" r="2.3" fill="url(#s102_9)"/>
<circle cx="864.8" cy="362.7" r="2.1" fill="url(#s96_9)"/>
<circle cx="862.4" cy="369.1" r="1.9" fill="url(#s108_9)"/>
<circle cx="862.3" cy="367.7" r="2.2" fill="url(#s108_9)"/>
<circle cx="864.4" cy="361.3" r="2.5" fill="url(#s96_9)"/>
<circle cx="863.7" cy="367" r="2.2" fill="url(#s102_9)"/>
<circle cx="864.6" cy="370.2" r="2" fill="url(#s102_9)"/>
<circle cx="869.5" cy="362.3" r="2" fill="url(#s96_9)"/>
<circle cx="868.3" cy="366.3" r="2.1" fill="url(#s102_9)"/>
<circle cx="866.6" cy="369" r="2.1" fill="url(#s108_9)"/>
<circle cx="869.6" cy="364" r="1.8" fill="url(#s96_9)"/>
<circle cx="871.9" cy="365.6" r="2.2" fill="url(#s102_9)"/>
<circle cx="870" cy="364.4" r="1.9" fill="url(#s108_9)"/>
<circle cx="873.2" cy="360.1" r="2.2" fill="url(#s96_9)"/>
<circle cx="872.9" cy="361.5" r="2.1" fill="url(#s102_9)"/>
<circle cx="872.7" cy="363.2" r="2.1" fill="url(#s108_9)"/>
<circle cx="873.4" cy="359.7" r="2.2" fill="url(#s102_9)"/>
<circle cx="875.3" cy="364.7" r="2.1" fill="url(#s102_9)"/>
<circle cx="874.6" cy="366.9" r="2.1" fill="url(#s108_9)"/>
<circle cx="876.7" cy="359.8" r="2.4" fill="url(#s102_9)"/>
<circle cx="877.8" cy="359.5" r="2.2" fill="url(#s96_9)"/>
<circle cx="878.9" cy="367.1" r="2.3" fill="url(#s102_9)"/>
<circle cx="880.9" cy="357.3" r="2.3" fill="url(#s102_9)"/>
<circle cx="877.6" cy="363.8" r="2" fill="url(#s108_9)"/>
<circle cx="880.3" cy="363.4" r="2.3" fill="url(#s102_9)"/>
<circle cx="883.5" cy="357.6" r="1.7" fill="url(#s102_9)"/>
<circle cx="880.2" cy="357.7" r="2.2" fill="url(#s102_9)"/>
<circle cx="880.5" cy="361.1" r="1.9" fill="url(#s114_9)"/>
<circle cx="885.8" cy="360.3" r="2.4" fill="url(#s102_9)"/>
<circle cx="885.4" cy="358.3" r="2.4" fill="url(#s108_9)"/>
<circle cx="885.2" cy="359.9" r="1.8" fill="url(#s114_9)"/>
<circle cx="886.8" cy="357.8" r="2.3" fill="url(#s96_9)"/>
<circle cx="887.3" cy="358.8" r="2.3" fill="url(#s102_9)"/>
<circle cx="885.3" cy="363.9" r="1.9" fill="url(#s114_9)"/>
<circle cx="890.2" cy="354.7" r="2.2" fill="url(#s102_9)"/>
<circle cx="887.7" cy="356.4" r="2.4" fill="url(#s102_9)"/>
<circle cx="888.9" cy="360.1" r="1.7" fill="url(#s114_9)"/>
<circle cx="892.1" cy="358.1" r="1.9" fill="url(#s102_9)"/>
<circle cx="890.5" cy="359" r="2.1" fill="url(#s108_9)"/>
<circle cx="891.3" cy="357.1" r="2.3" fill="url(#s108_9)"/>
<circle cx="893.5" cy="356.7" r="1.8" fill="url(#s108_9)"/>
<circle cx="892.9" cy="358.8" r="1.7" fill="url(#s102_9)"/>
<circle cx="894" cy="358.5" r="1.9" fill="url(#s108_9)"/>
<circle cx="894.6" cy="353.7" r="1.7" fill="url(#s108_9)"/>
<circle cx="894.7" cy="358.1" r="2.1" fill="url(#s108_9)"/>
<circle cx="896.2" cy="355.4" r="2.2" fill="url(#s108_9)"/>
<circle cx="899.4" cy="355.2" r="2.1" fill="url(#s108_9)"/>
<circle cx="897.7" cy="356.4" r="2.3" fill="url(#s102_9)"/>
<circle cx="896.4" cy="356.5" r="2" fill="url(#s108_9)"/>
<circle cx="899.1" cy="355" r="1.9" fill="url(#s102_9)"/>
<circle cx="899" cy="355" r="1.8" fill="url(#s108_9)"/>
<circle cx="900.4" cy="355.9" r="2" fill="url(#s114_9)"/>
<circle cx="900.6" cy="354.7" r="1.8" fill="url(#s102_9)"/>
<circle cx="903.6" cy="354.2" r="2" fill="url(#s102_9)"/>
<circle cx="903.6" cy="354.3" r="2.1" fill="url(#s108_9)"/>
<circle cx="905" cy="353.7" r="1.9" fill="url(#s102_9)"/>
<circle cx="903" cy="355.5" r="2.1" fill="url(#s102_9)"/>
<circle cx="905" cy="357.9" r="1.7" fill="url(#s114_9)"/>
<circle cx="908.5" cy="351" r="1.8" fill="url(#s102_9)"/>
<circle cx="906" cy="353.1" r="2" fill="url(#s102_9)"/>
<circle cx="906.2" cy="357.3" r="1.9" fill="url(#s114_9)"/>
<circle cx="910.1" cy="352.7" r="1.8" fill="url(#s102_9)"/>
<circle cx="908.5" cy="354.5" r="2.1" fill="url(#s108_9)"/>
<circle cx="911.2" cy="356.9" r="1.6" fill="url(#s114_9)"/>
<circle cx="911.1" cy="359.2" r="1.9" fill="url(#s102_9)"/>
<circle cx="909.7" cy="361.1" r="2" fill="url(#s108_9)"/>
<circle cx="911.2" cy="361.8" r="2.2" fill="url(#s108_9)"/>
<circle cx="517" cy="441" r="3" fill="url(#s96_8)"/>
<circle cx="518.2" cy="446.7" r="3" fill="url(#s78_8)"/>
<circle cx="518" cy="451.5" r="2.5" fill="url(#s72_7)"/>
<circle cx="522.9" cy="436.8" r="3" fill="url(#s78_8)"/>
<circle cx="520.4" cy="442.2" r="2.6" fill="url(#s78_7)"/>
<circle cx="522.3" cy="451" r="3.5" fill="url(#s60_7)"/>
<circle cx="522.4" cy="447.7" r="2.4" fill="url(#s72_8)"/>
<circle cx="526.2" cy="433.8" r="3" fill="url(#s84_8)"/>
<circle cx="523.8" cy="436.4" r="2.4" fill="url(#s72_7)"/>
<circle cx="526.7" cy="440.5" r="2.5" fill="url(#s78_6)"/>
<circle cx="526.6" cy="452.4" r="3.5" fill="url(#s54_7)"/>
<circle cx="529.6" cy="432.2" r="3" fill="url(#s96_8)"/>
<circle cx="529.1" cy="449.2" r="3" fill="url(#s54_8)"/>
<circle cx="528.1" cy="440.1" r="3.5" fill="url(#s78_7)"/>
<circle cx="528.7" cy="441.8" r="3" fill="url(#s84_8)"/>
<circle cx="532.3" cy="428.7" r="3" fill="url(#s84_8)"/>
<circle cx="531.8" cy="439.5" r="2.9" fill="url(#s84_8)"/>
<circle cx="533" cy="436.4" r="2.9" fill="url(#s72_7)"/>
<circle cx="533.2" cy="447.7" r="2.9" fill="url(#s60_6)"/>
<circle cx="537" cy="428.4" r="3" fill="url(#s96_8)"/>
<circle cx="537.7" cy="446.5" r="2.5" fill="url(#s60_6)"/>
<circle cx="537.9" cy="437" r="3.3" fill="url(#s78_7)"/>
<circle cx="534.7" cy="431.8" r="2.5" fill="url(#s84_7)"/>
<circle cx="540.8" cy="426.9" r="3" fill="url(#s90_8)"/>
<circle cx="539.5" cy="439.1" r="3.5" fill="url(#s66_8)"/>
<circle cx="541.7" cy="432.4" r="2.4" fill="url(#s78_6)"/>
<circle cx="539.6" cy="438" r="2.4" fill="url(#s78_6)"/>
<circle cx="541.1" cy="429.4" r="3.1" fill="url(#s72_7)"/>
<circle cx="544.6" cy="423.5" r="2.9" fill="url(#s96_8)"/>
<circle cx="543.3" cy="426" r="3" fill="url(#s84_8)"/>
<circle cx="544" cy="427.3" r="2.6" fill="url(#s90_6)"/>
<circle cx="543.2" cy="431.8" r="2.7" fill="url(#s90_7)"/>
<circle cx="543.1" cy="433.7" r="3.5" fill="url(#s90_7)"/>
<circle cx="549.2" cy="423.5" r="2.9" fill="url(#s90_8)"/>
<circle cx="546.5" cy="440.9" r="3.5" fill="url(#s72_7)"/>
<circle cx="546" cy="440.8" r="3.4" fill="url(#s72_7)"/>
<circle cx="549.4" cy="431.3" r="2.8" fill="url(#s84_7)"/>
<circle cx="548.4" cy="438.8" r="2.5" fill="url(#s60_8)"/>
<circle cx="551.8" cy="420.9" r="2.9" fill="url(#s90_8)"/>
<circle cx="550.9" cy="442.3" r="3.1" fill="url(#s78_7)"/>
<circle cx="552.3" cy="430.7" r="3.1" fill="url(#s84_8)"/>
<circle cx="551" cy="437" r="2.8" fill="url(#s72_7)"/>
<circle cx="553.4" cy="443.8" r="2.9" fill="url(#s66_6)"/>
<circle cx="554.3" cy="420.6" r="2.9" fill="url(#s96_8)"/>
<circle cx="556.6" cy="442.9" r="2.6" fill="url(#s72_8)"/>
<circle cx="554.5" cy="432.3" r="3.3" fill="url(#s78_7)"/>
<circle cx="553.7" cy="440.8" r="2.5" fill="url(#s72_8)"/>
<circle cx="556.5" cy="433.5" r="2.9" fill="url(#s78_7)"/>
<circle cx="559.3" cy="418.1" r="2.9" fill="url(#s102_8)"/>
<circle cx="557.9" cy="428.2" r="2.6" fill="url(#s90_8)"/>
<circle cx="557.6" cy="442.2" r="2.9" fill="url(#s72_8)"/>
<circle cx="556.7" cy="440.8" r="3.4" fill="url(#s66_7)"/>
<circle cx="559.1" cy="429.9" r="2.9" fill="url(#s78_8)"/>
<circle cx="562.6" cy="417.9" r="2.9" fill="url(#s90_8)"/>
<circle cx="561.8" cy="426.3" r="3.5" fill="url(#s96_6)"/>
<circle cx="562.8" cy="437.8" r="3" fill="url(#s72_8)"/>
<circle cx="560.9" cy="432.6" r="2.9" fill="url(#s84_7)"/>
<circle cx="560.7" cy="427.7" r="3.5" fill="url(#s78_7)"/>
<circle cx="566.3" cy="418.2" r="2.9" fill="url(#s102_8)"/>
<circle cx="567.7" cy="432.1" r="2.7" fill="url(#s72_6)"/>
<circle cx="566.9" cy="419.4" r="3.4" fill="url(#s84_7)"/>
<circle cx="567.1" cy="434.4" r="2.8" fill="url(#s84_8)"/>
<circle cx="567.6" cy="429.7" r="3.1" fill="url(#s84_7)"/>
<circle cx="570.5" cy="415.2" r="2.9" fill="url(#s96_8)"/>
<circle cx="568.1" cy="439.1" r="2.9" fill="url(#s60_7)"/>
<circle cx="570.5" cy="422" r="2.9" fill="url(#s84_6)"/>
<circle cx="571.5" cy="432.8" r="2.5" fill="url(#s72_6)"/>
<circle cx="571.1" cy="419.1" r="3.2" fill="url(#s78_8)"/>
<circle cx="574.5" cy="414.7" r="2.9" fill="url(#s102_8)"/>
<circle cx="572.1" cy="435.4" r="2.7" fill="url(#s72_8)"/>
<circle cx="574.7" cy="426.6" r="2.3" fill="url(#s72_6)"/>
<circle cx="572" cy="431.2" r="2.7" fill="url(#s90_6)"/>
<circle cx="574.6" cy="417.1" r="3.3" fill="url(#s96_8)"/>
<circle cx="577.4" cy="415.1" r="2.9" fill="url(#s102_8)"/>
<circle cx="574.8" cy="429.7" r="2.7" fill="url(#s78_7)"/>
<circle cx="576.8" cy="425.3" r="2.9" fill="url(#s90_6)"/>
<circle cx="575.2" cy="427.4" r="3.1" fill="url(#s78_8)"/>
<circle cx="577.2" cy="430" r="3.3" fill="url(#s72_7)"/>
<circle cx="579" cy="413.3" r="2.9" fill="url(#s102_8)"/>
<circle cx="581.7" cy="420.7" r="3.3" fill="url(#s96_7)"/>
<circle cx="578.8" cy="422.6" r="3" fill="url(#s84_8)"/>
<circle cx="580.5" cy="429.3" r="3.4" fill="url(#s72_8)"/>
<circle cx="581.6" cy="423.8" r="3" fill="url(#s90_8)"/>
<circle cx="581.3" cy="425.4" r="3.4" fill="url(#s84_8)"/>
<circle cx="584.6" cy="414.8" r="2.9" fill="url(#s102_8)"/>
<circle cx="584.6" cy="417.9" r="2.5" fill="url(#s84_6)"/>
<circle cx="585.6" cy="433.2" r="2.5" fill="url(#s66_7)"/>
<circle cx="582.9" cy="422" r="3.1" fill="url(#s84_8)"/>
<circle cx="584.4" cy="437.8" r="2.4" fill="url(#s72_6)"/>
<circle cx="586.8" cy="421.5" r="2.8" fill="url(#s96_8)"/>
<circle cx="586.2" cy="427.9" r="2.9" fill="url(#s90_7)"/>
<circle cx="586.6" cy="436.4" r="2.8" fill="url(#s60_6)"/>
<circle cx="587.1" cy="425.3" r="2.9" fill="url(#s96_6)"/>
<circle cx="590.6" cy="419.6" r="2.8" fill="url(#s96_8)"/>
<circle cx="589.2" cy="435.5" r="3.3" fill="url(#s72_8)"/>
<circle cx="592.4" cy="429.5" r="3.2" fill="url(#s72_7)"/>
<circle cx="590.3" cy="434.9" r="3.3" fill="url(#s60_6)"/>
<circle cx="595.7" cy="421.3" r="2.8" fill="url(#s90_8)"/>
<circle cx="595.2" cy="432.5" r="3.2" fill="url(#s78_7)"/>
<circle cx="593.4" cy="435.5" r="3.1" fill="url(#s60_8)"/>
<circle cx="594.9" cy="431.4" r="2.6" fill="url(#s84_7)"/>
<circle cx="598.5" cy="418.8" r="2.8" fill="url(#s102_8)"/>
<circle cx="598.9" cy="426.5" r="2.3" fill="url(#s78_6)"/>
<circle cx="596.2" cy="424.1" r="2.6" fill="url(#s84_7)"/>
<circle cx="599.4" cy="434.2" r="2.9" fill="url(#s72_8)"/>
<circle cx="600.5" cy="418.7" r="2.8" fill="url(#s108_8)"/>
<circle cx="602.7" cy="422.9" r="2.4" fill="url(#s78_8)"/>
<circle cx="602.3" cy="421.8" r="3.2" fill="url(#s84_8)"/>
<circle cx="601.3" cy="429.5" r="2.5" fill="url(#s72_8)"/>
<circle cx="606.1" cy="419" r="2.8" fill="url(#s108_8)"/>
<circle cx="603.7" cy="427.6" r="2.7" fill="url(#s90_7)"/>
<circle cx="603.7" cy="425.9" r="2.7" fill="url(#s78_8)"/>
<circle cx="605.8" cy="424" r="2.8" fill="url(#s96_8)"/>
<circle cx="609.1" cy="416.4" r="2.8" fill="url(#s96_8)"/>
<circle cx="608.4" cy="420.1" r="2.8" fill="url(#s90_8)"/>
<circle cx="609.8" cy="420.7" r="2.4" fill="url(#s90_8)"/>
<circle cx="610.2" cy="422" r="3.2" fill="url(#s78_7)"/>
<circle cx="611.9" cy="415.8" r="2.8" fill="url(#s102_8)"/>
<circle cx="612.9" cy="429.4" r="2.6" fill="url(#s90_8)"/>
<circle cx="613.5" cy="420.3" r="2.6" fill="url(#s90_8)"/>
<circle cx="610.8" cy="425.5" r="3.3" fill="url(#s96_8)"/>
<circle cx="616.8" cy="415.9" r="2.8" fill="url(#s108_8)"/>
<circle cx="617" cy="418.1" r="2.6" fill="url(#s102_7)"/>
<circle cx="617.7" cy="424.2" r="3" fill="url(#s78_6)"/>
<circle cx="614.6" cy="419" r="2.6" fill="url(#s102_8)"/>
<circle cx="618.8" cy="415.9" r="2.8" fill="url(#s108_8)"/>
<circle cx="618.8" cy="423.9" r="2.5" fill="url(#s84_7)"/>
<circle cx="619" cy="424.9" r="3.3" fill="url(#s90_8)"/>
<circle cx="619.7" cy="427.1" r="2.5" fill="url(#s84_8)"/>
<circle cx="622.7" cy="415.6" r="2.8" fill="url(#s102_8)"/>
<circle cx="623.6" cy="421.9" r="2.3" fill="url(#s102_8)"/>
<circle cx="620.9" cy="424.8" r="2.4" fill="url(#s78_7)"/>
<circle cx="621.5" cy="420.5" r="2.8" fill="url(#s84_7)"/>
<circle cx="626" cy="412.9" r="2.8" fill="url(#s102_8)"/>
<circle cx="626.8" cy="415.1" r="3" fill="url(#s84_8)"/>
<circle cx="627.1" cy="416.9" r="2.6" fill="url(#s96_7)"/>
<circle cx="625" cy="423.8" r="2.3" fill="url(#s90_8)"/>
<circle cx="629.1" cy="412.6" r="2.8" fill="url(#s102_8)"/>
<circle cx="631.5" cy="426" r="2.5" fill="url(#s78_8)"/>
<circle cx="629.4" cy="416.3" r="3" fill="url(#s102_7)"/>
<circle cx="630.4" cy="426.6" r="3.1" fill="url(#s72_8)"/>
<circle cx="631.7" cy="409.7" r="2.7" fill="url(#s102_8)"/>
<circle cx="634.3" cy="416.8" r="2.8" fill="url(#s84_8)"/>
<circle cx="631.1" cy="416" r="2.7" fill="url(#s102_8)"/>
<circle cx="632.2" cy="426.3" r="2.5" fill="url(#s84_7)"/>
<circle cx="635.9" cy="409.6" r="2.7" fill="url(#s102_8)"/>
<circle cx="637.7" cy="425.3" r="3.3" fill="url(#s84_8)"/>
<circle cx="636.8" cy="412.1" r="3" fill="url(#s102_8)"/>
<circle cx="637.5" cy="421.1" r="2.5" fill="url(#s84_7)"/>
<circle cx="636.9" cy="418.9" r="2.4" fill="url(#s96_6)"/>
<circle cx="639.8" cy="408.8" r="2.7" fill="url(#s102_8)"/>
<circle cx="639.1" cy="424.9" r="2.9" fill="url(#s84_7)"/>
<circle cx="640.8" cy="422.1" r="2.9" fill="url(#s84_7)"/>
<circle cx="638.6" cy="414.9" r="3.2" fill="url(#s96_7)"/>
<circle cx="639.1" cy="417.2" r="3.2" fill="url(#s84_7)"/>
<circle cx="643.5" cy="405.4" r="2.7" fill="url(#s108_8)"/>
<circle cx="641.9" cy="410.4" r="2.3" fill="url(#s102_7)"/>
<circle cx="643.9" cy="423.9" r="2.7" fill="url(#s78_7)"/>
<circle cx="645" cy="424" r="2.6" fill="url(#s84_6)"/>
<circle cx="644.4" cy="412.6" r="3" fill="url(#s90_7)"/>
<circle cx="647.9" cy="404" r="2.7" fill="url(#s114_8)"/>
<circle cx="648.3" cy="413.4" r="2.5" fill="url(#s84_7)"/>
<circle cx="646.1" cy="414.6" r="2.7" fill="url(#s96_8)"/>
<circle cx="646.5" cy="412.2" r="2.5" fill="url(#s96_8)"/>
<circle cx="644.9" cy="417.8" r="2.6" fill="url(#s96_8)"/>
<circle cx="651" cy="404.7" r="2.7" fill="url(#s108_8)"/>
<circle cx="651.6" cy="412.9" r="2.8" fill="url(#s84_6)"/>
<circle cx="649.1" cy="410.9" r="2.4" fill="url(#s90_8)"/>
<circle cx="651.4" cy="411" r="2.5" fill="url(#s96_8)"/>
<circle cx="650.8" cy="413.8" r="2.4" fill="url(#s84_8)"/>
<circle cx="654.9" cy="402.6" r="2.7" fill="url(#s108_8)"/>
<circle cx="652" cy="405.9" r="2.3" fill="url(#s96_8)"/>
<circle cx="654" cy="423.5" r="2.7" fill="url(#s90_7)"/>
<circle cx="652.4" cy="422.9" r="3" fill="url(#s72_8)"/>
<circle cx="654.6" cy="406.7" r="2.4" fill="url(#s96_7)"/>
<circle cx="655.4" cy="402.6" r="2.7" fill="url(#s108_8)"/>
<circle cx="658.8" cy="408.3" r="2.9" fill="url(#s96_8)"/>
<circle cx="657.3" cy="420.1" r="2.3" fill="url(#s90_7)"/>
<circle cx="657.8" cy="406.3" r="2.5" fill="url(#s108_6)"/>
<circle cx="655" cy="412.6" r="3.2" fill="url(#s102_8)"/>
<circle cx="661.2" cy="401.6" r="2.7" fill="url(#s102_8)"/>
<circle cx="661.6" cy="410.3" r="2.4" fill="url(#s102_7)"/>
<circle cx="660.9" cy="404.8" r="2.6" fill="url(#s108_6)"/>
<circle cx="661.1" cy="422.9" r="2.9" fill="url(#s66_8)"/>
<circle cx="660.2" cy="405.8" r="3.2" fill="url(#s102_7)"/>
<circle cx="662.9" cy="399.4" r="2.7" fill="url(#s114_8)"/>
<circle cx="662.1" cy="407.8" r="3.2" fill="url(#s90_7)"/>
<circle cx="664.1" cy="407.3" r="2.9" fill="url(#s90_7)"/>
<circle cx="665.4" cy="405" r="2.1" fill="url(#s96_8)"/>
<circle cx="665.5" cy="416.6" r="2.7" fill="url(#s90_8)"/>
<circle cx="668" cy="400.5" r="2.7" fill="url(#s102_8)"/>
<circle cx="666.9" cy="415.5" r="2.3" fill="url(#s90_8)"/>
<circle cx="667" cy="409.6" r="3.1" fill="url(#s102_7)"/>
<circle cx="666.8" cy="406.8" r="2.8" fill="url(#s90_8)"/>
<circle cx="667.1" cy="403.3" r="2.3" fill="url(#s108_8)"/>
<circle cx="669.4" cy="397.5" r="2.7" fill="url(#s108_8)"/>
<circle cx="670" cy="406.8" r="2.2" fill="url(#s90_8)"/>
<circle cx="671.1" cy="410.3" r="2.9" fill="url(#s102_8)"/>
<circle cx="669.1" cy="406.5" r="2.7" fill="url(#s102_8)"/>
<circle cx="668.5" cy="409.8" r="2.7" fill="url(#s96_7)"/>
<circle cx="674.5" cy="399.4" r="2.7" fill="url(#s102_8)"/>
<circle cx="674.5" cy="403.7" r="2.9" fill="url(#s90_8)"/>
<circle cx="673.9" cy="415.3" r="3.1" fill="url(#s84_6)"/>
<circle cx="673.6" cy="412.8" r="2.9" fill="url(#s90_8)"/>
<circle cx="674.1" cy="400.6" r="2.2" fill="url(#s96_7)"/>
<circle cx="677.1" cy="396.7" r="2.7" fill="url(#s108_8)"/>
<circle cx="678.8" cy="407.2" r="2.2" fill="url(#s96_6)"/>
<circle cx="676.9" cy="405.1" r="2.3" fill="url(#s90_6)"/>
<circle cx="675" cy="406" r="3" fill="url(#s90_7)"/>
<circle cx="678.6" cy="416.1" r="3.1" fill="url(#s90_7)"/>
<circle cx="681.3" cy="395.3" r="2.6" fill="url(#s108_8)"/>
<circle cx="680.1" cy="411.5" r="2.5" fill="url(#s96_7)"/>
<circle cx="681.4" cy="401.3" r="2.5" fill="url(#s108_7)"/>
<circle cx="681.1" cy="409.4" r="2.6" fill="url(#s102_7)"/>
<circle cx="679.1" cy="416.9" r="2.9" fill="url(#s78_8)"/>
<circle cx="684.1" cy="394.8" r="2.6" fill="url(#s120_8)"/>
<circle cx="682" cy="415.1" r="2.7" fill="url(#s84_8)"/>
<circle cx="684.4" cy="404.6" r="3.2" fill="url(#s96_8)"/>
<circle cx="683.9" cy="401" r="2.5" fill="url(#s96_8)"/>
<circle cx="684.5" cy="408.7" r="2.7" fill="url(#s102_6)"/>
<circle cx="686.3" cy="394" r="2.6" fill="url(#s108_8)"/>
<circle cx="687.4" cy="403.5" r="2.5" fill="url(#s102_6)"/>
<circle cx="685.7" cy="404.2" r="3" fill="url(#s96_8)"/>
<circle cx="686.9" cy="407.7" r="2.4" fill="url(#s102_8)"/>
<circle cx="687.8" cy="409" r="2.4" fill="url(#s90_8)"/>
<circle cx="689.3" cy="392.9" r="2.6" fill="url(#s114_8)"/>
<circle cx="691" cy="403" r="2.3" fill="url(#s108_7)"/>
<circle cx="689.7" cy="402.2" r="2.9" fill="url(#s96_6)"/>
<circle cx="689.1" cy="402.7" r="3.1" fill="url(#s108_8)"/>
<circle cx="692.1" cy="400.8" r="3" fill="url(#s96_7)"/>
<circle cx="694.6" cy="391" r="2.6" fill="url(#s114_8)"/>
<circle cx="692.2" cy="402.2" r="2.3" fill="url(#s102_7)"/>
<circle cx="692.5" cy="412.9" r="2.8" fill="url(#s90_8)"/>
<circle cx="691.8" cy="396.7" r="2.2" fill="url(#s114_7)"/>
<circle cx="692.4" cy="404.1" r="2.4" fill="url(#s90_7)"/>
<circle cx="697.5" cy="390.7" r="2.6" fill="url(#s114_8)"/>
<circle cx="696.9" cy="392.8" r="2.8" fill="url(#s114_8)"/>
<circle cx="695.7" cy="392.6" r="2.6" fill="url(#s96_8)"/>
<circle cx="696.6" cy="409.4" r="2.7" fill="url(#s78_7)"/>
<circle cx="695.9" cy="401" r="3.1" fill="url(#s108_6)"/>
<circle cx="699.6" cy="389.9" r="2.6" fill="url(#s120_8)"/>
<circle cx="700.9" cy="401.9" r="3.1" fill="url(#s102_8)"/>
<circle cx="699.1" cy="403.7" r="2.4" fill="url(#s96_6)"/>
<circle cx="698.3" cy="395.3" r="2.5" fill="url(#s108_8)"/>
<circle cx="701.7" cy="394.4" r="2.3" fill="url(#s102_7)"/>
<circle cx="704.3" cy="389.3" r="2.6" fill="url(#s114_8)"/>
<circle cx="704.8" cy="395.5" r="2.6" fill="url(#s108_6)"/>
<circle cx="703.1" cy="394.4" r="2.6" fill="url(#s102_8)"/>
<circle cx="701.4" cy="407.8" r="2.9" fill="url(#s84_6)"/>
<circle cx="701.3" cy="402.8" r="2.1" fill="url(#s102_7)"/>
<circle cx="705.3" cy="386.1" r="2.6" fill="url(#s120_8)"/>
<circle cx="707.2" cy="402.4" r="2.9" fill="url(#s84_8)"/>
<circle cx="705.6" cy="401.6" r="2.2" fill="url(#s96_8)"/>
<circle cx="704.9" cy="391.6" r="2.5" fill="url(#s102_8)"/>
<circle cx="705.9" cy="394.9" r="2.9" fill="url(#s96_8)"/>
<circle cx="709.1" cy="386.9" r="2.6" fill="url(#s120_8)"/>
<circle cx="709.8" cy="406.1" r="2.9" fill="url(#s90_8)"/>
<circle cx="710.1" cy="405" r="2.2" fill="url(#s90_7)"/>
<circle cx="709.8" cy="393.8" r="2.2" fill="url(#s102_8)"/>
<circle cx="708.9" cy="403.6" r="2.2" fill="url(#s102_7)"/>
<circle cx="713.5" cy="384.1" r="2.6" fill="url(#s114_8)"/>
<circle cx="712.7" cy="389.1" r="2.9" fill="url(#s114_7)"/>
<circle cx="711.3" cy="392.3" r="2.4" fill="url(#s108_6)"/>
<circle cx="712.5" cy="393.3" r="2.9" fill="url(#s108_8)"/>
<circle cx="712" cy="397.5" r="3" fill="url(#s96_7)"/>
<circle cx="716.5" cy="383.9" r="2.6" fill="url(#s114_8)"/>
<circle cx="717.8" cy="393.8" r="2.3" fill="url(#s90_8)"/>
<circle cx="716.2" cy="388.6" r="2.2" fill="url(#s114_7)"/>
<circle cx="716.8" cy="387" r="2.7" fill="url(#s102_6)"/>
<circle cx="714.1" cy="404.2" r="2.3" fill="url(#s78_7)"/>
<circle cx="718.9" cy="383.3" r="2.5" fill="url(#s108_8)"/>
<circle cx="720.3" cy="401.5" r="2.6" fill="url(#s96_8)"/>
<circle cx="720.6" cy="400.6" r="2.3" fill="url(#s78_7)"/>
<circle cx="719.2" cy="390" r="2.8" fill="url(#s108_7)"/>
<circle cx="719.8" cy="392.8" r="2.2" fill="url(#s96_8)"/>
<circle cx="723.4" cy="381.1" r="2.5" fill="url(#s120_8)"/>
<circle cx="723.3" cy="382.7" r="2.5" fill="url(#s120_8)"/>
<circle cx="723.3" cy="385.7" r="2.9" fill="url(#s102_7)"/>
<circle cx="722.4" cy="394.4" r="3" fill="url(#s90_8)"/>
<circle cx="721.7" cy="384.1" r="2.3" fill="url(#s108_8)"/>
<circle cx="726.1" cy="379.8" r="2.5" fill="url(#s114_8)"/>
<circle cx="725.9" cy="399.3" r="2.6" fill="url(#s102_8)"/>
<circle cx="727.5" cy="388.8" r="2.8" fill="url(#s114_8)"/>
<circle cx="725" cy="383" r="2.1" fill="url(#s102_8)"/>
<circle cx="724.5" cy="400.9" r="2.3" fill="url(#s90_7)"/>
<circle cx="728" cy="377.5" r="2.5" fill="url(#s114_8)"/>
<circle cx="728" cy="381.6" r="2.7" fill="url(#s108_8)"/>
<circle cx="729.8" cy="388.7" r="2.6" fill="url(#s108_7)"/>
<circle cx="727.9" cy="390.5" r="2.1" fill="url(#s102_8)"/>
<circle cx="729.3" cy="400.6" r="2.5" fill="url(#s84_6)"/>
<circle cx="733" cy="378.8" r="2.5" fill="url(#s114_8)"/>
<circle cx="732.9" cy="383.1" r="3" fill="url(#s102_6)"/>
<circle cx="733.6" cy="386.4" r="2.4" fill="url(#s108_6)"/>
<circle cx="731.3" cy="399.7" r="2.7" fill="url(#s96_7)"/>
<circle cx="730" cy="382.4" r="2.9" fill="url(#s114_6)"/>
<circle cx="735" cy="378.3" r="2.5" fill="url(#s114_8)"/>
<circle cx="733.1" cy="383.1" r="2.2" fill="url(#s108_8)"/>
<circle cx="734.1" cy="390" r="2" fill="url(#s114_8)"/>
<circle cx="734.5" cy="384.1" r="2.6" fill="url(#s108_8)"/>
<circle cx="736.4" cy="397.4" r="2" fill="url(#s84_8)"/>
<circle cx="736.8" cy="375.2" r="2.5" fill="url(#s108_8)"/>
<circle cx="738.4" cy="378.4" r="2.5" fill="url(#s102_8)"/>
<circle cx="736.5" cy="379.4" r="2.7" fill="url(#s120_7)"/>
<circle cx="739.2" cy="379.4" r="2.8" fill="url(#s120_8)"/>
<circle cx="736.9" cy="387.2" r="2.7" fill="url(#s96_7)"/>
<circle cx="742.6" cy="374.2" r="2.5" fill="url(#s120_8)"/>
<circle cx="740.3" cy="386.8" r="2.6" fill="url(#s108_8)"/>
<circle cx="742.7" cy="395.1" r="2" fill="url(#s84_8)"/>
<circle cx="742.5" cy="395.3" r="2.8" fill="url(#s84_7)"/>
<circle cx="741.7" cy="380.3" r="2.4" fill="url(#s108_6)"/>
<circle cx="745" cy="374.7" r="2.5" fill="url(#s114_8)"/>
<circle cx="744.8" cy="378.1" r="2.7" fill="url(#s108_7)"/>
<circle cx="742.5" cy="391.2" r="2.8" fill="url(#s108_7)"/>
<circle cx="743.4" cy="375.6" r="2.6" fill="url(#s108_8)"/>
<circle cx="745.2" cy="379.9" r="2.1" fill="url(#s102_7)"/>
<circle cx="746.3" cy="372.9" r="2.5" fill="url(#s108_8)"/>
<circle cx="749.2" cy="384" r="2.8" fill="url(#s114_8)"/>
<circle cx="748.7" cy="390" r="2.2" fill="url(#s96_6)"/>
<circle cx="747.8" cy="389.6" r="2.5" fill="url(#s90_6)"/>
<circle cx="747" cy="391.1" r="2.1" fill="url(#s102_8)"/>
<circle cx="751.1" cy="371.4" r="2.5" fill="url(#s126_8)"/>
<circle cx="752" cy="381.8" r="2.5" fill="url(#s96_8)"/>
<circle cx="751" cy="379.7" r="2.8" fill="url(#s102_7)"/>
<circle cx="751.1" cy="380.6" r="2.7" fill="url(#s102_7)"/>
<circle cx="752" cy="383.3" r="2.5" fill="url(#s114_8)"/>
<circle cx="753.5" cy="371.1" r="2.4" fill="url(#s120_8)"/>
<circle cx="755.6" cy="376.8" r="2" fill="url(#s108_7)"/>
<circle cx="753.5" cy="374.8" r="2.9" fill="url(#s102_8)"/>
<circle cx="751.8" cy="372.1" r="2.4" fill="url(#s102_6)"/>
<circle cx="752.2" cy="394.8" r="2.7" fill="url(#s96_7)"/>
<circle cx="756.5" cy="371" r="2.4" fill="url(#s114_8)"/>
<circle cx="755.8" cy="385.5" r="2.7" fill="url(#s102_6)"/>
<circle cx="757.7" cy="393" r="2.8" fill="url(#s102_6)"/>
<circle cx="757.2" cy="371.9" r="2.7" fill="url(#s108_6)"/>
<circle cx="758.6" cy="371.7" r="2.8" fill="url(#s120_8)"/>
<circle cx="759.3" cy="369.6" r="2.4" fill="url(#s108_8)"/>
<circle cx="759.6" cy="385" r="2.5" fill="url(#s102_7)"/>
<circle cx="760.3" cy="389.6" r="2.2" fill="url(#s96_7)"/>
<circle cx="759.6" cy="388.1" r="2.2" fill="url(#s102_7)"/>
<circle cx="758.1" cy="370.5" r="2.4" fill="url(#s120_6)"/>
<circle cx="762.9" cy="368.6" r="2.4" fill="url(#s120_8)"/>
<circle cx="761.2" cy="380.4" r="2.8" fill="url(#s114_7)"/>
<circle cx="764.2" cy="369.4" r="2.7" fill="url(#s102_8)"/>
<circle cx="761.7" cy="391.7" r="2.6" fill="url(#s90_8)"/>
<circle cx="762.5" cy="369.1" r="2.7" fill="url(#s126_8)"/>
<circle cx="766.1" cy="368" r="2.4" fill="url(#s120_8)"/>
<circle cx="764.2" cy="390.2" r="2.7" fill="url(#s102_7)"/>
<circle cx="765.4" cy="372.2" r="2.8" fill="url(#s120_7)"/>
<circle cx="767.8" cy="378.5" r="2.4" fill="url(#s96_7)"/>
<circle cx="765.2" cy="380.5" r="2.3" fill="url(#s108_8)"/>
<circle cx="769.5" cy="366.7" r="2.4" fill="url(#s114_8)"/>
<circle cx="769.1" cy="387.5" r="2.3" fill="url(#s102_8)"/>
<circle cx="767.3" cy="376.3" r="2.4" fill="url(#s102_8)"/>
<circle cx="769.8" cy="368.2" r="2.5" fill="url(#s120_7)"/>
<circle cx="770.4" cy="367.9" r="2.4" fill="url(#s108_8)"/>
<circle cx="772.1" cy="364.2" r="2.4" fill="url(#s114_8)"/>
<circle cx="772.4" cy="369.7" r="2.8" fill="url(#s120_7)"/>
<circle cx="771.7" cy="377" r="2.7" fill="url(#s120_7)"/>
<circle cx="773.5" cy="379.2" r="2.5" fill="url(#s102_8)"/>
<circle cx="771.3" cy="380.3" r="1.9" fill="url(#s108_8)"/>
<circle cx="775.7" cy="362.4" r="2.4" fill="url(#s108_8)"/>
<circle cx="773.4" cy="370.5" r="1.9" fill="url(#s114_8)"/>
<circle cx="774.3" cy="369" r="2.7" fill="url(#s114_8)"/>
<circle cx="773.8" cy="365.1" r="2.2" fill="url(#s108_8)"/>
<circle cx="773.4" cy="371.5" r="2.4" fill="url(#s108_7)"/>
<circle cx="778.6" cy="362.3" r="2.4" fill="url(#s108_8)"/>
<circle cx="777.7" cy="369.7" r="2.1" fill="url(#s120_8)"/>
<circle cx="777.8" cy="386.1" r="2.4" fill="url(#s84_6)"/>
<circle cx="778" cy="364" r="2.1" fill="url(#s108_8)"/>
<circle cx="776.1" cy="379.4" r="1.9" fill="url(#s102_8)"/>
<circle cx="781.9" cy="362.4" r="2.4" fill="url(#s108_8)"/>
<circle cx="780.2" cy="382.2" r="2.1" fill="url(#s90_8)"/>
<circle cx="780.4" cy="369.7" r="2" fill="url(#s108_8)"/>
<circle cx="779.2" cy="368.6" r="2.7" fill="url(#s108_7)"/>
<circle cx="779.4" cy="366.8" r="2.5" fill="url(#s120_7)"/>
<circle cx="781.8" cy="376" r="2.1" fill="url(#s114_8)"/>
<circle cx="785.1" cy="359.1" r="2.4" fill="url(#s114_8)"/>
<circle cx="784.6" cy="371.6" r="2.2" fill="url(#s108_6)"/>
<circle cx="785.5" cy="386.7" r="1.9" fill="url(#s78_6)"/>
<circle cx="784.8" cy="376.3" r="2" fill="url(#s114_7)"/>
<circle cx="783.9" cy="367.7" r="2.2" fill="url(#s114_8)"/>
<circle cx="785.8" cy="376.1" r="2.5" fill="url(#s108_7)"/>
<circle cx="787.5" cy="358.9" r="2.4" fill="url(#s120_8)"/>
<circle cx="788.6" cy="377" r="2.6" fill="url(#s114_7)"/>
<circle cx="788.4" cy="364.6" r="2.3" fill="url(#s114_8)"/>
<circle cx="786.7" cy="366.1" r="2.3" fill="url(#s120_7)"/>
<circle cx="788.7" cy="379.3" r="2.6" fill="url(#s114_7)"/>
<circle cx="787.5" cy="378.9" r="1.9" fill="url(#s108_8)"/>
<circle cx="789.2" cy="356.2" r="2.3" fill="url(#s114_8)"/>
<circle cx="788.1" cy="373.3" r="2.3" fill="url(#s102_6)"/>
<circle cx="791.6" cy="382.6" r="2.3" fill="url(#s96_7)"/>
<circle cx="788.2" cy="373.2" r="1.9" fill="url(#s102_8)"/>
<circle cx="788.3" cy="361.4" r="2.6" fill="url(#s114_7)"/>
<circle cx="790.9" cy="378.9" r="1.9" fill="url(#s102_7)"/>
<circle cx="794" cy="357.7" r="2.3" fill="url(#s114_8)"/>
<circle cx="792.9" cy="366.9" r="2.4" fill="url(#s102_8)"/>
<circle cx="793" cy="384" r="2.6" fill="url(#s96_7)"/>
<circle cx="791.2" cy="376.6" r="2.8" fill="url(#s108_8)"/>
<circle cx="792.1" cy="359.8" r="2.5" fill="url(#s120_7)"/>
<circle cx="791.4" cy="368.1" r="2.4" fill="url(#s114_7)"/>
<circle cx="794.7" cy="354.6" r="2.3" fill="url(#s114_8)"/>
<circle cx="794.4" cy="383.7" r="2.6" fill="url(#s84_6)"/>
<circle cx="796.3" cy="383.9" r="2.1" fill="url(#s90_6)"/>
<circle cx="795" cy="360" r="2.6" fill="url(#s126_8)"/>
<circle cx="795" cy="358.9" r="2.7" fill="url(#s126_8)"/>
<circle cx="796.3" cy="360.2" r="2.1" fill="url(#s120_8)"/>
<circle cx="799.5" cy="353.1" r="2.3" fill="url(#s114_8)"/>
<circle cx="797.5" cy="368.6" r="2.7" fill="url(#s102_7)"/>
<circle cx="799.9" cy="369.8" r="2.7" fill="url(#s114_8)"/>
<circle cx="799" cy="379.3" r="2.7" fill="url(#s90_7)"/>
<circle cx="800.3" cy="372.7" r="2" fill="url(#s114_6)"/>
<circle cx="798.6" cy="359.5" r="2.1" fill="url(#s120_6)"/>
<circle cx="802.6" cy="354.5" r="2.3" fill="url(#s108_8)"/>
<circle cx="800.4" cy="365.4" r="2.5" fill="url(#s108_6)"/>
<circle cx="803.2" cy="358.4" r="2.7" fill="url(#s114_8)"/>
<circle cx="800.6" cy="359.2" r="2.2" fill="url(#s114_7)"/>
<circle cx="803.3" cy="359.7" r="1.9" fill="url(#s108_8)"/>
<circle cx="799.7" cy="368" r="2.8" fill="url(#s102_7)"/>
<circle cx="803.4" cy="353.1" r="2.3" fill="url(#s114_8)"/>
<circle cx="802.5" cy="354.8" r="2.2" fill="url(#s108_8)"/>
<circle cx="802.4" cy="363.4" r="2.3" fill="url(#s120_8)"/>
<circle cx="805.2" cy="367.7" r="2.6" fill="url(#s108_6)"/>
<circle cx="802.7" cy="376.7" r="1.9" fill="url(#s102_6)"/>
<circle cx="804.5" cy="360.1" r="1.9" fill="url(#s114_7)"/>
<circle cx="808.2" cy="349.9" r="2.3" fill="url(#s120_8)"/>
<circle cx="809.1" cy="373.7" r="2.4" fill="url(#s102_6)"/>
<circle cx="805.1" cy="358.5" r="2" fill="url(#s120_6)"/>
<circle cx="805.8" cy="379.1" r="2.4" fill="url(#s84_7)"/>
<circle cx="808.3" cy="376.6" r="2.7" fill="url(#s90_8)"/>
<circle cx="805.8" cy="379.8" r="2" fill="url(#s96_8)"/>
<circle cx="810.8" cy="350.1" r="2.3" fill="url(#s108_8)"/>
<circle cx="808.3" cy="357.7" r="1.9" fill="url(#s120_7)"/>
<circle cx="809.6" cy="371.8" r="2.3" fill="url(#s102_6)"/>
<circle cx="810.3" cy="367.6" r="2.6" fill="url(#s102_7)"/>
<circle cx="809.5" cy="370.3" r="2.4" fill="url(#s102_8)"/>
<circle cx="809.3" cy="356.5" r="2.3" fill="url(#s120_7)"/>
<circle cx="811.4" cy="349" r="2.3" fill="url(#s114_8)"/>
<circle cx="812.7" cy="367" r="2.4" fill="url(#s114_7)"/>
<circle cx="811" cy="353.7" r="2.6" fill="url(#s108_8)"/>
<circle cx="812.3" cy="371.6" r="2.1" fill="url(#s102_7)"/>
<circle cx="811.8" cy="375.4" r="1.9" fill="url(#s102_8)"/>
<circle cx="813.6" cy="351.2" r="2.1" fill="url(#s126_8)"/>
<circle cx="815" cy="347.4" r="2.3" fill="url(#s114_8)"/>
<circle cx="815.5" cy="355.8" r="2.5" fill="url(#s108_6)"/>
<circle cx="813.8" cy="355.5" r="2.4" fill="url(#s108_8)"/>
<circle cx="816.5" cy="363" r="2.2" fill="url(#s108_6)"/>
<circle cx="815.6" cy="363.7" r="2.7" fill="url(#s102_8)"/>
<circle cx="817.5" cy="360.3" r="1.9" fill="url(#s108_6)"/>
<circle cx="818.6" cy="346.9" r="2.3" fill="url(#s126_8)"/>
<circle cx="816.7" cy="369.4" r="2.4" fill="url(#s90_8)"/>
<circle cx="816.7" cy="351.3" r="2.2" fill="url(#s120_8)"/>
<circle cx="816.7" cy="371.4" r="1.9" fill="url(#s102_6)"/>
<circle cx="819.4" cy="363.5" r="2.6" fill="url(#s102_6)"/>
<circle cx="818.2" cy="355.9" r="2.4" fill="url(#s126_7)"/>
<circle cx="822.5" cy="346.5" r="2.3" fill="url(#s108_8)"/>
<circle cx="823.2" cy="349.1" r="2.4" fill="url(#s120_6)"/>
<circle cx="822.4" cy="364.1" r="2.6" fill="url(#s102_8)"/>
<circle cx="822.8" cy="366.9" r="2" fill="url(#s114_7)"/>
<circle cx="822.8" cy="368.5" r="2.3" fill="url(#s90_7)"/>
<circle cx="822.2" cy="360.9" r="2" fill="url(#s102_8)"/>
<circle cx="824.9" cy="343.6" r="2.2" fill="url(#s120_8)"/>
<circle cx="823.1" cy="353.3" r="2.3" fill="url(#s108_8)"/>
<circle cx="822.8" cy="354.7" r="2.1" fill="url(#s114_7)"/>
<circle cx="823.3" cy="364.5" r="2.7" fill="url(#s96_7)"/>
<circle cx="822.6" cy="370.5" r="1.9" fill="url(#s102_7)"/>
<circle cx="822.4" cy="370.4" r="2.4" fill="url(#s102_8)"/>
<circle cx="826.8" cy="344.3" r="2.2" fill="url(#s114_8)"/>
<circle cx="826.9" cy="361.4" r="2.4" fill="url(#s96_7)"/>
<circle cx="827" cy="369" r="2.4" fill="url(#s102_8)"/>
<circle cx="827.6" cy="348.5" r="2.4" fill="url(#s126_8)"/>
<circle cx="828.6" cy="346" r="2.4" fill="url(#s126_7)"/>
<circle cx="826.8" cy="358.7" r="1.9" fill="url(#s102_7)"/>
<circle cx="830.1" cy="342.9" r="2.2" fill="url(#s114_8)"/>
<circle cx="830.8" cy="367.5" r="2.5" fill="url(#s102_7)"/>
<circle cx="830" cy="344" r="2.5" fill="url(#s114_8)"/>
<circle cx="830" cy="363.3" r="2.6" fill="url(#s102_6)"/>
<circle cx="828.4" cy="345.2" r="1.8" fill="url(#s108_7)"/>
<circle cx="828" cy="367.7" r="1.8" fill="url(#s102_8)"/>
<circle cx="833.8" cy="342.3" r="2.2" fill="url(#s114_8)"/>
<circle cx="832" cy="357.3" r="1.8" fill="url(#s102_8)"/>
<circle cx="831.6" cy="345.9" r="2.6" fill="url(#s114_6)"/>
<circle cx="831.6" cy="363.3" r="2.4" fill="url(#s108_7)"/>
<circle cx="833" cy="353.7" r="2.2" fill="url(#s108_7)"/>
<circle cx="830.6" cy="368.4" r="2.5" fill="url(#s90_8)"/>
<circle cx="834.1" cy="338.3" r="2.2" fill="url(#s126_8)"/>
<circle cx="837.3" cy="351.8" r="1.9" fill="url(#s114_7)"/>
<circle cx="836.3" cy="342.9" r="1.9" fill="url(#s120_7)"/>
<circle cx="837.2" cy="365.4" r="2.4" fill="url(#s108_8)"/>
<circle cx="837.3" cy="354.9" r="2.5" fill="url(#s120_8)"/>
<circle cx="834.7" cy="346.4" r="2.5" fill="url(#s114_7)"/>
<circle cx="837.5" cy="339.8" r="2.2" fill="url(#s108_8)"/>
<circle cx="836.5" cy="341.7" r="2.6" fill="url(#s114_7)"/>
<circle cx="836.4" cy="369.5" r="2" fill="url(#s90_8)"/>
<circle cx="838.4" cy="356.2" r="2.3" fill="url(#s114_8)"/>
<circle cx="838.3" cy="369.7" r="1.8" fill="url(#s84_8)"/>
<circle cx="839.9" cy="352.8" r="1.9" fill="url(#s102_6)"/>
<circle cx="842.3" cy="337.3" r="2.2" fill="url(#s126_8)"/>
<circle cx="840.8" cy="353.8" r="2.4" fill="url(#s102_7)"/>
<circle cx="840" cy="350.8" r="2.6" fill="url(#s114_7)"/>
<circle cx="842.6" cy="359.9" r="1.9" fill="url(#s108_7)"/>
<circle cx="840.4" cy="339.9" r="2.6" fill="url(#s120_7)"/>
<circle cx="841.1" cy="366.4" r="1.9" fill="url(#s90_8)"/>
<circle cx="843.4" cy="336.8" r="2.2" fill="url(#s114_8)"/>
<circle cx="844.5" cy="351.5" r="2.3" fill="url(#s114_8)"/>
<circle cx="843.6" cy="350.5" r="2.1" fill="url(#s108_8)"/>
<circle cx="843" cy="343.2" r="2.6" fill="url(#s120_7)"/>
<circle cx="843.5" cy="361.9" r="2.4" fill="url(#s108_8)"/>
<circle cx="842" cy="360.6" r="2.2" fill="url(#s90_8)"/>
<circle cx="847.2" cy="335.3" r="2.2" fill="url(#s120_8)"/>
<circle cx="848.1" cy="362.6" r="1.9" fill="url(#s96_6)"/>
<circle cx="847.9" cy="339.4" r="2.1" fill="url(#s126_7)"/>
<circle cx="844.5" cy="367" r="2.5" fill="url(#s102_6)"/>
<circle cx="848.2" cy="357.6" r="2.6" fill="url(#s102_8)"/>
<circle cx="844.5" cy="365.5" r="1.9" fill="url(#s102_7)"/>
<circle cx="850.3" cy="334.5" r="2.2" fill="url(#s120_8)"/>
<circle cx="847.7" cy="349.1" r="2.2" fill="url(#s108_7)"/>
<circle cx="848.8" cy="341.9" r="2.2" fill="url(#s114_7)"/>
<circle cx="847.3" cy="361" r="1.8" fill="url(#s102_7)"/>
<circle cx="847.5" cy="352.7" r="2.2" fill="url(#s102_8)"/>
<circle cx="848.6" cy="358.9" r="2.2" fill="url(#s102_7)"/>
<circle cx="852.8" cy="337.4" r="2.2" fill="url(#s120_8)"/>
<circle cx="852.7" cy="340.5" r="2.2" fill="url(#s108_6)"/>
<circle cx="853.8" cy="353" r="2.3" fill="url(#s108_6)"/>
<circle cx="850" cy="350.6" r="2.5" fill="url(#s114_8)"/>
<circle cx="853.6" cy="362.3" r="2.4" fill="url(#s90_8)"/>
<circle cx="852.5" cy="363.7" r="2.2" fill="url(#s84_7)"/>
<circle cx="855.3" cy="345.7" r="2.2" fill="url(#s120_8)"/>
<circle cx="853.2" cy="348.5" r="2.3" fill="url(#s108_8)"/>
<circle cx="854.3" cy="350.1" r="1.9" fill="url(#s120_8)"/>
<circle cx="856" cy="364" r="1.8" fill="url(#s96_8)"/>
<circle cx="856" cy="349.3" r="2.2" fill="url(#s126_8)"/>
<circle cx="855.4" cy="358.9" r="2.1" fill="url(#s108_8)"/>
<circle cx="858.1" cy="360.2" r="2.5" fill="url(#s108_7)"/>
<circle cx="859.9" cy="346.2" r="2.1" fill="url(#s114_8)"/>
<circle cx="860.2" cy="356" r="1.9" fill="url(#s114_8)"/>
<circle cx="861.8" cy="361.7" r="2" fill="url(#s108_6)"/>
<circle cx="861.2" cy="358.5" r="2.1" fill="url(#s114_8)"/>
<circle cx="862" cy="342" r="2.1" fill="url(#s126_8)"/>
<circle cx="864.6" cy="355.2" r="1.9" fill="url(#s102_8)"/>
<circle cx="861" cy="345.5" r="2.5" fill="url(#s126_7)"/>
<circle cx="863.7" cy="345.4" r="2.5" fill="url(#s114_8)"/>
<circle cx="863.9" cy="339.2" r="2.1" fill="url(#s120_8)"/>
<circle cx="864.1" cy="343.4" r="1.9" fill="url(#s114_6)"/>
<circle cx="865.8" cy="356.8" r="1.8" fill="url(#s102_8)"/>
<circle cx="863.7" cy="348.3" r="2.2" fill="url(#s102_8)"/>
<circle cx="866.6" cy="344.9" r="2.1" fill="url(#s120_8)"/>
<circle cx="867" cy="339.5" r="2.1" fill="url(#s120_8)"/>
<circle cx="867.2" cy="355.2" r="2.4" fill="url(#s102_8)"/>
<circle cx="869.5" cy="341.8" r="2.1" fill="url(#s114_8)"/>
<circle cx="868" cy="348.3" r="1.7" fill="url(#s114_7)"/>
<circle cx="870" cy="340.5" r="2.1" fill="url(#s126_8)"/>
<circle cx="869.5" cy="345.5" r="1.8" fill="url(#s108_6)"/>
<circle cx="869.7" cy="351" r="2.1" fill="url(#s102_7)"/>
<circle cx="872.6" cy="353.6" r="2.2" fill="url(#s96_8)"/>
<circle cx="872.1" cy="340.5" r="2.1" fill="url(#s114_8)"/>
<circle cx="873.1" cy="351.8" r="2.2" fill="url(#s114_8)"/>
<circle cx="873.4" cy="344.6" r="2" fill="url(#s120_6)"/>
<circle cx="871.5" cy="353.6" r="2" fill="url(#s114_7)"/>
<circle cx="877.4" cy="339.8" r="2.1" fill="url(#s120_8)"/>
<circle cx="876" cy="356" r="1.7" fill="url(#s90_8)"/>
<circle cx="876.8" cy="345.1" r="1.8" fill="url(#s108_8)"/>
<circle cx="875.2" cy="355" r="2.4" fill="url(#s90_7)"/>
<circle cx="879.8" cy="338.2" r="2.1" fill="url(#s126_8)"/>
<circle cx="879.3" cy="341.8" r="1.7" fill="url(#s108_7)"/>
<circle cx="877.1" cy="352.6" r="2" fill="url(#s90_6)"/>
<circle cx="878.3" cy="348.3" r="1.8" fill="url(#s102_8)"/>
<circle cx="882.2" cy="335.6" r="2.1" fill="url(#s126_8)"/>
<circle cx="881.3" cy="354.2" r="1.8" fill="url(#s102_7)"/>
<circle cx="880.5" cy="340.3" r="1.7" fill="url(#s120_6)"/>
<circle cx="882.5" cy="351.9" r="1.7" fill="url(#s102_7)"/>
<circle cx="883.8" cy="335.1" r="2.1" fill="url(#s114_8)"/>
<circle cx="884.7" cy="349.5" r="2.1" fill="url(#s102_7)"/>
<circle cx="885.1" cy="340.5" r="1.8" fill="url(#s120_8)"/>
<circle cx="881.8" cy="341.3" r="2.1" fill="url(#s108_8)"/>
<circle cx="883.8" cy="350.5" r="1.9" fill="url(#s96_8)"/>
<circle cx="887" cy="332.7" r="2.1" fill="url(#s114_8)"/>
<circle cx="887.4" cy="343.6" r="1.7" fill="url(#s114_7)"/>
<circle cx="888.3" cy="339.6" r="2.3" fill="url(#s120_6)"/>
<circle cx="886.3" cy="348.4" r="2.3" fill="url(#s114_8)"/>
<circle cx="884.7" cy="352.6" r="2.3" fill="url(#s102_7)"/>
<circle cx="888.4" cy="334.6" r="2.1" fill="url(#s126_8)"/>
<circle cx="890.3" cy="351.4" r="1.9" fill="url(#s90_8)"/>
<circle cx="890.6" cy="347.9" r="2.3" fill="url(#s102_7)"/>
<circle cx="889.7" cy="345.8" r="2" fill="url(#s114_8)"/>
<circle cx="891.6" cy="340.5" r="2.1" fill="url(#s126_8)"/>
<circle cx="890.9" cy="347.3" r="1.9" fill="url(#s102_6)"/>
<circle cx="892.2" cy="347.4" r="1.7" fill="url(#s114_8)"/>
<circle cx="893.5" cy="342.1" r="2.1" fill="url(#s120_8)"/>
<circle cx="893.9" cy="344.3" r="1.8" fill="url(#s114_7)"/>
<circle cx="895.6" cy="350.3" r="1.9" fill="url(#s108_8)"/>
<circle cx="896.3" cy="343.1" r="2" fill="url(#s126_8)"/>
<circle cx="895.1" cy="348.2" r="1.6" fill="url(#s114_7)"/>
<circle cx="899" cy="343" r="2" fill="url(#s126_8)"/>
<circle cx="900.4" cy="348.2" r="2.2" fill="url(#s114_7)"/>
<circle cx="902.8" cy="346.8" r="2" fill="url(#s126_8)"/>
<circle cx="900.8" cy="347.2" r="2.3" fill="url(#s102_7)"/>
<circle cx="903.2" cy="346.7" r="2" fill="url(#s126_8)"/>
<circle cx="903.3" cy="349.3" r="2" fill="url(#s102_6)"/>
<circle cx="907" cy="347.6" r="2" fill="url(#s120_8)"/>
<circle cx="906.2" cy="350.5" r="2.2" fill="url(#s114_7)"/>
<circle cx="910.1" cy="352.5" r="2" fill="url(#s114_8)"/>
<circle cx="909.8" cy="353.9" r="1.8" fill="url(#s96_7)"/>
<circle cx="912.4" cy="358.3" r="2" fill="url(#s126_8)"/>
<circle cx="910.4" cy="358.8" r="2.1" fill="url(#s96_8)"/>
<circle cx="579" cy="411" r="2.3" fill="url(#s78_9)"/>
<circle cx="583" cy="408" r="2.3" fill="url(#s78_9)"/>
<circle cx="585" cy="412" r="2.3" fill="url(#s78_9)"/>
<circle cx="584" cy="417" r="2.3" fill="url(#s84_9)"/>
<circle cx="583" cy="422" r="2.3" fill="url(#s90_9)"/>
<circle cx="576" cy="414" r="2.3" fill="url(#s84_9)"/>
<circle cx="572" cy="416" r="2.3" fill="url(#s90_9)"/>
<circle cx="889" cy="329" r="2.3" fill="url(#s72_9)"/>
<circle cx="890" cy="334" r="2.3" fill="url(#s78_9)"/>
<circle cx="887" cy="338" r="2.3" fill="url(#s84_9)"/>
<circle cx="866" cy="337" r="2.3" fill="url(#s102_9)"/>
<circle cx="868" cy="342" r="2.3" fill="url(#s102_9)"/>
<circle cx="875" cy="340" r="2.3" fill="url(#s102_9)"/>
<circle cx="881" cy="338" r="2.3" fill="url(#s96_9)"/>
<circle cx="632" cy="404" r="2.3" fill="url(#s108_9)"/>
<circle cx="638" cy="402" r="2.3" fill="url(#s114_9)"/>
<circle cx="694" cy="383" r="2.3" fill="url(#s120_9)"/>
<path d="M476 556l3 0l2.5 17l-3 2zM517 563l3 -1l2.5 11l-3 1zM549 571l3 1l1.5 7l-3 0z" fill="#000" fill-opacity=".85"/>
<circle cx="1232.8" cy="333.9" r="1.3" fill="url(#s126_9)"/>
<circle cx="1230" cy="337.2" r="1.3" fill="url(#s126_9)"/>
<circle cx="1217.7" cy="353.5" r="1.3" fill="url(#s126_9)"/>
<circle cx="1211.2" cy="365" r="1.3" fill="url(#s120_9)"/>
<circle cx="1206.2" cy="378.8" r="1.3" fill="url(#s114_9)"/>
<circle cx="1204" cy="388.3" r="1.4" fill="url(#s114_9)"/>
<circle cx="1203" cy="393.4" r="1.4" fill="url(#s114_9)"/>
<circle cx="1200" cy="403.3" r="1.3" fill="url(#s114_9)"/>
<circle cx="1198.7" cy="408" r="1.4" fill="url(#s114_9)"/>
<circle cx="1197.7" cy="411.6" r="1.3" fill="url(#s114_9)"/>
<circle cx="1195.6" cy="417.6" r="1.5" fill="url(#s120_9)"/>
<circle cx="1193.2" cy="423.3" r="1.5" fill="url(#s114_9)"/>
<circle cx="1191.4" cy="427.5" r="1.3" fill="url(#s114_9)"/>
<circle cx="1190.5" cy="429.4" r="1.3" fill="url(#s120_9)"/>
<circle cx="1189.9" cy="430.9" r="1.4" fill="url(#s114_9)"/>
<circle cx="1189.1" cy="432.4" r="1.6" fill="url(#s114_9)"/>
<circle cx="1187.4" cy="435.5" r="1.4" fill="url(#s120_9)"/>
<circle cx="1187.3" cy="436.7" r="1.4" fill="url(#s120_9)"/>
<circle cx="1184.4" cy="441.6" r="1.5" fill="url(#s120_9)"/>
<circle cx="1182.3" cy="446.8" r="1.6" fill="url(#s114_9)"/>
<circle cx="1180.8" cy="448" r="1.4" fill="url(#s114_9)"/>
<circle cx="1177.7" cy="453.8" r="1.3" fill="url(#s114_9)"/>
<circle cx="1176.7" cy="454.9" r="1.7" fill="url(#s114_9)"/>
<circle cx="1176.6" cy="457.3" r="1.4" fill="url(#s114_9)"/>
<circle cx="1175.2" cy="459" r="1.4" fill="url(#s114_9)"/>
<circle cx="1174.2" cy="460.1" r="1.5" fill="url(#s114_9)"/>
<circle cx="1173.6" cy="461.4" r="1.3" fill="url(#s114_9)"/>
<circle cx="1172.5" cy="463.2" r="1.7" fill="url(#s114_9)"/>
<circle cx="1171.8" cy="464.9" r="1.6" fill="url(#s114_9)"/>
<circle cx="1168.6" cy="469.9" r="1.6" fill="url(#s108_9)"/>
<circle cx="1168.5" cy="471.4" r="1.7" fill="url(#s114_9)"/>
<circle cx="1167.5" cy="472.5" r="1.7" fill="url(#s108_9)"/>
<circle cx="1166.8" cy="474.4" r="1.6" fill="url(#s108_9)"/>
<circle cx="1164.8" cy="477.5" r="1.6" fill="url(#s114_9)"/>
<circle cx="1164.7" cy="479.5" r="1.3" fill="url(#s114_9)"/>
<circle cx="1163.6" cy="480.6" r="1.4" fill="url(#s108_9)"/>
<circle cx="1162" cy="484.2" r="1.7" fill="url(#s114_9)"/>
<circle cx="1161.7" cy="486" r="1.8" fill="url(#s114_9)"/>
<circle cx="1160.5" cy="487.6" r="1.3" fill="url(#s114_9)"/>
<circle cx="1159.1" cy="491.1" r="1.5" fill="url(#s114_9)"/>
<circle cx="1158.7" cy="492.8" r="1.4" fill="url(#s114_9)"/>
<circle cx="1157.2" cy="494.3" r="1.6" fill="url(#s108_9)"/>
<circle cx="1157.1" cy="495.9" r="1.7" fill="url(#s114_9)"/>
<circle cx="1155.5" cy="497.7" r="1.6" fill="url(#s108_9)"/>
<circle cx="1155.4" cy="499.4" r="1.3" fill="url(#s108_9)"/>
<circle cx="1153.9" cy="501.1" r="1.5" fill="url(#s108_9)"/>
<circle cx="1153.7" cy="503.1" r="1.4" fill="url(#s108_9)"/>
<circle cx="1152.8" cy="504.3" r="1.7" fill="url(#s108_9)"/>
<circle cx="1151.7" cy="507.6" r="1.5" fill="url(#s114_9)"/>
<circle cx="1150.7" cy="509.4" r="1.8" fill="url(#s114_9)"/>
<circle cx="1149" cy="511.2" r="1.8" fill="url(#s108_9)"/>
<circle cx="1148.5" cy="514" r="1.6" fill="url(#s114_9)"/>
<circle cx="1147.7" cy="515" r="1.5" fill="url(#s114_9)"/>
<circle cx="1146.5" cy="517.5" r="1.6" fill="url(#s108_9)"/>
<circle cx="1146.1" cy="519.4" r="1.4" fill="url(#s108_9)"/>
<circle cx="1145.6" cy="520.4" r="1.5" fill="url(#s114_9)"/>
<circle cx="1143.3" cy="523.8" r="1.9" fill="url(#s114_9)"/>
<circle cx="1143.1" cy="525.2" r="2" fill="url(#s114_9)"/>
<circle cx="1141.5" cy="527.8" r="1.5" fill="url(#s114_9)"/>
<circle cx="1140.6" cy="529.4" r="1.7" fill="url(#s108_9)"/>
<circle cx="1140.3" cy="531.6" r="2" fill="url(#s114_9)"/>
<circle cx="1138.5" cy="533.6" r="2" fill="url(#s114_9)"/>
<circle cx="1138" cy="536.2" r="1.8" fill="url(#s114_9)"/>
<circle cx="1136.7" cy="538.4" r="1.7" fill="url(#s114_9)"/>
<circle cx="1136.1" cy="539.8" r="1.4" fill="url(#s114_9)"/>
<circle cx="1135.6" cy="541.9" r="1.7" fill="url(#s114_9)"/>
<circle cx="1134.5" cy="544.1" r="1.8" fill="url(#s114_9)"/>
<circle cx="1133.1" cy="546" r="1.6" fill="url(#s114_9)"/>
<circle cx="1133" cy="547.6" r="2.1" fill="url(#s114_9)"/>
<circle cx="1131.7" cy="549.9" r="1.8" fill="url(#s114_9)"/>
<circle cx="1130.8" cy="551.7" r="1.4" fill="url(#s114_9)"/>
<circle cx="1129.4" cy="553.2" r="1.8" fill="url(#s114_9)"/>
<circle cx="1129" cy="555.8" r="1.9" fill="url(#s114_9)"/>
<circle cx="1127.7" cy="557.4" r="1.7" fill="url(#s114_9)"/>
<circle cx="1126.5" cy="559.8" r="2.1" fill="url(#s114_9)"/>
<circle cx="1126.8" cy="560.4" r="1.4" fill="url(#s114_9)"/>
<circle cx="1125.9" cy="561.5" r="2.2" fill="url(#s114_9)"/>
<circle cx="1124.1" cy="564.8" r="2.1" fill="url(#s114_9)"/>
<circle cx="1123.4" cy="566.6" r="1.6" fill="url(#s114_9)"/>
<circle cx="1122.2" cy="568.5" r="1.7" fill="url(#s114_9)"/>
<circle cx="1121.5" cy="570.7" r="2" fill="url(#s114_9)"/>
<circle cx="1120.3" cy="572.6" r="1.5" fill="url(#s114_9)"/>
<circle cx="1119.9" cy="573.8" r="1.6" fill="url(#s114_9)"/>
<circle cx="1119.4" cy="575.6" r="2.2" fill="url(#s114_9)"/>
<circle cx="1117.8" cy="579" r="1.9" fill="url(#s114_9)"/>
<circle cx="1116.9" cy="581.4" r="2.2" fill="url(#s114_9)"/>
<circle cx="1115.2" cy="583.9" r="2.2" fill="url(#s114_9)"/>
<circle cx="1114.6" cy="585.6" r="2.3" fill="url(#s114_9)"/>
<circle cx="1112.5" cy="588.4" r="2.2" fill="url(#s114_9)"/>
<circle cx="1111.7" cy="590.9" r="2.1" fill="url(#s114_9)"/>
<circle cx="1111.1" cy="593.6" r="1.8" fill="url(#s114_9)"/>
<circle cx="1109.8" cy="595.7" r="2" fill="url(#s114_9)"/>
<circle cx="1108.7" cy="597.7" r="1.8" fill="url(#s114_9)"/>
<circle cx="1108.4" cy="598.5" r="2.4" fill="url(#s114_9)"/>
<circle cx="1107.3" cy="601" r="1.6" fill="url(#s114_9)"/>
<circle cx="1106.5" cy="602.7" r="2.4" fill="url(#s108_9)"/>
<circle cx="1105.2" cy="605.7" r="1.8" fill="url(#s114_9)"/>
<circle cx="1104.1" cy="607.7" r="2" fill="url(#s114_9)"/>
<circle cx="1103.7" cy="610" r="2.1" fill="url(#s108_9)"/>
<circle cx="1102.3" cy="612.6" r="2.2" fill="url(#s114_9)"/>
<circle cx="1101.7" cy="614.5" r="1.9" fill="url(#s114_9)"/>
<circle cx="1100.7" cy="616.9" r="1.6" fill="url(#s114_9)"/>
<circle cx="1099.3" cy="618.6" r="2.1" fill="url(#s114_9)"/>
<circle cx="1097.8" cy="621" r="2.3" fill="url(#s114_9)"/>
<circle cx="1097.1" cy="624" r="2" fill="url(#s114_9)"/>
<circle cx="1096.9" cy="625.7" r="2.6" fill="url(#s114_9)"/>
<circle cx="1095" cy="628.9" r="1.9" fill="url(#s114_9)"/>
<circle cx="1093.3" cy="630.7" r="2.6" fill="url(#s108_9)"/>
<circle cx="1092.3" cy="634.3" r="2.1" fill="url(#s114_9)"/>
<circle cx="1093" cy="635.9" r="2.5" fill="url(#s114_9)"/>
<circle cx="1090.2" cy="638.1" r="2.4" fill="url(#s114_9)"/>
<circle cx="1088.5" cy="640" r="2.7" fill="url(#s114_9)"/>
<circle cx="1087.8" cy="642.8" r="2.5" fill="url(#s114_9)"/>
<circle cx="1086.3" cy="646.4" r="1.9" fill="url(#s114_9)"/>
<circle cx="1085.1" cy="648.7" r="1.9" fill="url(#s114_9)"/>
<circle cx="1083.3" cy="650.6" r="2.3" fill="url(#s114_9)"/>
<circle cx="1081.7" cy="653.3" r="2.3" fill="url(#s114_9)"/>
<circle cx="1080.3" cy="655.4" r="2.4" fill="url(#s114_9)"/>
<circle cx="1079.6" cy="657.5" r="2.4" fill="url(#s114_9)"/>
<circle cx="1078.2" cy="660.7" r="2.8" fill="url(#s114_9)"/>
<circle cx="1076.3" cy="664.1" r="2.9" fill="url(#s114_9)"/>
<circle cx="1073.2" cy="666.4" r="2.4" fill="url(#s114_9)"/>
<circle cx="1074.1" cy="666.9" r="2" fill="url(#s114_9)"/>
<circle cx="1072" cy="669.6" r="2" fill="url(#s114_9)"/>
<circle cx="1070.6" cy="670.8" r="2.8" fill="url(#s114_9)"/>
<circle cx="1068.8" cy="674.6" r="2.9" fill="url(#s114_9)"/>
<circle cx="1066.9" cy="677.6" r="2.6" fill="url(#s114_9)"/>
<circle cx="1064.9" cy="680.9" r="2.9" fill="url(#s114_9)"/>
<circle cx="1063.1" cy="684.2" r="2.9" fill="url(#s114_9)"/>
<circle cx="1061.1" cy="686.4" r="3" fill="url(#s114_9)"/>
<circle cx="1058.6" cy="690" r="2.9" fill="url(#s114_9)"/>
<circle cx="1058.3" cy="693" r="2.2" fill="url(#s114_9)"/>
<circle cx="1056.5" cy="695.8" r="3.1" fill="url(#s114_9)"/>
<circle cx="1054.8" cy="699.1" r="2.3" fill="url(#s114_9)"/>
<circle cx="1052.7" cy="701.1" r="2.5" fill="url(#s114_9)"/>
<circle cx="1050.9" cy="704.6" r="2.9" fill="url(#s114_9)"/>
<circle cx="1049.8" cy="706.2" r="3.5" fill="url(#s114_9)"/>
<circle cx="1048.4" cy="708.4" r="2.8" fill="url(#s114_9)"/>
<circle cx="1046.7" cy="710.9" r="2.7" fill="url(#s114_9)"/>
<circle cx="1044.8" cy="714.8" r="3" fill="url(#s114_9)"/>
<circle cx="1043.2" cy="717" r="2.3" fill="url(#s114_9)"/>
<circle cx="1041.6" cy="719.3" r="3.5" fill="url(#s114_9)"/>
<circle cx="1038.9" cy="723.7" r="2.9" fill="url(#s114_9)"/>
<circle cx="1036.3" cy="725.9" r="3" fill="url(#s114_9)"/>
<circle cx="1033.4" cy="730.4" r="3.6" fill="url(#s114_9)"/>
<circle cx="1032.3" cy="732.7" r="3.2" fill="url(#s114_9)"/>
<circle cx="1029.4" cy="736.5" r="3.7" fill="url(#s114_9)"/>
<circle cx="1028" cy="740.6" r="2.9" fill="url(#s114_9)"/>
<circle cx="1024.6" cy="742.3" r="3.4" fill="url(#s114_9)"/>
<circle cx="1022.3" cy="747" r="3.4" fill="url(#s114_9)"/>
<circle cx="1022.6" cy="748" r="2.9" fill="url(#s114_9)"/>
<circle cx="1019.8" cy="750.5" r="3.7" fill="url(#s114_9)"/>
<circle cx="1018" cy="755.8" r="3.4" fill="url(#s114_9)"/>
<circle cx="1014.3" cy="760.3" r="4" fill="url(#s114_9)"/>
<circle cx="1013.9" cy="764.2" r="3.3" fill="url(#s114_9)"/>
<circle cx="1011.4" cy="766.8" r="2.7" fill="url(#s114_9)"/>
<circle cx="1008.2" cy="770.8" r="4" fill="url(#s114_9)"/>
<circle cx="1005.9" cy="773.4" r="3.2" fill="url(#s114_9)"/>
<circle cx="1005.6" cy="776.9" r="3.6" fill="url(#s114_9)"/>
<circle cx="1002.6" cy="781.2" r="3.4" fill="url(#s114_9)"/>
<circle cx="999.4" cy="785.3" r="3.1" fill="url(#s114_9)"/>
<circle cx="997.4" cy="788.7" r="3.1" fill="url(#s114_9)"/>
<circle cx="997.3" cy="789.5" r="4.4" fill="url(#s114_9)"/>
<circle cx="993.6" cy="794.7" r="3" fill="url(#s114_9)"/>
<circle cx="992.6" cy="798.7" r="4.5" fill="url(#s114_9)"/>
<circle cx="989.5" cy="803" r="3.9" fill="url(#s114_9)"/>
<circle cx="985.9" cy="807" r="4.5" fill="url(#s114_9)"/>
<circle cx="983" cy="811.8" r="4.7" fill="url(#s114_9)"/>
<circle cx="980.4" cy="817.6" r="3.5" fill="url(#s114_9)"/>
<circle cx="977.8" cy="820.9" r="4" fill="url(#s114_9)"/>
<circle cx="975.8" cy="824.3" r="3.4" fill="url(#s114_9)"/>
<circle cx="972.6" cy="827.9" r="4.4" fill="url(#s114_9)"/>
<circle cx="971.5" cy="834.2" r="3.9" fill="url(#s114_9)"/>
<circle cx="969.8" cy="833.6" r="4" fill="url(#s114_9)"/>
<circle cx="965.5" cy="838.2" r="5.1" fill="url(#s114_9)"/>
<circle cx="962.4" cy="843.6" r="4.9" fill="url(#s114_9)"/>
<circle cx="959.5" cy="849.4" r="4.7" fill="url(#s114_9)"/>
<circle cx="955.3" cy="852.6" r="4.9" fill="url(#s114_9)"/>
<circle cx="953.7" cy="858.6" r="3.6" fill="url(#s114_9)"/>
<circle cx="948.9" cy="861.9" r="4.2" fill="url(#s114_9)"/>
<circle cx="946.1" cy="866.4" r="3.8" fill="url(#s114_9)"/>
<circle cx="943.6" cy="871.4" r="5.1" fill="url(#s114_9)"/>
<circle cx="940.9" cy="874.6" r="4.2" fill="url(#s114_9)"/>
<circle cx="937.8" cy="879.5" r="5.3" fill="url(#s114_9)"/>
<circle cx="933.1" cy="883.7" r="4.7" fill="url(#s108_9)"/>
<circle cx="928.7" cy="886.8" r="5.4" fill="url(#s114_9)"/>
<circle cx="925.3" cy="893.7" r="4.9" fill="url(#s114_9)"/>
<circle cx="918.9" cy="897.1" r="5.7" fill="url(#s114_9)"/>
<circle cx="915" cy="901.5" r="5.2" fill="url(#s108_9)"/>
<circle cx="912" cy="907.7" r="4.2" fill="url(#s114_9)"/>
<circle cx="908.6" cy="911.2" r="3.9" fill="url(#s108_9)"/>
<circle cx="904.5" cy="915.2" r="4" fill="url(#s114_9)"/>
<circle cx="900.8" cy="920" r="4.9" fill="url(#s114_9)"/>
<circle cx="900.6" cy="920.7" r="4.6" fill="url(#s108_9)"/>
<circle cx="898.7" cy="923.9" r="5.4" fill="url(#s114_9)"/>
<circle cx="894.4" cy="930.1" r="4.3" fill="url(#s114_9)"/>
<circle cx="889.8" cy="933.4" r="5.9" fill="url(#s114_9)"/>
<circle cx="884.8" cy="937.6" r="4.9" fill="url(#s114_9)"/>
<circle cx="882.9" cy="943.2" r="4.4" fill="url(#s114_9)"/>
<circle cx="878.5" cy="947.9" r="6.4" fill="url(#s114_9)"/>
<circle cx="872.4" cy="955.5" r="5" fill="url(#s114_9)"/>
<circle cx="867.8" cy="957.3" r="6.5" fill="url(#s114_9)"/>
<circle cx="864.9" cy="965.4" r="4.4" fill="url(#s114_9)"/>
<circle cx="859.8" cy="971.4" r="6.3" fill="url(#s114_9)"/>
<circle cx="860.9" cy="970.1" r="6.5" fill="url(#s114_9)"/>
<circle cx="854.7" cy="975.1" r="6.1" fill="url(#s114_9)"/>
<circle cx="848.2" cy="981.2" r="6.2" fill="url(#s114_9)"/>
<circle cx="843.1" cy="989.9" r="5.7" fill="url(#s114_9)"/>
<circle cx="840.6" cy="994" r="6.9" fill="url(#s114_9)"/>
<circle cx="834.9" cy="1002.1" r="5.5" fill="url(#s120_9)"/>
<circle cx="828.6" cy="1006.7" r="5.3" fill="url(#s114_9)"/>
<circle cx="826.8" cy="1012.6" r="6.2" fill="url(#s114_9)"/>
<circle cx="819.1" cy="1019.2" r="6.7" fill="url(#s114_9)"/>
<circle cx="816.7" cy="1021.8" r="4.8" fill="url(#s114_9)"/>
<circle cx="812.5" cy="1026.4" r="7" fill="url(#s114_9)"/>
<circle cx="807.2" cy="1035" r="7" fill="url(#s114_9)"/>
<circle cx="290.5" cy="660.9" r="1.3" fill="url(#s156_9)"/>
<circle cx="300.1" cy="678.1" r="1.4" fill="url(#s156_9)"/>
<circle cx="303.2" cy="682.4" r="1.4" fill="url(#s156_9)"/>
<circle cx="303.7" cy="684.3" r="1.4" fill="url(#s156_9)"/>
<circle cx="305.9" cy="687.3" r="1.4" fill="url(#s156_9)"/>
<circle cx="307.5" cy="690.4" r="1.4" fill="url(#s150_9)"/>
<circle cx="310.1" cy="694.9" r="1.3" fill="url(#s156_9)"/>
<circle cx="313.1" cy="699.3" r="1.3" fill="url(#s156_9)"/>
<circle cx="314.6" cy="702.6" r="1.4" fill="url(#s156_9)"/>
<circle cx="316.2" cy="705.9" r="1.6" fill="url(#s156_9)"/>
<circle cx="318.1" cy="707.4" r="1.4" fill="url(#s156_9)"/>
<circle cx="319.3" cy="711.1" r="1.3" fill="url(#s156_9)"/>
<circle cx="320.8" cy="712.8" r="1.4" fill="url(#s150_9)"/>
<circle cx="321.9" cy="713.9" r="1.5" fill="url(#s156_9)"/>
<circle cx="324" cy="717.7" r="1.7" fill="url(#s156_9)"/>
<circle cx="324.8" cy="719.8" r="1.4" fill="url(#s156_9)"/>
<circle cx="325.5" cy="721.2" r="1.7" fill="url(#s150_9)"/>
<circle cx="327.8" cy="724.6" r="1.5" fill="url(#s156_9)"/>
<circle cx="328.9" cy="726.1" r="1.5" fill="url(#s150_9)"/>
<circle cx="331.9" cy="731.4" r="1.6" fill="url(#s156_9)"/>
<circle cx="332.6" cy="733.5" r="1.8" fill="url(#s156_9)"/>
<circle cx="333.7" cy="735.2" r="1.4" fill="url(#s156_9)"/>
<circle cx="335.6" cy="738.2" r="1.6" fill="url(#s150_9)"/>
<circle cx="336.8" cy="740.4" r="1.7" fill="url(#s156_9)"/>
<circle cx="339.1" cy="743.7" r="1.3" fill="url(#s150_9)"/>
<circle cx="341.9" cy="748" r="1.8" fill="url(#s150_9)"/>
<circle cx="343" cy="750.3" r="1.5" fill="url(#s150_9)"/>
<circle cx="343.7" cy="752.2" r="1.6" fill="url(#s156_9)"/>
<circle cx="344.6" cy="754.1" r="1.6" fill="url(#s150_9)"/>
<circle cx="346" cy="756.2" r="1.4" fill="url(#s150_9)"/>
<circle cx="347.4" cy="757.5" r="1.4" fill="url(#s156_9)"/>
<circle cx="348.1" cy="759.6" r="1.3" fill="url(#s150_9)"/>
<circle cx="349.5" cy="760.9" r="1.7" fill="url(#s150_9)"/>
<circle cx="350.6" cy="763.3" r="1.4" fill="url(#s150_9)"/>
<circle cx="351.1" cy="765.1" r="1.6" fill="url(#s150_9)"/>
<circle cx="352.1" cy="766.6" r="2" fill="url(#s150_9)"/>
<circle cx="353.9" cy="769.5" r="2" fill="url(#s150_9)"/>
<circle cx="355.1" cy="771.8" r="1.8" fill="url(#s150_9)"/>
<circle cx="356.2" cy="774" r="1.5" fill="url(#s150_9)"/>
<circle cx="357.5" cy="774.9" r="2" fill="url(#s150_9)"/>
<circle cx="359.1" cy="778" r="1.5" fill="url(#s150_9)"/>
<circle cx="359.7" cy="780.1" r="1.4" fill="url(#s150_9)"/>
<circle cx="361.5" cy="781.5" r="2" fill="url(#s150_9)"/>
<circle cx="362.3" cy="784" r="1.4" fill="url(#s144_9)"/>
<circle cx="363.1" cy="785.6" r="2.1" fill="url(#s144_9)"/>
<circle cx="364.8" cy="787.9" r="1.7" fill="url(#s144_9)"/>
<circle cx="366.2" cy="789.6" r="1.9" fill="url(#s150_9)"/>
<circle cx="367.1" cy="792.2" r="1.5" fill="url(#s144_9)"/>
<circle cx="368.9" cy="793.8" r="1.8" fill="url(#s150_9)"/>
<circle cx="369.5" cy="796.2" r="1.9" fill="url(#s144_9)"/>
<circle cx="371.5" cy="798.6" r="2.2" fill="url(#s144_9)"/>
<circle cx="372.9" cy="801.2" r="1.7" fill="url(#s144_9)"/>
<circle cx="373.3" cy="803.5" r="2" fill="url(#s150_9)"/>
<circle cx="375.1" cy="806.1" r="1.6" fill="url(#s144_9)"/>
<circle cx="376.2" cy="807.7" r="1.9" fill="url(#s144_9)"/>
<circle cx="378.2" cy="810.2" r="1.8" fill="url(#s150_9)"/>
<circle cx="378.9" cy="812" r="1.8" fill="url(#s144_9)"/>
<circle cx="380.4" cy="813.9" r="1.8" fill="url(#s144_9)"/>
<circle cx="382" cy="816.4" r="1.8" fill="url(#s144_9)"/>
<circle cx="382.6" cy="818.7" r="2.1" fill="url(#s144_9)"/>
<circle cx="384.7" cy="821.2" r="2.2" fill="url(#s144_9)"/>
<circle cx="386.1" cy="823.9" r="1.7" fill="url(#s144_9)"/>
<circle cx="387.3" cy="825.8" r="1.9" fill="url(#s144_9)"/>
<circle cx="388.8" cy="828.2" r="2.5" fill="url(#s144_9)"/>
<circle cx="390" cy="831.6" r="2.3" fill="url(#s144_9)"/>
<circle cx="391.7" cy="833.8" r="2.3" fill="url(#s138_9)"/>
<circle cx="394" cy="836.6" r="2.6" fill="url(#s138_9)"/>
<circle cx="394.5" cy="839.4" r="2.5" fill="url(#s138_9)"/>
<circle cx="396.7" cy="842.8" r="2.4" fill="url(#s144_9)"/>
<circle cx="398.1" cy="844.8" r="2.2" fill="url(#s144_9)"/>
<circle cx="400.1" cy="847.4" r="2.3" fill="url(#s138_9)"/>
<circle cx="402.1" cy="850.4" r="1.8" fill="url(#s138_9)"/>
<circle cx="403.2" cy="852.7" r="2.4" fill="url(#s138_9)"/>
<circle cx="405.5" cy="855.2" r="2.6" fill="url(#s138_9)"/>
<circle cx="406.2" cy="858.7" r="2" fill="url(#s132_9)"/>
<circle cx="407.7" cy="861.7" r="2.8" fill="url(#s138_9)"/>
<circle cx="409.2" cy="864.9" r="2.9" fill="url(#s138_9)"/>
<circle cx="412.2" cy="868" r="2.7" fill="url(#s138_9)"/>
<circle cx="413.7" cy="871.4" r="2.7" fill="url(#s138_9)"/>
<circle cx="415.9" cy="875.1" r="2.3" fill="url(#s138_9)"/>
<circle cx="417.1" cy="877.8" r="2.1" fill="url(#s132_9)"/>
<circle cx="419.2" cy="880" r="2.7" fill="url(#s132_9)"/>
<circle cx="420.9" cy="882.8" r="2.2" fill="url(#s132_9)"/>
<circle cx="422.7" cy="885.1" r="2.8" fill="url(#s138_9)"/>
<circle cx="425.1" cy="888.5" r="3.1" fill="url(#s132_9)"/>
<circle cx="426.8" cy="893.3" r="2.7" fill="url(#s132_9)"/>
<circle cx="428.5" cy="896" r="3.5" fill="url(#s132_9)"/>
<circle cx="431.4" cy="900.2" r="2.5" fill="url(#s132_9)"/>
<circle cx="432" cy="903.6" r="2.6" fill="url(#s132_9)"/>
<circle cx="434" cy="906.9" r="3" fill="url(#s132_9)"/>
<circle cx="436" cy="909.1" r="3.4" fill="url(#s132_9)"/>
<circle cx="439.2" cy="914.3" r="2.6" fill="url(#s132_9)"/>
<circle cx="441.3" cy="917.9" r="3.7" fill="url(#s132_9)"/>
<circle cx="442.6" cy="922.1" r="3" fill="url(#s132_9)"/>
<circle cx="445.6" cy="925.1" r="3.5" fill="url(#s132_9)"/>
<circle cx="447.3" cy="930.4" r="3.2" fill="url(#s132_9)"/>
<circle cx="451.7" cy="933.1" r="4.1" fill="url(#s126_9)"/>
<circle cx="453.2" cy="937.9" r="3.5" fill="url(#s132_9)"/>
<circle cx="456.5" cy="941.9" r="3.2" fill="url(#s126_9)"/>
<circle cx="457.4" cy="946.7" r="4.2" fill="url(#s126_9)"/>
<circle cx="460.8" cy="950.6" r="3.6" fill="url(#s132_9)"/>
<circle cx="464.7" cy="954.4" r="4.5" fill="url(#s126_9)"/>
<circle cx="467.1" cy="960.9" r="3.8" fill="url(#s132_9)"/>
<circle cx="469.9" cy="964.5" r="4.8" fill="url(#s126_9)"/>
<circle cx="472.2" cy="971.6" r="3.3" fill="url(#s126_9)"/>
<circle cx="474.8" cy="975.9" r="3.5" fill="url(#s126_9)"/>
<circle cx="477" cy="978.7" r="3.4" fill="url(#s126_9)"/>
<circle cx="479.6" cy="984.2" r="4.1" fill="url(#s126_9)"/>
<circle cx="483.8" cy="987.7" r="4.2" fill="url(#s126_9)"/>
<circle cx="485.2" cy="993.5" r="4.7" fill="url(#s126_9)"/>
<circle cx="489.2" cy="999.3" r="5.1" fill="url(#s126_9)"/>
<circle cx="492.3" cy="1003.7" r="4.9" fill="url(#s120_9)"/>
<circle cx="494.7" cy="1011.5" r="4.3" fill="url(#s126_9)"/>
<circle cx="499.6" cy="1014.6" r="4.7" fill="url(#s120_9)"/>
<circle cx="501" cy="1022.6" r="5.3" fill="url(#s120_9)"/>
<circle cx="507.6" cy="1027.3" r="5.9" fill="url(#s120_9)"/>
<path d="M538 713L602 675L692 626L750 590L802 555L858 521" fill="none" stroke="#002810" stroke-opacity=".42" stroke-width="7" stroke-linecap="round" filter="url(#fSoft2)"/>
<path d="M556 786L700 680" fill="none" stroke="#003010" stroke-opacity=".12" stroke-width="16" stroke-linecap="round" filter="url(#fBlur2)"/>
<path d="M590 806L745 694" fill="none" stroke="#c0ffd0" stroke-opacity=".08" stroke-width="14" stroke-linecap="round" filter="url(#fBlur2)"/>
<path d="M716 552L748 586L782 624" fill="none" stroke="#003828" stroke-opacity=".25" stroke-width="5" stroke-linecap="round" filter="url(#fSoft2)"/>
<circle cx="536.2" cy="707.7" r="2.8" fill="url(#s144_9)"/>
<circle cx="536" cy="708.1" r="2.8" fill="url(#s138_9)"/>
<circle cx="534.6" cy="707.4" r="3" fill="url(#s144_9)"/>
<circle cx="536.8" cy="703.7" r="2.8" fill="url(#s144_9)"/>
<circle cx="534.3" cy="708.4" r="2.4" fill="url(#s144_9)"/>
<circle cx="534.6" cy="707.1" r="3.1" fill="url(#s138_9)"/>
<circle cx="539.1" cy="703" r="2.8" fill="url(#s138_9)"/>
<circle cx="540.8" cy="702.5" r="2.5" fill="url(#s138_9)"/>
<circle cx="540" cy="704.1" r="3.5" fill="url(#s144_9)"/>
<circle cx="542.5" cy="700.4" r="2.6" fill="url(#s144_9)"/>
<circle cx="539.7" cy="704.1" r="2.1" fill="url(#s144_9)"/>
<circle cx="542.2" cy="705.9" r="2.6" fill="url(#s138_9)"/>
<circle cx="545" cy="700.6" r="3.2" fill="url(#s144_9)"/>
<circle cx="545.5" cy="699.4" r="3.5" fill="url(#s144_9)"/>
<circle cx="543.5" cy="704.4" r="3.6" fill="url(#s138_9)"/>
<circle cx="544.8" cy="699.6" r="1.8" fill="url(#s138_9)"/>
<circle cx="548.7" cy="696.3" r="2.3" fill="url(#s138_9)"/>
<circle cx="548.5" cy="697.9" r="2.2" fill="url(#s138_9)"/>
<circle cx="551.8" cy="697.4" r="1.8" fill="url(#s144_9)"/>
<circle cx="547.8" cy="698.6" r="1.6" fill="url(#s138_9)"/>
<circle cx="551.8" cy="700.6" r="2.2" fill="url(#s144_9)"/>
<circle cx="547.1" cy="694.5" r="2.4" fill="url(#s144_9)"/>
<circle cx="549.6" cy="698.6" r="2" fill="url(#s144_9)"/>
<circle cx="550" cy="694.6" r="2.5" fill="url(#s138_9)"/>
<circle cx="554.8" cy="695.3" r="2.9" fill="url(#s138_9)"/>
<circle cx="549.9" cy="697.1" r="2.8" fill="url(#s144_9)"/>
<circle cx="551.7" cy="694.1" r="2.6" fill="url(#s144_9)"/>
<circle cx="552.7" cy="696.5" r="2.1" fill="url(#s138_9)"/>
<circle cx="552.8" cy="694.3" r="2.8" fill="url(#s138_9)"/>
<circle cx="558.9" cy="695.3" r="2.9" fill="url(#s138_9)"/>
<circle cx="554.6" cy="690.7" r="2.9" fill="url(#s138_9)"/>
<circle cx="561.1" cy="694.7" r="3" fill="url(#s138_9)"/>
<circle cx="557.2" cy="694.7" r="2.3" fill="url(#s138_9)"/>
<circle cx="560.3" cy="691.4" r="1.7" fill="url(#s138_9)"/>
<circle cx="561.1" cy="688.7" r="2.2" fill="url(#s144_9)"/>
<circle cx="559.4" cy="688.4" r="2" fill="url(#s138_9)"/>
<circle cx="563.5" cy="690.3" r="1.8" fill="url(#s138_9)"/>
<circle cx="563.7" cy="692.8" r="1.9" fill="url(#s144_9)"/>
<circle cx="559.6" cy="689.7" r="2.1" fill="url(#s138_9)"/>
<circle cx="564.2" cy="685.6" r="2.3" fill="url(#s138_9)"/>
<circle cx="561" cy="689.1" r="2.8" fill="url(#s144_9)"/>
<circle cx="566.9" cy="689.6" r="3" fill="url(#s138_9)"/>
<circle cx="569.9" cy="687.9" r="3.5" fill="url(#s144_9)"/>
<circle cx="565.9" cy="684.9" r="3" fill="url(#s144_9)"/>
<circle cx="568.8" cy="690" r="3.1" fill="url(#s144_9)"/>
<circle cx="565.5" cy="685.1" r="2.4" fill="url(#s144_9)"/>
<circle cx="567.3" cy="682.3" r="2.6" fill="url(#s138_9)"/>
<circle cx="572.2" cy="686.1" r="2" fill="url(#s144_9)"/>
<circle cx="569.5" cy="687.5" r="2.3" fill="url(#s138_9)"/>
<circle cx="572.5" cy="685.5" r="3" fill="url(#s144_9)"/>
<circle cx="569.3" cy="681.1" r="3" fill="url(#s138_9)"/>
<circle cx="573.7" cy="685.3" r="2.2" fill="url(#s144_9)"/>
<circle cx="575" cy="681.2" r="2.9" fill="url(#s138_9)"/>
<circle cx="572.9" cy="680.5" r="2.6" fill="url(#s144_9)"/>
<circle cx="573.8" cy="682" r="2.2" fill="url(#s144_9)"/>
<circle cx="578.1" cy="677.8" r="1.9" fill="url(#s144_9)"/>
<circle cx="579.8" cy="678.4" r="2.1" fill="url(#s138_9)"/>
<circle cx="577.6" cy="683.2" r="2.4" fill="url(#s144_9)"/>
<circle cx="575.6" cy="680.7" r="3.6" fill="url(#s144_9)"/>
<circle cx="582.4" cy="679" r="3.6" fill="url(#s144_9)"/>
<circle cx="584.1" cy="681.3" r="2" fill="url(#s138_9)"/>
<circle cx="584.1" cy="678.9" r="2.7" fill="url(#s138_9)"/>
<circle cx="581.6" cy="676" r="2" fill="url(#s144_9)"/>
<circle cx="587.3" cy="679.2" r="2.3" fill="url(#s138_9)"/>
<circle cx="580.1" cy="674.5" r="2.5" fill="url(#s144_9)"/>
<circle cx="587.8" cy="675.6" r="2.6" fill="url(#s138_9)"/>
<circle cx="589.5" cy="678.1" r="2.5" fill="url(#s138_9)"/>
<circle cx="583.1" cy="673.7" r="2.1" fill="url(#s138_9)"/>
<circle cx="586.8" cy="674.6" r="2.1" fill="url(#s144_9)"/>
<circle cx="584.5" cy="671.2" r="2.4" fill="url(#s138_9)"/>
<circle cx="589" cy="671.3" r="2.3" fill="url(#s144_9)"/>
<circle cx="588.8" cy="672.6" r="2.7" fill="url(#s144_9)"/>
<circle cx="594.2" cy="676.6" r="2.8" fill="url(#s144_9)"/>
<circle cx="590.1" cy="675.3" r="2.5" fill="url(#s138_9)"/>
<circle cx="590.4" cy="673.6" r="3.6" fill="url(#s138_9)"/>
<circle cx="592.7" cy="674.3" r="1.5" fill="url(#s144_9)"/>
<circle cx="594.4" cy="674.1" r="1.7" fill="url(#s144_9)"/>
<circle cx="597.2" cy="675" r="1.9" fill="url(#s138_9)"/>
<circle cx="597.2" cy="671.9" r="2.9" fill="url(#s138_9)"/>
<circle cx="597.1" cy="669.6" r="2.4" fill="url(#s138_9)"/>
<circle cx="595.8" cy="668.3" r="2.4" fill="url(#s138_9)"/>
<circle cx="597.3" cy="672.5" r="2.4" fill="url(#s144_9)"/>
<circle cx="597.2" cy="669.5" r="2.7" fill="url(#s144_9)"/>
<circle cx="598.1" cy="668.1" r="2" fill="url(#s138_9)"/>
<circle cx="598.3" cy="664.8" r="1.9" fill="url(#s144_9)"/>
<circle cx="596.9" cy="669.8" r="1.9" fill="url(#s144_9)"/>
<circle cx="599.4" cy="670.1" r="2.1" fill="url(#s138_9)"/>
<circle cx="600" cy="668.7" r="2.4" fill="url(#s138_9)"/>
<circle cx="598.2" cy="670.4" r="2.1" fill="url(#s138_9)"/>
<circle cx="605.4" cy="663.8" r="2.5" fill="url(#s144_9)"/>
<circle cx="606.7" cy="669" r="2.5" fill="url(#s138_9)"/>
<circle cx="602.2" cy="662.2" r="2.4" fill="url(#s144_9)"/>
<circle cx="607.6" cy="662.8" r="2.4" fill="url(#s144_9)"/>
<circle cx="606.3" cy="661.2" r="2.1" fill="url(#s138_9)"/>
<circle cx="608" cy="661.1" r="2.6" fill="url(#s144_9)"/>
<circle cx="603.1" cy="662.7" r="2.5" fill="url(#s144_9)"/>
<circle cx="611.1" cy="662.4" r="2.6" fill="url(#s144_9)"/>
<circle cx="609.3" cy="665.9" r="2.8" fill="url(#s144_9)"/>
<circle cx="611" cy="662.7" r="2.8" fill="url(#s144_9)"/>
<circle cx="616.4" cy="660" r="2.6" fill="url(#s144_9)"/>
<circle cx="614.9" cy="661.8" r="2.4" fill="url(#s138_9)"/>
<circle cx="611.7" cy="660.9" r="2.5" fill="url(#s138_9)"/>
<circle cx="615.5" cy="657.3" r="2.6" fill="url(#s144_9)"/>
<circle cx="612.5" cy="658.3" r="1.9" fill="url(#s144_9)"/>
<circle cx="616.3" cy="659.4" r="2.5" fill="url(#s144_9)"/>
<circle cx="613.8" cy="658.8" r="2.2" fill="url(#s144_9)"/>
<circle cx="616.9" cy="657.1" r="1.6" fill="url(#s144_9)"/>
<circle cx="619.4" cy="658" r="1.5" fill="url(#s138_9)"/>
<circle cx="621.3" cy="657.1" r="3.2" fill="url(#s144_9)"/>
<circle cx="615.4" cy="655.7" r="3.2" fill="url(#s144_9)"/>
<circle cx="615.9" cy="656.3" r="2.6" fill="url(#s144_9)"/>
<circle cx="625.2" cy="656.6" r="1.7" fill="url(#s138_9)"/>
<circle cx="622.4" cy="659.4" r="2" fill="url(#s144_9)"/>
<circle cx="624.8" cy="657.5" r="1.5" fill="url(#s144_9)"/>
<circle cx="623" cy="653.4" r="2.1" fill="url(#s144_9)"/>
<circle cx="625" cy="654" r="2.5" fill="url(#s144_9)"/>
<circle cx="620.8" cy="656.3" r="2.3" fill="url(#s144_9)"/>
<circle cx="629.8" cy="653.2" r="2.8" fill="url(#s144_9)"/>
<circle cx="625" cy="657.2" r="3.4" fill="url(#s144_9)"/>
<circle cx="629.4" cy="654" r="3" fill="url(#s144_9)"/>
<circle cx="632.3" cy="654.6" r="2.1" fill="url(#s144_9)"/>
<circle cx="630.5" cy="650.2" r="2.1" fill="url(#s144_9)"/>
<circle cx="625.8" cy="655.4" r="2.9" fill="url(#s144_9)"/>
<circle cx="633.2" cy="652.6" r="2.4" fill="url(#s144_9)"/>
<circle cx="628.3" cy="649.5" r="2.3" fill="url(#s144_9)"/>
<circle cx="632.5" cy="649.5" r="2.2" fill="url(#s144_9)"/>
<circle cx="637.1" cy="652" r="2.4" fill="url(#s144_9)"/>
<circle cx="636.3" cy="652.2" r="2.5" fill="url(#s144_9)"/>
<circle cx="634.4" cy="646.6" r="2.5" fill="url(#s144_9)"/>
<circle cx="636" cy="649.1" r="2.7" fill="url(#s144_9)"/>
<circle cx="633.1" cy="650.3" r="3" fill="url(#s144_9)"/>
<circle cx="638.6" cy="650.9" r="2.9" fill="url(#s144_9)"/>
<circle cx="635.3" cy="650.3" r="3" fill="url(#s144_9)"/>
<circle cx="640.9" cy="644.4" r="3.1" fill="url(#s144_9)"/>
<circle cx="640.9" cy="646.1" r="2.9" fill="url(#s144_9)"/>
<circle cx="643.1" cy="644.2" r="3.1" fill="url(#s144_9)"/>
<circle cx="644.4" cy="646.4" r="3.1" fill="url(#s144_9)"/>
<circle cx="645.8" cy="647" r="2.8" fill="url(#s144_9)"/>
<circle cx="643" cy="642.8" r="2.8" fill="url(#s144_9)"/>
<circle cx="648.4" cy="645.5" r="2.5" fill="url(#s144_9)"/>
<circle cx="646.4" cy="645.2" r="3" fill="url(#s144_9)"/>
<circle cx="645.4" cy="639.7" r="2.6" fill="url(#s144_9)"/>
<circle cx="646.3" cy="639.7" r="2.3" fill="url(#s150_9)"/>
<circle cx="645.4" cy="644.5" r="2.5" fill="url(#s144_9)"/>
<circle cx="647.4" cy="642.9" r="2.6" fill="url(#s150_9)"/>
<circle cx="649.5" cy="640.6" r="3" fill="url(#s144_9)"/>
<circle cx="648.1" cy="642.7" r="2.1" fill="url(#s144_9)"/>
<circle cx="651.6" cy="642.4" r="2.5" fill="url(#s144_9)"/>
<circle cx="649.8" cy="642.4" r="3" fill="url(#s144_9)"/>
<circle cx="651" cy="638.3" r="2.5" fill="url(#s150_9)"/>
<circle cx="651.5" cy="638" r="2.1" fill="url(#s150_9)"/>
<circle cx="653.8" cy="638.1" r="2.6" fill="url(#s150_9)"/>
<circle cx="654.4" cy="638.1" r="1.9" fill="url(#s144_9)"/>
<circle cx="658" cy="634.9" r="2.3" fill="url(#s144_9)"/>
<circle cx="657.6" cy="636.6" r="2.5" fill="url(#s150_9)"/>
<circle cx="656.1" cy="636.9" r="1.9" fill="url(#s144_9)"/>
<circle cx="661.6" cy="633.9" r="3.1" fill="url(#s150_9)"/>
<circle cx="658.1" cy="636.7" r="2.7" fill="url(#s144_9)"/>
<circle cx="658.1" cy="638" r="2.5" fill="url(#s144_9)"/>
<circle cx="658.6" cy="634.9" r="2.2" fill="url(#s144_9)"/>
<circle cx="661.8" cy="636.5" r="2.5" fill="url(#s150_9)"/>
<circle cx="663" cy="634.6" r="3" fill="url(#s144_9)"/>
<circle cx="664.6" cy="635.2" r="1.7" fill="url(#s144_9)"/>
<circle cx="662.8" cy="632" r="2" fill="url(#s150_9)"/>
<circle cx="662.3" cy="634.3" r="1.7" fill="url(#s144_9)"/>
<circle cx="666.1" cy="636.3" r="3.2" fill="url(#s150_9)"/>
<circle cx="663.9" cy="630.2" r="3" fill="url(#s144_9)"/>
<circle cx="667.3" cy="630.6" r="2.9" fill="url(#s144_9)"/>
<circle cx="671.4" cy="631.6" r="1.8" fill="url(#s150_9)"/>
<circle cx="670.7" cy="629.6" r="2" fill="url(#s150_9)"/>
<circle cx="668.1" cy="630.2" r="1.6" fill="url(#s144_9)"/>
<circle cx="667.8" cy="633.1" r="2" fill="url(#s150_9)"/>
<circle cx="672.8" cy="631.8" r="1.8" fill="url(#s150_9)"/>
<circle cx="673.7" cy="632.9" r="1.9" fill="url(#s150_9)"/>
<circle cx="668.6" cy="628.6" r="2.8" fill="url(#s150_9)"/>
<circle cx="675.9" cy="631.5" r="2.9" fill="url(#s150_9)"/>
<circle cx="671.1" cy="632.3" r="2" fill="url(#s150_9)"/>
<circle cx="674.8" cy="627.7" r="1.5" fill="url(#s150_9)"/>
<circle cx="677.1" cy="626.2" r="1.7" fill="url(#s150_9)"/>
<circle cx="675" cy="624.7" r="1.7" fill="url(#s150_9)"/>
<circle cx="675" cy="626.8" r="2.4" fill="url(#s150_9)"/>
<circle cx="675.7" cy="628.3" r="1.7" fill="url(#s144_9)"/>
<circle cx="675.6" cy="628.1" r="1.8" fill="url(#s144_9)"/>
<circle cx="676.2" cy="622.9" r="2.3" fill="url(#s144_9)"/>
<circle cx="677" cy="626.6" r="3" fill="url(#s150_9)"/>
<circle cx="678.8" cy="624.9" r="2.9" fill="url(#s144_9)"/>
<circle cx="677.4" cy="627.5" r="2.2" fill="url(#s150_9)"/>
<circle cx="678.9" cy="624.2" r="2.2" fill="url(#s150_9)"/>
<circle cx="683.7" cy="627" r="3" fill="url(#s150_9)"/>
<circle cx="682.7" cy="621.8" r="2.4" fill="url(#s150_9)"/>
<circle cx="680.3" cy="625" r="2.2" fill="url(#s150_9)"/>
<circle cx="682" cy="624.8" r="2.4" fill="url(#s150_9)"/>
<circle cx="682.3" cy="619.2" r="2.7" fill="url(#s150_9)"/>
<circle cx="685.4" cy="623.2" r="1.8" fill="url(#s150_9)"/>
<circle cx="683.9" cy="625.2" r="2.2" fill="url(#s150_9)"/>
<circle cx="685.2" cy="620.8" r="2.7" fill="url(#s150_9)"/>
<circle cx="690.4" cy="622.1" r="2.1" fill="url(#s150_9)"/>
<circle cx="688.6" cy="617.6" r="2.8" fill="url(#s150_9)"/>
<circle cx="688.1" cy="617.6" r="2.9" fill="url(#s150_9)"/>
<circle cx="691.9" cy="620.7" r="2.5" fill="url(#s150_9)"/>
<circle cx="686.5" cy="619.1" r="2.1" fill="url(#s150_9)"/>
<circle cx="695.7" cy="616.9" r="2" fill="url(#s156_9)"/>
<circle cx="694.1" cy="618.2" r="2.1" fill="url(#s150_9)"/>
<circle cx="689.6" cy="620.3" r="1.9" fill="url(#s156_9)"/>
<circle cx="697.8" cy="620.1" r="1.4" fill="url(#s150_9)"/>
<circle cx="697.8" cy="619.8" r="1.7" fill="url(#s156_9)"/>
<circle cx="695.2" cy="615.8" r="2" fill="url(#s150_9)"/>
<circle cx="699.1" cy="618.1" r="1.7" fill="url(#s150_9)"/>
<circle cx="697.8" cy="615.7" r="1.7" fill="url(#s150_9)"/>
<circle cx="699.9" cy="613.8" r="1.7" fill="url(#s150_9)"/>
<circle cx="702.1" cy="612.2" r="3.1" fill="url(#s150_9)"/>
<circle cx="695.8" cy="613.1" r="2.9" fill="url(#s156_9)"/>
<circle cx="701.9" cy="614.7" r="3.4" fill="url(#s156_9)"/>
<circle cx="704.2" cy="612.5" r="2.2" fill="url(#s150_9)"/>
<circle cx="704.2" cy="614.2" r="1.8" fill="url(#s150_9)"/>
<circle cx="700.9" cy="615.9" r="1.9" fill="url(#s156_9)"/>
<circle cx="706" cy="610.6" r="2.6" fill="url(#s156_9)"/>
<circle cx="705.9" cy="612" r="2.3" fill="url(#s156_9)"/>
<circle cx="700.8" cy="612.2" r="2.7" fill="url(#s156_9)"/>
<circle cx="701.2" cy="613.7" r="2.2" fill="url(#s150_9)"/>
<circle cx="704.2" cy="609.4" r="2.7" fill="url(#s156_9)"/>
<circle cx="708.8" cy="613.1" r="2" fill="url(#s156_9)"/>
<circle cx="703.4" cy="609.6" r="2.5" fill="url(#s150_9)"/>
<circle cx="705.6" cy="611.5" r="2.3" fill="url(#s156_9)"/>
<circle cx="706.8" cy="608.4" r="2.4" fill="url(#s156_9)"/>
<circle cx="710.2" cy="606.4" r="2" fill="url(#s156_9)"/>
<circle cx="706.9" cy="609.2" r="2.4" fill="url(#s156_9)"/>
<circle cx="707.2" cy="610.1" r="1.7" fill="url(#s150_9)"/>
<circle cx="712.5" cy="605.8" r="1.5" fill="url(#s150_9)"/>
<circle cx="715.5" cy="605.6" r="1.9" fill="url(#s156_9)"/>
<circle cx="711.9" cy="608.6" r="1.6" fill="url(#s156_9)"/>
<circle cx="710.6" cy="608.6" r="2.1" fill="url(#s156_9)"/>
<circle cx="711.4" cy="607" r="2.7" fill="url(#s156_9)"/>
<circle cx="712.6" cy="604" r="2.5" fill="url(#s156_9)"/>
<circle cx="717.4" cy="607.7" r="2.5" fill="url(#s156_9)"/>
<circle cx="720.1" cy="607.5" r="2.7" fill="url(#s150_9)"/>
<circle cx="714.6" cy="607.3" r="2.4" fill="url(#s156_9)"/>
<circle cx="717.4" cy="602.3" r="2.8" fill="url(#s150_9)"/>
<circle cx="718.7" cy="603" r="2.5" fill="url(#s156_9)"/>
<circle cx="719.8" cy="605.4" r="2.1" fill="url(#s156_9)"/>
<circle cx="724.6" cy="604" r="2.7" fill="url(#s156_9)"/>
<circle cx="723.3" cy="604.1" r="2" fill="url(#s150_9)"/>
<circle cx="723" cy="605.6" r="2.4" fill="url(#s156_9)"/>
<circle cx="726.5" cy="603.7" r="1.9" fill="url(#s156_9)"/>
<circle cx="721.5" cy="603.6" r="2" fill="url(#s156_9)"/>
<circle cx="723.1" cy="599.7" r="2.1" fill="url(#s150_9)"/>
<circle cx="722.1" cy="600.1" r="2.6" fill="url(#s150_9)"/>
<circle cx="723.7" cy="604.1" r="3.2" fill="url(#s156_9)"/>
<circle cx="728.9" cy="603.6" r="3.2" fill="url(#s156_9)"/>
<circle cx="728.7" cy="600.8" r="2.5" fill="url(#s156_9)"/>
<circle cx="726.1" cy="602.1" r="2.6" fill="url(#s156_9)"/>
<circle cx="731.4" cy="597.8" r="2.2" fill="url(#s156_9)"/>
<circle cx="728.9" cy="600.5" r="3" fill="url(#s156_9)"/>
<circle cx="729.3" cy="599.2" r="3.3" fill="url(#s156_9)"/>
<circle cx="732.5" cy="600.4" r="3" fill="url(#s156_9)"/>
<circle cx="731.1" cy="601.3" r="2.3" fill="url(#s150_9)"/>
<circle cx="729.4" cy="596.2" r="2.2" fill="url(#s156_9)"/>
<circle cx="733.1" cy="595.9" r="1.8" fill="url(#s156_9)"/>
<circle cx="733.3" cy="595.1" r="2" fill="url(#s150_9)"/>
<circle cx="734.1" cy="595" r="2.2" fill="url(#s156_9)"/>
<circle cx="734" cy="593.4" r="2.2" fill="url(#s156_9)"/>
<circle cx="736.2" cy="592.3" r="3" fill="url(#s156_9)"/>
<circle cx="731.8" cy="598.1" r="2.9" fill="url(#s156_9)"/>
<circle cx="730.8" cy="596.4" r="2.2" fill="url(#s156_9)"/>
<circle cx="733.9" cy="595.2" r="1.5" fill="url(#s162_9)"/>
<circle cx="734.8" cy="595.5" r="1.9" fill="url(#s156_9)"/>
<circle cx="737.4" cy="590.9" r="2" fill="url(#s162_9)"/>
<circle cx="735.5" cy="589.3" r="2" fill="url(#s162_9)"/>
<circle cx="736.6" cy="590.7" r="2.3" fill="url(#s156_9)"/>
<circle cx="740.3" cy="594.2" r="2.1" fill="url(#s156_9)"/>
<circle cx="742.5" cy="592.4" r="2.4" fill="url(#s162_9)"/>
<circle cx="741.1" cy="587.3" r="3.3" fill="url(#s162_9)"/>
<circle cx="737.5" cy="593.3" r="2.8" fill="url(#s162_9)"/>
<circle cx="740" cy="590.7" r="1" fill="url(#s156_9)"/>
<circle cx="738.9" cy="589.3" r="1" fill="url(#s162_9)"/>
<circle cx="741.9" cy="590.7" r="1.5" fill="url(#s162_9)"/>
<circle cx="742.3" cy="589.9" r="1.3" fill="url(#s162_9)"/>
<circle cx="742.1" cy="588.7" r="1.2" fill="url(#s162_9)"/>
<circle cx="741.6" cy="587.3" r="1.5" fill="url(#s162_9)"/>
<circle cx="741.9" cy="584.8" r="1.5" fill="url(#s162_9)"/>
<circle cx="746.3" cy="589" r="1.2" fill="url(#s162_9)"/>
<circle cx="740.6" cy="585.8" r="1.4" fill="url(#s162_9)"/>
<circle cx="743.4" cy="585.5" r="2" fill="url(#s162_9)"/>
<circle cx="747" cy="585.2" r="1.5" fill="url(#s162_9)"/>
<circle cx="746.9" cy="588.1" r="2" fill="url(#s162_9)"/>
<circle cx="749.6" cy="586.9" r="1.9" fill="url(#s162_9)"/>
<circle cx="744.6" cy="582.7" r="1.4" fill="url(#s162_9)"/>
<circle cx="746.5" cy="583.1" r="1.8" fill="url(#s162_9)"/>
<circle cx="751.2" cy="586.3" r="1.2" fill="url(#s162_9)"/>
<circle cx="745.6" cy="581" r="1.3" fill="url(#s162_9)"/>
<circle cx="744.1" cy="580.7" r="1.6" fill="url(#s168_9)"/>
<circle cx="745.9" cy="579.8" r="2.2" fill="url(#s162_9)"/>
<circle cx="748.1" cy="584.5" r="2" fill="url(#s162_9)"/>
<circle cx="746.5" cy="580.4" r="2.1" fill="url(#s168_9)"/>
<circle cx="748.9" cy="582.1" r="1.1" fill="url(#s162_9)"/>
<circle cx="751.1" cy="580.3" r="1" fill="url(#s162_9)"/>
<circle cx="753.6" cy="579.4" r="1.3" fill="url(#s168_9)"/>
<circle cx="751" cy="584.1" r="1.9" fill="url(#s168_9)"/>
<circle cx="750.7" cy="581" r="1.6" fill="url(#s168_9)"/>
<circle cx="753.2" cy="581.5" r="1.7" fill="url(#s168_9)"/>
<circle cx="750.9" cy="577.8" r="1.3" fill="url(#s162_9)"/>
<circle cx="757.6" cy="580.5" r="1.7" fill="url(#s168_9)"/>
<circle cx="754" cy="578.2" r="1.8" fill="url(#s168_9)"/>
<circle cx="757.1" cy="581.7" r="1.9" fill="url(#s168_9)"/>
<circle cx="754.6" cy="581.4" r="1.5" fill="url(#s168_9)"/>
<circle cx="755" cy="577.8" r="1.4" fill="url(#s168_9)"/>
<circle cx="757.6" cy="576.8" r="1.2" fill="url(#s168_9)"/>
<circle cx="758.8" cy="579.6" r="1.6" fill="url(#s168_9)"/>
<circle cx="756.6" cy="580.5" r="1.7" fill="url(#s168_9)"/>
<circle cx="755.3" cy="574.2" r="2" fill="url(#s168_9)"/>
<circle cx="756" cy="576.6" r="1.9" fill="url(#s168_9)"/>
<circle cx="760.9" cy="580.3" r="1.5" fill="url(#s168_9)"/>
<circle cx="758.2" cy="573.4" r="1.6" fill="url(#s168_9)"/>
<circle cx="759.5" cy="573.1" r="1.5" fill="url(#s168_9)"/>
<circle cx="761.7" cy="574.1" r="1.2" fill="url(#s168_9)"/>
<circle cx="759" cy="575.9" r="1.8" fill="url(#s168_9)"/>
<circle cx="757.8" cy="575.5" r="1.6" fill="url(#s168_9)"/>
<circle cx="759.7" cy="573.1" r="1.4" fill="url(#s174_9)"/>
<circle cx="763.8" cy="575.4" r="1.7" fill="url(#s168_9)"/>
<circle cx="765.6" cy="574.6" r="1.7" fill="url(#s168_9)"/>
<circle cx="761.3" cy="577.8" r="1.6" fill="url(#s174_9)"/>
<circle cx="764.6" cy="571.7" r="1.1" fill="url(#s168_9)"/>
<circle cx="763" cy="574.3" r="1.2" fill="url(#s174_9)"/>
<circle cx="761.1" cy="575.8" r="1.3" fill="url(#s174_9)"/>
<circle cx="763.1" cy="575.3" r="1.6" fill="url(#s174_9)"/>
<circle cx="765.2" cy="574" r="1.8" fill="url(#s174_9)"/>
<circle cx="768.8" cy="571.5" r="1.4" fill="url(#s174_9)"/>
<circle cx="769.5" cy="571.1" r="1.8" fill="url(#s174_9)"/>
<circle cx="764.1" cy="569.3" r="1.6" fill="url(#s174_9)"/>
<circle cx="765.8" cy="570.8" r="1.8" fill="url(#s168_9)"/>
<circle cx="768.2" cy="567.3" r="1.5" fill="url(#s174_9)"/>
<circle cx="769.4" cy="573.6" r="1.7" fill="url(#s174_9)"/>
<circle cx="764.3" cy="567.3" r="1.5" fill="url(#s174_9)"/>
<circle cx="766.6" cy="571.3" r="1.5" fill="url(#s174_9)"/>
<circle cx="766.5" cy="569.9" r="1.5" fill="url(#s174_9)"/>
<circle cx="772.7" cy="566.6" r="1.7" fill="url(#s174_9)"/>
<circle cx="769.6" cy="570.8" r="1.5" fill="url(#s174_9)"/>
<circle cx="770.6" cy="566.2" r="1.2" fill="url(#s174_9)"/>
<circle cx="769.9" cy="568.3" r="1.2" fill="url(#s174_9)"/>
<circle cx="772.6" cy="571" r="2" fill="url(#s180_9)"/>
<circle cx="773.8" cy="566.9" r="1.5" fill="url(#s174_9)"/>
<circle cx="774.6" cy="568.8" r="1.7" fill="url(#s174_9)"/>
<circle cx="777.4" cy="564.7" r="2.1" fill="url(#s174_9)"/>
<circle cx="771.7" cy="564.3" r="1.9" fill="url(#s180_9)"/>
<circle cx="771.6" cy="564.7" r="1.4" fill="url(#s174_9)"/>
<circle cx="774.9" cy="563.6" r="1.5" fill="url(#s174_9)"/>
<circle cx="773.7" cy="564.9" r="1.2" fill="url(#s174_9)"/>
<circle cx="772.3" cy="562" r="1.5" fill="url(#s174_9)"/>
<circle cx="779.9" cy="565.4" r="1.4" fill="url(#s174_9)"/>
<circle cx="776.2" cy="563.3" r="1.2" fill="url(#s174_9)"/>
<circle cx="774" cy="562.6" r="1.4" fill="url(#s174_9)"/>
<circle cx="775.9" cy="563.7" r="1.8" fill="url(#s180_9)"/>
<circle cx="780.2" cy="565.6" r="1.6" fill="url(#s174_9)"/>
<circle cx="774.6" cy="565" r="1.6" fill="url(#s174_9)"/>
<circle cx="777.2" cy="565.3" r="1.2" fill="url(#s180_9)"/>
<circle cx="782.5" cy="560.8" r="1.1" fill="url(#s180_9)"/>
<circle cx="777.7" cy="563.3" r="1.5" fill="url(#s180_9)"/>
<circle cx="784.6" cy="564.4" r="1.8" fill="url(#s180_9)"/>
<circle cx="778.7" cy="558.7" r="1.2" fill="url(#s180_9)"/>
<circle cx="781.3" cy="564.5" r="1.8" fill="url(#s174_9)"/>
<circle cx="780.5" cy="558.7" r="1.7" fill="url(#s180_9)"/>
<circle cx="785.8" cy="559.9" r="1.9" fill="url(#s180_9)"/>
<circle cx="784.7" cy="563.7" r="1.8" fill="url(#s174_9)"/>
<circle cx="787.6" cy="560.5" r="1.8" fill="url(#s174_9)"/>
<circle cx="784.2" cy="562.6" r="1.6" fill="url(#s180_9)"/>
<circle cx="786.6" cy="559.3" r="1.7" fill="url(#s180_9)"/>
<circle cx="785.7" cy="560.9" r="1.8" fill="url(#s180_9)"/>
<circle cx="784.5" cy="560" r="1.5" fill="url(#s180_9)"/>
<circle cx="783.5" cy="558.5" r="1.3" fill="url(#s180_9)"/>
<circle cx="783" cy="555" r="1.4" fill="url(#s180_9)"/>
<circle cx="789.1" cy="556.7" r="1.4" fill="url(#s180_9)"/>
<circle cx="787.9" cy="557.3" r="1.5" fill="url(#s180_9)"/>
<circle cx="791" cy="555.9" r="1.5" fill="url(#s180_9)"/>
<circle cx="786.4" cy="555.2" r="1.4" fill="url(#s180_9)"/>
<circle cx="791.9" cy="554.3" r="1.2" fill="url(#s180_9)"/>
<circle cx="788.9" cy="557.4" r="1.5" fill="url(#s180_9)"/>
<circle cx="786.9" cy="555" r="1.1" fill="url(#s180_9)"/>
<circle cx="790.4" cy="555.9" r="1.1" fill="url(#s180_9)"/>
<circle cx="792" cy="555.8" r="1.7" fill="url(#s180_9)"/>
<circle cx="793.1" cy="551.7" r="2" fill="url(#s180_9)"/>
<circle cx="792" cy="551.9" r="1.5" fill="url(#s180_9)"/>
<circle cx="792.1" cy="555" r="1.4" fill="url(#s180_9)"/>
<circle cx="794.1" cy="556.8" r="1.3" fill="url(#s180_9)"/>
<circle cx="794.2" cy="556.5" r="1.4" fill="url(#s180_9)"/>
<circle cx="797.5" cy="551.4" r="1.9" fill="url(#s180_9)"/>
<circle cx="790.8" cy="552" r="2.1" fill="url(#s180_9)"/>
<circle cx="792.3" cy="556.1" r="2.1" fill="url(#s180_9)"/>
<circle cx="798.1" cy="549" r="1.1" fill="url(#s180_9)"/>
<circle cx="794.2" cy="550.2" r="1.6" fill="url(#s180_9)"/>
<circle cx="798.3" cy="551.9" r="1.3" fill="url(#s180_9)"/>
<circle cx="796.4" cy="554.3" r="1.4" fill="url(#s180_9)"/>
<circle cx="793.6" cy="550.7" r="1.3" fill="url(#s180_9)"/>
<circle cx="793.3" cy="549.1" r="1" fill="url(#s180_9)"/>
<circle cx="801.8" cy="547.3" r="1.9" fill="url(#s180_9)"/>
<circle cx="795.3" cy="547.5" r="2.1" fill="url(#s180_9)"/>
<circle cx="794.4" cy="548.2" r="1.8" fill="url(#s180_9)"/>
<circle cx="796.7" cy="546.5" r="1.5" fill="url(#s180_9)"/>
<circle cx="802.2" cy="545.9" r="1.4" fill="url(#s180_9)"/>
<circle cx="799.9" cy="547" r="1.4" fill="url(#s180_9)"/>
<circle cx="801.3" cy="549.7" r="1.4" fill="url(#s180_9)"/>
<circle cx="803.8" cy="546.1" r="1.9" fill="url(#s180_9)"/>
<circle cx="797.6" cy="550.1" r="1.9" fill="url(#s180_9)"/>
<circle cx="801.6" cy="546" r="1.3" fill="url(#s180_9)"/>
<circle cx="797.8" cy="547.6" r="1.1" fill="url(#s180_9)"/>
<circle cx="802.3" cy="551.2" r="1.3" fill="url(#s180_9)"/>
<circle cx="805.7" cy="550.6" r="1.6" fill="url(#s180_9)"/>
<circle cx="806.1" cy="548.1" r="2" fill="url(#s180_9)"/>
<circle cx="805.1" cy="544.7" r="1.4" fill="url(#s180_9)"/>
<circle cx="803.7" cy="547.5" r="1.7" fill="url(#s180_9)"/>
<circle cx="805" cy="545.8" r="1.3" fill="url(#s180_9)"/>
<circle cx="800.5" cy="544.7" r="1.6" fill="url(#s180_9)"/>
<circle cx="805.3" cy="545" r="1.4" fill="url(#s180_9)"/>
<circle cx="809.8" cy="546.2" r="1.6" fill="url(#s180_9)"/>
<circle cx="805.7" cy="544.2" r="1.6" fill="url(#s180_9)"/>
<circle cx="810.5" cy="543.2" r="1.8" fill="url(#s180_9)"/>
<circle cx="811" cy="542.1" r="1.8" fill="url(#s174_9)"/>
<circle cx="807" cy="544.4" r="1.4" fill="url(#s174_9)"/>
<circle cx="808.9" cy="542.3" r="1.2" fill="url(#s180_9)"/>
<circle cx="807.9" cy="540.9" r="1.6" fill="url(#s174_9)"/>
<circle cx="809.4" cy="545.1" r="1.2" fill="url(#s180_9)"/>
<circle cx="813.7" cy="544.1" r="1.9" fill="url(#s180_9)"/>
<circle cx="808.4" cy="545" r="1.8" fill="url(#s180_9)"/>
<circle cx="814" cy="539.6" r="1.9" fill="url(#s180_9)"/>
<circle cx="814.5" cy="539.5" r="1.5" fill="url(#s174_9)"/>
<circle cx="808.4" cy="545.1" r="1.3" fill="url(#s180_9)"/>
<circle cx="809.1" cy="544.9" r="1.5" fill="url(#s180_9)"/>
<circle cx="813.3" cy="539.2" r="1.4" fill="url(#s180_9)"/>
<circle cx="814.2" cy="541.6" r="1.2" fill="url(#s180_9)"/>
<circle cx="809.7" cy="538.7" r="1.4" fill="url(#s180_9)"/>
<circle cx="812.8" cy="543.3" r="1.7" fill="url(#s180_9)"/>
<circle cx="816" cy="541.1" r="2.1" fill="url(#s180_9)"/>
<circle cx="813.4" cy="543" r="1.6" fill="url(#s180_9)"/>
<circle cx="817.7" cy="537.8" r="1.5" fill="url(#s180_9)"/>
<circle cx="815.7" cy="542.5" r="1" fill="url(#s180_9)"/>
<circle cx="817.7" cy="535.9" r="1.2" fill="url(#s174_9)"/>
<circle cx="814.5" cy="539.5" r="1.9" fill="url(#s174_9)"/>
<circle cx="821.2" cy="539.1" r="2" fill="url(#s174_9)"/>
<circle cx="815" cy="537.3" r="1.5" fill="url(#s174_9)"/>
<circle cx="818.7" cy="539.3" r="1.3" fill="url(#s174_9)"/>
<circle cx="819.7" cy="538.8" r="1.4" fill="url(#s174_9)"/>
<circle cx="816.6" cy="536.5" r="1.4" fill="url(#s180_9)"/>
<circle cx="819.7" cy="538.4" r="1.1" fill="url(#s174_9)"/>
<circle cx="824.8" cy="539.5" r="1.2" fill="url(#s174_9)"/>
<circle cx="820.7" cy="534.6" r="1.5" fill="url(#s180_9)"/>
<circle cx="821.4" cy="538.3" r="2" fill="url(#s174_9)"/>
<circle cx="823.6" cy="533.6" r="2" fill="url(#s180_9)"/>
<circle cx="821.5" cy="537.6" r="1.5" fill="url(#s174_9)"/>
<circle cx="820.4" cy="534.7" r="1.7" fill="url(#s174_9)"/>
<circle cx="821.9" cy="533" r="1.5" fill="url(#s174_9)"/>
<circle cx="827" cy="532.7" r="1.5" fill="url(#s174_9)"/>
<circle cx="822.7" cy="533.3" r="1.4" fill="url(#s174_9)"/>
<circle cx="823.8" cy="534.3" r="1.7" fill="url(#s174_9)"/>
<circle cx="824" cy="530.9" r="1.4" fill="url(#s174_9)"/>
<circle cx="826.4" cy="534.2" r="1.1" fill="url(#s180_9)"/>
<circle cx="827.6" cy="530.3" r="1" fill="url(#s174_9)"/>
<circle cx="827.4" cy="533.7" r="1" fill="url(#s174_9)"/>
<circle cx="826.9" cy="532.9" r="1.5" fill="url(#s174_9)"/>
<circle cx="827.5" cy="529.2" r="1.8" fill="url(#s180_9)"/>
<circle cx="831.6" cy="535.8" r="1.8" fill="url(#s174_9)"/>
<circle cx="830.9" cy="531.2" r="1.2" fill="url(#s174_9)"/>
<circle cx="830.1" cy="533.2" r="1.5" fill="url(#s174_9)"/>
<circle cx="826.9" cy="532.7" r="1.1" fill="url(#s180_9)"/>
<circle cx="831.6" cy="529.3" r="1.9" fill="url(#s174_9)"/>
<circle cx="829.3" cy="532" r="1.9" fill="url(#s180_9)"/>
<circle cx="832.8" cy="532.2" r="1.8" fill="url(#s180_9)"/>
<circle cx="833.8" cy="528.7" r="1.3" fill="url(#s174_9)"/>
<circle cx="830.1" cy="533.3" r="1.4" fill="url(#s180_9)"/>
<circle cx="830.9" cy="527.8" r="1.6" fill="url(#s174_9)"/>
<circle cx="834.7" cy="526.3" r="1.7" fill="url(#s174_9)"/>
<circle cx="833.7" cy="529.3" r="1.7" fill="url(#s174_9)"/>
<circle cx="833.3" cy="531.3" r="2" fill="url(#s174_9)"/>
<circle cx="831.8" cy="526.2" r="1.4" fill="url(#s180_9)"/>
<circle cx="835.8" cy="530.4" r="2.1" fill="url(#s174_9)"/>
<circle cx="838.7" cy="524.7" r="1.9" fill="url(#s174_9)"/>
<circle cx="840.3" cy="529" r="1.4" fill="url(#s174_9)"/>
<circle cx="834.5" cy="524.1" r="1.4" fill="url(#s174_9)"/>
<circle cx="834.7" cy="527.3" r="1.1" fill="url(#s174_9)"/>
<circle cx="835.7" cy="526.5" r="1.3" fill="url(#s174_9)"/>
<circle cx="836.2" cy="529.3" r="1.9" fill="url(#s174_9)"/>
<circle cx="836.8" cy="527.6" r="1.3" fill="url(#s180_9)"/>
<circle cx="836.3" cy="522.9" r="1.3" fill="url(#s174_9)"/>
<circle cx="843.5" cy="527.4" r="1.5" fill="url(#s174_9)"/>
<circle cx="836.1" cy="525.7" r="1.5" fill="url(#s174_9)"/>
<circle cx="842.8" cy="528" r="1.9" fill="url(#s174_9)"/>
<circle cx="838.6" cy="524.3" r="2.1" fill="url(#s174_9)"/>
<circle cx="842.7" cy="524.2" r="1.7" fill="url(#s168_9)"/>
<circle cx="840.8" cy="520.6" r="1" fill="url(#s174_9)"/>
<circle cx="847.2" cy="524.9" r="1.4" fill="url(#s174_9)"/>
<circle cx="846.1" cy="522.7" r="1.4" fill="url(#s174_9)"/>
<circle cx="844.7" cy="520.9" r="1.2" fill="url(#s174_9)"/>
<circle cx="846.8" cy="526.2" r="1.4" fill="url(#s174_9)"/>
<circle cx="844.2" cy="523.4" r="1.4" fill="url(#s174_9)"/>
<circle cx="849.4" cy="521.9" r="1.5" fill="url(#s168_9)"/>
<circle cx="844.3" cy="521.9" r="1.2" fill="url(#s174_9)"/>
<circle cx="842.7" cy="520.4" r="1.8" fill="url(#s174_9)"/>
<circle cx="847.9" cy="521.1" r="0.9" fill="url(#s174_9)"/>
<circle cx="847.4" cy="520.7" r="1.2" fill="url(#s168_9)"/>
<circle cx="848.1" cy="522" r="1" fill="url(#s174_9)"/>
<circle cx="851.4" cy="521.4" r="1.8" fill="url(#s174_9)"/>
<circle cx="847.9" cy="522" r="1.7" fill="url(#s174_9)"/>
<circle cx="850.2" cy="521.1" r="1.9" fill="url(#s174_9)"/>
<circle cx="851.2" cy="519.2" r="1.3" fill="url(#s174_9)"/>
<circle cx="848.3" cy="520.4" r="1.6" fill="url(#s174_9)"/>
<circle cx="851.2" cy="519.8" r="1.4" fill="url(#s174_9)"/>
<circle cx="847.3" cy="517.8" r="1.4" fill="url(#s174_9)"/>
<circle cx="854.7" cy="519.9" r="1.5" fill="url(#s174_9)"/>
<circle cx="853.6" cy="516.2" r="1.6" fill="url(#s174_9)"/>
<circle cx="854.1" cy="518.3" r="1.7" fill="url(#s168_9)"/>
<circle cx="849.1" cy="518.7" r="1.2" fill="url(#s174_9)"/>
<circle cx="856.6" cy="518.2" r="1.3" fill="url(#s174_9)"/>
<circle cx="851.9" cy="514.7" r="1.5" fill="url(#s174_9)"/>
<circle cx="852.8" cy="514.5" r="1.5" fill="url(#s174_9)"/>
<circle cx="850.7" cy="519.8" r="1.3" fill="url(#s174_9)"/>
<circle cx="854.6" cy="513.1" r="1.4" fill="url(#s174_9)"/>
<circle cx="858.2" cy="514.6" r="1.6" fill="url(#s174_9)"/>
<circle cx="857.6" cy="518" r="1.7" fill="url(#s174_9)"/>
<circle cx="713.3" cy="548.1" r="1.4" fill="url(#s192_9)"/>
<circle cx="712" cy="548.2" r="1.4" fill="url(#s192_9)"/>
<circle cx="720.6" cy="552" r="1.6" fill="url(#s192_9)"/>
<circle cx="719" cy="552.6" r="1.7" fill="url(#s192_9)"/>
<circle cx="722.5" cy="560" r="1.4" fill="url(#s186_9)"/>
<circle cx="725.9" cy="558.2" r="1.4" fill="url(#s186_9)"/>
<circle cx="727.3" cy="562.8" r="1.4" fill="url(#s186_9)"/>
<circle cx="728.1" cy="565.9" r="1.6" fill="url(#s186_9)"/>
<circle cx="733.5" cy="571" r="1.4" fill="url(#s180_9)"/>
<circle cx="731.9" cy="571.5" r="1.6" fill="url(#s180_9)"/>
<circle cx="737.4" cy="573.7" r="1.9" fill="url(#s174_9)"/>
<circle cx="741.4" cy="574.6" r="1.9" fill="url(#s174_9)"/>
<circle cx="743.8" cy="578.8" r="1.7" fill="url(#s168_9)"/>
<circle cx="743.2" cy="579" r="2" fill="url(#s168_9)"/>
<circle cx="750" cy="587.5" r="2" fill="url(#s162_9)"/>
<circle cx="749.7" cy="589.9" r="1.9" fill="url(#s162_9)"/>
<circle cx="757.8" cy="592.8" r="1.7" fill="url(#s156_9)"/>
<circle cx="758.7" cy="595.9" r="1.6" fill="url(#s156_9)"/>
<circle cx="763.6" cy="598.8" r="1.6" fill="url(#s156_9)"/>
<circle cx="762.5" cy="598.4" r="2.2" fill="url(#s156_9)"/>
<circle cx="768.7" cy="605.1" r="1.7" fill="url(#s150_9)"/>
<circle cx="767.1" cy="607" r="1.6" fill="url(#s150_9)"/>
<circle cx="773" cy="610.5" r="1.9" fill="url(#s150_9)"/>
<circle cx="770.3" cy="610.3" r="2.1" fill="url(#s150_9)"/>
<circle cx="776" cy="619.6" r="2.4" fill="url(#s144_9)"/>
<circle cx="778.1" cy="618" r="2.2" fill="url(#s144_9)"/>
<circle cx="781.2" cy="623.9" r="2.2" fill="url(#s144_9)"/>
<circle cx="781.6" cy="623.8" r="2.4" fill="url(#s144_9)"/>
<circle cx="936.8" cy="463.9" r="1.9" fill="url(#s180_9)"/>
<circle cx="927.3" cy="458.6" r="1.4" fill="url(#s180_9)"/>
<circle cx="930" cy="464.1" r="1.8" fill="url(#s180_9)"/>
<circle cx="935.8" cy="464.2" r="1.5" fill="url(#s180_9)"/>
<circle cx="923.8" cy="461.9" r="1.5" fill="url(#s180_9)"/>
<circle cx="935.2" cy="465.2" r="1.7" fill="url(#s180_9)"/>
<circle cx="933.8" cy="463.8" r="1.7" fill="url(#s180_9)"/>
<circle cx="941.2" cy="471.6" r="1.9" fill="url(#s174_9)"/>
<circle cx="943" cy="471.9" r="1.4" fill="url(#s174_9)"/>
<circle cx="945.8" cy="468.4" r="1.5" fill="url(#s174_9)"/>
<circle cx="936.8" cy="468.6" r="2" fill="url(#s174_9)"/>
<circle cx="937.5" cy="471.2" r="2" fill="url(#s174_9)"/>
<circle cx="857.7" cy="578.4" r="2.1" fill="url(#s156_9)"/>
<circle cx="859.7" cy="575" r="1.9" fill="url(#s156_9)"/>
<circle cx="868.2" cy="580.7" r="2.6" fill="url(#s156_9)"/>
<circle cx="862" cy="578" r="1.7" fill="url(#s156_9)"/>
<circle cx="861" cy="578.7" r="2.6" fill="url(#s156_9)"/>
<circle cx="855.9" cy="579.3" r="1.7" fill="url(#s156_9)"/>
<circle cx="868.6" cy="575.6" r="2.3" fill="url(#s156_9)"/>
<circle cx="863.9" cy="575.6" r="2.1" fill="url(#s156_9)"/>
<circle cx="1060.9" cy="365.4" r="1.5" fill="url(#s192_9)"/>
<circle cx="1055.9" cy="369.7" r="2" fill="url(#s192_9)"/>
<circle cx="1062.6" cy="367.2" r="1.6" fill="url(#s192_9)"/>
<circle cx="1057" cy="369.9" r="1.8" fill="url(#s192_9)"/>
<circle cx="1056.5" cy="367" r="1.3" fill="url(#s192_9)"/>
<circle cx="1050.8" cy="370.1" r="1.9" fill="url(#s198_9)"/>
<circle cx="1041.9" cy="376.7" r="1.4" fill="url(#s198_9)"/>
<circle cx="1048.4" cy="375.7" r="2" fill="url(#s198_9)"/>
<circle cx="1053.2" cy="371.2" r="1.8" fill="url(#s198_9)"/>
<circle cx="974" cy="415.3" r="1.6" fill="url(#s192_9)"/>
<circle cx="981.1" cy="414.2" r="1.8" fill="url(#s192_9)"/>
<circle cx="975.6" cy="421.1" r="1.6" fill="url(#s192_9)"/>
<circle cx="971.5" cy="420.8" r="1.3" fill="url(#s192_9)"/>
<circle cx="940.6" cy="430.3" r="1.3" fill="url(#s192_9)"/>
<circle cx="933.3" cy="434.8" r="1.4" fill="url(#s192_9)"/>
<circle cx="943.9" cy="429.2" r="2" fill="url(#s192_9)"/>
<circle cx="931.7" cy="433.3" r="1.7" fill="url(#s192_9)"/>
<circle cx="601.4" cy="745.4" r="2.4" fill="url(#s138_9)"/>
<circle cx="606.9" cy="742.6" r="3.1" fill="url(#s138_9)"/>
<circle cx="596.5" cy="746" r="3" fill="url(#s138_9)"/>
<circle cx="627.6" cy="692.7" r="2.9" fill="url(#s144_9)"/>
<circle cx="628.8" cy="698.9" r="2.9" fill="url(#s144_9)"/>
<circle cx="631.5" cy="696.8" r="2" fill="url(#s144_9)"/>
<circle cx="849.6" cy="641.7" r="2" fill="url(#s138_9)"/>
<circle cx="839" cy="636.8" r="2.2" fill="url(#s138_9)"/>
<circle cx="848.7" cy="642.1" r="2.7" fill="url(#s138_9)"/>
<circle cx="903.2" cy="693.5" r="2.7" fill="url(#s120_9)"/>
<circle cx="901.2" cy="689.5" r="2.8" fill="url(#s120_9)"/>
<circle cx="908.3" cy="692.7" r="3.6" fill="url(#s120_9)"/>
<circle cx="566" cy="692" r="4.2" fill="url(#s138_9)"/>
<circle cx="571" cy="688" r="4.2" fill="url(#s138_9)"/>
<circle cx="577" cy="685" r="4.2" fill="url(#s138_9)"/>
<circle cx="582" cy="682" r="4.2" fill="url(#s138_9)"/>
<circle cx="562" cy="697" r="4.2" fill="url(#s138_9)"/>
<g filter="url(#fSoft)">
<polygon points="236,581 260,575 290,568 327,560.5 345,556.5 360,553.5 371,552.3 380,555 388,560 398,564 406,567 390,566.5 370.7,566 355,570.5 337.6,577 300,588 255,600.5 253,610" fill="url(#gA)"/>
<polygon points="282,657 255,600.5 300,588 337.6,577 355,570.5 370.7,566 390,566.5 406,567 437,563 457.6,560.7 470,563 483,572 540,568 620,560 640,600 574,605 517,609 460,615 402,624 340,638 285,653" fill="url(#gB)" mask="url(#mB)"/>
<polygon points="282,657 255,600.5 300,588 337.6,577 355,570.5 370.7,566 390,566.5 406,567 437,563 457.6,560.7 470,563 483,572 540,568 620,560 640,600 574,605 517,609 460,615 402,624 340,638 285,653" fill="url(#gB2)" mask="url(#mB)"/>
<polyline points="285,654.5 340,639.5 402,625.5 460,616.5 517,610.5 574,606.5" fill="none" stroke="#48ecdc" stroke-opacity=".55" stroke-width="2.2" mask="url(#mB)"/>
</g>
<g style="mix-blend-mode:multiply" opacity=".85"><polygon points="236,581 260,575 290,568 327,560.5 345,556.5 360,553.5 371,552.3 380,555 388,560 398,564 406,567 390,566.5 370.7,566 355,570.5 337.6,577 300,588 255,600.5 253,610" fill="url(#pSB)"/><polygon points="282,657 255,600.5 300,588 337.6,577 355,570.5 370.7,566 390,566.5 406,567 437,563 457.6,560.7 470,563 483,572 540,568 620,560 640,600 574,605 517,609 460,615 402,624 340,638 285,653" fill="url(#pSB)" mask="url(#mB)"/></g>
<circle cx="335.7" cy="614.7" r="2.3" fill="url(#s192_9)"/>
<circle cx="398.4" cy="568.5" r="2.8" fill="url(#s180_9)"/>
<circle cx="308.6" cy="632.9" r="2.8" fill="url(#s198_9)"/>
<circle cx="381.2" cy="584.6" r="2.4" fill="url(#s186_9)"/>
<circle cx="335.7" cy="629" r="2.6" fill="url(#s198_9)"/>
<circle cx="249.7" cy="597.9" r="2.2" fill="url(#s210_9)"/>
<circle cx="326.8" cy="623.8" r="2.7" fill="url(#s192_9)"/>
<circle cx="423.5" cy="587.5" r="2.3" fill="url(#s192_9)"/>
<circle cx="428.9" cy="575.1" r="2.7" fill="url(#s186_9)"/>
<circle cx="409.8" cy="609.2" r="2.5" fill="url(#s198_9)"/>
<circle cx="400.4" cy="597.7" r="2.8" fill="url(#s198_9)"/>
<circle cx="399.4" cy="565.9" r="2.5" fill="url(#s234_8)"/>
<circle cx="441.3" cy="602.5" r="2.2" fill="url(#s198_9)"/>
<circle cx="442.3" cy="595.3" r="2.4" fill="url(#s198_9)"/>
<circle cx="321" cy="567.2" r="2.7" fill="url(#s210_9)"/>
<circle cx="389.8" cy="569.5" r="2.3" fill="url(#s174_9)"/>
<circle cx="463.3" cy="590.6" r="2.8" fill="url(#s198_9)"/>
<circle cx="314.8" cy="565.5" r="2.6" fill="url(#s210_9)"/>
<circle cx="498.2" cy="581.5" r="2.5" fill="url(#s192_9)"/>
<circle cx="271.6" cy="573.6" r="2.8" fill="url(#s210_9)"/>
<circle cx="460.5" cy="562.5" r="2.8" fill="url(#s192_9)"/>
<circle cx="326.3" cy="602.2" r="2.5" fill="url(#s186_9)"/>
<circle cx="389.8" cy="572.4" r="2.4" fill="url(#s180_9)"/>
<circle cx="465.6" cy="569.5" r="2.3" fill="url(#s198_9)"/>
<circle cx="427.8" cy="572.1" r="2.6" fill="url(#s186_9)"/>
<circle cx="252.3" cy="596" r="2.3" fill="url(#s210_9)"/>
<circle cx="429" cy="567.5" r="2.7" fill="url(#s186_9)"/>
<circle cx="318.5" cy="600.7" r="2.7" fill="url(#s186_9)"/>
<circle cx="414.5" cy="593.6" r="2.8" fill="url(#s192_9)"/>
<circle cx="403" cy="610.7" r="2.9" fill="url(#s198_9)"/>
<circle cx="310.3" cy="593.4" r="2.6" fill="url(#s180_9)"/>
<circle cx="375.2" cy="567.1" r="2.2" fill="url(#s168_9)"/>
<circle cx="324" cy="624.8" r="2.8" fill="url(#s198_9)"/>
<circle cx="307" cy="596.4" r="2.6" fill="url(#s180_9)"/>
<circle cx="416.5" cy="580.8" r="2.7" fill="url(#s186_9)"/>
<circle cx="412.1" cy="614.5" r="2.5" fill="url(#s198_9)"/>
<circle cx="294.7" cy="574.7" r="2.6" fill="url(#s210_9)"/>
<circle cx="294.9" cy="593.5" r="2.2" fill="url(#s180_9)"/>
<circle cx="328.8" cy="584.9" r="2.1" fill="url(#s174_9)"/>
<circle cx="474.8" cy="611" r="2.6" fill="url(#s198_9)"/>
<circle cx="373.8" cy="567.1" r="2.2" fill="url(#s174_9)"/>
<circle cx="378.6" cy="622.5" r="2.4" fill="url(#s198_9)"/>
<circle cx="249.7" cy="596.5" r="3" fill="url(#s210_9)"/>
<circle cx="340.9" cy="619.3" r="3" fill="url(#s198_9)"/>
<circle cx="494.9" cy="576.4" r="2.3" fill="url(#s198_9)"/>
<circle cx="480.5" cy="591.2" r="2.5" fill="url(#s198_9)"/>
<circle cx="277" cy="595.7" r="2" fill="url(#s180_9)"/>
<circle cx="480.3" cy="608.9" r="2.8" fill="url(#s198_9)"/>
<circle cx="270.7" cy="622" r="2.9" fill="url(#s192_9)"/>
<circle cx="367" cy="621.6" r="2.2" fill="url(#s198_9)"/>
<circle cx="272.3" cy="623.8" r="2.5" fill="url(#s186_9)"/>
<circle cx="286.7" cy="584.9" r="2.7" fill="url(#s210_9)"/>
<circle cx="350.8" cy="619" r="2.8" fill="url(#s198_9)"/>
<circle cx="491" cy="572.7" r="2.6" fill="url(#s198_9)"/>
<circle cx="418.4" cy="593.4" r="2.2" fill="url(#s192_9)"/>
<circle cx="314.6" cy="614.1" r="2.8" fill="url(#s192_9)"/>
<circle cx="484.7" cy="573.9" r="3" fill="url(#s198_9)"/>
<circle cx="402.1" cy="616.5" r="2.8" fill="url(#s198_9)"/>
<circle cx="359.2" cy="618.4" r="2.3" fill="url(#s192_9)"/>
<circle cx="344.7" cy="600.7" r="2.1" fill="url(#s186_9)"/>
<circle cx="285.5" cy="610.3" r="2.3" fill="url(#s186_9)"/>
<circle cx="273.1" cy="605.4" r="2.8" fill="url(#s174_9)"/>
<circle cx="290.2" cy="604.8" r="2.7" fill="url(#s180_9)"/>
<circle cx="429.7" cy="573.4" r="2.9" fill="url(#s192_9)"/>
<circle cx="352.7" cy="630" r="2" fill="url(#s204_9)"/>
<circle cx="475.2" cy="600.9" r="2.6" fill="url(#s198_9)"/>
<circle cx="315.8" cy="628" r="2.9" fill="url(#s198_9)"/>
<circle cx="282.1" cy="579.6" r="2.6" fill="url(#s210_9)"/>
<circle cx="364.6" cy="627.1" r="2.3" fill="url(#s198_9)"/>
<circle cx="289" cy="596.7" r="2.6" fill="url(#s174_9)"/>
<circle cx="458.9" cy="589.5" r="2.9" fill="url(#s198_9)"/>
<circle cx="439.3" cy="599.6" r="2.7" fill="url(#s198_9)"/>
<circle cx="337.2" cy="573" r="2.7" fill="url(#s216_9)"/>
<circle cx="368.1" cy="561.7" r="2.5" fill="url(#s234_8)"/>
<circle cx="327.3" cy="633.1" r="2.7" fill="url(#s198_9)"/>
<circle cx="308.2" cy="575.9" r="2.3" fill="url(#s210_9)"/>
<circle cx="286.2" cy="579.5" r="2.5" fill="url(#s210_9)"/>
<circle cx="314.7" cy="584.8" r="2.8" fill="url(#s180_9)"/>
<circle cx="308.9" cy="567.2" r="2.1" fill="url(#s210_9)"/>
<circle cx="311" cy="607" r="2.9" fill="url(#s180_9)"/>
<circle cx="457.6" cy="610.6" r="2" fill="url(#s198_9)"/>
<circle cx="429.8" cy="574.9" r="2" fill="url(#s192_9)"/>
<circle cx="453.4" cy="571.6" r="2" fill="url(#s192_9)"/>
<circle cx="331" cy="589.2" r="2.9" fill="url(#s180_9)"/>
<circle cx="273.6" cy="627.5" r="2.7" fill="url(#s192_9)"/>
<circle cx="254.9" cy="584.5" r="2.3" fill="url(#s210_9)"/>
<circle cx="392.4" cy="564.4" r="2.7" fill="url(#s234_8)"/>
<circle cx="314.2" cy="615.2" r="2" fill="url(#s192_9)"/>
<circle cx="351.4" cy="570" r="2.8" fill="url(#s222_9)"/>
<circle cx="262.6" cy="597.2" r="2.5" fill="url(#s210_9)"/>
<circle cx="299.2" cy="640.8" r="2.6" fill="url(#s204_9)"/>
<circle cx="440.5" cy="584.1" r="2.3" fill="url(#s192_9)"/>
<circle cx="382.8" cy="624.8" r="2.4" fill="url(#s204_9)"/>
<circle cx="291.3" cy="591.8" r="2.4" fill="url(#s174_9)"/>
<circle cx="285.8" cy="573.4" r="2.6" fill="url(#s210_9)"/>
<circle cx="466" cy="590.1" r="2.5" fill="url(#s198_9)"/>
<circle cx="307" cy="646.2" r="2.2" fill="url(#s198_9)"/>
<circle cx="433.8" cy="585.4" r="2.3" fill="url(#s192_9)"/>
<circle cx="477.9" cy="592.7" r="2.2" fill="url(#s198_9)"/>
<circle cx="283.2" cy="587.2" r="2.1" fill="url(#s210_9)"/>
<circle cx="397.3" cy="587.4" r="2.1" fill="url(#s192_9)"/>
<circle cx="256" cy="596.6" r="2.3" fill="url(#s204_9)"/>
<circle cx="327.3" cy="599.6" r="2.7" fill="url(#s180_9)"/>
<circle cx="429.7" cy="600.1" r="2.2" fill="url(#s198_9)"/>
<circle cx="519" cy="577.9" r="2.4" fill="url(#s198_9)"/>
<circle cx="310.7" cy="573.9" r="2.8" fill="url(#s216_9)"/>
<circle cx="334.3" cy="638.6" r="2.3" fill="url(#s204_9)"/>
<circle cx="393.6" cy="615.8" r="2.8" fill="url(#s198_9)"/>
<circle cx="381.2" cy="614.3" r="2.3" fill="url(#s198_9)"/>
<circle cx="294.6" cy="615" r="2.5" fill="url(#s192_9)"/>
<circle cx="353" cy="619.9" r="2.7" fill="url(#s198_9)"/>
<circle cx="335.8" cy="618.9" r="2.9" fill="url(#s198_9)"/>
<circle cx="448.6" cy="567.7" r="2.2" fill="url(#s192_9)"/>
<circle cx="437.2" cy="565" r="2.2" fill="url(#s186_9)"/>
<circle cx="277.3" cy="591.1" r="2.2" fill="url(#s210_9)"/>
<circle cx="508.5" cy="572.4" r="3" fill="url(#s198_9)"/>
<circle cx="459.8" cy="591.2" r="2.6" fill="url(#s198_9)"/>
<circle cx="340.5" cy="603.3" r="2.1" fill="url(#s186_9)"/>
<circle cx="478.2" cy="585.3" r="2.4" fill="url(#s198_9)"/>
<circle cx="439.6" cy="579.8" r="2.2" fill="url(#s192_9)"/>
<circle cx="448.5" cy="599" r="2.4" fill="url(#s198_9)"/>
<circle cx="277.2" cy="584.2" r="2.6" fill="url(#s210_9)"/>
<circle cx="419.5" cy="574.7" r="3" fill="url(#s186_9)"/>
<circle cx="305.3" cy="591.8" r="2" fill="url(#s180_9)"/>
<circle cx="303.9" cy="641.3" r="2.7" fill="url(#s204_9)"/>
<circle cx="408.5" cy="578.2" r="2" fill="url(#s186_9)"/>
<circle cx="471.8" cy="567.2" r="2.5" fill="url(#s192_9)"/>
<circle cx="298.9" cy="617.9" r="2.2" fill="url(#s186_9)"/>
<circle cx="411.1" cy="596.4" r="2" fill="url(#s192_9)"/>
<circle cx="277.5" cy="603" r="2.3" fill="url(#s180_9)"/>
<circle cx="363.3" cy="556.7" r="2.4" fill="url(#s234_8)"/>
<circle cx="368.6" cy="558.6" r="2.2" fill="url(#s234_8)"/>
<circle cx="343.9" cy="586.4" r="2.7" fill="url(#s180_9)"/>
<circle cx="476.1" cy="571.1" r="2.1" fill="url(#s198_9)"/>
<circle cx="304.9" cy="642.7" r="2.8" fill="url(#s204_9)"/>
<circle cx="424" cy="590.5" r="2.7" fill="url(#s192_9)"/>
<circle cx="376.3" cy="561.2" r="2.1" fill="url(#s240_8)"/>
<circle cx="366.7" cy="574.4" r="2.9" fill="url(#s174_9)"/>
<circle cx="400.9" cy="604.9" r="2.2" fill="url(#s198_9)"/>
<circle cx="291.7" cy="568.8" r="2.1" fill="url(#s210_9)"/>
<circle cx="378.3" cy="590.3" r="2.7" fill="url(#s180_9)"/>
<circle cx="327.6" cy="595.6" r="2.7" fill="url(#s180_9)"/>
<circle cx="305.2" cy="602.8" r="2.1" fill="url(#s180_9)"/>
<circle cx="353.5" cy="623.8" r="2.1" fill="url(#s198_9)"/>
<circle cx="290.3" cy="605.4" r="2.4" fill="url(#s180_9)"/>
<circle cx="417.3" cy="580.2" r="2.9" fill="url(#s186_9)"/>
<circle cx="298.6" cy="646.8" r="2.6" fill="url(#s204_9)"/>
<circle cx="354.6" cy="559.8" r="2.9" fill="url(#s222_9)"/>
<circle cx="506.4" cy="577.2" r="2.6" fill="url(#s198_9)"/>
<circle cx="337.2" cy="578.1" r="2.5" fill="url(#s174_9)"/>
<circle cx="402.2" cy="582.4" r="2.1" fill="url(#s186_9)"/>
<circle cx="360.4" cy="580.3" r="2.7" fill="url(#s180_9)"/>
<circle cx="349.8" cy="631.2" r="2.3" fill="url(#s204_9)"/>
<circle cx="426.6" cy="582.9" r="2.4" fill="url(#s192_9)"/>
<circle cx="316.3" cy="603.3" r="2.2" fill="url(#s186_9)"/>
<circle cx="360.6" cy="614.8" r="2.4" fill="url(#s198_9)"/>
<circle cx="366.5" cy="587.7" r="2.8" fill="url(#s180_9)"/>
<circle cx="476.9" cy="597.8" r="2.6" fill="url(#s198_9)"/>
<circle cx="521" cy="602.9" r="2.7" fill="url(#s198_9)"/>
<circle cx="277.1" cy="614.8" r="2.2" fill="url(#s186_9)"/>
<circle cx="417.7" cy="575.8" r="2.8" fill="url(#s192_9)"/>
<circle cx="377.6" cy="590.1" r="2.9" fill="url(#s186_9)"/>
<circle cx="486.8" cy="611" r="2.1" fill="url(#s198_9)"/>
<circle cx="345.1" cy="588.3" r="2.3" fill="url(#s180_9)"/>
<circle cx="334.3" cy="608.5" r="2.3" fill="url(#s192_9)"/>
<circle cx="240.5" cy="584.7" r="2.2" fill="url(#s210_9)"/>
<circle cx="336.9" cy="565.6" r="2.5" fill="url(#s216_9)"/>
<circle cx="284" cy="608.5" r="2.6" fill="url(#s180_9)"/>
<circle cx="292.3" cy="608.3" r="2.4" fill="url(#s186_9)"/>
<circle cx="440.6" cy="567.2" r="2" fill="url(#s186_9)"/>
<path d="M724.5 181V520.5H392" fill="none" stroke="#8a8a8a" stroke-width="1.1"/>
<ellipse cx="391.5" cy="519.8" rx="3.2" ry="12.6" fill="none" stroke="#9a9a9a" stroke-width="1"/>
<path d="M725 165.2L739.2 179.5Q739 181.4 736 181.4H714Q711 181.4 710.8 179.5z" fill="#414141"/>
<path d="M654 119.5A71 9.4 0 0 1 796 119.5V138A71 9.4 0 0 1 654 138z" fill="url(#gR1)"/>
<ellipse cx="725" cy="119.5" rx="68" ry="8.6" fill="url(#gR1b)"/>
<path d="M657.5 121A67.5 8.2 0 0 0 792.5 121A67.5 5.2 0 0 1 657.5 121z" fill="#000"/>
<path d="M696 128.6Q725 130.4 750.4 128.6V145.6Q725 147.6 696 145.6z" fill="#6b6b6b"/>
<path d="M696.6 145.2Q725 147.6 750.2 145.2" fill="none" stroke="#f4f4f4" stroke-width="1.3"/>
<path d="M749.8 129V145.4" fill="none" stroke="#8c8c8c" stroke-width="1.2"/>
<path d="M340.4 458.2A17.9 61.5 0 0 0 340.4 581.2L353.2 581.2A17.5 61.5 0 0 0 353.2 458.2zM346.6 466A15.2 54 0 0 1 346.6 573.4A13.2 54 0 0 1 346.6 466z" fill="url(#gR2)" fill-rule="evenodd"/>
<rect x="320" y="540" width="40" height="45" fill="url(#gR2b)" clip-path="url(#cR2)"/>
<path d="M321 498.6L335.6 498.2Q334.2 520 335.8 544.6L322 544.9Q319 521 321 498.6z" fill="#6b6b6b"/>
<path d="M335.3 499.5Q334 520 335.5 544.3L323.6 544.7" fill="none" stroke="#ededed" stroke-width="1.2"/>
</svg>
</div>

<div class="abs grip" style="left:3px;top:751px;"><i style="top:0"></i><i style="top:6px"></i><i style="top:12px"></i><i style="top:18px"></i><i style="top:24px"></i><i style="top:30px"></i></div>
<div class="abs grip" style="left:1447px;top:537px;"><i style="top:0"></i><i style="top:6px"></i><i style="top:12px"></i><i style="top:18px"></i><i style="top:24px"></i><i style="top:30px"></i></div>
<div class="abs grip" style="left:1041px;top:1097px;"><i style="left:0"></i><i style="left:6px"></i><i style="left:12px"></i><i style="left:18px"></i><i style="left:24px"></i><i style="left:30px"></i></div>

<div class="abs" id="tl">
<span style="left:46.3px">6m</span><span style="left:179px">8m</span><span style="left:311.8px">10m</span><span style="left:444.6px">12m</span><span style="left:577.3px">14m</span><span style="left:710.3px">16m</span><span style="left:843px">18m</span>
<b class="M" style="left:45px"></b><b class="m" style="left:111.3px"></b><b class="M" style="left:177.7px"></b><b class="m" style="left:244px"></b><b class="M" style="left:310.3px"></b><b class="m" style="left:376.7px"></b><b class="M" style="left:443px"></b><b class="m" style="left:509.3px"></b><b class="M" style="left:575.7px"></b><b class="m" style="left:642px"></b><b class="M" style="left:708.3px"></b><b class="m" style="left:774.7px"></b><b class="M" style="left:841px"></b>
</div>
<svg class="abs" style="left:270px;top:1040px" width="20" height="56" viewBox="270 1040 20 56">
<rect x="277" y="1055" width="1" height="26" fill="#d8d8fa"/>
<path d="M275 1045h10v2.2l-3.6 0.8v40.2l3.6 0.8v2.2h-10v-2.2l3.6-0.8v-40.2l-3.6-0.8z" fill="#555"/>
</svg>

<div class="abs spin" style="left:919px;top:1047px;width:260px;height:44px;">
<div class="txt" style="left:17.4px;">2013-06-14 08:09:19</div>
<div class="btn" style="width:28px;"></div>
</div>
<svg class="abs" style="left:1150px;top:1050px" width="30" height="40" viewBox="1150 1050 30 40"><path d="M1163 1057.2l8 7.6h-16zM1155 1073.6h16l-8 8.2z" fill="#595959"/></svg>

<svg class="abs" style="left:1200px;top:1050px" width="30" height="30" viewBox="1200 1050 30 30"><path d="M1208.6 1059.4l13 7.45l-13 7.45z" fill="#292929"/></svg>

<div class="abs spin" style="left:1251px;top:1047px;width:130px;height:44px;">
<div class="txt" style="right:40.5px;">1.0×</div>
<div class="btn" style="width:28px;"></div>
</div>
<svg class="abs" style="left:1352px;top:1050px" width="30" height="40" viewBox="1352 1050 30 40"><path d="M1364.8 1056.8l8.1 8h-16.2zM1356.7 1073.8h16.2l-8.1 8.2z" fill="#595959"/></svg>

<svg class="abs" style="left:1400px;top:1050px" width="45" height="40" viewBox="1400 1050 45 40">
<rect x="1407" y="1056" width="20" height="14.6" fill="none" stroke="#2a2a2a" stroke-width="2"/>
<path d="M1411.8 1060.6h10.6M1411.8 1065.7h10.6" stroke="#2a2a2a" stroke-width="1.8" fill="none"/>
<path d="M1425.3 1078.3h11.8l-5.9 5.5z" fill="#555"/>
</svg>
</body>
</html>
